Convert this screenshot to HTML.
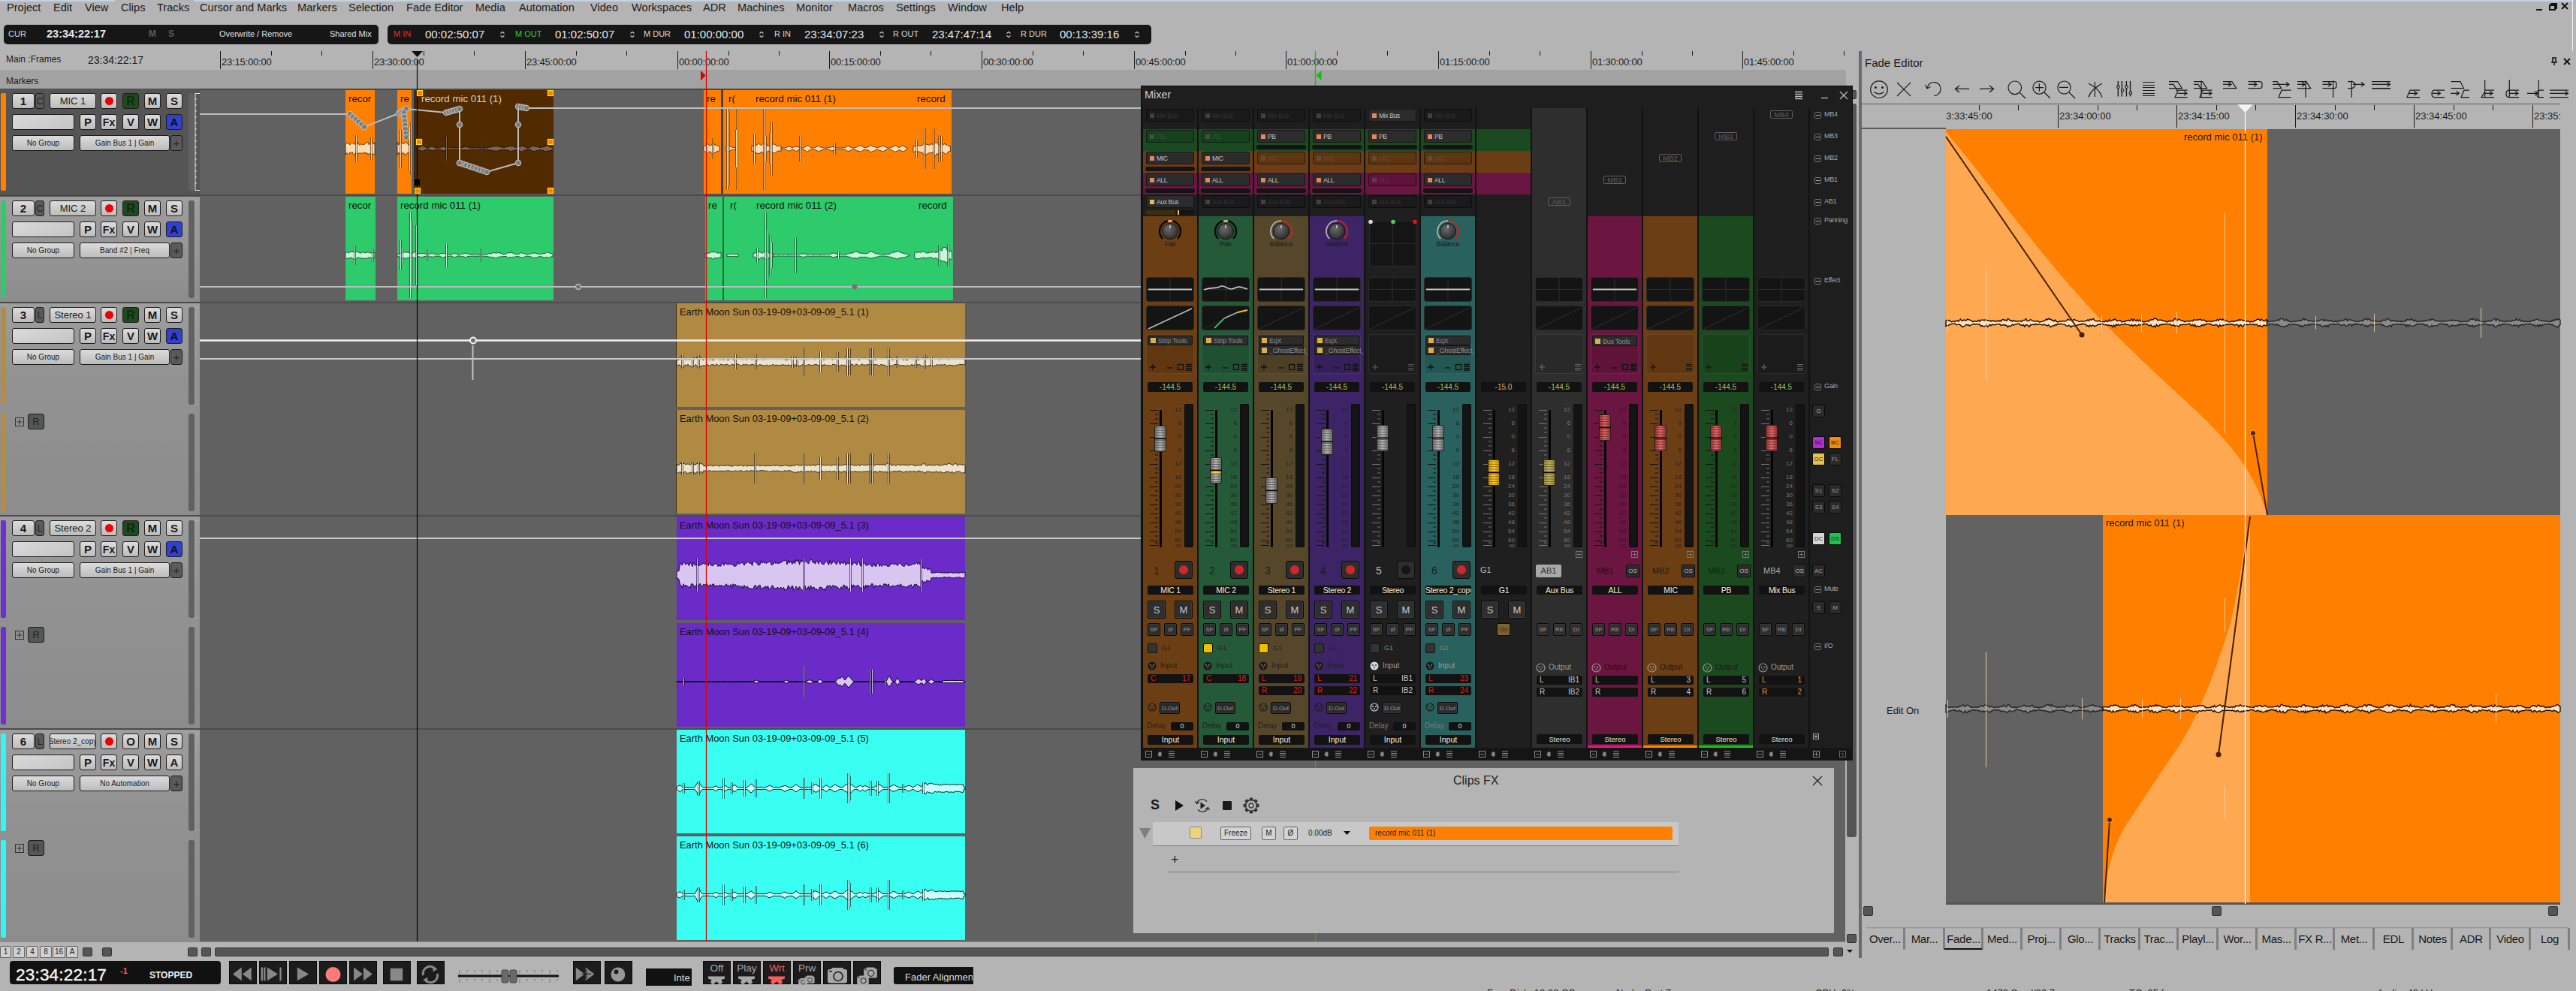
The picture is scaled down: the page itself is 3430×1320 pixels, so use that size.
<!DOCTYPE html><html><head><meta charset="utf-8"><style>
*{margin:0;padding:0;box-sizing:border-box}
html,body{width:3430px;height:1320px;overflow:hidden;background:#b4b4b4;font-family:"Liberation Sans",sans-serif}
#root{position:relative;width:3430px;height:1320px;overflow:hidden;background:#b4b4b4}
.a{position:absolute}
.t{position:absolute;white-space:nowrap;line-height:1}
svg{position:absolute;overflow:visible}
</style></head><body><div id="root"><div class="a " style="left:0px;top:0px;width:3425px;height:2px;background:#c4d2e6"></div>
<div class="a " style="left:3425px;top:0px;width:1px;height:68px;background:#f2f2f2"></div>
<div class="a " style="left:153px;top:0px;width:105px;height:2px;background:#b4b4b4"></div>
<div class="t " style="left:9px;top:3px;font-size:14.6px;color:#1a1a1a">Project</div>
<div class="t " style="left:71px;top:3px;font-size:14.6px;color:#1a1a1a">Edit</div>
<div class="t " style="left:113px;top:3px;font-size:14.6px;color:#1a1a1a">View</div>
<div class="t " style="left:161px;top:3px;font-size:14.6px;color:#1a1a1a">Clips</div>
<div class="t " style="left:209px;top:3px;font-size:14.6px;color:#1a1a1a">Tracks</div>
<div class="t " style="left:266px;top:3px;font-size:14.6px;color:#1a1a1a">Cursor and Marks</div>
<div class="t " style="left:396px;top:3px;font-size:14.6px;color:#1a1a1a">Markers</div>
<div class="t " style="left:464px;top:3px;font-size:14.6px;color:#1a1a1a">Selection</div>
<div class="t " style="left:541px;top:3px;font-size:14.6px;color:#1a1a1a">Fade Editor</div>
<div class="t " style="left:633px;top:3px;font-size:14.6px;color:#1a1a1a">Media</div>
<div class="t " style="left:691px;top:3px;font-size:14.6px;color:#1a1a1a">Automation</div>
<div class="t " style="left:786px;top:3px;font-size:14.6px;color:#1a1a1a">Video</div>
<div class="t " style="left:841px;top:3px;font-size:14.6px;color:#1a1a1a">Workspaces</div>
<div class="t " style="left:936px;top:3px;font-size:14.6px;color:#1a1a1a">ADR</div>
<div class="t " style="left:982px;top:3px;font-size:14.6px;color:#1a1a1a">Machines</div>
<div class="t " style="left:1060px;top:3px;font-size:14.6px;color:#1a1a1a">Monitor</div>
<div class="t " style="left:1129px;top:3px;font-size:14.6px;color:#1a1a1a">Macros</div>
<div class="t " style="left:1193px;top:3px;font-size:14.6px;color:#1a1a1a">Settings</div>
<div class="t " style="left:1262px;top:3px;font-size:14.6px;color:#1a1a1a">Window</div>
<div class="t " style="left:1333px;top:3px;font-size:14.6px;color:#1a1a1a">Help</div>
<svg style="left:3371px;top:0px" width="60" height="20"><g stroke="#111" stroke-width="2" fill="none"><line x1="6" y1="13" x2="14" y2="13"/><rect x="24" y="7" width="7" height="6"/><path d="M26 7 V5 H33 V11 H31"/><path d="M40 4 L48 12 M48 4 L40 12"/></g></svg>
<div class="a " style="left:5px;top:33px;width:499px;height:26px;background:#161616;border-radius:5px"></div>
<div class="t " style="left:11px;top:40px;font-size:11px;color:#d8d8d8">CUR</div>
<div class="t " style="left:62px;top:38px;font-size:14.5px;font-weight:bold;color:#e8e8e8">23:34:22:17</div>
<div class="t " style="left:198px;top:39px;font-size:12px;font-weight:bold;color:#5a5a5a">M</div>
<div class="t " style="left:224px;top:39px;font-size:12px;font-weight:bold;color:#5a5a5a">S</div>
<div class="t " style="left:292px;top:40px;font-size:11px;color:#e0e0e0">Overwrite / Remove</div>
<div class="t " style="left:439px;top:40px;font-size:11px;color:#e0e0e0">Shared Mix</div>
<div class="a " style="left:516px;top:33px;width:1017px;height:26px;background:#161616;border-radius:5px"></div>
<div class="t " style="left:524px;top:40px;font-size:11px;color:#e03030">M IN</div>
<div class="t " style="left:566px;top:38px;font-size:15px;color:#e8e8e8">00:02:50:07</div>
<svg style="left:665px;top:41px" width="8" height="10"><path d="M1.5 3.5 L4 1.5 L6.5 3.5 M1.5 6.5 L4 8.5 L6.5 6.5" stroke="#cfcfcf" stroke-width="1.1" fill="none"/></svg>
<div class="t " style="left:686px;top:40px;font-size:11px;color:#30d030">M OUT</div>
<div class="t " style="left:739px;top:38px;font-size:15px;color:#e8e8e8">01:02:50:07</div>
<svg style="left:838px;top:41px" width="8" height="10"><path d="M1.5 3.5 L4 1.5 L6.5 3.5 M1.5 6.5 L4 8.5 L6.5 6.5" stroke="#cfcfcf" stroke-width="1.1" fill="none"/></svg>
<div class="t " style="left:857px;top:40px;font-size:11px;color:#d8d8d8">M DUR</div>
<div class="t " style="left:911px;top:38px;font-size:15px;color:#e8e8e8">01:00:00:00</div>
<svg style="left:1010px;top:41px" width="8" height="10"><path d="M1.5 3.5 L4 1.5 L6.5 3.5 M1.5 6.5 L4 8.5 L6.5 6.5" stroke="#cfcfcf" stroke-width="1.1" fill="none"/></svg>
<div class="t " style="left:1031px;top:40px;font-size:11px;color:#d8d8d8">R IN</div>
<div class="t " style="left:1071px;top:38px;font-size:15px;color:#e8e8e8">23:34:07:23</div>
<svg style="left:1170px;top:41px" width="8" height="10"><path d="M1.5 3.5 L4 1.5 L6.5 3.5 M1.5 6.5 L4 8.5 L6.5 6.5" stroke="#cfcfcf" stroke-width="1.1" fill="none"/></svg>
<div class="t " style="left:1189px;top:40px;font-size:11px;color:#d8d8d8">R OUT</div>
<div class="t " style="left:1241px;top:38px;font-size:15px;color:#e8e8e8">23:47:47:14</div>
<svg style="left:1339px;top:41px" width="8" height="10"><path d="M1.5 3.5 L4 1.5 L6.5 3.5 M1.5 6.5 L4 8.5 L6.5 6.5" stroke="#cfcfcf" stroke-width="1.1" fill="none"/></svg>
<div class="t " style="left:1359px;top:40px;font-size:11px;color:#d8d8d8">R DUR</div>
<div class="t " style="left:1411px;top:38px;font-size:15px;color:#e8e8e8">00:13:39:16</div>
<svg style="left:1510px;top:41px" width="8" height="10"><path d="M1.5 3.5 L4 1.5 L6.5 3.5 M1.5 6.5 L4 8.5 L6.5 6.5" stroke="#cfcfcf" stroke-width="1.1" fill="none"/></svg>
<div class="t " style="left:8px;top:73px;font-size:12px;color:#1a1a1a">Main :Frames</div>
<div class="t " style="left:117px;top:73px;font-size:14px;color:#1a1a1a">23:34:22:17</div>
<div class="t " style="left:295px;top:76px;font-size:13px;color:#1a1a1a;letter-spacing:-0.2px">23:15:00:00</div>
<div class="t " style="left:498px;top:76px;font-size:13px;color:#1a1a1a;letter-spacing:-0.2px">23:30:00:00</div>
<div class="t " style="left:701px;top:76px;font-size:13px;color:#1a1a1a;letter-spacing:-0.2px">23:45:00:00</div>
<div class="t " style="left:904px;top:76px;font-size:13px;color:#1a1a1a;letter-spacing:-0.2px">00:00:00:00</div>
<div class="t " style="left:1106px;top:76px;font-size:13px;color:#1a1a1a;letter-spacing:-0.2px">00:15:00:00</div>
<div class="t " style="left:1309px;top:76px;font-size:13px;color:#1a1a1a;letter-spacing:-0.2px">00:30:00:00</div>
<div class="t " style="left:1512px;top:76px;font-size:13px;color:#1a1a1a;letter-spacing:-0.2px">00:45:00:00</div>
<div class="t " style="left:1714px;top:76px;font-size:13px;color:#1a1a1a;letter-spacing:-0.2px">01:00:00:00</div>
<div class="t " style="left:1917px;top:76px;font-size:13px;color:#1a1a1a;letter-spacing:-0.2px">01:15:00:00</div>
<div class="t " style="left:2120px;top:76px;font-size:13px;color:#1a1a1a;letter-spacing:-0.2px">01:30:00:00</div>
<div class="t " style="left:2322px;top:76px;font-size:13px;color:#1a1a1a;letter-spacing:-0.2px">01:45:00:00</div>
<svg style="left:0;top:0" width="2470" height="120"><line x1="293.5" y1="68" x2="293.5" y2="92" stroke="#1a1a1a" stroke-width="1"/><line x1="361.5" y1="68" x2="361.5" y2="74" stroke="#1a1a1a" stroke-width="1"/><line x1="428.5" y1="68" x2="428.5" y2="74" stroke="#1a1a1a" stroke-width="1"/><line x1="496.5" y1="68" x2="496.5" y2="92" stroke="#1a1a1a" stroke-width="1"/><line x1="564.5" y1="68" x2="564.5" y2="74" stroke="#1a1a1a" stroke-width="1"/><line x1="631.5" y1="68" x2="631.5" y2="74" stroke="#1a1a1a" stroke-width="1"/><line x1="699.5" y1="68" x2="699.5" y2="92" stroke="#1a1a1a" stroke-width="1"/><line x1="767.5" y1="68" x2="767.5" y2="74" stroke="#1a1a1a" stroke-width="1"/><line x1="834.5" y1="68" x2="834.5" y2="74" stroke="#1a1a1a" stroke-width="1"/><line x1="902.5" y1="68" x2="902.5" y2="92" stroke="#1a1a1a" stroke-width="1"/><line x1="970.5" y1="68" x2="970.5" y2="74" stroke="#1a1a1a" stroke-width="1"/><line x1="1037.5" y1="68" x2="1037.5" y2="74" stroke="#1a1a1a" stroke-width="1"/><line x1="1104.5" y1="68" x2="1104.5" y2="92" stroke="#1a1a1a" stroke-width="1"/><line x1="1172.5" y1="68" x2="1172.5" y2="74" stroke="#1a1a1a" stroke-width="1"/><line x1="1239.5" y1="68" x2="1239.5" y2="74" stroke="#1a1a1a" stroke-width="1"/><line x1="1307.5" y1="68" x2="1307.5" y2="92" stroke="#1a1a1a" stroke-width="1"/><line x1="1375.5" y1="68" x2="1375.5" y2="74" stroke="#1a1a1a" stroke-width="1"/><line x1="1442.5" y1="68" x2="1442.5" y2="74" stroke="#1a1a1a" stroke-width="1"/><line x1="1510.5" y1="68" x2="1510.5" y2="92" stroke="#1a1a1a" stroke-width="1"/><line x1="1578.5" y1="68" x2="1578.5" y2="74" stroke="#1a1a1a" stroke-width="1"/><line x1="1645.5" y1="68" x2="1645.5" y2="74" stroke="#1a1a1a" stroke-width="1"/><line x1="1712.5" y1="68" x2="1712.5" y2="92" stroke="#1a1a1a" stroke-width="1"/><line x1="1780.5" y1="68" x2="1780.5" y2="74" stroke="#1a1a1a" stroke-width="1"/><line x1="1847.5" y1="68" x2="1847.5" y2="74" stroke="#1a1a1a" stroke-width="1"/><line x1="1915.5" y1="68" x2="1915.5" y2="92" stroke="#1a1a1a" stroke-width="1"/><line x1="1983.5" y1="68" x2="1983.5" y2="74" stroke="#1a1a1a" stroke-width="1"/><line x1="2050.5" y1="68" x2="2050.5" y2="74" stroke="#1a1a1a" stroke-width="1"/><line x1="2118.5" y1="68" x2="2118.5" y2="92" stroke="#1a1a1a" stroke-width="1"/><line x1="2186.5" y1="68" x2="2186.5" y2="74" stroke="#1a1a1a" stroke-width="1"/><line x1="2253.5" y1="68" x2="2253.5" y2="74" stroke="#1a1a1a" stroke-width="1"/><line x1="2320.5" y1="68" x2="2320.5" y2="92" stroke="#1a1a1a" stroke-width="1"/><line x1="2388.5" y1="68" x2="2388.5" y2="74" stroke="#1a1a1a" stroke-width="1"/><line x1="2455.5" y1="68" x2="2455.5" y2="74" stroke="#1a1a1a" stroke-width="1"/></svg>
<div class="a " style="left:0px;top:93px;width:2458px;height:25px;background:#a2a2a2"></div>
<div class="t " style="left:8px;top:102px;font-size:12px;color:#1a1a1a">Markers</div>
<svg style="left:547px;top:67px" width="18" height="12"><path d="M1 1 H16 L8.5 9 Z" fill="#111"/></svg>
<svg style="left:930px;top:90px" width="12" height="20"><path d="M3 4 L9.5 10.5 L3 17.5 Z" fill="#d80000"/></svg>
<svg style="left:1750px;top:90px" width="12" height="20"><path d="M9.5 4 L2.5 10.5 L9.5 17 Z" fill="#00c800"/></svg>
<div class="a " style="left:0px;top:118px;width:266px;height:1136px;background:#4e4e4e"></div>
<div class="a " style="left:0px;top:119px;width:266px;height:140px;background:#555555"></div>
<div class="a " style="left:1px;top:124px;width:7px;height:130px;background:#ff8000;border-radius:2px"></div>
<div class="a " style="left:251px;top:124px;width:8px;height:130px;background:#616161;border-radius:3px"></div>
<div class="a" style="left:16px;top:124px;width:30px;height:21px;background:linear-gradient(#dcdcdc,#bcbcbc);border:1.5px solid #1e1e1e;border-radius:3px;;display:flex;align-items:center;justify-content:center;font-size:15px;font-weight:bold;color:#1a1a1a;white-space:nowrap;overflow:hidden">1</div>
<div class="a" style="left:47px;top:124px;width:12px;height:21px;background:#5a5a5a;border:1.5px solid #1e1e1e;border-radius:3px;font-size:12px;color:#222;display:flex;align-items:center;justify-content:center">C</div>
<div class="a" style="left:66px;top:124px;width:62px;height:21px;background:linear-gradient(#dcdcdc,#bcbcbc);border:1.5px solid #1e1e1e;border-radius:3px;;display:flex;align-items:center;justify-content:center;font-size:13px;font-weight:normal;color:#1a1a1a;white-space:nowrap;overflow:hidden">MIC 1</div>
<div class="a" style="left:134px;top:124px;width:22px;height:21px;background:linear-gradient(#dcdcdc,#bcbcbc);border:1.5px solid #1e1e1e;border-radius:3px;;display:flex;align-items:center;justify-content:center;font-size:13px;font-weight:normal;color:#1a1a1a;white-space:nowrap;overflow:hidden"><div style="width:11px;height:11px;border-radius:50%;background:#f00000"></div></div>
<div class="a" style="left:163px;top:124px;width:22px;height:21px;background:#1e4a1e;border:1.5px solid #1e1e1e;border-radius:3px;font-size:16px;font-weight:bold;color:#0f2a0f;display:flex;align-items:center;justify-content:center">R</div>
<div class="a" style="left:192px;top:124px;width:22px;height:21px;background:linear-gradient(#dcdcdc,#bcbcbc);border:1.5px solid #1e1e1e;border-radius:3px;;display:flex;align-items:center;justify-content:center;font-size:15px;font-weight:bold;color:#1a1a1a;white-space:nowrap;overflow:hidden">M</div>
<div class="a" style="left:221px;top:124px;width:22px;height:21px;background:linear-gradient(#dcdcdc,#bcbcbc);border:1.5px solid #1e1e1e;border-radius:3px;;display:flex;align-items:center;justify-content:center;font-size:15px;font-weight:bold;color:#1a1a1a;white-space:nowrap;overflow:hidden">S</div>
<div class="a" style="left:16px;top:152px;width:83px;height:21px;background:linear-gradient(#dcdcdc,#bcbcbc);border:1.5px solid #1e1e1e;border-radius:3px;background:linear-gradient(160deg,#dadada,#c4c4c4);display:flex;align-items:center;justify-content:center;font-size:13px;font-weight:normal;color:#1a1a1a;white-space:nowrap;overflow:hidden"></div>
<div class="a" style="left:106px;top:152px;width:22px;height:21px;background:linear-gradient(#dcdcdc,#bcbcbc);border:1.5px solid #1e1e1e;border-radius:3px;;display:flex;align-items:center;justify-content:center;font-size:15px;font-weight:bold;color:#1a1a1a;white-space:nowrap;overflow:hidden">P</div>
<div class="a" style="left:134px;top:152px;width:22px;height:21px;background:linear-gradient(#dcdcdc,#bcbcbc);border:1.5px solid #1e1e1e;border-radius:3px;;display:flex;align-items:center;justify-content:center;font-size:14px;font-weight:bold;color:#1a1a1a;white-space:nowrap;overflow:hidden">Fx</div>
<div class="a" style="left:163px;top:152px;width:22px;height:21px;background:linear-gradient(#dcdcdc,#bcbcbc);border:1.5px solid #1e1e1e;border-radius:3px;;display:flex;align-items:center;justify-content:center;font-size:15px;font-weight:bold;color:#1a1a1a;white-space:nowrap;overflow:hidden">V</div>
<div class="a" style="left:192px;top:152px;width:22px;height:21px;background:linear-gradient(#dcdcdc,#bcbcbc);border:1.5px solid #1e1e1e;border-radius:3px;;display:flex;align-items:center;justify-content:center;font-size:15px;font-weight:bold;color:#1a1a1a;white-space:nowrap;overflow:hidden">W</div>
<div class="a" style="left:221px;top:152px;width:22px;height:21px;background:#3040d0;border:1.5px solid #1e1e1e;border-radius:3px;font-size:15px;font-weight:bold;color:#111;display:flex;align-items:center;justify-content:center">A</div>
<div class="a" style="left:16px;top:180px;width:83px;height:21px;background:linear-gradient(#dcdcdc,#bcbcbc);border:1.5px solid #1e1e1e;border-radius:3px;;display:flex;align-items:center;justify-content:center;font-size:10px;font-weight:normal;color:#1a1a1a;white-space:nowrap;overflow:hidden">No Group</div>
<div class="a" style="left:106px;top:180px;width:120px;height:21px;background:linear-gradient(#dcdcdc,#bcbcbc);border:1.5px solid #1e1e1e;border-radius:3px;;display:flex;align-items:center;justify-content:center;font-size:10px;font-weight:normal;color:#1a1a1a;white-space:nowrap;overflow:hidden">Gain Bus 1 | Gain</div>
<div class="a" style="left:227px;top:180px;width:16px;height:21px;background:#5a5a5a;border:1.5px solid #1e1e1e;border-radius:3px;font-size:15px;color:#222;display:flex;align-items:center;justify-content:center">+</div>
<div class="a " style="left:0px;top:259px;width:266px;height:2px;background:#4a4a4a"></div>
<div class="a " style="left:0px;top:262px;width:266px;height:140px;background:linear-gradient(#9e9e9e 0px,#929292 100px,#8c8c8c 100%)"></div>
<div class="a " style="left:1px;top:267px;width:7px;height:130px;background:#2ecb6a;border-radius:2px"></div>
<div class="a " style="left:251px;top:267px;width:8px;height:130px;background:#616161;border-radius:3px"></div>
<div class="a" style="left:16px;top:267px;width:30px;height:21px;background:linear-gradient(#dcdcdc,#bcbcbc);border:1.5px solid #1e1e1e;border-radius:3px;;display:flex;align-items:center;justify-content:center;font-size:15px;font-weight:bold;color:#1a1a1a;white-space:nowrap;overflow:hidden">2</div>
<div class="a" style="left:47px;top:267px;width:12px;height:21px;background:#5a5a5a;border:1.5px solid #1e1e1e;border-radius:3px;font-size:12px;color:#222;display:flex;align-items:center;justify-content:center">C</div>
<div class="a" style="left:66px;top:267px;width:62px;height:21px;background:linear-gradient(#dcdcdc,#bcbcbc);border:1.5px solid #1e1e1e;border-radius:3px;;display:flex;align-items:center;justify-content:center;font-size:13px;font-weight:normal;color:#1a1a1a;white-space:nowrap;overflow:hidden">MIC 2</div>
<div class="a" style="left:134px;top:267px;width:22px;height:21px;background:linear-gradient(#dcdcdc,#bcbcbc);border:1.5px solid #1e1e1e;border-radius:3px;;display:flex;align-items:center;justify-content:center;font-size:13px;font-weight:normal;color:#1a1a1a;white-space:nowrap;overflow:hidden"><div style="width:11px;height:11px;border-radius:50%;background:#f00000"></div></div>
<div class="a" style="left:163px;top:267px;width:22px;height:21px;background:#1e4a1e;border:1.5px solid #1e1e1e;border-radius:3px;font-size:16px;font-weight:bold;color:#0f2a0f;display:flex;align-items:center;justify-content:center">R</div>
<div class="a" style="left:192px;top:267px;width:22px;height:21px;background:linear-gradient(#dcdcdc,#bcbcbc);border:1.5px solid #1e1e1e;border-radius:3px;;display:flex;align-items:center;justify-content:center;font-size:15px;font-weight:bold;color:#1a1a1a;white-space:nowrap;overflow:hidden">M</div>
<div class="a" style="left:221px;top:267px;width:22px;height:21px;background:linear-gradient(#dcdcdc,#bcbcbc);border:1.5px solid #1e1e1e;border-radius:3px;;display:flex;align-items:center;justify-content:center;font-size:15px;font-weight:bold;color:#1a1a1a;white-space:nowrap;overflow:hidden">S</div>
<div class="a" style="left:16px;top:295px;width:83px;height:21px;background:linear-gradient(#dcdcdc,#bcbcbc);border:1.5px solid #1e1e1e;border-radius:3px;background:linear-gradient(160deg,#dadada,#c4c4c4);display:flex;align-items:center;justify-content:center;font-size:13px;font-weight:normal;color:#1a1a1a;white-space:nowrap;overflow:hidden"></div>
<div class="a" style="left:106px;top:295px;width:22px;height:21px;background:linear-gradient(#dcdcdc,#bcbcbc);border:1.5px solid #1e1e1e;border-radius:3px;;display:flex;align-items:center;justify-content:center;font-size:15px;font-weight:bold;color:#1a1a1a;white-space:nowrap;overflow:hidden">P</div>
<div class="a" style="left:134px;top:295px;width:22px;height:21px;background:linear-gradient(#dcdcdc,#bcbcbc);border:1.5px solid #1e1e1e;border-radius:3px;;display:flex;align-items:center;justify-content:center;font-size:14px;font-weight:bold;color:#1a1a1a;white-space:nowrap;overflow:hidden">Fx</div>
<div class="a" style="left:163px;top:295px;width:22px;height:21px;background:linear-gradient(#dcdcdc,#bcbcbc);border:1.5px solid #1e1e1e;border-radius:3px;;display:flex;align-items:center;justify-content:center;font-size:15px;font-weight:bold;color:#1a1a1a;white-space:nowrap;overflow:hidden">V</div>
<div class="a" style="left:192px;top:295px;width:22px;height:21px;background:linear-gradient(#dcdcdc,#bcbcbc);border:1.5px solid #1e1e1e;border-radius:3px;;display:flex;align-items:center;justify-content:center;font-size:15px;font-weight:bold;color:#1a1a1a;white-space:nowrap;overflow:hidden">W</div>
<div class="a" style="left:221px;top:295px;width:22px;height:21px;background:#3040d0;border:1.5px solid #1e1e1e;border-radius:3px;font-size:15px;font-weight:bold;color:#111;display:flex;align-items:center;justify-content:center">A</div>
<div class="a" style="left:16px;top:323px;width:83px;height:21px;background:linear-gradient(#dcdcdc,#bcbcbc);border:1.5px solid #1e1e1e;border-radius:3px;;display:flex;align-items:center;justify-content:center;font-size:10px;font-weight:normal;color:#1a1a1a;white-space:nowrap;overflow:hidden">No Group</div>
<div class="a" style="left:106px;top:323px;width:120px;height:21px;background:linear-gradient(#dcdcdc,#bcbcbc);border:1.5px solid #1e1e1e;border-radius:3px;;display:flex;align-items:center;justify-content:center;font-size:10px;font-weight:normal;color:#1a1a1a;white-space:nowrap;overflow:hidden">Band #2 | Freq</div>
<div class="a" style="left:227px;top:323px;width:16px;height:21px;background:#5a5a5a;border:1.5px solid #1e1e1e;border-radius:3px;font-size:15px;color:#222;display:flex;align-items:center;justify-content:center">+</div>
<div class="a " style="left:0px;top:402px;width:266px;height:2px;background:#4a4a4a"></div>
<div class="a " style="left:0px;top:404px;width:266px;height:282px;background:linear-gradient(#9e9e9e 0px,#929292 100px,#8c8c8c 100%)"></div>
<div class="a " style="left:1px;top:409px;width:7px;height:130px;background:#b58c45;border-radius:2px"></div>
<div class="a " style="left:251px;top:409px;width:8px;height:130px;background:#616161;border-radius:3px"></div>
<div class="a " style="left:1px;top:551px;width:7px;height:130px;background:#b58c45;border-radius:2px"></div>
<div class="a " style="left:251px;top:551px;width:8px;height:130px;background:#616161;border-radius:3px"></div>
<div class="a" style="left:16px;top:409px;width:30px;height:21px;background:linear-gradient(#dcdcdc,#bcbcbc);border:1.5px solid #1e1e1e;border-radius:3px;;display:flex;align-items:center;justify-content:center;font-size:15px;font-weight:bold;color:#1a1a1a;white-space:nowrap;overflow:hidden">3</div>
<div class="a" style="left:47px;top:409px;width:12px;height:21px;background:#5a5a5a;border:1.5px solid #1e1e1e;border-radius:3px;font-size:12px;color:#222;display:flex;align-items:center;justify-content:center">L</div>
<div class="a" style="left:66px;top:409px;width:62px;height:21px;background:linear-gradient(#dcdcdc,#bcbcbc);border:1.5px solid #1e1e1e;border-radius:3px;;display:flex;align-items:center;justify-content:center;font-size:13px;font-weight:normal;color:#1a1a1a;white-space:nowrap;overflow:hidden">Stereo 1</div>
<div class="a" style="left:134px;top:409px;width:22px;height:21px;background:linear-gradient(#dcdcdc,#bcbcbc);border:1.5px solid #1e1e1e;border-radius:3px;;display:flex;align-items:center;justify-content:center;font-size:13px;font-weight:normal;color:#1a1a1a;white-space:nowrap;overflow:hidden"><div style="width:11px;height:11px;border-radius:50%;background:#f00000"></div></div>
<div class="a" style="left:163px;top:409px;width:22px;height:21px;background:#1e4a1e;border:1.5px solid #1e1e1e;border-radius:3px;font-size:16px;font-weight:bold;color:#0f2a0f;display:flex;align-items:center;justify-content:center">R</div>
<div class="a" style="left:192px;top:409px;width:22px;height:21px;background:linear-gradient(#dcdcdc,#bcbcbc);border:1.5px solid #1e1e1e;border-radius:3px;;display:flex;align-items:center;justify-content:center;font-size:15px;font-weight:bold;color:#1a1a1a;white-space:nowrap;overflow:hidden">M</div>
<div class="a" style="left:221px;top:409px;width:22px;height:21px;background:linear-gradient(#dcdcdc,#bcbcbc);border:1.5px solid #1e1e1e;border-radius:3px;;display:flex;align-items:center;justify-content:center;font-size:15px;font-weight:bold;color:#1a1a1a;white-space:nowrap;overflow:hidden">S</div>
<div class="a" style="left:16px;top:437px;width:83px;height:21px;background:linear-gradient(#dcdcdc,#bcbcbc);border:1.5px solid #1e1e1e;border-radius:3px;background:linear-gradient(160deg,#dadada,#c4c4c4);display:flex;align-items:center;justify-content:center;font-size:13px;font-weight:normal;color:#1a1a1a;white-space:nowrap;overflow:hidden"></div>
<div class="a" style="left:106px;top:437px;width:22px;height:21px;background:linear-gradient(#dcdcdc,#bcbcbc);border:1.5px solid #1e1e1e;border-radius:3px;;display:flex;align-items:center;justify-content:center;font-size:15px;font-weight:bold;color:#1a1a1a;white-space:nowrap;overflow:hidden">P</div>
<div class="a" style="left:134px;top:437px;width:22px;height:21px;background:linear-gradient(#dcdcdc,#bcbcbc);border:1.5px solid #1e1e1e;border-radius:3px;;display:flex;align-items:center;justify-content:center;font-size:14px;font-weight:bold;color:#1a1a1a;white-space:nowrap;overflow:hidden">Fx</div>
<div class="a" style="left:163px;top:437px;width:22px;height:21px;background:linear-gradient(#dcdcdc,#bcbcbc);border:1.5px solid #1e1e1e;border-radius:3px;;display:flex;align-items:center;justify-content:center;font-size:15px;font-weight:bold;color:#1a1a1a;white-space:nowrap;overflow:hidden">V</div>
<div class="a" style="left:192px;top:437px;width:22px;height:21px;background:linear-gradient(#dcdcdc,#bcbcbc);border:1.5px solid #1e1e1e;border-radius:3px;;display:flex;align-items:center;justify-content:center;font-size:15px;font-weight:bold;color:#1a1a1a;white-space:nowrap;overflow:hidden">W</div>
<div class="a" style="left:221px;top:437px;width:22px;height:21px;background:#3040d0;border:1.5px solid #1e1e1e;border-radius:3px;font-size:15px;font-weight:bold;color:#111;display:flex;align-items:center;justify-content:center">A</div>
<div class="a" style="left:16px;top:465px;width:83px;height:21px;background:linear-gradient(#dcdcdc,#bcbcbc);border:1.5px solid #1e1e1e;border-radius:3px;;display:flex;align-items:center;justify-content:center;font-size:10px;font-weight:normal;color:#1a1a1a;white-space:nowrap;overflow:hidden">No Group</div>
<div class="a" style="left:106px;top:465px;width:120px;height:21px;background:linear-gradient(#dcdcdc,#bcbcbc);border:1.5px solid #1e1e1e;border-radius:3px;;display:flex;align-items:center;justify-content:center;font-size:10px;font-weight:normal;color:#1a1a1a;white-space:nowrap;overflow:hidden">Gain Bus 1 | Gain</div>
<div class="a" style="left:227px;top:465px;width:16px;height:21px;background:#5a5a5a;border:1.5px solid #1e1e1e;border-radius:3px;font-size:15px;color:#222;display:flex;align-items:center;justify-content:center">+</div>
<svg style="left:20px;top:556px" width="12" height="12"><rect x="0.5" y="0.5" width="11" height="11" fill="none" stroke="#333"/><path d="M6 2.5 V9.5 M2.5 6 H9.5" stroke="#333"/></svg>
<div class="a" style="left:37px;top:551px;width:22px;height:21px;background:#555;border:1.5px solid #1e1e1e;border-radius:3px;font-size:13px;color:#222;display:flex;align-items:center;justify-content:center">R</div>
<div class="a " style="left:0px;top:686px;width:266px;height:2px;background:#4a4a4a"></div>
<div class="a " style="left:0px;top:688px;width:266px;height:282px;background:linear-gradient(#9e9e9e 0px,#929292 100px,#8c8c8c 100%)"></div>
<div class="a " style="left:1px;top:693px;width:7px;height:130px;background:#7030d0;border-radius:2px"></div>
<div class="a " style="left:251px;top:693px;width:8px;height:130px;background:#616161;border-radius:3px"></div>
<div class="a " style="left:1px;top:835px;width:7px;height:130px;background:#7030d0;border-radius:2px"></div>
<div class="a " style="left:251px;top:835px;width:8px;height:130px;background:#616161;border-radius:3px"></div>
<div class="a" style="left:16px;top:693px;width:30px;height:21px;background:linear-gradient(#dcdcdc,#bcbcbc);border:1.5px solid #1e1e1e;border-radius:3px;;display:flex;align-items:center;justify-content:center;font-size:15px;font-weight:bold;color:#1a1a1a;white-space:nowrap;overflow:hidden">4</div>
<div class="a" style="left:47px;top:693px;width:12px;height:21px;background:#5a5a5a;border:1.5px solid #1e1e1e;border-radius:3px;font-size:12px;color:#222;display:flex;align-items:center;justify-content:center">L</div>
<div class="a" style="left:66px;top:693px;width:62px;height:21px;background:linear-gradient(#dcdcdc,#bcbcbc);border:1.5px solid #1e1e1e;border-radius:3px;;display:flex;align-items:center;justify-content:center;font-size:13px;font-weight:normal;color:#1a1a1a;white-space:nowrap;overflow:hidden">Stereo 2</div>
<div class="a" style="left:134px;top:693px;width:22px;height:21px;background:linear-gradient(#dcdcdc,#bcbcbc);border:1.5px solid #1e1e1e;border-radius:3px;;display:flex;align-items:center;justify-content:center;font-size:13px;font-weight:normal;color:#1a1a1a;white-space:nowrap;overflow:hidden"><div style="width:11px;height:11px;border-radius:50%;background:#f00000"></div></div>
<div class="a" style="left:163px;top:693px;width:22px;height:21px;background:#1e4a1e;border:1.5px solid #1e1e1e;border-radius:3px;font-size:16px;font-weight:bold;color:#0f2a0f;display:flex;align-items:center;justify-content:center">R</div>
<div class="a" style="left:192px;top:693px;width:22px;height:21px;background:linear-gradient(#dcdcdc,#bcbcbc);border:1.5px solid #1e1e1e;border-radius:3px;;display:flex;align-items:center;justify-content:center;font-size:15px;font-weight:bold;color:#1a1a1a;white-space:nowrap;overflow:hidden">M</div>
<div class="a" style="left:221px;top:693px;width:22px;height:21px;background:linear-gradient(#dcdcdc,#bcbcbc);border:1.5px solid #1e1e1e;border-radius:3px;;display:flex;align-items:center;justify-content:center;font-size:15px;font-weight:bold;color:#1a1a1a;white-space:nowrap;overflow:hidden">S</div>
<div class="a" style="left:16px;top:721px;width:83px;height:21px;background:linear-gradient(#dcdcdc,#bcbcbc);border:1.5px solid #1e1e1e;border-radius:3px;background:linear-gradient(160deg,#dadada,#c4c4c4);display:flex;align-items:center;justify-content:center;font-size:13px;font-weight:normal;color:#1a1a1a;white-space:nowrap;overflow:hidden"></div>
<div class="a" style="left:106px;top:721px;width:22px;height:21px;background:linear-gradient(#dcdcdc,#bcbcbc);border:1.5px solid #1e1e1e;border-radius:3px;;display:flex;align-items:center;justify-content:center;font-size:15px;font-weight:bold;color:#1a1a1a;white-space:nowrap;overflow:hidden">P</div>
<div class="a" style="left:134px;top:721px;width:22px;height:21px;background:linear-gradient(#dcdcdc,#bcbcbc);border:1.5px solid #1e1e1e;border-radius:3px;;display:flex;align-items:center;justify-content:center;font-size:14px;font-weight:bold;color:#1a1a1a;white-space:nowrap;overflow:hidden">Fx</div>
<div class="a" style="left:163px;top:721px;width:22px;height:21px;background:linear-gradient(#dcdcdc,#bcbcbc);border:1.5px solid #1e1e1e;border-radius:3px;;display:flex;align-items:center;justify-content:center;font-size:15px;font-weight:bold;color:#1a1a1a;white-space:nowrap;overflow:hidden">V</div>
<div class="a" style="left:192px;top:721px;width:22px;height:21px;background:linear-gradient(#dcdcdc,#bcbcbc);border:1.5px solid #1e1e1e;border-radius:3px;;display:flex;align-items:center;justify-content:center;font-size:15px;font-weight:bold;color:#1a1a1a;white-space:nowrap;overflow:hidden">W</div>
<div class="a" style="left:221px;top:721px;width:22px;height:21px;background:#3040d0;border:1.5px solid #1e1e1e;border-radius:3px;font-size:15px;font-weight:bold;color:#111;display:flex;align-items:center;justify-content:center">A</div>
<div class="a" style="left:16px;top:749px;width:83px;height:21px;background:linear-gradient(#dcdcdc,#bcbcbc);border:1.5px solid #1e1e1e;border-radius:3px;;display:flex;align-items:center;justify-content:center;font-size:10px;font-weight:normal;color:#1a1a1a;white-space:nowrap;overflow:hidden">No Group</div>
<div class="a" style="left:106px;top:749px;width:120px;height:21px;background:linear-gradient(#dcdcdc,#bcbcbc);border:1.5px solid #1e1e1e;border-radius:3px;;display:flex;align-items:center;justify-content:center;font-size:10px;font-weight:normal;color:#1a1a1a;white-space:nowrap;overflow:hidden">Gain Bus 1 | Gain</div>
<div class="a" style="left:227px;top:749px;width:16px;height:21px;background:#5a5a5a;border:1.5px solid #1e1e1e;border-radius:3px;font-size:15px;color:#222;display:flex;align-items:center;justify-content:center">+</div>
<svg style="left:20px;top:840px" width="12" height="12"><rect x="0.5" y="0.5" width="11" height="11" fill="none" stroke="#333"/><path d="M6 2.5 V9.5 M2.5 6 H9.5" stroke="#333"/></svg>
<div class="a" style="left:37px;top:835px;width:22px;height:21px;background:#555;border:1.5px solid #1e1e1e;border-radius:3px;font-size:13px;color:#222;display:flex;align-items:center;justify-content:center">R</div>
<div class="a " style="left:0px;top:970px;width:266px;height:2px;background:#4a4a4a"></div>
<div class="a " style="left:0px;top:972px;width:266px;height:282px;background:linear-gradient(#9e9e9e 0px,#929292 100px,#8c8c8c 100%)"></div>
<div class="a " style="left:1px;top:977px;width:7px;height:130px;background:#33f5f5;border-radius:2px"></div>
<div class="a " style="left:251px;top:977px;width:8px;height:130px;background:#616161;border-radius:3px"></div>
<div class="a " style="left:1px;top:1119px;width:7px;height:130px;background:#33f5f5;border-radius:2px"></div>
<div class="a " style="left:251px;top:1119px;width:8px;height:130px;background:#616161;border-radius:3px"></div>
<div class="a" style="left:16px;top:977px;width:30px;height:21px;background:linear-gradient(#dcdcdc,#bcbcbc);border:1.5px solid #1e1e1e;border-radius:3px;;display:flex;align-items:center;justify-content:center;font-size:15px;font-weight:bold;color:#1a1a1a;white-space:nowrap;overflow:hidden">6</div>
<div class="a" style="left:47px;top:977px;width:12px;height:21px;background:#5a5a5a;border:1.5px solid #1e1e1e;border-radius:3px;font-size:12px;color:#222;display:flex;align-items:center;justify-content:center">L</div>
<div class="a" style="left:66px;top:977px;width:62px;height:21px;background:linear-gradient(#dcdcdc,#bcbcbc);border:1.5px solid #1e1e1e;border-radius:3px;;display:flex;align-items:center;justify-content:center;font-size:10px;font-weight:normal;color:#1a1a1a;white-space:nowrap;overflow:hidden">Stereo 2_copy</div>
<div class="a" style="left:134px;top:977px;width:22px;height:21px;background:linear-gradient(#dcdcdc,#bcbcbc);border:1.5px solid #1e1e1e;border-radius:3px;;display:flex;align-items:center;justify-content:center;font-size:13px;font-weight:normal;color:#1a1a1a;white-space:nowrap;overflow:hidden"><div style="width:11px;height:11px;border-radius:50%;background:#f00000"></div></div>
<div class="a" style="left:163px;top:977px;width:22px;height:21px;background:linear-gradient(#dcdcdc,#bcbcbc);border:1.5px solid #1e1e1e;border-radius:3px;;display:flex;align-items:center;justify-content:center;font-size:15px;font-weight:bold;color:#1a1a1a;white-space:nowrap;overflow:hidden">O</div>
<div class="a" style="left:192px;top:977px;width:22px;height:21px;background:linear-gradient(#dcdcdc,#bcbcbc);border:1.5px solid #1e1e1e;border-radius:3px;;display:flex;align-items:center;justify-content:center;font-size:15px;font-weight:bold;color:#1a1a1a;white-space:nowrap;overflow:hidden">M</div>
<div class="a" style="left:221px;top:977px;width:22px;height:21px;background:linear-gradient(#dcdcdc,#bcbcbc);border:1.5px solid #1e1e1e;border-radius:3px;;display:flex;align-items:center;justify-content:center;font-size:15px;font-weight:bold;color:#1a1a1a;white-space:nowrap;overflow:hidden">S</div>
<div class="a" style="left:16px;top:1005px;width:83px;height:21px;background:linear-gradient(#dcdcdc,#bcbcbc);border:1.5px solid #1e1e1e;border-radius:3px;background:linear-gradient(160deg,#dadada,#c4c4c4);display:flex;align-items:center;justify-content:center;font-size:13px;font-weight:normal;color:#1a1a1a;white-space:nowrap;overflow:hidden"></div>
<div class="a" style="left:106px;top:1005px;width:22px;height:21px;background:linear-gradient(#dcdcdc,#bcbcbc);border:1.5px solid #1e1e1e;border-radius:3px;;display:flex;align-items:center;justify-content:center;font-size:15px;font-weight:bold;color:#1a1a1a;white-space:nowrap;overflow:hidden">P</div>
<div class="a" style="left:134px;top:1005px;width:22px;height:21px;background:linear-gradient(#dcdcdc,#bcbcbc);border:1.5px solid #1e1e1e;border-radius:3px;;display:flex;align-items:center;justify-content:center;font-size:14px;font-weight:bold;color:#1a1a1a;white-space:nowrap;overflow:hidden">Fx</div>
<div class="a" style="left:163px;top:1005px;width:22px;height:21px;background:linear-gradient(#dcdcdc,#bcbcbc);border:1.5px solid #1e1e1e;border-radius:3px;;display:flex;align-items:center;justify-content:center;font-size:15px;font-weight:bold;color:#1a1a1a;white-space:nowrap;overflow:hidden">V</div>
<div class="a" style="left:192px;top:1005px;width:22px;height:21px;background:linear-gradient(#dcdcdc,#bcbcbc);border:1.5px solid #1e1e1e;border-radius:3px;;display:flex;align-items:center;justify-content:center;font-size:15px;font-weight:bold;color:#1a1a1a;white-space:nowrap;overflow:hidden">W</div>
<div class="a" style="left:221px;top:1005px;width:22px;height:21px;background:linear-gradient(#dcdcdc,#bcbcbc);border:1.5px solid #1e1e1e;border-radius:3px;;display:flex;align-items:center;justify-content:center;font-size:15px;font-weight:bold;color:#1a1a1a;white-space:nowrap;overflow:hidden">A</div>
<div class="a" style="left:16px;top:1033px;width:83px;height:21px;background:linear-gradient(#dcdcdc,#bcbcbc);border:1.5px solid #1e1e1e;border-radius:3px;;display:flex;align-items:center;justify-content:center;font-size:10px;font-weight:normal;color:#1a1a1a;white-space:nowrap;overflow:hidden">No Group</div>
<div class="a" style="left:106px;top:1033px;width:120px;height:21px;background:linear-gradient(#dcdcdc,#bcbcbc);border:1.5px solid #1e1e1e;border-radius:3px;;display:flex;align-items:center;justify-content:center;font-size:10px;font-weight:normal;color:#1a1a1a;white-space:nowrap;overflow:hidden">No Automation</div>
<div class="a" style="left:227px;top:1033px;width:16px;height:21px;background:#5a5a5a;border:1.5px solid #1e1e1e;border-radius:3px;font-size:15px;color:#222;display:flex;align-items:center;justify-content:center">+</div>
<svg style="left:20px;top:1124px" width="12" height="12"><rect x="0.5" y="0.5" width="11" height="11" fill="none" stroke="#333"/><path d="M6 2.5 V9.5 M2.5 6 H9.5" stroke="#333"/></svg>
<div class="a" style="left:37px;top:1119px;width:22px;height:21px;background:#555;border:1.5px solid #1e1e1e;border-radius:3px;font-size:13px;color:#222;display:flex;align-items:center;justify-content:center">R</div>
<div class="a " style="left:0px;top:1254px;width:266px;height:2px;background:#4a4a4a"></div>
<svg style="left:259px;top:124px" width="8" height="130"><path d="M1 0 V130 M1 0.5 H7 M1 129.5 H7" stroke="#e8e8e8" fill="none"/><line x1="1" y1="8" x2="3" y2="8" stroke="#e8e8e8"/><line x1="1" y1="16" x2="3" y2="16" stroke="#e8e8e8"/><line x1="1" y1="24" x2="3" y2="24" stroke="#e8e8e8"/><line x1="1" y1="32" x2="3" y2="32" stroke="#e8e8e8"/><line x1="1" y1="40" x2="3" y2="40" stroke="#e8e8e8"/><line x1="1" y1="48" x2="3" y2="48" stroke="#e8e8e8"/><line x1="1" y1="56" x2="3" y2="56" stroke="#e8e8e8"/><line x1="1" y1="64" x2="3" y2="64" stroke="#e8e8e8"/><line x1="1" y1="72" x2="3" y2="72" stroke="#e8e8e8"/><line x1="1" y1="80" x2="3" y2="80" stroke="#e8e8e8"/><line x1="1" y1="88" x2="3" y2="88" stroke="#e8e8e8"/><line x1="1" y1="96" x2="3" y2="96" stroke="#e8e8e8"/><line x1="1" y1="104" x2="3" y2="104" stroke="#e8e8e8"/><line x1="1" y1="112" x2="3" y2="112" stroke="#e8e8e8"/><line x1="1" y1="120" x2="3" y2="120" stroke="#e8e8e8"/></svg>
<svg style="left:259px;top:267px" width="8" height="130"><path d="M1 0 V130 M1 0.5 H7 M1 129.5 H7" stroke="rgba(255,255,255,0.12)" fill="none"/><line x1="1" y1="8" x2="3" y2="8" stroke="rgba(255,255,255,0.12)"/><line x1="1" y1="16" x2="3" y2="16" stroke="rgba(255,255,255,0.12)"/><line x1="1" y1="24" x2="3" y2="24" stroke="rgba(255,255,255,0.12)"/><line x1="1" y1="32" x2="3" y2="32" stroke="rgba(255,255,255,0.12)"/><line x1="1" y1="40" x2="3" y2="40" stroke="rgba(255,255,255,0.12)"/><line x1="1" y1="48" x2="3" y2="48" stroke="rgba(255,255,255,0.12)"/><line x1="1" y1="56" x2="3" y2="56" stroke="rgba(255,255,255,0.12)"/><line x1="1" y1="64" x2="3" y2="64" stroke="rgba(255,255,255,0.12)"/><line x1="1" y1="72" x2="3" y2="72" stroke="rgba(255,255,255,0.12)"/><line x1="1" y1="80" x2="3" y2="80" stroke="rgba(255,255,255,0.12)"/><line x1="1" y1="88" x2="3" y2="88" stroke="rgba(255,255,255,0.12)"/><line x1="1" y1="96" x2="3" y2="96" stroke="rgba(255,255,255,0.12)"/><line x1="1" y1="104" x2="3" y2="104" stroke="rgba(255,255,255,0.12)"/><line x1="1" y1="112" x2="3" y2="112" stroke="rgba(255,255,255,0.12)"/><line x1="1" y1="120" x2="3" y2="120" stroke="rgba(255,255,255,0.12)"/></svg>
<svg style="left:259px;top:409px" width="8" height="130"><path d="M1 0 V130 M1 0.5 H7 M1 129.5 H7" stroke="rgba(255,255,255,0.12)" fill="none"/><line x1="1" y1="8" x2="3" y2="8" stroke="rgba(255,255,255,0.12)"/><line x1="1" y1="16" x2="3" y2="16" stroke="rgba(255,255,255,0.12)"/><line x1="1" y1="24" x2="3" y2="24" stroke="rgba(255,255,255,0.12)"/><line x1="1" y1="32" x2="3" y2="32" stroke="rgba(255,255,255,0.12)"/><line x1="1" y1="40" x2="3" y2="40" stroke="rgba(255,255,255,0.12)"/><line x1="1" y1="48" x2="3" y2="48" stroke="rgba(255,255,255,0.12)"/><line x1="1" y1="56" x2="3" y2="56" stroke="rgba(255,255,255,0.12)"/><line x1="1" y1="64" x2="3" y2="64" stroke="rgba(255,255,255,0.12)"/><line x1="1" y1="72" x2="3" y2="72" stroke="rgba(255,255,255,0.12)"/><line x1="1" y1="80" x2="3" y2="80" stroke="rgba(255,255,255,0.12)"/><line x1="1" y1="88" x2="3" y2="88" stroke="rgba(255,255,255,0.12)"/><line x1="1" y1="96" x2="3" y2="96" stroke="rgba(255,255,255,0.12)"/><line x1="1" y1="104" x2="3" y2="104" stroke="rgba(255,255,255,0.12)"/><line x1="1" y1="112" x2="3" y2="112" stroke="rgba(255,255,255,0.12)"/><line x1="1" y1="120" x2="3" y2="120" stroke="rgba(255,255,255,0.12)"/></svg>
<svg style="left:259px;top:693px" width="8" height="130"><path d="M1 0 V130 M1 0.5 H7 M1 129.5 H7" stroke="rgba(255,255,255,0.12)" fill="none"/><line x1="1" y1="8" x2="3" y2="8" stroke="rgba(255,255,255,0.12)"/><line x1="1" y1="16" x2="3" y2="16" stroke="rgba(255,255,255,0.12)"/><line x1="1" y1="24" x2="3" y2="24" stroke="rgba(255,255,255,0.12)"/><line x1="1" y1="32" x2="3" y2="32" stroke="rgba(255,255,255,0.12)"/><line x1="1" y1="40" x2="3" y2="40" stroke="rgba(255,255,255,0.12)"/><line x1="1" y1="48" x2="3" y2="48" stroke="rgba(255,255,255,0.12)"/><line x1="1" y1="56" x2="3" y2="56" stroke="rgba(255,255,255,0.12)"/><line x1="1" y1="64" x2="3" y2="64" stroke="rgba(255,255,255,0.12)"/><line x1="1" y1="72" x2="3" y2="72" stroke="rgba(255,255,255,0.12)"/><line x1="1" y1="80" x2="3" y2="80" stroke="rgba(255,255,255,0.12)"/><line x1="1" y1="88" x2="3" y2="88" stroke="rgba(255,255,255,0.12)"/><line x1="1" y1="96" x2="3" y2="96" stroke="rgba(255,255,255,0.12)"/><line x1="1" y1="104" x2="3" y2="104" stroke="rgba(255,255,255,0.12)"/><line x1="1" y1="112" x2="3" y2="112" stroke="rgba(255,255,255,0.12)"/><line x1="1" y1="120" x2="3" y2="120" stroke="rgba(255,255,255,0.12)"/></svg>
<svg style="left:259px;top:977px" width="8" height="130"><path d="M1 0 V130 M1 0.5 H7 M1 129.5 H7" stroke="rgba(255,255,255,0.12)" fill="none"/><line x1="1" y1="8" x2="3" y2="8" stroke="rgba(255,255,255,0.12)"/><line x1="1" y1="16" x2="3" y2="16" stroke="rgba(255,255,255,0.12)"/><line x1="1" y1="24" x2="3" y2="24" stroke="rgba(255,255,255,0.12)"/><line x1="1" y1="32" x2="3" y2="32" stroke="rgba(255,255,255,0.12)"/><line x1="1" y1="40" x2="3" y2="40" stroke="rgba(255,255,255,0.12)"/><line x1="1" y1="48" x2="3" y2="48" stroke="rgba(255,255,255,0.12)"/><line x1="1" y1="56" x2="3" y2="56" stroke="rgba(255,255,255,0.12)"/><line x1="1" y1="64" x2="3" y2="64" stroke="rgba(255,255,255,0.12)"/><line x1="1" y1="72" x2="3" y2="72" stroke="rgba(255,255,255,0.12)"/><line x1="1" y1="80" x2="3" y2="80" stroke="rgba(255,255,255,0.12)"/><line x1="1" y1="88" x2="3" y2="88" stroke="rgba(255,255,255,0.12)"/><line x1="1" y1="96" x2="3" y2="96" stroke="rgba(255,255,255,0.12)"/><line x1="1" y1="104" x2="3" y2="104" stroke="rgba(255,255,255,0.12)"/><line x1="1" y1="112" x2="3" y2="112" stroke="rgba(255,255,255,0.12)"/><line x1="1" y1="120" x2="3" y2="120" stroke="rgba(255,255,255,0.12)"/></svg>
<div class="a " style="left:266px;top:118px;width:2191px;height:1136px;background:#616161"></div>
<div class="a " style="left:266px;top:259px;width:2191px;height:2px;background:#4c4c4c"></div>
<div class="a " style="left:266px;top:402px;width:2191px;height:2px;background:#4c4c4c"></div>
<div class="a " style="left:266px;top:686px;width:2191px;height:2px;background:#4c4c4c"></div>
<div class="a " style="left:266px;top:970px;width:2191px;height:2px;background:#4c4c4c"></div>
<div class="a " style="left:266px;top:1254px;width:2191px;height:2px;background:#4c4c4c"></div>
<div class="a " style="left:266px;top:118px;width:2191px;height:2px;background:#484848"></div>
<div class="a " style="left:460px;top:120px;width:39px;height:138px;background:#ff8000"></div>
<div class="t" style="left:464px;top:123px;width:33px;overflow:hidden;font-size:13.3px;line-height:18px;color:#111">recor</div>
<div class="a " style="left:529px;top:120px;width:19px;height:138px;background:#ff8000"></div>
<div class="t" style="left:533px;top:123px;width:13px;overflow:hidden;font-size:13.3px;line-height:18px;color:#111">re</div>
<div class="a " style="left:553px;top:120px;width:184px;height:138px;background:#512a00"></div>
<div class="a " style="left:551px;top:120px;width:2px;height:138px;background:#2a2a2a"></div>
<div class="t " style="left:561px;top:125px;font-size:13.3px;color:#d8d0c0">record mic 011 (1)</div>
<div class="a " style="left:937px;top:120px;width:23px;height:138px;background:#ff8000"></div>
<div class="t" style="left:941px;top:123px;width:17px;overflow:hidden;font-size:13.3px;line-height:18px;color:#111">re</div>
<div class="a " style="left:960px;top:120px;width:3px;height:138px;background:#444"></div>
<div class="a " style="left:963px;top:120px;width:304px;height:138px;background:#ff8000"></div>
<div class="t " style="left:1006px;top:125px;font-size:13.3px;color:#111">record mic 011 (1)</div>
<div class="t " style="left:1221px;top:125px;font-size:13.3px;color:#111">record</div>
<div class="t" style="left:970px;top:125px;width:10px;overflow:hidden;font-size:13.3px;color:#111">r(</div>
<div class="a " style="left:460px;top:262px;width:40px;height:138px;background:#2dcb6b"></div>
<div class="t" style="left:464px;top:265px;width:34px;overflow:hidden;font-size:13.3px;line-height:18px;color:#111">recor</div>
<div class="a " style="left:529px;top:262px;width:208px;height:138px;background:#2dcb6b"></div>
<div class="t" style="left:533px;top:265px;width:202px;overflow:hidden;font-size:13.3px;line-height:18px;color:#111">record mic 011 (1)</div>
<div class="a " style="left:939px;top:262px;width:23px;height:138px;background:#2dcb6b"></div>
<div class="t" style="left:943px;top:265px;width:17px;overflow:hidden;font-size:13.3px;line-height:18px;color:#111">re</div>
<div class="a " style="left:962px;top:262px;width:2px;height:138px;background:#1d6d3b"></div>
<div class="a " style="left:964px;top:262px;width:305px;height:138px;background:#2dcb6b"></div>
<div class="t " style="left:1007px;top:267px;font-size:13.3px;color:#111">record mic 011 (2)</div>
<div class="t " style="left:1223px;top:267px;font-size:13.3px;color:#111">record</div>
<div class="t" style="left:972px;top:267px;width:10px;overflow:hidden;font-size:13.3px;color:#111">r(</div>
<div class="a " style="left:901px;top:404px;width:384px;height:138px;background:#b08a42"></div>
<div class="t" style="left:905px;top:407px;width:378px;overflow:hidden;font-size:12.9px;line-height:18px;color:#111">Earth Moon Sun 03-19-09+03-09-09_5.1 (1)</div>
<div class="a " style="left:900px;top:404px;width:1px;height:138px;background:#3a2a10"></div>
<div class="a " style="left:901px;top:546px;width:384px;height:138px;background:#b08a42"></div>
<div class="t" style="left:905px;top:549px;width:378px;overflow:hidden;font-size:12.9px;line-height:18px;color:#111">Earth Moon Sun 03-19-09+03-09-09_5.1 (2)</div>
<div class="a " style="left:900px;top:546px;width:1px;height:138px;background:#3a2a10"></div>
<div class="a " style="left:901px;top:688px;width:384px;height:138px;background:#6a2bc8"></div>
<div class="t" style="left:905px;top:691px;width:378px;overflow:hidden;font-size:12.9px;line-height:18px;color:#111">Earth Moon Sun 03-19-09+03-09-09_5.1 (3)</div>
<div class="a " style="left:900px;top:688px;width:1px;height:138px;#2a1050"></div>
<div class="a " style="left:901px;top:830px;width:384px;height:138px;background:#6a2bc8"></div>
<div class="t" style="left:905px;top:833px;width:378px;overflow:hidden;font-size:12.9px;line-height:18px;color:#111">Earth Moon Sun 03-19-09+03-09-09_5.1 (4)</div>
<div class="a " style="left:900px;top:830px;width:1px;height:138px;#2a1050"></div>
<div class="a " style="left:901px;top:972px;width:384px;height:138px;background:#38fff2"></div>
<div class="t" style="left:905px;top:975px;width:378px;overflow:hidden;font-size:12.9px;line-height:18px;color:#111">Earth Moon Sun 03-19-09+03-09-09_5.1 (5)</div>
<div class="a " style="left:900px;top:972px;width:1px;height:138px;#106060"></div>
<div class="a " style="left:901px;top:1114px;width:384px;height:138px;background:#38fff2"></div>
<div class="t" style="left:905px;top:1117px;width:378px;overflow:hidden;font-size:12.9px;line-height:18px;color:#111">Earth Moon Sun 03-19-09+03-09-09_5.1 (6)</div>
<div class="a " style="left:900px;top:1114px;width:1px;height:138px;#106060"></div>
<svg style="left:0;top:0" width="2460" height="1260"><path d="M460.0 192.9 L461.5 190.1 L463.0 191.3 L464.5 190.6 L466.0 193.1 L467.5 189.7 L469.0 190.1 L470.5 191.5 L472.0 192.5 L473.5 189.4 L475.0 193.4 L476.5 189.3 L478.0 192.5 L479.5 193.4 L481.0 191.5 L482.5 192.5 L484.0 192.5 L485.5 192.2 L487.0 189.7 L488.5 190.6 L490.0 189.0 L491.5 193.0 L493.0 190.3 L494.5 189.3 L496.0 189.8 L497.5 192.1 L499.0 189.5 L499.0 206.3 L497.5 205.1 L496.0 205.5 L494.5 204.4 L493.0 205.7 L491.5 204.0 L490.0 206.4 L488.5 203.3 L487.0 205.0 L485.5 202.6 L484.0 204.6 L482.5 203.5 L481.0 204.7 L479.5 203.5 L478.0 204.4 L476.5 204.2 L475.0 204.9 L473.5 202.6 L472.0 206.8 L470.5 205.7 L469.0 202.5 L467.5 204.4 L466.0 202.6 L464.5 206.0 L463.0 204.5 L461.5 203.6 L460.0 206.3Z" fill="#ffdcb4" stroke="#3a2208" stroke-width="0.8"/><path d="M474.5 180 V216M494.5 183 V213" stroke="#3a2208" stroke-width="3" opacity="0.6"/><path d="M474.5 180 V216M494.5 183 V213" stroke="#ffdcb4" stroke-width="1"/><path d="M529.0 189.2 L530.5 193.2 L532.0 189.7 L533.5 190.5 L535.0 190.8 L536.5 190.9 L538.0 191.6 L539.5 190.2 L541.0 189.2 L542.5 191.5 L544.0 193.3 L545.5 191.4 L547.0 191.8 L547.0 206.5 L545.5 203.9 L544.0 202.6 L542.5 203.7 L541.0 204.9 L539.5 207.0 L538.0 204.3 L536.5 203.2 L535.0 205.2 L533.5 203.9 L532.0 205.8 L530.5 202.9 L529.0 206.8Z" fill="#ffdcb4" stroke="#3a2208" stroke-width="0.8"/><path d="M533.5 173 V223M545.5 168 V228M547.5 163 V233" stroke="#3a2208" stroke-width="3" opacity="0.6"/><path d="M533.5 173 V223M545.5 168 V228M547.5 163 V233" stroke="#ffdcb4" stroke-width="1"/><path d="M555.0 197.0 L556.5 196.8 L558.0 196.0 L559.5 196.1 L561.0 195.3 L562.5 193.9 L564.0 194.8 L565.5 195.7 L567.0 196.4 L568.5 196.9 L570.0 196.8 L571.5 196.2 L573.0 196.1 L574.5 195.0 L576.0 195.3 L577.5 195.9 L579.0 196.6 L580.5 196.9 L582.0 196.7 L583.5 197.1 L585.0 196.6 L586.5 196.3 L588.0 195.9 L589.5 195.6 L591.0 195.5 L592.5 195.9 L594.0 196.3 L595.5 196.8 L597.0 196.7 L598.5 196.7 L600.0 196.8 L601.5 196.7 L603.0 197.0 L604.5 196.7 L606.0 197.1 L607.5 196.9 L609.0 197.0 L610.5 196.7 L612.0 196.8 L613.5 196.8 L615.0 196.3 L616.5 196.2 L618.0 196.0 L619.5 195.3 L621.0 195.9 L622.5 195.8 L624.0 196.7 L625.5 196.9 L627.0 196.7 L628.5 196.9 L630.0 196.8 L631.5 196.8 L633.0 196.6 L634.5 196.9 L636.0 197.0 L637.5 196.6 L639.0 196.9 L640.5 196.9 L642.0 197.1 L643.5 196.8 L645.0 196.8 L646.5 196.8 L648.0 196.8 L649.5 196.9 L651.0 196.1 L652.5 196.2 L654.0 195.6 L655.5 195.6 L657.0 195.3 L658.5 195.1 L660.0 194.0 L661.5 194.7 L663.0 195.4 L664.5 195.0 L666.0 196.0 L667.5 195.8 L669.0 196.4 L670.5 196.3 L672.0 196.1 L673.5 196.2 L675.0 195.2 L676.5 195.7 L678.0 194.9 L679.5 194.1 L681.0 195.2 L682.5 194.6 L684.0 195.0 L685.5 196.2 L687.0 195.9 L688.5 196.6 L690.0 196.5 L691.5 195.4 L693.0 196.0 L694.5 194.0 L696.0 195.0 L697.5 194.9 L699.0 195.8 L700.5 196.6 L702.0 197.0 L703.5 197.0 L705.0 196.5 L706.5 195.8 L708.0 195.2 L709.5 194.6 L711.0 194.1 L712.5 195.5 L714.0 195.6 L715.5 195.3 L717.0 196.1 L718.5 196.3 L720.0 196.6 L721.5 196.1 L723.0 195.9 L724.5 195.3 L726.0 195.5 L727.5 193.9 L729.0 194.2 L730.5 194.9 L732.0 196.0 L733.5 196.1 L735.0 196.2 L736.5 196.3 L736.5 199.1 L735.0 199.8 L733.5 200.2 L732.0 200.3 L730.5 201.4 L729.0 200.5 L727.5 201.9 L726.0 201.5 L724.5 201.1 L723.0 200.0 L721.5 200.2 L720.0 199.9 L718.5 199.4 L717.0 200.5 L715.5 200.5 L714.0 200.6 L712.5 201.8 L711.0 201.3 L709.5 201.3 L708.0 200.5 L706.5 199.4 L705.0 199.3 L703.5 198.9 L702.0 199.0 L700.5 199.3 L699.0 200.2 L697.5 200.2 L696.0 201.8 L694.5 202.1 L693.0 201.3 L691.5 199.8 L690.0 199.5 L688.5 199.4 L687.0 199.6 L685.5 200.0 L684.0 200.4 L682.5 201.1 L681.0 200.9 L679.5 202.0 L678.0 200.6 L676.5 200.2 L675.0 200.3 L673.5 200.1 L672.0 199.3 L670.5 199.4 L669.0 199.6 L667.5 199.6 L666.0 200.2 L664.5 200.3 L663.0 200.5 L661.5 201.6 L660.0 200.7 L658.5 201.0 L657.0 201.1 L655.5 200.4 L654.0 200.1 L652.5 200.0 L651.0 200.1 L649.5 199.1 L648.0 199.3 L646.5 199.0 L645.0 199.1 L643.5 198.9 L642.0 199.2 L640.5 199.2 L639.0 198.8 L637.5 199.1 L636.0 199.0 L634.5 199.2 L633.0 199.1 L631.5 199.2 L630.0 199.2 L628.5 199.1 L627.0 199.1 L625.5 199.5 L624.0 200.0 L622.5 199.7 L621.0 200.3 L619.5 200.0 L618.0 199.7 L616.5 200.2 L615.0 199.7 L613.5 199.0 L612.0 198.9 L610.5 198.9 L609.0 199.3 L607.5 198.9 L606.0 199.3 L604.5 199.4 L603.0 198.9 L601.5 199.2 L600.0 199.0 L598.5 199.2 L597.0 199.4 L595.5 198.9 L594.0 199.8 L592.5 200.3 L591.0 200.9 L589.5 200.7 L588.0 200.0 L586.5 199.4 L585.0 199.1 L583.5 199.0 L582.0 198.9 L580.5 199.4 L579.0 199.7 L577.5 200.3 L576.0 200.9 L574.5 200.5 L573.0 199.6 L571.5 199.7 L570.0 198.9 L568.5 199.3 L567.0 199.8 L565.5 199.7 L564.0 200.7 L562.5 201.3 L561.0 200.7 L559.5 200.9 L558.0 199.5 L556.5 199.4 L555.0 199.1Z" fill="#7c6452" stroke="#1a0c00" stroke-width="0.8"/><path d="M568.5 190 V206M594.5 182 V214M640.5 189 V207" stroke="#1a0c00" stroke-width="3" opacity="0.6"/><path d="M568.5 190 V206M594.5 182 V214M640.5 189 V207" stroke="#7c6452" stroke-width="1"/><path d="M937.0 195.1 L938.5 194.1 L940.0 194.1 L941.5 191.5 L943.0 192.1 L944.5 193.4 L946.0 194.0 L947.5 193.2 L949.0 190.8 L950.5 191.2 L952.0 193.2 L953.5 193.2 L955.0 193.8 L956.5 194.6 L958.0 194.7 L958.0 200.8 L956.5 201.5 L955.0 200.9 L953.5 203.1 L952.0 203.5 L950.5 203.3 L949.0 205.1 L947.5 204.5 L946.0 201.9 L944.5 202.1 L943.0 202.7 L941.5 204.2 L940.0 202.6 L938.5 201.5 L937.0 200.7Z" fill="#ffdcb4" stroke="#3a2208" stroke-width="0.8"/><path d="M949.5 184 V212" stroke="#3a2208" stroke-width="3" opacity="0.6"/><path d="M949.5 184 V212" stroke="#ffdcb4" stroke-width="1"/><path d="M966.0 196.2 L967.5 195.1 L969.0 194.1 L970.5 194.7 L972.0 194.6 L973.5 195.7 L975.0 196.3 L976.5 196.3 L978.0 196.6 L979.5 196.4 L979.5 199.9 L978.0 199.5 L976.5 199.7 L975.0 199.5 L973.5 199.7 L972.0 201.1 L970.5 201.9 L969.0 202.2 L967.5 201.1 L966.0 199.8Z" fill="#ffdcb4" stroke="#3a2208" stroke-width="0.8"/><path d="M968.5 143 V253M970.5 148 V248M980.5 173 V223M981.5 143 V253" stroke="#3a2208" stroke-width="3" opacity="0.6"/><path d="M968.5 143 V253M970.5 148 V248M980.5 173 V223M981.5 143 V253" stroke="#ffdcb4" stroke-width="1"/><path d="M1001.0 194.3 L1002.5 194.7 L1004.0 195.4 L1005.5 193.9 L1007.0 193.3 L1008.5 192.8 L1010.0 190.8 L1011.5 192.1 L1013.0 193.7 L1014.5 192.9 L1016.0 191.5 L1017.5 190.0 L1019.0 192.5 L1020.5 191.9 L1022.0 194.6 L1023.5 194.5 L1025.0 193.6 L1026.5 194.2 L1028.0 193.3 L1029.5 191.5 L1031.0 192.3 L1032.5 192.6 L1034.0 194.7 L1035.5 194.3 L1037.0 194.6 L1038.5 194.2 L1040.0 195.2 L1040.0 201.5 L1038.5 201.3 L1037.0 200.7 L1035.5 201.2 L1034.0 201.9 L1032.5 203.7 L1031.0 203.8 L1029.5 203.6 L1028.0 203.9 L1026.5 202.6 L1025.0 201.9 L1023.5 201.0 L1022.0 201.6 L1020.5 203.2 L1019.0 205.4 L1017.5 204.5 L1016.0 204.2 L1014.5 202.1 L1013.0 203.1 L1011.5 204.2 L1010.0 204.4 L1008.5 204.5 L1007.0 203.5 L1005.5 202.6 L1004.0 201.5 L1002.5 201.0 L1001.0 201.8Z" fill="#ffdcb4" stroke="#3a2208" stroke-width="0.8"/><path d="M1004.5 178 V218M1017.5 143 V253M1019.5 181 V215M1025.5 177 V219M1027.5 162 V234" stroke="#3a2208" stroke-width="3" opacity="0.6"/><path d="M1004.5 178 V218M1017.5 143 V253M1019.5 181 V215M1025.5 177 V219M1027.5 162 V234" stroke="#ffdcb4" stroke-width="1"/><path d="M1040.0 197.1 L1041.5 196.9 L1043.0 197.0 L1044.5 197.2 L1046.0 196.8 L1047.5 196.2 L1049.0 195.1 L1050.5 195.3 L1052.0 195.4 L1053.5 196.2 L1055.0 196.8 L1056.5 196.0 L1058.0 195.9 L1059.5 195.0 L1061.0 195.4 L1062.5 195.6 L1064.0 196.5 L1065.5 197.2 L1067.0 196.9 L1068.5 197.1 L1070.0 197.0 L1071.5 195.8 L1073.0 195.4 L1074.5 194.0 L1076.0 194.0 L1077.5 194.8 L1079.0 196.4 L1080.5 197.2 L1082.0 197.2 L1083.5 196.9 L1085.0 196.4 L1086.5 195.8 L1088.0 195.3 L1089.5 194.3 L1091.0 195.0 L1092.5 196.0 L1094.0 196.1 L1095.5 196.6 L1097.0 197.1 L1098.5 197.2 L1100.0 197.1 L1101.5 197.2 L1103.0 196.9 L1104.5 196.4 L1106.0 196.3 L1107.5 195.4 L1109.0 195.3 L1110.5 196.2 L1112.0 196.6 L1113.5 196.7 L1115.0 197.1 L1116.5 197.1 L1118.0 197.0 L1119.5 197.2 L1121.0 197.1 L1122.5 196.8 L1124.0 197.0 L1125.5 196.3 L1127.0 195.4 L1128.5 194.7 L1130.0 194.7 L1131.5 195.6 L1133.0 196.2 L1134.5 196.6 L1136.0 197.1 L1137.5 197.1 L1139.0 196.5 L1140.5 196.1 L1142.0 194.8 L1143.5 194.7 L1145.0 194.0 L1146.5 193.8 L1148.0 195.0 L1149.5 196.0 L1151.0 196.3 L1152.5 196.6 L1154.0 196.6 L1155.5 195.5 L1157.0 194.9 L1158.5 194.3 L1160.0 193.0 L1161.5 194.7 L1163.0 195.4 L1164.5 195.5 L1166.0 196.3 L1167.5 196.6 L1169.0 196.9 L1170.5 195.9 L1172.0 195.7 L1173.5 194.7 L1175.0 194.6 L1176.5 194.9 L1178.0 194.8 L1179.5 195.8 L1181.0 196.8 L1182.5 197.1 L1184.0 197.1 L1185.5 197.0 L1187.0 196.2 L1188.5 195.5 L1190.0 195.4 L1191.5 193.3 L1193.0 193.9 L1194.5 195.5 L1196.0 196.1 L1197.5 196.4 L1199.0 195.8 L1200.5 194.4 L1202.0 194.4 L1203.5 194.1 L1205.0 196.0 L1206.5 196.4 L1208.0 197.1 L1208.0 199.0 L1206.5 199.4 L1205.0 200.6 L1203.5 201.7 L1202.0 201.7 L1200.5 200.8 L1199.0 200.7 L1197.5 199.3 L1196.0 200.4 L1194.5 201.3 L1193.0 201.7 L1191.5 202.5 L1190.0 201.4 L1188.5 200.7 L1187.0 199.5 L1185.5 199.2 L1184.0 198.9 L1182.5 198.9 L1181.0 198.9 L1179.5 200.2 L1178.0 200.6 L1176.5 201.7 L1175.0 201.9 L1173.5 200.8 L1172.0 200.7 L1170.5 200.0 L1169.0 199.1 L1167.5 199.4 L1166.0 199.6 L1164.5 200.7 L1163.0 201.4 L1161.5 201.5 L1160.0 202.6 L1158.5 202.4 L1157.0 200.4 L1155.5 200.1 L1154.0 200.2 L1152.5 199.0 L1151.0 199.6 L1149.5 200.0 L1148.0 201.0 L1146.5 202.4 L1145.0 201.6 L1143.5 201.4 L1142.0 200.6 L1140.5 200.8 L1139.0 199.7 L1137.5 199.0 L1136.0 198.8 L1134.5 199.4 L1133.0 199.8 L1131.5 201.0 L1130.0 201.3 L1128.5 201.2 L1127.0 200.5 L1125.5 199.3 L1124.0 199.0 L1122.5 199.1 L1121.0 199.0 L1119.5 199.0 L1118.0 198.9 L1116.5 199.0 L1115.0 198.9 L1113.5 199.0 L1112.0 199.8 L1110.5 199.9 L1109.0 200.7 L1107.5 200.9 L1106.0 200.0 L1104.5 199.9 L1103.0 199.1 L1101.5 199.1 L1100.0 198.8 L1098.5 199.0 L1097.0 199.1 L1095.5 199.1 L1094.0 200.2 L1092.5 200.6 L1091.0 201.3 L1089.5 201.9 L1088.0 200.6 L1086.5 200.1 L1085.0 199.3 L1083.5 199.0 L1082.0 199.1 L1080.5 199.0 L1079.0 199.8 L1077.5 200.2 L1076.0 201.3 L1074.5 202.6 L1073.0 201.1 L1071.5 200.1 L1070.0 198.9 L1068.5 199.0 L1067.0 199.0 L1065.5 198.9 L1064.0 199.2 L1062.5 200.1 L1061.0 201.1 L1059.5 201.6 L1058.0 200.1 L1056.5 199.6 L1055.0 198.8 L1053.5 199.7 L1052.0 200.9 L1050.5 200.8 L1049.0 201.4 L1047.5 199.8 L1046.0 199.4 L1044.5 199.0 L1043.0 198.9 L1041.5 198.8 L1040.0 198.8Z" fill="#ffdcb4" stroke="#3a2208" stroke-width="0.8"/><path d="M1065.5 181 V215M1111.5 190 V206" stroke="#3a2208" stroke-width="3" opacity="0.6"/><path d="M1065.5 181 V215M1111.5 190 V206" stroke="#ffdcb4" stroke-width="1"/><path d="M1216.0 194.7 L1217.5 195.0 L1219.0 195.1 L1220.5 193.0 L1222.0 193.8 L1223.5 194.2 L1225.0 194.4 L1226.5 194.1 L1228.0 193.8 L1229.5 191.8 L1231.0 191.2 L1232.5 191.5 L1234.0 192.9 L1235.5 192.4 L1237.0 193.2 L1238.5 193.3 L1240.0 191.1 L1241.5 192.9 L1243.0 188.7 L1244.5 191.2 L1246.0 189.7 L1247.5 189.4 L1249.0 192.3 L1250.5 193.8 L1252.0 194.6 L1253.5 192.8 L1255.0 191.5 L1256.5 192.9 L1258.0 190.9 L1259.5 193.3 L1261.0 192.6 L1262.5 194.1 L1264.0 195.2 L1265.5 194.6 L1265.5 201.7 L1264.0 201.5 L1262.5 202.0 L1261.0 204.1 L1259.5 205.7 L1258.0 205.0 L1256.5 202.9 L1255.0 203.4 L1253.5 203.9 L1252.0 202.9 L1250.5 204.1 L1249.0 205.6 L1247.5 204.2 L1246.0 207.0 L1244.5 208.4 L1243.0 205.3 L1241.5 202.8 L1240.0 203.9 L1238.5 203.2 L1237.0 203.9 L1235.5 204.6 L1234.0 205.3 L1232.5 207.7 L1231.0 203.6 L1229.5 206.1 L1228.0 203.0 L1226.5 202.3 L1225.0 203.2 L1223.5 201.9 L1222.0 201.8 L1220.5 201.2 L1219.0 201.3 L1217.5 202.3 L1216.0 202.9Z" fill="#ffdcb4" stroke="#3a2208" stroke-width="0.8"/><path d="M1220.5 186 V210M1231.5 171 V225M1243.5 171 V225M1250.5 180 V216M1253.5 181 V215" stroke="#3a2208" stroke-width="3" opacity="0.6"/><path d="M1220.5 186 V210M1231.5 171 V225M1243.5 171 V225M1250.5 180 V216M1253.5 181 V215" stroke="#ffdcb4" stroke-width="1"/><path d="M460.0 336.2 L461.5 335.9 L463.0 336.0 L464.5 337.2 L466.0 335.6 L467.5 335.5 L469.0 335.8 L470.5 335.2 L472.0 336.1 L473.5 335.8 L475.0 335.2 L476.5 335.7 L478.0 336.2 L479.5 337.3 L481.0 336.9 L482.5 335.5 L484.0 336.8 L485.5 336.3 L487.0 336.9 L488.5 336.1 L490.0 335.7 L491.5 336.6 L493.0 337.0 L494.5 336.8 L496.0 337.3 L497.5 336.7 L499.0 335.8 L499.0 343.6 L497.5 343.3 L496.0 343.9 L494.5 343.8 L493.0 342.8 L491.5 343.0 L490.0 343.2 L488.5 344.4 L487.0 344.4 L485.5 343.9 L484.0 344.4 L482.5 344.3 L481.0 343.1 L479.5 344.3 L478.0 342.9 L476.5 343.1 L475.0 343.5 L473.5 345.7 L472.0 344.5 L470.5 344.9 L469.0 343.7 L467.5 343.0 L466.0 343.9 L464.5 343.5 L463.0 344.4 L461.5 344.4 L460.0 344.0Z" fill="#c8f7da" stroke="#0a3018" stroke-width="0.8"/><path d="M472.5 327 V353M496.5 331 V349" stroke="#0a3018" stroke-width="3" opacity="0.6"/><path d="M472.5 327 V353M496.5 331 V349" stroke="#c8f7da" stroke-width="1"/><path d="M529.0 338.4 L530.5 338.2 L532.0 338.4 L533.5 337.5 L535.0 337.2 L536.5 337.0 L538.0 335.8 L539.5 335.7 L541.0 336.6 L542.5 335.8 L544.0 336.3 L545.5 336.7 L547.0 338.0 L548.5 337.2 L550.0 337.4 L551.5 335.7 L553.0 335.4 L554.5 337.5 L556.0 338.0 L557.5 338.2 L559.0 337.9 L560.5 337.3 L562.0 337.9 L563.5 337.6 L565.0 338.0 L566.5 338.2 L568.0 339.1 L569.5 339.0 L571.0 338.6 L572.5 338.4 L574.0 337.4 L575.5 337.1 L577.0 338.1 L578.5 338.3 L580.0 338.9 L581.5 339.1 L583.0 339.1 L584.5 338.7 L586.0 338.2 L587.5 337.6 L589.0 337.4 L590.5 337.5 L592.0 337.6 L593.5 338.4 L595.0 338.9 L596.5 338.7 L598.0 338.9 L599.5 339.1 L601.0 339.1 L602.5 338.4 L604.0 337.7 L605.5 337.8 L607.0 337.7 L608.5 338.8 L610.0 338.9 L611.5 338.9 L613.0 338.7 L614.5 338.6 L616.0 338.0 L617.5 337.8 L619.0 337.7 L620.5 337.0 L622.0 338.0 L623.5 338.3 L625.0 338.9 L626.5 339.1 L628.0 339.0 L629.5 338.7 L631.0 339.1 L632.5 338.8 L634.0 338.7 L635.5 338.9 L637.0 339.1 L638.5 339.1 L640.0 338.8 L641.5 338.8 L643.0 339.1 L644.5 338.9 L646.0 338.8 L647.5 339.1 L649.0 339.0 L650.5 338.0 L652.0 337.7 L653.5 337.6 L655.0 337.9 L656.5 336.6 L658.0 336.4 L659.5 337.0 L661.0 337.4 L662.5 336.3 L664.0 336.7 L665.5 337.1 L667.0 337.4 L668.5 337.8 L670.0 338.8 L671.5 338.4 L673.0 338.6 L674.5 337.9 L676.0 336.8 L677.5 336.4 L679.0 337.0 L680.5 336.2 L682.0 336.9 L683.5 337.3 L685.0 338.2 L686.5 338.5 L688.0 338.7 L689.5 338.9 L691.0 338.2 L692.5 337.8 L694.0 336.2 L695.5 337.2 L697.0 337.6 L698.5 337.6 L700.0 338.7 L701.5 338.9 L703.0 338.9 L704.5 338.7 L706.0 338.1 L707.5 337.5 L709.0 337.2 L710.5 337.4 L712.0 336.7 L713.5 337.6 L715.0 337.9 L716.5 338.3 L718.0 338.7 L719.5 338.3 L721.0 338.1 L722.5 338.0 L724.0 337.2 L725.5 337.6 L727.0 337.3 L728.5 335.8 L730.0 336.3 L731.5 337.1 L733.0 337.5 L734.5 338.1 L736.0 338.1 L736.0 341.8 L734.5 341.7 L733.0 342.1 L731.5 343.0 L730.0 343.4 L728.5 342.6 L727.0 342.6 L725.5 343.2 L724.0 343.0 L722.5 342.2 L721.0 342.2 L719.5 341.3 L718.0 341.8 L716.5 342.0 L715.0 342.9 L713.5 343.5 L712.0 342.7 L710.5 343.3 L709.0 343.2 L707.5 342.0 L706.0 341.8 L704.5 341.4 L703.0 341.4 L701.5 341.1 L700.0 341.4 L698.5 342.2 L697.0 342.8 L695.5 343.0 L694.0 343.0 L692.5 342.6 L691.0 341.7 L689.5 341.4 L688.0 341.4 L686.5 342.0 L685.0 342.3 L683.5 342.1 L682.0 343.0 L680.5 342.7 L679.0 342.6 L677.5 343.2 L676.0 342.9 L674.5 341.7 L673.0 341.5 L671.5 341.5 L670.0 341.8 L668.5 341.4 L667.0 342.0 L665.5 342.2 L664.0 342.2 L662.5 342.7 L661.0 343.8 L659.5 343.8 L658.0 343.0 L656.5 342.7 L655.0 343.1 L653.5 342.5 L652.0 341.9 L650.5 342.0 L649.0 341.4 L647.5 341.3 L646.0 341.2 L644.5 341.3 L643.0 341.2 L641.5 340.9 L640.0 340.9 L638.5 341.2 L637.0 341.0 L635.5 341.1 L634.0 341.3 L632.5 341.1 L631.0 341.4 L629.5 340.9 L628.0 341.4 L626.5 341.2 L625.0 341.6 L623.5 341.4 L622.0 341.6 L620.5 343.2 L619.0 342.4 L617.5 341.9 L616.0 341.6 L614.5 341.5 L613.0 341.0 L611.5 341.0 L610.0 340.9 L608.5 341.3 L607.0 342.0 L605.5 342.4 L604.0 342.8 L602.5 341.5 L601.0 341.2 L599.5 340.9 L598.0 341.3 L596.5 341.0 L595.0 340.9 L593.5 341.8 L592.0 342.1 L590.5 343.0 L589.0 342.9 L587.5 342.3 L586.0 341.3 L584.5 341.1 L583.0 341.1 L581.5 341.4 L580.0 341.1 L578.5 341.4 L577.0 342.5 L575.5 341.9 L574.0 341.8 L572.5 342.3 L571.0 341.2 L569.5 340.9 L568.0 341.2 L566.5 341.5 L565.0 341.5 L563.5 342.1 L562.0 342.5 L560.5 342.9 L559.0 342.1 L557.5 341.5 L556.0 342.7 L554.5 343.2 L553.0 344.0 L551.5 343.6 L550.0 342.8 L548.5 342.4 L547.0 342.8 L545.5 342.6 L544.0 343.6 L542.5 343.2 L541.0 344.2 L539.5 344.6 L538.0 343.6 L536.5 343.9 L535.0 343.4 L533.5 342.9 L532.0 342.4 L530.5 341.6 L529.0 341.6Z" fill="#c8f7da" stroke="#0a3018" stroke-width="0.8"/><path d="M533.5 320 V360M535.5 330 V350M546.5 283 V397M548.5 295 V385M554.5 300 V380M568.5 332 V348M594.5 324 V356M640.5 331 V349" stroke="#0a3018" stroke-width="3" opacity="0.6"/><path d="M533.5 320 V360M535.5 330 V350M546.5 283 V397M548.5 295 V385M554.5 300 V380M568.5 332 V348M594.5 324 V356M640.5 331 V349" stroke="#c8f7da" stroke-width="1"/><path d="M939.0 337.6 L940.5 337.0 L942.0 337.4 L943.5 337.2 L945.0 337.1 L946.5 335.8 L948.0 335.7 L949.5 335.5 L951.0 336.4 L952.5 335.0 L954.0 336.8 L955.5 336.9 L957.0 337.3 L958.5 336.7 L960.0 336.1 L960.0 343.7 L958.5 343.3 L957.0 342.7 L955.5 344.1 L954.0 343.4 L952.5 343.9 L951.0 343.4 L949.5 345.8 L948.0 344.2 L946.5 343.2 L945.0 343.9 L943.5 343.6 L942.0 342.6 L940.5 343.5 L939.0 342.6Z" fill="#c8f7da" stroke="#0a3018" stroke-width="0.8"/><path d="M968.0 338.7 L969.5 338.6 L971.0 338.5 L972.5 338.7 L974.0 338.3 L975.5 338.2 L977.0 338.5 L978.5 338.3 L980.0 338.7 L981.5 338.3 L983.0 338.2 L983.0 341.4 L981.5 341.7 L980.0 341.7 L978.5 341.3 L977.0 341.3 L975.5 341.7 L974.0 341.5 L972.5 341.5 L971.0 341.6 L969.5 341.7 L968.0 341.4Z" fill="#c8f7da" stroke="#0a3018" stroke-width="0.8"/><path d="M1003.0 337.5 L1004.5 337.2 L1006.0 336.9 L1007.5 335.7 L1009.0 335.4 L1010.5 335.4 L1012.0 336.1 L1013.5 336.2 L1015.0 337.4 L1016.5 336.3 L1018.0 335.2 L1019.5 334.9 L1021.0 333.8 L1022.5 335.3 L1024.0 337.3 L1025.5 337.6 L1027.0 337.1 L1028.5 338.1 L1030.0 337.9 L1030.0 342.1 L1028.5 342.2 L1027.0 342.7 L1025.5 342.3 L1024.0 344.3 L1022.5 343.5 L1021.0 345.2 L1019.5 346.3 L1018.0 345.1 L1016.5 342.9 L1015.0 342.7 L1013.5 343.3 L1012.0 343.7 L1010.5 345.6 L1009.0 344.6 L1007.5 343.0 L1006.0 343.4 L1004.5 342.1 L1003.0 342.6Z" fill="#c8f7da" stroke="#0a3018" stroke-width="0.8"/><path d="M1019.5 283 V397M1021.5 307 V373M1025.5 313 V367M1027.5 323 V357M1008.5 330 V350" stroke="#0a3018" stroke-width="3" opacity="0.6"/><path d="M1019.5 283 V397M1021.5 307 V373M1025.5 313 V367M1027.5 323 V357M1008.5 330 V350" stroke="#c8f7da" stroke-width="1"/><path d="M1030.0 338.9 L1031.5 338.8 L1033.0 338.8 L1034.5 338.7 L1036.0 339.0 L1037.5 338.9 L1039.0 339.0 L1040.5 338.8 L1042.0 339.1 L1043.5 339.0 L1045.0 338.8 L1046.5 338.7 L1048.0 338.9 L1049.5 339.0 L1051.0 338.9 L1052.5 338.9 L1054.0 339.0 L1055.5 338.8 L1057.0 338.8 L1058.5 339.0 L1060.0 339.0 L1061.5 338.8 L1063.0 338.8 L1064.5 338.8 L1066.0 338.5 L1067.5 338.2 L1069.0 338.0 L1070.5 337.7 L1072.0 338.3 L1073.5 338.7 L1075.0 339.0 L1076.5 338.7 L1078.0 338.9 L1079.5 338.8 L1081.0 338.9 L1082.5 339.1 L1084.0 339.0 L1085.5 338.8 L1087.0 339.0 L1088.5 339.0 L1090.0 338.9 L1091.5 338.9 L1093.0 339.0 L1094.5 338.7 L1096.0 338.9 L1097.5 339.0 L1099.0 338.7 L1100.5 338.7 L1102.0 339.0 L1103.5 338.7 L1105.0 338.7 L1106.5 338.0 L1108.0 337.6 L1109.5 337.0 L1111.0 337.2 L1112.5 337.9 L1114.0 338.4 L1115.5 338.8 L1117.0 339.1 L1118.5 338.7 L1120.0 338.7 L1121.5 338.9 L1123.0 338.8 L1124.5 339.0 L1126.0 338.8 L1127.5 338.8 L1129.0 338.1 L1130.5 337.7 L1132.0 337.1 L1133.5 337.2 L1135.0 337.1 L1136.5 336.4 L1138.0 335.4 L1139.5 335.2 L1141.0 335.2 L1142.5 335.9 L1144.0 336.9 L1145.5 336.9 L1147.0 337.8 L1148.5 337.3 L1150.0 337.7 L1151.5 337.9 L1153.0 337.6 L1154.5 337.5 L1156.0 337.3 L1157.5 335.6 L1159.0 335.5 L1160.5 334.9 L1162.0 335.9 L1163.5 336.2 L1165.0 337.5 L1166.5 337.8 L1168.0 338.1 L1169.5 338.1 L1171.0 338.5 L1172.5 338.7 L1174.0 338.9 L1175.5 338.8 L1177.0 339.1 L1178.5 338.9 L1180.0 338.8 L1181.5 338.7 L1183.0 338.4 L1184.5 338.3 L1186.0 337.7 L1187.5 336.6 L1189.0 335.9 L1190.5 336.7 L1192.0 335.4 L1193.5 335.3 L1195.0 335.3 L1196.5 334.5 L1198.0 336.1 L1199.5 336.1 L1201.0 336.9 L1202.5 337.5 L1204.0 337.4 L1205.5 338.2 L1207.0 338.2 L1208.5 338.6 L1210.0 338.9 L1210.0 341.0 L1208.5 341.0 L1207.0 341.7 L1205.5 342.5 L1204.0 342.9 L1202.5 343.3 L1201.0 342.8 L1199.5 343.8 L1198.0 343.6 L1196.5 344.0 L1195.0 344.8 L1193.5 345.2 L1192.0 343.5 L1190.5 344.4 L1189.0 343.5 L1187.5 342.5 L1186.0 342.4 L1184.5 342.5 L1183.0 341.5 L1181.5 341.4 L1180.0 341.3 L1178.5 341.0 L1177.0 341.2 L1175.5 341.0 L1174.0 341.0 L1172.5 341.0 L1171.0 341.1 L1169.5 341.6 L1168.0 342.4 L1166.5 342.3 L1165.0 342.9 L1163.5 343.1 L1162.0 343.7 L1160.5 344.3 L1159.0 343.3 L1157.5 344.5 L1156.0 343.2 L1154.5 342.8 L1153.0 342.6 L1151.5 342.3 L1150.0 342.4 L1148.5 342.5 L1147.0 342.3 L1145.5 342.5 L1144.0 343.0 L1142.5 343.0 L1141.0 344.8 L1139.5 343.9 L1138.0 343.6 L1136.5 344.3 L1135.0 343.2 L1133.5 343.3 L1132.0 342.8 L1130.5 341.9 L1129.0 341.9 L1127.5 341.3 L1126.0 341.1 L1124.5 341.1 L1123.0 341.3 L1121.5 340.9 L1120.0 341.2 L1118.5 341.0 L1117.0 341.0 L1115.5 341.2 L1114.0 341.6 L1112.5 342.0 L1111.0 342.6 L1109.5 342.8 L1108.0 342.4 L1106.5 341.6 L1105.0 341.4 L1103.5 340.9 L1102.0 341.2 L1100.5 341.3 L1099.0 340.9 L1097.5 341.2 L1096.0 341.2 L1094.5 341.2 L1093.0 341.1 L1091.5 340.9 L1090.0 341.0 L1088.5 341.3 L1087.0 341.0 L1085.5 341.2 L1084.0 341.0 L1082.5 341.2 L1081.0 341.2 L1079.5 341.3 L1078.0 341.3 L1076.5 341.0 L1075.0 340.9 L1073.5 341.6 L1072.0 341.9 L1070.5 342.3 L1069.0 342.2 L1067.5 341.9 L1066.0 341.7 L1064.5 340.9 L1063.0 341.0 L1061.5 341.0 L1060.0 341.3 L1058.5 340.9 L1057.0 341.2 L1055.5 341.1 L1054.0 341.0 L1052.5 341.0 L1051.0 341.1 L1049.5 340.9 L1048.0 341.0 L1046.5 341.1 L1045.0 341.2 L1043.5 341.1 L1042.0 340.9 L1040.5 341.2 L1039.0 341.1 L1037.5 340.9 L1036.0 340.9 L1034.5 341.0 L1033.0 341.0 L1031.5 341.3 L1030.0 341.1Z" fill="#c8f7da" stroke="#0a3018" stroke-width="0.8"/><path d="M1059.5 316 V364M1116.5 335 V345" stroke="#0a3018" stroke-width="3" opacity="0.6"/><path d="M1059.5 316 V364M1116.5 335 V345" stroke="#c8f7da" stroke-width="1"/><path d="M1218.0 336.0 L1219.5 335.6 L1221.0 336.6 L1222.5 336.0 L1224.0 335.6 L1225.5 336.6 L1227.0 335.6 L1228.5 335.6 L1230.0 335.1 L1231.5 335.6 L1233.0 337.2 L1234.5 337.1 L1236.0 336.5 L1237.5 336.9 L1239.0 335.3 L1240.5 336.9 L1242.0 335.2 L1243.5 335.4 L1245.0 336.1 L1246.5 336.4 L1248.0 335.9 L1249.5 335.2 L1251.0 333.0 L1252.5 332.7 L1254.0 334.2 L1255.5 329.7 L1257.0 329.6 L1258.5 329.8 L1260.0 329.7 L1261.5 334.3 L1263.0 334.7 L1264.5 335.1 L1266.0 333.7 L1267.5 337.0 L1267.5 344.1 L1266.0 345.5 L1264.5 344.7 L1263.0 348.8 L1261.5 348.7 L1260.0 350.4 L1258.5 348.2 L1257.0 348.1 L1255.5 348.2 L1254.0 347.1 L1252.5 346.9 L1251.0 346.8 L1249.5 345.5 L1248.0 344.9 L1246.5 343.3 L1245.0 343.6 L1243.5 344.9 L1242.0 344.0 L1240.5 342.9 L1239.0 342.9 L1237.5 342.9 L1236.0 343.1 L1234.5 343.3 L1233.0 344.3 L1231.5 343.6 L1230.0 342.8 L1228.5 343.6 L1227.0 344.1 L1225.5 343.6 L1224.0 344.8 L1222.5 344.4 L1221.0 344.9 L1219.5 344.7 L1218.0 344.4Z" fill="#c8f7da" stroke="#0a3018" stroke-width="0.8"/><path d="M1250.5 326 V354M1262.5 325 V355" stroke="#0a3018" stroke-width="3" opacity="0.6"/><path d="M1250.5 326 V354M1262.5 325 V355" stroke="#c8f7da" stroke-width="1"/><path d="M901.0 479.1 L902.5 479.4 L904.0 479.3 L905.5 475.5 L907.0 475.7 L908.5 475.6 L910.0 477.5 L911.5 478.6 L913.0 479.4 L914.5 478.6 L916.0 478.7 L917.5 479.0 L919.0 479.1 L920.5 477.4 L922.0 476.8 L923.5 477.0 L925.0 476.6 L926.5 478.9 L928.0 475.3 L929.5 477.3 L931.0 475.4 L932.5 475.2 L934.0 478.0 L935.5 479.3 L937.0 479.4 L938.5 477.9 L940.0 477.5 L941.5 479.2 L943.0 478.3 L944.5 479.5 L946.0 478.4 L947.5 479.1 L949.0 479.7 L950.5 479.0 L952.0 478.7 L953.5 477.4 L955.0 478.7 L956.5 478.0 L958.0 479.2 L959.5 478.9 L961.0 477.7 L962.5 479.3 L964.0 479.1 L965.5 478.5 L967.0 478.2 L968.5 479.5 L970.0 479.4 L971.5 478.8 L973.0 478.4 L974.5 477.2 L976.0 479.7 L977.5 478.7 L979.0 477.8 L980.5 477.2 L982.0 477.5 L983.5 477.4 L985.0 477.2 L986.5 477.1 L988.0 479.2 L989.5 478.6 L991.0 478.1 L992.5 478.5 L994.0 479.4 L995.5 478.5 L997.0 478.6 L998.5 477.8 L1000.0 478.7 L1001.5 479.1 L1003.0 478.5 L1004.5 477.8 L1006.0 478.1 L1007.5 478.8 L1009.0 479.5 L1010.5 477.7 L1012.0 477.9 L1013.5 479.1 L1015.0 477.8 L1016.5 479.7 L1018.0 477.3 L1019.5 477.3 L1021.0 479.1 L1022.5 478.3 L1024.0 478.7 L1025.5 477.5 L1027.0 478.1 L1028.5 477.7 L1030.0 477.5 L1031.5 478.7 L1033.0 477.5 L1034.5 478.9 L1036.0 477.5 L1037.5 477.3 L1039.0 477.6 L1040.5 478.8 L1042.0 478.4 L1043.5 477.5 L1045.0 479.5 L1046.5 479.0 L1048.0 479.4 L1049.5 479.0 L1051.0 477.6 L1052.5 479.0 L1054.0 478.6 L1055.5 477.2 L1057.0 477.8 L1058.5 477.6 L1060.0 477.5 L1061.5 477.7 L1063.0 478.7 L1064.5 477.7 L1066.0 477.3 L1067.5 479.3 L1069.0 477.9 L1070.5 478.5 L1072.0 477.3 L1073.5 479.5 L1075.0 477.5 L1076.5 478.9 L1078.0 477.3 L1079.5 478.0 L1081.0 477.5 L1082.5 477.8 L1084.0 478.9 L1085.5 478.8 L1087.0 478.3 L1088.5 477.3 L1090.0 478.6 L1091.5 477.4 L1093.0 476.2 L1094.5 478.5 L1096.0 479.0 L1097.5 479.4 L1099.0 478.3 L1100.5 477.6 L1102.0 478.9 L1103.5 477.8 L1105.0 478.2 L1106.5 477.1 L1108.0 479.4 L1109.5 478.6 L1111.0 477.7 L1112.5 477.4 L1114.0 478.1 L1115.5 477.3 L1117.0 477.4 L1118.5 477.9 L1120.0 478.4 L1121.5 477.5 L1123.0 478.6 L1124.5 477.5 L1126.0 475.7 L1127.5 474.5 L1129.0 474.8 L1130.5 478.1 L1132.0 476.8 L1133.5 477.8 L1135.0 478.7 L1136.5 478.7 L1138.0 478.8 L1139.5 478.1 L1141.0 477.9 L1142.5 479.2 L1144.0 479.4 L1145.5 478.6 L1147.0 477.2 L1148.5 477.1 L1150.0 478.1 L1151.5 477.1 L1153.0 477.2 L1154.5 478.5 L1156.0 479.1 L1157.5 478.8 L1159.0 477.6 L1160.5 478.1 L1162.0 479.3 L1163.5 477.4 L1165.0 479.6 L1166.5 478.8 L1168.0 478.2 L1169.5 478.0 L1171.0 477.7 L1172.5 478.2 L1174.0 477.5 L1175.5 477.5 L1177.0 478.1 L1178.5 477.4 L1180.0 477.0 L1181.5 477.2 L1183.0 476.3 L1184.5 477.1 L1186.0 476.6 L1187.5 478.9 L1189.0 479.5 L1190.5 477.7 L1192.0 478.0 L1193.5 477.4 L1195.0 479.4 L1196.5 477.8 L1198.0 478.9 L1199.5 477.8 L1201.0 478.2 L1202.5 479.7 L1204.0 478.8 L1205.5 478.6 L1207.0 479.7 L1208.5 479.5 L1210.0 478.4 L1211.5 477.8 L1213.0 477.3 L1214.5 479.3 L1216.0 477.9 L1217.5 478.0 L1219.0 478.1 L1220.5 479.0 L1222.0 479.2 L1223.5 479.5 L1225.0 477.9 L1226.5 478.1 L1228.0 478.1 L1229.5 476.3 L1231.0 477.3 L1232.5 476.0 L1234.0 476.2 L1235.5 476.7 L1237.0 478.4 L1238.5 478.9 L1240.0 479.5 L1241.5 478.4 L1243.0 477.9 L1244.5 477.4 L1246.0 478.1 L1247.5 478.5 L1249.0 477.6 L1250.5 479.3 L1252.0 479.1 L1253.5 478.1 L1255.0 477.9 L1256.5 479.0 L1258.0 477.1 L1259.5 479.1 L1261.0 477.5 L1262.5 478.7 L1264.0 479.4 L1265.5 477.5 L1267.0 478.5 L1268.5 478.4 L1270.0 477.4 L1271.5 479.2 L1273.0 477.2 L1274.5 478.4 L1276.0 478.4 L1277.5 478.1 L1279.0 477.1 L1280.5 478.3 L1282.0 478.1 L1283.5 478.8 L1285.0 478.9 L1285.0 486.2 L1283.5 485.9 L1282.0 485.1 L1280.5 485.4 L1279.0 485.6 L1277.5 485.2 L1276.0 486.4 L1274.5 485.9 L1273.0 486.5 L1271.5 486.9 L1270.0 487.4 L1268.5 486.3 L1267.0 486.5 L1265.5 486.6 L1264.0 485.9 L1262.5 486.9 L1261.0 487.3 L1259.5 486.4 L1258.0 485.3 L1256.5 486.1 L1255.0 486.4 L1253.5 485.4 L1252.0 486.8 L1250.5 485.5 L1249.0 486.5 L1247.5 485.5 L1246.0 486.5 L1244.5 487.4 L1243.0 487.3 L1241.5 487.2 L1240.0 485.8 L1238.5 486.6 L1237.0 486.8 L1235.5 487.6 L1234.0 487.8 L1232.5 486.7 L1231.0 489.2 L1229.5 487.5 L1228.0 487.4 L1226.5 487.3 L1225.0 485.5 L1223.5 486.2 L1222.0 485.0 L1220.5 486.7 L1219.0 486.6 L1217.5 485.8 L1216.0 487.4 L1214.5 485.3 L1213.0 486.0 L1211.5 487.5 L1210.0 487.5 L1208.5 486.2 L1207.0 487.4 L1205.5 487.3 L1204.0 487.1 L1202.5 487.0 L1201.0 486.6 L1199.5 486.8 L1198.0 487.4 L1196.5 485.5 L1195.0 485.0 L1193.5 485.4 L1192.0 485.6 L1190.5 485.5 L1189.0 487.0 L1187.5 487.7 L1186.0 486.2 L1184.5 488.1 L1183.0 488.3 L1181.5 488.3 L1180.0 488.1 L1178.5 486.3 L1177.0 486.2 L1175.5 486.1 L1174.0 485.7 L1172.5 485.6 L1171.0 486.8 L1169.5 486.9 L1168.0 485.7 L1166.5 485.9 L1165.0 485.5 L1163.5 485.7 L1162.0 486.7 L1160.5 485.0 L1159.0 485.9 L1157.5 485.9 L1156.0 485.8 L1154.5 485.3 L1153.0 486.6 L1151.5 485.8 L1150.0 486.6 L1148.5 485.0 L1147.0 485.2 L1145.5 486.5 L1144.0 487.4 L1142.5 486.4 L1141.0 485.1 L1139.5 485.3 L1138.0 486.7 L1136.5 487.4 L1135.0 485.0 L1133.5 485.4 L1132.0 488.0 L1130.5 487.6 L1129.0 487.3 L1127.5 488.4 L1126.0 487.7 L1124.5 485.9 L1123.0 487.1 L1121.5 486.3 L1120.0 485.9 L1118.5 487.5 L1117.0 487.3 L1115.5 486.4 L1114.0 486.0 L1112.5 486.4 L1111.0 485.1 L1109.5 485.3 L1108.0 485.7 L1106.5 487.3 L1105.0 487.3 L1103.5 486.1 L1102.0 487.2 L1100.5 486.4 L1099.0 486.8 L1097.5 485.0 L1096.0 487.2 L1094.5 486.3 L1093.0 486.0 L1091.5 487.3 L1090.0 486.3 L1088.5 486.2 L1087.0 485.2 L1085.5 485.7 L1084.0 485.7 L1082.5 486.5 L1081.0 487.0 L1079.5 485.9 L1078.0 487.1 L1076.5 485.0 L1075.0 486.6 L1073.5 486.5 L1072.0 487.3 L1070.5 487.2 L1069.0 485.1 L1067.5 486.5 L1066.0 486.9 L1064.5 487.5 L1063.0 486.6 L1061.5 487.0 L1060.0 485.9 L1058.5 486.5 L1057.0 485.5 L1055.5 487.0 L1054.0 485.8 L1052.5 487.2 L1051.0 486.2 L1049.5 485.7 L1048.0 487.1 L1046.5 486.0 L1045.0 486.8 L1043.5 485.6 L1042.0 486.3 L1040.5 486.0 L1039.0 486.5 L1037.5 486.8 L1036.0 486.7 L1034.5 486.5 L1033.0 485.7 L1031.5 487.4 L1030.0 485.4 L1028.5 485.7 L1027.0 487.4 L1025.5 486.2 L1024.0 487.3 L1022.5 487.4 L1021.0 485.7 L1019.5 487.5 L1018.0 486.8 L1016.5 486.5 L1015.0 486.6 L1013.5 486.3 L1012.0 485.4 L1010.5 486.2 L1009.0 487.4 L1007.5 486.0 L1006.0 485.0 L1004.5 486.7 L1003.0 485.2 L1001.5 485.4 L1000.0 485.8 L998.5 486.1 L997.0 486.8 L995.5 485.2 L994.0 486.4 L992.5 485.3 L991.0 486.2 L989.5 485.1 L988.0 487.4 L986.5 486.4 L985.0 486.9 L983.5 485.0 L982.0 485.4 L980.5 484.9 L979.0 485.8 L977.5 486.4 L976.0 485.3 L974.5 485.1 L973.0 486.7 L971.5 487.0 L970.0 486.3 L968.5 485.1 L967.0 485.7 L965.5 486.0 L964.0 486.0 L962.5 486.0 L961.0 485.8 L959.5 484.9 L958.0 486.9 L956.5 487.4 L955.0 485.3 L953.5 485.4 L952.0 487.1 L950.5 486.0 L949.0 485.8 L947.5 485.5 L946.0 486.7 L944.5 487.2 L943.0 486.2 L941.5 485.3 L940.0 486.2 L938.5 487.4 L937.0 486.7 L935.5 486.9 L934.0 488.3 L932.5 487.2 L931.0 489.9 L929.5 490.5 L928.0 487.7 L926.5 485.5 L925.0 487.0 L923.5 488.1 L922.0 489.2 L920.5 488.2 L919.0 487.1 L917.5 487.5 L916.0 485.2 L914.5 487.2 L913.0 485.8 L911.5 486.5 L910.0 489.6 L908.5 489.2 L907.0 488.1 L905.5 486.4 L904.0 485.8 L902.5 486.7 L901.0 487.4Z" fill="#ede2cc" stroke="#140c04" stroke-width="0.8"/><path d="M908.5 473 V491M922.5 476 V488M930.5 473 V491M979.5 472 V492M1006.5 472 V492M1055.5 474 V490M1061.5 475 V489M1070.5 463 V501M1092.5 468 V496M1115.5 469 V495M1128.5 464 V500M1131.5 464 V500M1158.5 464 V500M1161.5 464 V500M1183.5 464 V500M1194.5 474 V490M1219.5 474 V490M1231.5 472 V492M1240.5 475 V489" stroke="#140c04" stroke-width="3" opacity="0.6"/><path d="M908.5 473 V491M922.5 476 V488M930.5 473 V491M979.5 472 V492M1006.5 472 V492M1055.5 474 V490M1061.5 475 V489M1070.5 463 V501M1092.5 468 V496M1115.5 469 V495M1128.5 464 V500M1131.5 464 V500M1158.5 464 V500M1161.5 464 V500M1183.5 464 V500M1194.5 474 V490M1219.5 474 V490M1231.5 472 V492M1240.5 475 V489" stroke="#ede2cc" stroke-width="1"/><path d="M901.0 618.3 L902.5 619.2 L904.0 619.6 L905.5 617.1 L907.0 617.6 L908.5 618.6 L910.0 617.2 L911.5 617.6 L913.0 618.9 L914.5 618.2 L916.0 617.9 L917.5 618.5 L919.0 619.3 L920.5 617.7 L922.0 618.4 L923.5 618.9 L925.0 618.8 L926.5 619.0 L928.0 617.1 L929.5 618.0 L931.0 618.9 L932.5 617.1 L934.0 617.9 L935.5 618.0 L937.0 620.7 L938.5 620.9 L940.0 621.1 L941.5 620.2 L943.0 620.3 L944.5 620.0 L946.0 620.1 L947.5 620.0 L949.0 621.0 L950.5 620.0 L952.0 620.6 L953.5 619.3 L955.0 619.8 L956.5 620.7 L958.0 621.0 L959.5 619.9 L961.0 619.7 L962.5 620.5 L964.0 620.0 L965.5 620.4 L967.0 620.1 L968.5 619.7 L970.0 620.3 L971.5 620.3 L973.0 620.9 L974.5 620.9 L976.0 621.1 L977.5 619.6 L979.0 619.8 L980.5 619.8 L982.0 620.7 L983.5 620.4 L985.0 619.6 L986.5 619.9 L988.0 619.6 L989.5 621.0 L991.0 620.8 L992.5 619.3 L994.0 621.1 L995.5 620.7 L997.0 620.0 L998.5 620.5 L1000.0 620.1 L1001.5 620.9 L1003.0 619.8 L1004.5 620.3 L1006.0 619.7 L1007.5 619.5 L1009.0 619.8 L1010.5 619.5 L1012.0 620.9 L1013.5 620.1 L1015.0 620.0 L1016.5 619.7 L1018.0 621.1 L1019.5 620.3 L1021.0 620.4 L1022.5 620.2 L1024.0 620.1 L1025.5 621.0 L1027.0 619.5 L1028.5 620.2 L1030.0 619.5 L1031.5 619.9 L1033.0 620.6 L1034.5 619.8 L1036.0 619.8 L1037.5 620.2 L1039.0 621.0 L1040.5 620.4 L1042.0 620.7 L1043.5 619.8 L1045.0 619.5 L1046.5 620.0 L1048.0 619.9 L1049.5 621.0 L1051.0 620.0 L1052.5 621.0 L1054.0 620.3 L1055.5 620.4 L1057.0 619.8 L1058.5 620.5 L1060.0 619.2 L1061.5 618.3 L1063.0 620.3 L1064.5 620.0 L1066.0 620.1 L1067.5 620.3 L1069.0 618.4 L1070.5 619.7 L1072.0 619.5 L1073.5 619.7 L1075.0 620.0 L1076.5 619.4 L1078.0 619.5 L1079.5 620.5 L1081.0 618.7 L1082.5 619.9 L1084.0 619.2 L1085.5 620.4 L1087.0 619.8 L1088.5 618.4 L1090.0 618.5 L1091.5 618.6 L1093.0 618.4 L1094.5 619.8 L1096.0 619.2 L1097.5 619.7 L1099.0 619.6 L1100.5 619.9 L1102.0 619.2 L1103.5 619.5 L1105.0 619.6 L1106.5 620.1 L1108.0 620.1 L1109.5 619.1 L1111.0 619.1 L1112.5 619.5 L1114.0 618.8 L1115.5 618.9 L1117.0 619.3 L1118.5 620.5 L1120.0 619.5 L1121.5 619.8 L1123.0 619.4 L1124.5 618.7 L1126.0 618.5 L1127.5 619.4 L1129.0 619.5 L1130.5 619.6 L1132.0 618.7 L1133.5 619.1 L1135.0 618.5 L1136.5 620.2 L1138.0 619.7 L1139.5 619.8 L1141.0 620.1 L1142.5 618.6 L1144.0 620.5 L1145.5 620.5 L1147.0 618.6 L1148.5 618.5 L1150.0 619.9 L1151.5 619.5 L1153.0 620.0 L1154.5 618.9 L1156.0 619.2 L1157.5 618.5 L1159.0 620.1 L1160.5 619.0 L1162.0 620.2 L1163.5 619.3 L1165.0 620.0 L1166.5 619.0 L1168.0 618.6 L1169.5 618.4 L1171.0 619.4 L1172.5 618.7 L1174.0 619.5 L1175.5 618.4 L1177.0 618.5 L1178.5 620.3 L1180.0 618.1 L1181.5 617.1 L1183.0 617.7 L1184.5 618.3 L1186.0 617.9 L1187.5 620.4 L1189.0 619.2 L1190.5 618.7 L1192.0 620.2 L1193.5 620.4 L1195.0 618.8 L1196.5 618.4 L1198.0 620.1 L1199.5 619.2 L1201.0 619.0 L1202.5 619.2 L1204.0 618.8 L1205.5 620.2 L1207.0 618.4 L1208.5 619.9 L1210.0 620.1 L1211.5 619.1 L1213.0 618.4 L1214.5 619.9 L1216.0 618.4 L1217.5 620.5 L1219.0 620.4 L1220.5 619.8 L1222.0 620.0 L1223.5 619.5 L1225.0 619.8 L1226.5 620.1 L1228.0 618.0 L1229.5 618.0 L1231.0 616.6 L1232.5 619.7 L1234.0 619.7 L1235.5 620.5 L1237.0 618.9 L1238.5 619.3 L1240.0 620.3 L1241.5 618.9 L1243.0 620.4 L1244.5 619.4 L1246.0 619.7 L1247.5 618.5 L1249.0 619.4 L1250.5 620.4 L1252.0 619.8 L1253.5 619.9 L1255.0 618.5 L1256.5 619.6 L1258.0 617.8 L1259.5 619.3 L1261.0 618.7 L1262.5 617.4 L1264.0 617.4 L1265.5 618.2 L1267.0 618.2 L1268.5 619.9 L1270.0 618.9 L1271.5 617.4 L1273.0 617.4 L1274.5 619.8 L1276.0 619.9 L1277.5 618.4 L1279.0 618.3 L1280.5 619.2 L1282.0 619.4 L1283.5 618.5 L1285.0 619.5 L1285.0 629.6 L1283.5 629.4 L1282.0 630.0 L1280.5 630.2 L1279.0 628.7 L1277.5 628.2 L1276.0 628.0 L1274.5 628.5 L1273.0 628.1 L1271.5 630.2 L1270.0 630.2 L1268.5 628.8 L1267.0 628.8 L1265.5 629.8 L1264.0 628.2 L1262.5 628.8 L1261.0 627.9 L1259.5 628.4 L1258.0 629.5 L1256.5 630.0 L1255.0 629.6 L1253.5 628.9 L1252.0 628.1 L1250.5 629.2 L1249.0 629.1 L1247.5 627.9 L1246.0 628.6 L1244.5 629.0 L1243.0 628.4 L1241.5 629.2 L1240.0 628.7 L1238.5 628.7 L1237.0 627.9 L1235.5 628.9 L1234.0 627.5 L1232.5 629.9 L1231.0 630.0 L1229.5 628.7 L1228.0 628.3 L1226.5 628.5 L1225.0 627.6 L1223.5 627.4 L1222.0 627.1 L1220.5 629.0 L1219.0 628.3 L1217.5 627.5 L1216.0 627.9 L1214.5 628.4 L1213.0 628.2 L1211.5 627.3 L1210.0 629.0 L1208.5 628.2 L1207.0 628.0 L1205.5 627.9 L1204.0 629.1 L1202.5 629.0 L1201.0 628.3 L1199.5 627.5 L1198.0 627.4 L1196.5 627.2 L1195.0 628.1 L1193.5 628.0 L1192.0 627.8 L1190.5 627.7 L1189.0 627.5 L1187.5 629.0 L1186.0 627.8 L1184.5 629.7 L1183.0 631.1 L1181.5 628.4 L1180.0 629.2 L1178.5 627.9 L1177.0 629.2 L1175.5 628.3 L1174.0 628.5 L1172.5 628.0 L1171.0 627.2 L1169.5 628.7 L1168.0 629.3 L1166.5 628.0 L1165.0 627.5 L1163.5 629.1 L1162.0 627.6 L1160.5 627.3 L1159.0 628.8 L1157.5 627.2 L1156.0 628.3 L1154.5 627.9 L1153.0 627.8 L1151.5 628.6 L1150.0 627.4 L1148.5 628.8 L1147.0 628.6 L1145.5 628.2 L1144.0 628.6 L1142.5 628.4 L1141.0 628.4 L1139.5 627.9 L1138.0 627.7 L1136.5 628.6 L1135.0 628.2 L1133.5 628.0 L1132.0 629.3 L1130.5 627.8 L1129.0 628.4 L1127.5 630.8 L1126.0 627.9 L1124.5 627.9 L1123.0 627.3 L1121.5 628.9 L1120.0 629.0 L1118.5 628.3 L1117.0 627.8 L1115.5 627.6 L1114.0 629.0 L1112.5 628.4 L1111.0 627.8 L1109.5 627.4 L1108.0 628.7 L1106.5 628.3 L1105.0 627.8 L1103.5 627.5 L1102.0 628.4 L1100.5 628.1 L1099.0 627.6 L1097.5 628.9 L1096.0 628.2 L1094.5 627.6 L1093.0 627.3 L1091.5 629.1 L1090.0 629.1 L1088.5 628.8 L1087.0 628.9 L1085.5 627.7 L1084.0 627.6 L1082.5 629.0 L1081.0 627.2 L1079.5 627.3 L1078.0 629.2 L1076.5 627.5 L1075.0 627.7 L1073.5 628.5 L1072.0 628.2 L1070.5 628.7 L1069.0 629.2 L1067.5 627.4 L1066.0 627.6 L1064.5 628.8 L1063.0 627.9 L1061.5 628.9 L1060.0 629.2 L1058.5 629.2 L1057.0 628.8 L1055.5 628.8 L1054.0 627.5 L1052.5 627.1 L1051.0 626.8 L1049.5 626.8 L1048.0 627.2 L1046.5 627.6 L1045.0 626.6 L1043.5 627.6 L1042.0 628.0 L1040.5 628.1 L1039.0 627.6 L1037.5 627.6 L1036.0 627.3 L1034.5 626.7 L1033.0 627.8 L1031.5 627.5 L1030.0 626.6 L1028.5 627.5 L1027.0 627.5 L1025.5 628.3 L1024.0 628.2 L1022.5 628.2 L1021.0 626.8 L1019.5 627.5 L1018.0 626.8 L1016.5 626.9 L1015.0 626.7 L1013.5 626.8 L1012.0 626.6 L1010.5 627.4 L1009.0 627.9 L1007.5 626.8 L1006.0 627.2 L1004.5 627.8 L1003.0 626.6 L1001.5 627.5 L1000.0 626.7 L998.5 626.8 L997.0 628.2 L995.5 627.2 L994.0 626.6 L992.5 627.6 L991.0 628.2 L989.5 628.3 L988.0 627.0 L986.5 626.8 L985.0 627.2 L983.5 627.2 L982.0 628.2 L980.5 627.3 L979.0 626.9 L977.5 627.4 L976.0 627.9 L974.5 627.9 L973.0 627.6 L971.5 627.1 L970.0 626.9 L968.5 627.1 L967.0 626.5 L965.5 628.3 L964.0 627.3 L962.5 628.1 L961.0 626.7 L959.5 627.6 L958.0 627.2 L956.5 627.6 L955.0 628.2 L953.5 626.7 L952.0 628.3 L950.5 626.8 L949.0 627.5 L947.5 628.2 L946.0 626.8 L944.5 626.7 L943.0 627.2 L941.5 628.2 L940.0 626.7 L938.5 627.5 L937.0 626.5 L935.5 630.5 L934.0 628.3 L932.5 628.3 L931.0 630.0 L929.5 629.9 L928.0 628.2 L926.5 630.5 L925.0 630.3 L923.5 628.6 L922.0 628.2 L920.5 630.0 L919.0 628.8 L917.5 630.1 L916.0 630.2 L914.5 630.6 L913.0 628.3 L911.5 628.4 L910.0 629.7 L908.5 630.2 L907.0 630.1 L905.5 628.2 L904.0 629.4 L902.5 630.4 L901.0 629.0Z" fill="#ede2cc" stroke="#140c04" stroke-width="0.8"/><path d="M908.5 615 V633M922.5 615 V633M930.5 615 V633M1005.5 604 V644M1070.5 604 V644M1092.5 609 V639M1115.5 609 V639M1128.5 604 V644M1131.5 604 V644M1158.5 604 V644M1161.5 604 V644M1183.5 604 V644" stroke="#140c04" stroke-width="3" opacity="0.6"/><path d="M908.5 615 V633M922.5 615 V633M930.5 615 V633M1005.5 604 V644M1070.5 604 V644M1092.5 609 V639M1115.5 609 V639M1128.5 604 V644M1131.5 604 V644M1158.5 604 V644M1161.5 604 V644M1183.5 604 V644" stroke="#ede2cc" stroke-width="1"/><path d="M901.0 760.9 L902.5 760.9 L904.0 760.4 L905.5 750.4 L907.0 751.2 L908.5 753.0 L910.0 748.4 L911.5 749.3 L913.0 752.3 L914.5 750.5 L916.0 750.5 L917.5 753.9 L919.0 748.8 L920.5 751.0 L922.0 754.8 L923.5 749.1 L925.0 752.6 L926.5 753.0 L928.0 752.3 L929.5 751.4 L931.0 754.0 L932.5 752.4 L934.0 752.0 L935.5 751.0 L937.0 749.8 L938.5 751.6 L940.0 751.4 L941.5 750.3 L943.0 754.0 L944.5 749.3 L946.0 752.5 L947.5 753.3 L949.0 753.9 L950.5 752.2 L952.0 751.0 L953.5 750.3 L955.0 752.8 L956.5 754.8 L958.0 752.9 L959.5 754.4 L961.0 751.3 L962.5 749.5 L964.0 753.3 L965.5 749.2 L967.0 751.1 L968.5 751.7 L970.0 752.2 L971.5 751.0 L973.0 751.6 L974.5 751.8 L976.0 752.0 L977.5 754.5 L979.0 754.1 L980.5 753.7 L982.0 748.1 L983.5 751.4 L985.0 751.1 L986.5 749.6 L988.0 749.8 L989.5 750.0 L991.0 753.1 L992.5 750.1 L994.0 749.9 L995.5 748.6 L997.0 748.7 L998.5 751.0 L1000.0 749.1 L1001.5 753.5 L1003.0 748.7 L1004.5 747.2 L1006.0 749.2 L1007.5 749.6 L1009.0 752.2 L1010.5 752.9 L1012.0 752.0 L1013.5 746.6 L1015.0 750.2 L1016.5 748.5 L1018.0 750.3 L1019.5 749.4 L1021.0 750.6 L1022.5 748.8 L1024.0 748.8 L1025.5 746.9 L1027.0 752.5 L1028.5 752.3 L1030.0 751.1 L1031.5 747.5 L1033.0 750.8 L1034.5 749.2 L1036.0 750.9 L1037.5 750.3 L1039.0 749.2 L1040.5 749.2 L1042.0 747.6 L1043.5 746.8 L1045.0 746.8 L1046.5 745.3 L1048.0 752.0 L1049.5 746.4 L1051.0 750.1 L1052.5 747.0 L1054.0 750.4 L1055.5 751.2 L1057.0 746.6 L1058.5 750.8 L1060.0 745.4 L1061.5 748.2 L1063.0 745.2 L1064.5 752.2 L1066.0 746.1 L1067.5 748.5 L1069.0 746.7 L1070.5 750.0 L1072.0 747.3 L1073.5 748.2 L1075.0 749.5 L1076.5 751.1 L1078.0 747.9 L1079.5 745.1 L1081.0 745.7 L1082.5 749.9 L1084.0 748.2 L1085.5 751.4 L1087.0 747.4 L1088.5 747.3 L1090.0 751.3 L1091.5 746.6 L1093.0 748.6 L1094.5 751.2 L1096.0 751.6 L1097.5 751.3 L1099.0 748.6 L1100.5 747.1 L1102.0 750.1 L1103.5 752.5 L1105.0 746.1 L1106.5 751.7 L1108.0 750.4 L1109.5 746.3 L1111.0 748.8 L1112.5 750.7 L1114.0 752.0 L1115.5 748.0 L1117.0 747.8 L1118.5 752.1 L1120.0 749.3 L1121.5 749.8 L1123.0 750.7 L1124.5 747.0 L1126.0 752.8 L1127.5 751.5 L1129.0 749.2 L1130.5 751.3 L1132.0 749.6 L1133.5 750.2 L1135.0 752.7 L1136.5 749.3 L1138.0 749.7 L1139.5 750.2 L1141.0 752.6 L1142.5 747.8 L1144.0 748.5 L1145.5 753.6 L1147.0 754.0 L1148.5 752.1 L1150.0 749.6 L1151.5 750.3 L1153.0 753.3 L1154.5 752.6 L1156.0 752.9 L1157.5 750.6 L1159.0 751.9 L1160.5 754.3 L1162.0 754.4 L1163.5 749.9 L1165.0 753.9 L1166.5 754.6 L1168.0 750.7 L1169.5 749.2 L1171.0 754.4 L1172.5 752.0 L1174.0 754.6 L1175.5 751.9 L1177.0 752.6 L1178.5 753.3 L1180.0 752.1 L1181.5 754.4 L1183.0 754.1 L1184.5 754.2 L1186.0 750.1 L1187.5 751.5 L1189.0 750.5 L1190.5 751.9 L1192.0 751.2 L1193.5 751.1 L1195.0 753.7 L1196.5 750.8 L1198.0 749.8 L1199.5 750.9 L1201.0 753.1 L1202.5 753.9 L1204.0 754.7 L1205.5 752.2 L1207.0 749.9 L1208.5 752.8 L1210.0 753.9 L1211.5 752.5 L1213.0 753.2 L1214.5 751.6 L1216.0 751.3 L1217.5 751.4 L1219.0 750.8 L1220.5 748.9 L1222.0 751.8 L1223.5 748.7 L1225.0 752.2 L1226.5 749.7 L1228.0 757.0 L1229.5 756.0 L1231.0 758.0 L1232.5 756.6 L1234.0 757.0 L1235.5 759.3 L1237.0 757.9 L1238.5 756.9 L1240.0 762.8 L1241.5 763.1 L1243.0 763.1 L1244.5 762.9 L1246.0 762.6 L1247.5 762.3 L1249.0 762.1 L1250.5 762.7 L1252.0 762.2 L1253.5 763.2 L1255.0 762.8 L1256.5 763.1 L1258.0 763.1 L1259.5 762.9 L1261.0 762.9 L1262.5 763.2 L1264.0 762.9 L1265.5 762.5 L1267.0 762.3 L1268.5 763.3 L1270.0 762.8 L1271.5 763.2 L1273.0 762.8 L1274.5 762.8 L1276.0 763.3 L1277.5 763.3 L1279.0 762.2 L1280.5 762.6 L1282.0 763.3 L1283.5 762.3 L1285.0 762.3 L1285.0 769.2 L1283.5 769.8 L1282.0 769.9 L1280.5 769.9 L1279.0 769.4 L1277.5 768.6 L1276.0 769.1 L1274.5 769.8 L1273.0 768.7 L1271.5 769.8 L1270.0 769.8 L1268.5 769.6 L1267.0 769.8 L1265.5 769.3 L1264.0 768.6 L1262.5 769.3 L1261.0 769.4 L1259.5 768.9 L1258.0 768.8 L1256.5 768.6 L1255.0 769.8 L1253.5 769.5 L1252.0 769.4 L1250.5 769.6 L1249.0 770.0 L1247.5 769.1 L1246.0 769.6 L1244.5 769.8 L1243.0 768.8 L1241.5 769.9 L1240.0 769.6 L1238.5 775.2 L1237.0 773.6 L1235.5 773.8 L1234.0 772.8 L1232.5 775.7 L1231.0 774.8 L1229.5 775.8 L1228.0 772.9 L1226.5 783.1 L1225.0 782.2 L1223.5 780.6 L1222.0 781.5 L1220.5 778.1 L1219.0 779.2 L1217.5 778.2 L1216.0 783.0 L1214.5 781.2 L1213.0 778.5 L1211.5 780.0 L1210.0 780.1 L1208.5 781.1 L1207.0 781.7 L1205.5 782.5 L1204.0 780.7 L1202.5 780.8 L1201.0 782.1 L1199.5 777.8 L1198.0 779.3 L1196.5 779.5 L1195.0 778.9 L1193.5 780.2 L1192.0 780.7 L1190.5 781.3 L1189.0 779.6 L1187.5 780.9 L1186.0 781.9 L1184.5 781.3 L1183.0 777.7 L1181.5 780.3 L1180.0 778.0 L1178.5 778.2 L1177.0 777.6 L1175.5 781.5 L1174.0 781.0 L1172.5 779.3 L1171.0 779.5 L1169.5 780.6 L1168.0 781.1 L1166.5 780.0 L1165.0 779.7 L1163.5 783.4 L1162.0 777.8 L1160.5 777.5 L1159.0 780.9 L1157.5 781.2 L1156.0 779.1 L1154.5 782.8 L1153.0 779.0 L1151.5 783.9 L1150.0 780.0 L1148.5 783.6 L1147.0 783.2 L1145.5 783.1 L1144.0 781.3 L1142.5 779.2 L1141.0 780.3 L1139.5 780.7 L1138.0 781.2 L1136.5 778.8 L1135.0 782.7 L1133.5 778.3 L1132.0 782.3 L1130.5 784.4 L1129.0 784.4 L1127.5 780.4 L1126.0 783.4 L1124.5 779.4 L1123.0 779.2 L1121.5 784.7 L1120.0 781.6 L1118.5 784.8 L1117.0 784.8 L1115.5 782.1 L1114.0 781.7 L1112.5 780.3 L1111.0 782.0 L1109.5 779.3 L1108.0 780.4 L1106.5 783.6 L1105.0 779.5 L1103.5 781.4 L1102.0 779.6 L1100.5 781.8 L1099.0 786.3 L1097.5 783.9 L1096.0 786.0 L1094.5 782.5 L1093.0 782.7 L1091.5 781.9 L1090.0 785.4 L1088.5 786.6 L1087.0 783.9 L1085.5 785.8 L1084.0 782.1 L1082.5 782.5 L1081.0 783.3 L1079.5 779.8 L1078.0 785.9 L1076.5 780.8 L1075.0 784.0 L1073.5 786.0 L1072.0 780.0 L1070.5 780.0 L1069.0 786.7 L1067.5 785.6 L1066.0 783.9 L1064.5 781.1 L1063.0 786.0 L1061.5 782.9 L1060.0 781.0 L1058.5 785.1 L1057.0 786.5 L1055.5 780.3 L1054.0 780.9 L1052.5 784.0 L1051.0 781.9 L1049.5 779.6 L1048.0 785.6 L1046.5 784.7 L1045.0 786.4 L1043.5 782.3 L1042.0 784.6 L1040.5 782.8 L1039.0 782.5 L1037.5 784.5 L1036.0 782.4 L1034.5 782.8 L1033.0 784.1 L1031.5 783.6 L1030.0 782.3 L1028.5 779.5 L1027.0 782.0 L1025.5 783.5 L1024.0 785.0 L1022.5 780.3 L1021.0 783.2 L1019.5 780.6 L1018.0 783.3 L1016.5 782.3 L1015.0 783.7 L1013.5 784.6 L1012.0 779.2 L1010.5 779.8 L1009.0 780.8 L1007.5 784.6 L1006.0 779.3 L1004.5 780.2 L1003.0 784.6 L1001.5 784.2 L1000.0 784.0 L998.5 783.7 L997.0 784.3 L995.5 781.1 L994.0 781.8 L992.5 782.4 L991.0 779.4 L989.5 783.7 L988.0 780.5 L986.5 783.4 L985.0 780.5 L983.5 780.4 L982.0 780.7 L980.5 780.4 L979.0 778.1 L977.5 780.8 L976.0 777.7 L974.5 783.4 L973.0 778.4 L971.5 780.7 L970.0 779.9 L968.5 780.1 L967.0 777.7 L965.5 780.4 L964.0 780.4 L962.5 781.3 L961.0 779.5 L959.5 779.9 L958.0 779.1 L956.5 781.4 L955.0 779.7 L953.5 780.0 L952.0 782.0 L950.5 778.1 L949.0 777.8 L947.5 780.7 L946.0 778.5 L944.5 779.6 L943.0 781.9 L941.5 777.6 L940.0 777.7 L938.5 779.3 L937.0 778.0 L935.5 780.2 L934.0 782.0 L932.5 777.3 L931.0 778.4 L929.5 782.2 L928.0 777.5 L926.5 780.4 L925.0 782.6 L923.5 779.0 L922.0 778.0 L920.5 777.5 L919.0 783.1 L917.5 782.0 L916.0 781.4 L914.5 780.1 L913.0 779.1 L911.5 781.1 L910.0 777.7 L908.5 783.4 L907.0 779.6 L905.5 778.6 L904.0 771.6 L902.5 770.3 L901.0 770.8Z" fill="#d8c6f0" stroke="#1a0838" stroke-width="1"/><path d="M928.5 744 V788M1070.5 744 V788M1132.5 744 V788M1148.5 744 V788M1226.5 744 V788" stroke="#1a0838" stroke-width="3" opacity="0.6"/><path d="M928.5 744 V788M1070.5 744 V788M1132.5 744 V788M1148.5 744 V788M1226.5 744 V788" stroke="#d8c6f0" stroke-width="1"/><path d="M901.0 907.5 L902.5 907.5 L904.0 907.5 L905.5 907.5 L907.0 907.5 L908.5 907.5 L910.0 907.5 L911.5 907.5 L913.0 907.5 L914.5 907.5 L916.0 907.5 L917.5 907.5 L919.0 907.5 L920.5 907.5 L922.0 907.5 L923.5 907.5 L925.0 907.5 L926.5 907.5 L928.0 907.5 L929.5 907.5 L931.0 907.5 L932.5 907.5 L934.0 907.5 L935.5 907.5 L937.0 907.5 L938.5 907.5 L940.0 907.5 L941.5 907.5 L943.0 907.5 L944.5 907.5 L946.0 907.5 L947.5 907.5 L949.0 907.5 L950.5 907.5 L952.0 907.5 L953.5 907.5 L955.0 907.5 L956.5 907.5 L958.0 907.5 L959.5 907.5 L961.0 907.5 L962.5 907.5 L964.0 907.5 L965.5 907.5 L967.0 907.5 L968.5 907.5 L970.0 907.5 L971.5 907.5 L973.0 907.5 L974.5 907.5 L976.0 907.5 L977.5 907.5 L979.0 907.5 L980.5 907.5 L982.0 907.5 L983.5 907.5 L985.0 907.5 L986.5 907.5 L988.0 907.5 L989.5 907.5 L991.0 907.5 L992.5 907.5 L994.0 907.5 L995.5 907.5 L997.0 907.5 L998.5 907.5 L1000.0 907.5 L1001.5 907.5 L1003.0 907.5 L1004.5 907.2 L1006.0 906.3 L1007.5 906.0 L1009.0 906.9 L1010.5 907.5 L1012.0 907.5 L1013.5 907.5 L1015.0 907.5 L1016.5 907.5 L1018.0 907.5 L1019.5 907.5 L1021.0 907.5 L1022.5 907.5 L1024.0 907.5 L1025.5 907.5 L1027.0 907.5 L1028.5 907.5 L1030.0 907.5 L1031.5 907.5 L1033.0 907.5 L1034.5 907.5 L1036.0 907.5 L1037.5 907.5 L1039.0 907.5 L1040.5 907.5 L1042.0 907.5 L1043.5 907.5 L1045.0 906.9 L1046.5 906.0 L1048.0 906.3 L1049.5 907.2 L1051.0 907.5 L1052.5 907.5 L1054.0 907.5 L1055.5 907.5 L1057.0 907.5 L1058.5 907.5 L1060.0 907.5 L1061.5 907.5 L1063.0 907.5 L1064.5 907.5 L1066.0 907.5 L1067.5 907.5 L1069.0 907.5 L1070.5 907.5 L1072.0 907.5 L1073.5 907.4 L1075.0 906.8 L1076.5 906.2 L1078.0 905.6 L1079.5 906.2 L1081.0 906.7 L1082.5 907.4 L1084.0 907.5 L1085.5 907.5 L1087.0 907.5 L1088.5 907.5 L1090.0 906.6 L1091.5 905.1 L1093.0 905.7 L1094.5 907.0 L1096.0 907.5 L1097.5 907.5 L1099.0 907.5 L1100.5 907.5 L1102.0 907.5 L1103.5 907.5 L1105.0 907.5 L1106.5 907.5 L1108.0 907.5 L1109.5 907.5 L1111.0 907.5 L1112.5 907.5 L1114.0 906.4 L1115.5 904.5 L1117.0 902.8 L1118.5 904.0 L1120.0 901.9 L1121.5 901.4 L1123.0 903.4 L1124.5 905.5 L1126.0 905.1 L1127.5 902.8 L1129.0 901.2 L1130.5 900.7 L1132.0 902.3 L1133.5 904.5 L1135.0 906.2 L1136.5 907.5 L1138.0 907.5 L1139.5 907.5 L1141.0 907.5 L1142.5 907.5 L1144.0 907.5 L1145.5 907.5 L1147.0 907.5 L1148.5 907.5 L1150.0 907.5 L1151.5 907.5 L1153.0 907.5 L1154.5 907.5 L1156.0 907.5 L1157.5 907.5 L1159.0 907.5 L1160.5 907.5 L1162.0 907.5 L1163.5 907.5 L1165.0 907.5 L1166.5 907.5 L1168.0 907.5 L1169.5 907.5 L1171.0 907.5 L1172.5 907.5 L1174.0 907.5 L1175.5 907.5 L1177.0 907.5 L1178.5 907.5 L1180.0 907.5 L1181.5 904.8 L1183.0 901.5 L1184.5 900.7 L1186.0 903.9 L1187.5 906.5 L1189.0 907.5 L1190.5 907.5 L1192.0 907.5 L1193.5 905.2 L1195.0 902.8 L1196.5 905.2 L1198.0 907.5 L1199.5 907.5 L1201.0 907.5 L1202.5 907.5 L1204.0 907.5 L1205.5 907.5 L1207.0 907.5 L1208.5 907.5 L1210.0 907.5 L1211.5 907.5 L1213.0 907.5 L1214.5 907.5 L1216.0 907.5 L1217.5 907.5 L1219.0 906.8 L1220.5 905.7 L1222.0 904.4 L1223.5 903.9 L1225.0 905.2 L1226.5 906.4 L1228.0 906.0 L1229.5 903.8 L1231.0 904.3 L1232.5 906.7 L1234.0 907.5 L1235.5 907.5 L1237.0 906.8 L1238.5 905.8 L1240.0 904.7 L1241.5 905.8 L1243.0 906.8 L1244.5 907.5 L1246.0 907.5 L1247.5 907.5 L1249.0 907.5 L1250.5 907.5 L1252.0 907.5 L1253.5 907.5 L1255.0 907.5 L1256.5 906.5 L1258.0 906.5 L1259.5 906.4 L1261.0 906.5 L1262.5 906.4 L1264.0 906.4 L1265.5 906.4 L1267.0 906.4 L1268.5 906.4 L1270.0 906.4 L1271.5 906.5 L1273.0 906.6 L1274.5 906.5 L1276.0 906.5 L1277.5 906.5 L1279.0 906.5 L1280.5 906.5 L1282.0 906.4 L1283.5 907.5 L1285.0 907.5 L1285.0 908.5 L1283.5 908.5 L1282.0 909.5 L1280.5 909.5 L1279.0 909.5 L1277.5 909.5 L1276.0 909.6 L1274.5 909.5 L1273.0 909.5 L1271.5 909.5 L1270.0 909.5 L1268.5 909.5 L1267.0 909.6 L1265.5 909.6 L1264.0 909.5 L1262.5 909.6 L1261.0 909.6 L1259.5 909.6 L1258.0 909.5 L1256.5 909.5 L1255.0 908.5 L1253.5 908.5 L1252.0 908.5 L1250.5 908.5 L1249.0 908.5 L1247.5 908.5 L1246.0 908.5 L1244.5 908.5 L1243.0 909.2 L1241.5 910.2 L1240.0 911.4 L1238.5 910.4 L1237.0 909.1 L1235.5 908.5 L1234.0 908.5 L1232.5 909.2 L1231.0 911.6 L1229.5 912.2 L1228.0 910.0 L1226.5 909.6 L1225.0 910.8 L1223.5 911.7 L1222.0 911.7 L1220.5 910.3 L1219.0 909.3 L1217.5 908.5 L1216.0 908.5 L1214.5 908.5 L1213.0 908.5 L1211.5 908.5 L1210.0 908.5 L1208.5 908.5 L1207.0 908.5 L1205.5 908.5 L1204.0 908.5 L1202.5 908.5 L1201.0 908.5 L1199.5 908.5 L1198.0 908.5 L1196.5 910.8 L1195.0 913.2 L1193.5 910.8 L1192.0 908.5 L1190.5 908.5 L1189.0 908.5 L1187.5 909.4 L1186.0 912.2 L1184.5 914.8 L1183.0 913.9 L1181.5 911.4 L1180.0 908.5 L1178.5 908.5 L1177.0 908.5 L1175.5 908.5 L1174.0 908.5 L1172.5 908.5 L1171.0 908.5 L1169.5 908.5 L1168.0 908.5 L1166.5 908.5 L1165.0 908.5 L1163.5 908.5 L1162.0 908.5 L1160.5 908.5 L1159.0 908.5 L1157.5 908.5 L1156.0 908.5 L1154.5 908.5 L1153.0 908.5 L1151.5 908.5 L1150.0 908.5 L1148.5 908.5 L1147.0 908.5 L1145.5 908.5 L1144.0 908.5 L1142.5 908.5 L1141.0 908.5 L1139.5 908.5 L1138.0 908.5 L1136.5 908.5 L1135.0 909.8 L1133.5 911.6 L1132.0 913.5 L1130.5 915.8 L1129.0 915.0 L1127.5 913.2 L1126.0 911.1 L1124.5 910.5 L1123.0 912.6 L1121.5 914.3 L1120.0 913.8 L1118.5 911.9 L1117.0 913.3 L1115.5 911.6 L1114.0 909.7 L1112.5 908.5 L1111.0 908.5 L1109.5 908.5 L1108.0 908.5 L1106.5 908.5 L1105.0 908.5 L1103.5 908.5 L1102.0 908.5 L1100.5 908.5 L1099.0 908.5 L1097.5 908.5 L1096.0 908.5 L1094.5 908.9 L1093.0 910.3 L1091.5 910.8 L1090.0 909.4 L1088.5 908.5 L1087.0 908.5 L1085.5 908.5 L1084.0 908.5 L1082.5 908.6 L1081.0 909.2 L1079.5 909.9 L1078.0 910.4 L1076.5 909.8 L1075.0 909.2 L1073.5 908.6 L1072.0 908.5 L1070.5 908.5 L1069.0 908.5 L1067.5 908.5 L1066.0 908.5 L1064.5 908.5 L1063.0 908.5 L1061.5 908.5 L1060.0 908.5 L1058.5 908.5 L1057.0 908.5 L1055.5 908.5 L1054.0 908.5 L1052.5 908.5 L1051.0 908.5 L1049.5 908.8 L1048.0 909.8 L1046.5 910.1 L1045.0 909.1 L1043.5 908.5 L1042.0 908.5 L1040.5 908.5 L1039.0 908.5 L1037.5 908.5 L1036.0 908.5 L1034.5 908.5 L1033.0 908.5 L1031.5 908.5 L1030.0 908.5 L1028.5 908.5 L1027.0 908.5 L1025.5 908.5 L1024.0 908.5 L1022.5 908.5 L1021.0 908.5 L1019.5 908.5 L1018.0 908.5 L1016.5 908.5 L1015.0 908.5 L1013.5 908.5 L1012.0 908.5 L1010.5 908.5 L1009.0 909.1 L1007.5 910.0 L1006.0 909.7 L1004.5 908.8 L1003.0 908.5 L1001.5 908.5 L1000.0 908.5 L998.5 908.5 L997.0 908.5 L995.5 908.5 L994.0 908.5 L992.5 908.5 L991.0 908.5 L989.5 908.5 L988.0 908.5 L986.5 908.5 L985.0 908.5 L983.5 908.5 L982.0 908.5 L980.5 908.5 L979.0 908.5 L977.5 908.5 L976.0 908.5 L974.5 908.5 L973.0 908.5 L971.5 908.5 L970.0 908.5 L968.5 908.5 L967.0 908.5 L965.5 908.5 L964.0 908.5 L962.5 908.5 L961.0 908.5 L959.5 908.5 L958.0 908.5 L956.5 908.5 L955.0 908.5 L953.5 908.5 L952.0 908.5 L950.5 908.5 L949.0 908.5 L947.5 908.5 L946.0 908.5 L944.5 908.5 L943.0 908.5 L941.5 908.5 L940.0 908.5 L938.5 908.5 L937.0 908.5 L935.5 908.5 L934.0 908.5 L932.5 908.5 L931.0 908.5 L929.5 908.5 L928.0 908.5 L926.5 908.5 L925.0 908.5 L923.5 908.5 L922.0 908.5 L920.5 908.5 L919.0 908.5 L917.5 908.5 L916.0 908.5 L914.5 908.5 L913.0 908.5 L911.5 908.5 L910.0 908.5 L908.5 908.5 L907.0 908.5 L905.5 908.5 L904.0 908.5 L902.5 908.5 L901.0 908.5Z" fill="#d8c6f0" stroke="#0a0418" stroke-width="1"/><path d="M910.5 903 V913M1070.5 887 V929M1158.5 892 V924M1161.5 892 V924M1178.5 904 V912" stroke="#0a0418" stroke-width="3" opacity="0.6"/><path d="M910.5 903 V913M1070.5 887 V929M1158.5 892 V924M1161.5 892 V924M1178.5 904 V912" stroke="#d8c6f0" stroke-width="1"/><path d="M901.0 1048.6 L902.5 1047.2 L904.0 1046.5 L905.5 1045.8 L907.0 1046.7 L908.5 1048.1 L910.0 1048.7 L911.5 1048.7 L913.0 1048.8 L914.5 1048.8 L916.0 1048.7 L917.5 1048.5 L919.0 1048.8 L920.5 1048.6 L922.0 1048.4 L923.5 1048.8 L925.0 1048.7 L926.5 1046.1 L928.0 1043.5 L929.5 1042.3 L931.0 1042.5 L932.5 1044.5 L934.0 1047.1 L935.5 1048.5 L937.0 1048.4 L938.5 1048.7 L940.0 1048.5 L941.5 1048.8 L943.0 1048.7 L944.5 1048.5 L946.0 1048.8 L947.5 1048.6 L949.0 1048.7 L950.5 1048.2 L952.0 1047.2 L953.5 1046.7 L955.0 1048.0 L956.5 1048.7 L958.0 1048.8 L959.5 1048.7 L961.0 1048.6 L962.5 1047.6 L964.0 1047.0 L965.5 1046.4 L967.0 1047.1 L968.5 1048.5 L970.0 1048.5 L971.5 1048.7 L973.0 1048.8 L974.5 1047.9 L976.0 1046.8 L977.5 1045.8 L979.0 1045.6 L980.5 1047.5 L982.0 1048.6 L983.5 1048.7 L985.0 1048.4 L986.5 1048.7 L988.0 1048.7 L989.5 1048.6 L991.0 1048.5 L992.5 1048.7 L994.0 1048.5 L995.5 1048.4 L997.0 1046.9 L998.5 1045.6 L1000.0 1044.1 L1001.5 1045.0 L1003.0 1046.6 L1004.5 1048.1 L1006.0 1048.5 L1007.5 1048.7 L1009.0 1048.5 L1010.5 1048.8 L1012.0 1048.4 L1013.5 1048.4 L1015.0 1048.6 L1016.5 1048.6 L1018.0 1048.7 L1019.5 1048.4 L1021.0 1048.1 L1022.5 1047.6 L1024.0 1046.3 L1025.5 1046.5 L1027.0 1047.2 L1028.5 1048.0 L1030.0 1048.7 L1031.5 1048.5 L1033.0 1048.4 L1034.5 1048.8 L1036.0 1048.6 L1037.5 1048.5 L1039.0 1048.7 L1040.5 1047.7 L1042.0 1047.4 L1043.5 1046.9 L1045.0 1046.3 L1046.5 1046.6 L1048.0 1047.5 L1049.5 1047.9 L1051.0 1048.7 L1052.5 1048.5 L1054.0 1048.7 L1055.5 1048.1 L1057.0 1047.1 L1058.5 1045.6 L1060.0 1044.8 L1061.5 1045.9 L1063.0 1047.2 L1064.5 1048.3 L1066.0 1048.7 L1067.5 1048.7 L1069.0 1048.5 L1070.5 1048.4 L1072.0 1048.6 L1073.5 1048.4 L1075.0 1048.7 L1076.5 1048.5 L1078.0 1048.5 L1079.5 1048.6 L1081.0 1047.9 L1082.5 1046.9 L1084.0 1045.3 L1085.5 1045.0 L1087.0 1044.3 L1088.5 1046.6 L1090.0 1046.8 L1091.5 1048.3 L1093.0 1048.7 L1094.5 1048.5 L1096.0 1048.7 L1097.5 1047.7 L1099.0 1046.5 L1100.5 1046.0 L1102.0 1047.0 L1103.5 1048.3 L1105.0 1048.5 L1106.5 1048.5 L1108.0 1047.4 L1109.5 1046.5 L1111.0 1045.3 L1112.5 1045.2 L1114.0 1046.1 L1115.5 1047.2 L1117.0 1047.9 L1118.5 1048.4 L1120.0 1048.5 L1121.5 1048.4 L1123.0 1047.9 L1124.5 1046.6 L1126.0 1045.1 L1127.5 1045.1 L1129.0 1044.0 L1130.5 1043.9 L1132.0 1044.7 L1133.5 1045.0 L1135.0 1045.8 L1136.5 1047.1 L1138.0 1048.7 L1139.5 1048.6 L1141.0 1048.5 L1142.5 1047.6 L1144.0 1046.9 L1145.5 1046.2 L1147.0 1046.9 L1148.5 1048.1 L1150.0 1047.4 L1151.5 1046.2 L1153.0 1047.1 L1154.5 1047.6 L1156.0 1048.5 L1157.5 1048.7 L1159.0 1048.5 L1160.5 1048.6 L1162.0 1048.6 L1163.5 1048.7 L1165.0 1047.9 L1166.5 1047.1 L1168.0 1045.1 L1169.5 1045.0 L1171.0 1045.5 L1172.5 1045.9 L1174.0 1047.1 L1175.5 1048.2 L1177.0 1048.7 L1178.5 1048.4 L1180.0 1048.6 L1181.5 1048.7 L1183.0 1048.7 L1184.5 1048.4 L1186.0 1047.1 L1187.5 1046.7 L1189.0 1045.8 L1190.5 1045.2 L1192.0 1046.1 L1193.5 1047.3 L1195.0 1047.7 L1196.5 1048.7 L1198.0 1048.7 L1199.5 1048.7 L1201.0 1048.5 L1202.5 1048.6 L1204.0 1048.4 L1205.5 1048.1 L1207.0 1047.6 L1208.5 1046.6 L1210.0 1046.3 L1211.5 1046.6 L1213.0 1047.4 L1214.5 1048.2 L1216.0 1048.7 L1217.5 1047.5 L1219.0 1046.9 L1220.5 1045.5 L1222.0 1044.6 L1223.5 1046.2 L1225.0 1046.9 L1226.5 1048.0 L1228.0 1046.7 L1229.5 1045.6 L1231.0 1043.7 L1232.5 1042.8 L1234.0 1045.1 L1235.5 1045.6 L1237.0 1043.1 L1238.5 1044.1 L1240.0 1043.2 L1241.5 1043.8 L1243.0 1044.3 L1244.5 1044.6 L1246.0 1045.0 L1247.5 1044.7 L1249.0 1045.0 L1250.5 1045.8 L1252.0 1045.4 L1253.5 1045.8 L1255.0 1045.2 L1256.5 1044.7 L1258.0 1045.1 L1259.5 1044.7 L1261.0 1044.6 L1262.5 1044.8 L1264.0 1045.0 L1265.5 1045.6 L1267.0 1044.8 L1268.5 1045.2 L1270.0 1044.9 L1271.5 1045.0 L1273.0 1045.5 L1274.5 1045.7 L1276.0 1044.5 L1277.5 1045.0 L1279.0 1044.5 L1280.5 1045.6 L1282.0 1044.7 L1283.5 1048.7 L1285.0 1048.5 L1285.0 1051.3 L1283.5 1051.4 L1282.0 1055.5 L1280.5 1055.3 L1279.0 1054.9 L1277.5 1054.3 L1276.0 1054.3 L1274.5 1054.2 L1273.0 1054.2 L1271.5 1054.6 L1270.0 1055.3 L1268.5 1055.2 L1267.0 1055.2 L1265.5 1054.7 L1264.0 1055.5 L1262.5 1054.9 L1261.0 1054.2 L1259.5 1054.6 L1258.0 1054.9 L1256.5 1055.4 L1255.0 1054.9 L1253.5 1055.4 L1252.0 1054.7 L1250.5 1054.8 L1249.0 1054.7 L1247.5 1055.3 L1246.0 1054.4 L1244.5 1054.3 L1243.0 1056.2 L1241.5 1056.6 L1240.0 1056.6 L1238.5 1055.6 L1237.0 1056.2 L1235.5 1054.4 L1234.0 1055.1 L1232.5 1057.9 L1231.0 1056.5 L1229.5 1055.4 L1228.0 1053.1 L1226.5 1052.0 L1225.0 1052.7 L1223.5 1053.7 L1222.0 1054.8 L1220.5 1053.6 L1219.0 1053.6 L1217.5 1052.5 L1216.0 1051.2 L1214.5 1051.6 L1213.0 1052.5 L1211.5 1053.2 L1210.0 1054.1 L1208.5 1053.5 L1207.0 1052.4 L1205.5 1051.6 L1204.0 1051.4 L1202.5 1051.4 L1201.0 1051.5 L1199.5 1051.3 L1198.0 1051.5 L1196.5 1051.4 L1195.0 1052.1 L1193.5 1053.1 L1192.0 1053.3 L1190.5 1054.0 L1189.0 1054.3 L1187.5 1053.6 L1186.0 1052.4 L1184.5 1051.6 L1183.0 1051.3 L1181.5 1051.4 L1180.0 1051.4 L1178.5 1051.3 L1177.0 1051.3 L1175.5 1051.7 L1174.0 1052.9 L1172.5 1053.6 L1171.0 1055.4 L1169.5 1055.3 L1168.0 1054.6 L1166.5 1053.3 L1165.0 1052.2 L1163.5 1051.3 L1162.0 1051.4 L1160.5 1051.3 L1159.0 1051.6 L1157.5 1051.4 L1156.0 1051.5 L1154.5 1052.5 L1153.0 1053.1 L1151.5 1053.9 L1150.0 1053.0 L1148.5 1051.7 L1147.0 1052.9 L1145.5 1054.2 L1144.0 1053.0 L1142.5 1052.3 L1141.0 1051.4 L1139.5 1051.3 L1138.0 1051.6 L1136.5 1052.2 L1135.0 1054.0 L1133.5 1055.5 L1132.0 1056.3 L1130.5 1056.6 L1129.0 1055.9 L1127.5 1055.0 L1126.0 1054.0 L1124.5 1053.6 L1123.0 1052.1 L1121.5 1051.5 L1120.0 1051.5 L1118.5 1051.4 L1117.0 1051.9 L1115.5 1052.9 L1114.0 1053.6 L1112.5 1054.6 L1111.0 1054.3 L1109.5 1053.6 L1108.0 1052.5 L1106.5 1051.8 L1105.0 1051.4 L1103.5 1051.7 L1102.0 1052.9 L1100.5 1054.7 L1099.0 1053.6 L1097.5 1052.6 L1096.0 1051.6 L1094.5 1051.5 L1093.0 1051.3 L1091.5 1051.9 L1090.0 1053.1 L1088.5 1054.3 L1087.0 1055.1 L1085.5 1055.0 L1084.0 1053.9 L1082.5 1053.1 L1081.0 1052.1 L1079.5 1051.3 L1078.0 1051.4 L1076.5 1051.4 L1075.0 1051.5 L1073.5 1051.3 L1072.0 1051.5 L1070.5 1051.4 L1069.0 1051.3 L1067.5 1051.2 L1066.0 1051.4 L1064.5 1051.6 L1063.0 1052.7 L1061.5 1053.7 L1060.0 1054.7 L1058.5 1053.9 L1057.0 1052.9 L1055.5 1051.7 L1054.0 1051.4 L1052.5 1051.5 L1051.0 1051.4 L1049.5 1052.3 L1048.0 1052.7 L1046.5 1053.6 L1045.0 1054.5 L1043.5 1053.3 L1042.0 1052.5 L1040.5 1051.8 L1039.0 1051.3 L1037.5 1051.3 L1036.0 1051.3 L1034.5 1051.4 L1033.0 1051.3 L1031.5 1051.5 L1030.0 1051.5 L1028.5 1051.9 L1027.0 1053.1 L1025.5 1053.7 L1024.0 1053.4 L1022.5 1052.7 L1021.0 1052.0 L1019.5 1051.5 L1018.0 1051.3 L1016.5 1051.2 L1015.0 1051.5 L1013.5 1051.6 L1012.0 1051.5 L1010.5 1051.5 L1009.0 1051.4 L1007.5 1051.3 L1006.0 1051.4 L1004.5 1052.0 L1003.0 1053.1 L1001.5 1055.1 L1000.0 1056.0 L998.5 1055.1 L997.0 1052.9 L995.5 1052.0 L994.0 1051.5 L992.5 1051.3 L991.0 1051.3 L989.5 1051.5 L988.0 1051.6 L986.5 1051.5 L985.0 1051.3 L983.5 1051.6 L982.0 1051.5 L980.5 1052.7 L979.0 1054.2 L977.5 1054.8 L976.0 1052.7 L974.5 1052.1 L973.0 1051.4 L971.5 1051.2 L970.0 1051.3 L968.5 1051.6 L967.0 1053.0 L965.5 1053.4 L964.0 1053.8 L962.5 1052.7 L961.0 1051.6 L959.5 1051.3 L958.0 1051.4 L956.5 1051.5 L955.0 1052.1 L953.5 1053.8 L952.0 1053.2 L950.5 1052.0 L949.0 1051.4 L947.5 1051.4 L946.0 1051.5 L944.5 1051.4 L943.0 1051.4 L941.5 1051.3 L940.0 1051.5 L938.5 1051.3 L937.0 1051.5 L935.5 1051.6 L934.0 1052.6 L932.5 1055.3 L931.0 1057.5 L929.5 1059.3 L928.0 1055.3 L926.5 1053.4 L925.0 1051.3 L923.5 1051.4 L922.0 1051.6 L920.5 1051.2 L919.0 1051.6 L917.5 1051.2 L916.0 1051.4 L914.5 1051.5 L913.0 1051.5 L911.5 1051.6 L910.0 1051.4 L908.5 1051.9 L907.0 1053.2 L905.5 1054.9 L904.0 1053.9 L902.5 1052.4 L901.0 1051.5Z" fill="#c8ffff" stroke="#041818" stroke-width="1"/><path d="M910.5 1043 V1057M930.5 1040 V1060M963.5 1036 V1064M974.5 1042 V1058M991.5 1039 V1061M1006.5 1038 V1062M1070.5 1036 V1064M1081.5 1042 V1058M1092.5 1036 V1064M1129.5 1030 V1070M1131.5 1034 V1066M1159.5 1040 V1060M1168.5 1040 V1060M1183.5 1030 V1070M1202.5 1044 V1056M1229.5 1042 V1058" stroke="#041818" stroke-width="3" opacity="0.6"/><path d="M910.5 1043 V1057M930.5 1040 V1060M963.5 1036 V1064M974.5 1042 V1058M991.5 1039 V1061M1006.5 1038 V1062M1070.5 1036 V1064M1081.5 1042 V1058M1092.5 1036 V1064M1129.5 1030 V1070M1131.5 1034 V1066M1159.5 1040 V1060M1168.5 1040 V1060M1183.5 1030 V1070M1202.5 1044 V1056M1229.5 1042 V1058" stroke="#c8ffff" stroke-width="1"/><path d="M901.0 1190.7 L902.5 1189.1 L904.0 1188.3 L905.5 1188.0 L907.0 1188.6 L908.5 1190.1 L910.0 1190.7 L911.5 1190.5 L913.0 1190.8 L914.5 1190.7 L916.0 1190.5 L917.5 1190.5 L919.0 1190.4 L920.5 1190.7 L922.0 1190.6 L923.5 1190.6 L925.0 1190.7 L926.5 1188.4 L928.0 1185.3 L929.5 1182.3 L931.0 1184.2 L932.5 1187.2 L934.0 1189.1 L935.5 1190.7 L937.0 1190.7 L938.5 1190.6 L940.0 1190.7 L941.5 1190.7 L943.0 1190.7 L944.5 1190.8 L946.0 1190.4 L947.5 1190.5 L949.0 1190.8 L950.5 1190.0 L952.0 1188.7 L953.5 1188.5 L955.0 1189.5 L956.5 1190.7 L958.0 1190.7 L959.5 1190.7 L961.0 1190.6 L962.5 1189.8 L964.0 1188.6 L965.5 1188.5 L967.0 1189.4 L968.5 1190.4 L970.0 1190.8 L971.5 1190.8 L973.0 1190.6 L974.5 1190.4 L976.0 1189.0 L977.5 1188.2 L979.0 1188.4 L980.5 1189.5 L982.0 1190.8 L983.5 1190.7 L985.0 1190.8 L986.5 1190.6 L988.0 1190.6 L989.5 1190.5 L991.0 1190.8 L992.5 1190.4 L994.0 1190.7 L995.5 1190.0 L997.0 1188.8 L998.5 1187.9 L1000.0 1186.7 L1001.5 1188.1 L1003.0 1189.2 L1004.5 1190.1 L1006.0 1190.5 L1007.5 1190.6 L1009.0 1190.7 L1010.5 1190.6 L1012.0 1190.5 L1013.5 1190.5 L1015.0 1190.7 L1016.5 1190.8 L1018.0 1190.7 L1019.5 1190.4 L1021.0 1190.3 L1022.5 1189.6 L1024.0 1188.7 L1025.5 1188.2 L1027.0 1189.4 L1028.5 1189.6 L1030.0 1190.6 L1031.5 1190.7 L1033.0 1190.7 L1034.5 1190.5 L1036.0 1190.6 L1037.5 1190.6 L1039.0 1190.6 L1040.5 1189.7 L1042.0 1189.6 L1043.5 1188.3 L1045.0 1188.2 L1046.5 1188.8 L1048.0 1189.6 L1049.5 1189.8 L1051.0 1190.5 L1052.5 1190.4 L1054.0 1190.6 L1055.5 1190.1 L1057.0 1189.4 L1058.5 1188.6 L1060.0 1186.4 L1061.5 1188.4 L1063.0 1189.2 L1064.5 1190.5 L1066.0 1190.7 L1067.5 1190.7 L1069.0 1190.5 L1070.5 1190.4 L1072.0 1190.6 L1073.5 1190.6 L1075.0 1190.6 L1076.5 1190.6 L1078.0 1190.7 L1079.5 1190.8 L1081.0 1190.1 L1082.5 1188.7 L1084.0 1187.2 L1085.5 1186.6 L1087.0 1187.4 L1088.5 1187.9 L1090.0 1188.8 L1091.5 1190.1 L1093.0 1190.5 L1094.5 1190.8 L1096.0 1190.4 L1097.5 1189.3 L1099.0 1188.3 L1100.5 1188.2 L1102.0 1188.6 L1103.5 1190.3 L1105.0 1190.5 L1106.5 1190.1 L1108.0 1189.7 L1109.5 1188.1 L1111.0 1187.3 L1112.5 1187.1 L1114.0 1188.2 L1115.5 1189.4 L1117.0 1190.0 L1118.5 1190.5 L1120.0 1190.6 L1121.5 1190.4 L1123.0 1189.6 L1124.5 1188.6 L1126.0 1187.0 L1127.5 1185.7 L1129.0 1184.9 L1130.5 1184.5 L1132.0 1186.7 L1133.5 1187.3 L1135.0 1188.0 L1136.5 1189.5 L1138.0 1190.6 L1139.5 1190.8 L1141.0 1190.7 L1142.5 1189.8 L1144.0 1188.9 L1145.5 1188.5 L1147.0 1188.9 L1148.5 1190.5 L1150.0 1189.6 L1151.5 1188.6 L1153.0 1189.1 L1154.5 1189.9 L1156.0 1190.6 L1157.5 1190.5 L1159.0 1190.5 L1160.5 1190.5 L1162.0 1190.8 L1163.5 1190.6 L1165.0 1189.7 L1166.5 1188.6 L1168.0 1187.8 L1169.5 1186.9 L1171.0 1186.9 L1172.5 1188.3 L1174.0 1189.5 L1175.5 1190.4 L1177.0 1190.4 L1178.5 1190.5 L1180.0 1190.7 L1181.5 1190.6 L1183.0 1190.5 L1184.5 1190.3 L1186.0 1189.6 L1187.5 1188.7 L1189.0 1187.2 L1190.5 1187.9 L1192.0 1187.9 L1193.5 1189.2 L1195.0 1190.3 L1196.5 1190.7 L1198.0 1190.4 L1199.5 1190.7 L1201.0 1190.5 L1202.5 1190.5 L1204.0 1190.5 L1205.5 1190.2 L1207.0 1189.4 L1208.5 1188.7 L1210.0 1187.8 L1211.5 1189.2 L1213.0 1189.7 L1214.5 1190.4 L1216.0 1190.6 L1217.5 1189.7 L1219.0 1188.6 L1220.5 1187.9 L1222.0 1186.8 L1223.5 1187.5 L1225.0 1188.8 L1226.5 1189.9 L1228.0 1188.6 L1229.5 1187.7 L1231.0 1185.0 L1232.5 1184.3 L1234.0 1186.1 L1235.5 1188.0 L1237.0 1186.0 L1238.5 1185.5 L1240.0 1186.0 L1241.5 1185.5 L1243.0 1185.5 L1244.5 1187.3 L1246.0 1187.7 L1247.5 1187.8 L1249.0 1187.1 L1250.5 1186.6 L1252.0 1187.2 L1253.5 1186.8 L1255.0 1187.5 L1256.5 1187.3 L1258.0 1186.7 L1259.5 1187.8 L1261.0 1187.6 L1262.5 1187.2 L1264.0 1187.7 L1265.5 1186.9 L1267.0 1187.1 L1268.5 1186.9 L1270.0 1187.0 L1271.5 1187.0 L1273.0 1187.2 L1274.5 1186.9 L1276.0 1187.2 L1277.5 1187.1 L1279.0 1187.8 L1280.5 1186.9 L1282.0 1186.9 L1283.5 1190.7 L1285.0 1190.5 L1285.0 1193.3 L1283.5 1193.5 L1282.0 1197.5 L1280.5 1197.3 L1279.0 1197.0 L1277.5 1196.2 L1276.0 1196.4 L1274.5 1196.2 L1273.0 1196.3 L1271.5 1196.5 L1270.0 1196.8 L1268.5 1197.4 L1267.0 1196.5 L1265.5 1196.1 L1264.0 1197.2 L1262.5 1197.5 L1261.0 1197.1 L1259.5 1197.3 L1258.0 1196.8 L1256.5 1197.4 L1255.0 1196.3 L1253.5 1197.0 L1252.0 1196.2 L1250.5 1196.8 L1249.0 1196.7 L1247.5 1197.5 L1246.0 1197.4 L1244.5 1197.3 L1243.0 1198.3 L1241.5 1198.0 L1240.0 1197.3 L1238.5 1198.2 L1237.0 1198.7 L1235.5 1195.5 L1234.0 1197.4 L1232.5 1198.3 L1231.0 1198.4 L1229.5 1196.8 L1228.0 1195.8 L1226.5 1194.2 L1225.0 1194.9 L1223.5 1196.1 L1222.0 1197.2 L1220.5 1196.3 L1219.0 1195.1 L1217.5 1194.3 L1216.0 1193.5 L1214.5 1193.7 L1213.0 1194.4 L1211.5 1195.5 L1210.0 1195.9 L1208.5 1195.5 L1207.0 1194.4 L1205.5 1193.7 L1204.0 1193.6 L1202.5 1193.4 L1201.0 1193.2 L1199.5 1193.5 L1198.0 1193.2 L1196.5 1193.3 L1195.0 1194.0 L1193.5 1194.6 L1192.0 1195.7 L1190.5 1197.0 L1189.0 1195.8 L1187.5 1195.0 L1186.0 1194.4 L1184.5 1193.8 L1183.0 1193.4 L1181.5 1193.2 L1180.0 1193.2 L1178.5 1193.3 L1177.0 1193.3 L1175.5 1193.9 L1174.0 1195.0 L1172.5 1196.2 L1171.0 1197.6 L1169.5 1197.5 L1168.0 1196.0 L1166.5 1195.2 L1165.0 1193.9 L1163.5 1193.4 L1162.0 1193.4 L1160.5 1193.3 L1159.0 1193.5 L1157.5 1193.5 L1156.0 1193.6 L1154.5 1194.2 L1153.0 1195.6 L1151.5 1195.3 L1150.0 1194.6 L1148.5 1193.5 L1147.0 1194.4 L1145.5 1195.4 L1144.0 1195.8 L1142.5 1194.7 L1141.0 1193.3 L1139.5 1193.3 L1138.0 1193.5 L1136.5 1194.5 L1135.0 1196.2 L1133.5 1197.3 L1132.0 1198.0 L1130.5 1198.9 L1129.0 1199.6 L1127.5 1197.4 L1126.0 1196.4 L1124.5 1195.2 L1123.0 1194.2 L1121.5 1193.4 L1120.0 1193.5 L1118.5 1193.4 L1117.0 1193.7 L1115.5 1195.0 L1114.0 1195.5 L1112.5 1196.8 L1111.0 1196.5 L1109.5 1195.8 L1108.0 1194.9 L1106.5 1193.8 L1105.0 1193.4 L1103.5 1193.6 L1102.0 1195.0 L1100.5 1196.4 L1099.0 1196.1 L1097.5 1194.8 L1096.0 1193.3 L1094.5 1193.4 L1093.0 1193.3 L1091.5 1193.6 L1090.0 1194.5 L1088.5 1195.9 L1087.0 1197.4 L1085.5 1197.9 L1084.0 1196.3 L1082.5 1195.0 L1081.0 1193.9 L1079.5 1193.5 L1078.0 1193.4 L1076.5 1193.4 L1075.0 1193.3 L1073.5 1193.6 L1072.0 1193.3 L1070.5 1193.5 L1069.0 1193.4 L1067.5 1193.5 L1066.0 1193.6 L1064.5 1193.6 L1063.0 1194.4 L1061.5 1196.2 L1060.0 1196.9 L1058.5 1195.6 L1057.0 1195.0 L1055.5 1193.9 L1054.0 1193.4 L1052.5 1193.5 L1051.0 1193.5 L1049.5 1193.8 L1048.0 1194.3 L1046.5 1195.0 L1045.0 1196.6 L1043.5 1195.4 L1042.0 1194.7 L1040.5 1193.8 L1039.0 1193.5 L1037.5 1193.4 L1036.0 1193.6 L1034.5 1193.6 L1033.0 1193.5 L1031.5 1193.5 L1030.0 1193.3 L1028.5 1194.0 L1027.0 1194.8 L1025.5 1195.4 L1024.0 1195.9 L1022.5 1194.9 L1021.0 1193.9 L1019.5 1193.6 L1018.0 1193.4 L1016.5 1193.3 L1015.0 1193.4 L1013.5 1193.3 L1012.0 1193.2 L1010.5 1193.3 L1009.0 1193.3 L1007.5 1193.4 L1006.0 1193.3 L1004.5 1193.6 L1003.0 1195.4 L1001.5 1196.3 L1000.0 1197.5 L998.5 1196.2 L997.0 1195.0 L995.5 1193.7 L994.0 1193.5 L992.5 1193.5 L991.0 1193.4 L989.5 1193.3 L988.0 1193.4 L986.5 1193.6 L985.0 1193.3 L983.5 1193.5 L982.0 1193.4 L980.5 1194.8 L979.0 1195.8 L977.5 1197.1 L976.0 1194.8 L974.5 1193.8 L973.0 1193.4 L971.5 1193.5 L970.0 1193.3 L968.5 1193.8 L967.0 1194.6 L965.5 1195.9 L964.0 1195.5 L962.5 1194.5 L961.0 1193.5 L959.5 1193.6 L958.0 1193.5 L956.5 1193.5 L955.0 1194.5 L953.5 1196.0 L952.0 1194.8 L950.5 1194.0 L949.0 1193.3 L947.5 1193.6 L946.0 1193.4 L944.5 1193.5 L943.0 1193.3 L941.5 1193.3 L940.0 1193.4 L938.5 1193.4 L937.0 1193.4 L935.5 1193.4 L934.0 1194.7 L932.5 1197.6 L931.0 1200.2 L929.5 1201.0 L928.0 1198.6 L926.5 1195.4 L925.0 1193.4 L923.5 1193.4 L922.0 1193.5 L920.5 1193.5 L919.0 1193.5 L917.5 1193.5 L916.0 1193.5 L914.5 1193.5 L913.0 1193.3 L911.5 1193.4 L910.0 1193.4 L908.5 1193.7 L907.0 1194.8 L905.5 1196.1 L904.0 1195.7 L902.5 1195.0 L901.0 1193.5Z" fill="#c8ffff" stroke="#041818" stroke-width="1"/><path d="M910.5 1185 V1199M930.5 1182 V1202M963.5 1178 V1206M974.5 1184 V1200M991.5 1181 V1203M1006.5 1180 V1204M1070.5 1178 V1206M1081.5 1184 V1200M1092.5 1178 V1206M1129.5 1172 V1212M1131.5 1176 V1208M1159.5 1182 V1202M1168.5 1182 V1202M1183.5 1172 V1212M1202.5 1186 V1198M1229.5 1184 V1200" stroke="#041818" stroke-width="3" opacity="0.6"/><path d="M910.5 1185 V1199M930.5 1182 V1202M963.5 1178 V1206M974.5 1184 V1200M991.5 1181 V1203M1006.5 1180 V1204M1070.5 1178 V1206M1081.5 1184 V1200M1092.5 1178 V1206M1129.5 1172 V1212M1131.5 1176 V1208M1159.5 1182 V1202M1168.5 1182 V1202M1183.5 1172 V1212M1202.5 1186 V1198M1229.5 1184 V1200" stroke="#c8ffff" stroke-width="1"/></svg>
<svg style="left:0;top:0" width="2460" height="1260"><path d="M266 152 H466 L485 169 L531 151 L541 145 L594 150 L612 145 V217 L648 229 L690 217 V142 L701 144 H1519" fill="none" stroke="#bdbdbd" stroke-width="2"/><path d="M541 145 V183" fill="none" stroke="#bdbdbd" stroke-width="2"/><circle cx="466.0" cy="152.0" r="3.6" fill="#7a7a7a" stroke="#b8b8b8" stroke-width="1.3"/><circle cx="469.8" cy="155.4" r="3.6" fill="#7a7a7a" stroke="#b8b8b8" stroke-width="1.3"/><circle cx="473.6" cy="158.8" r="3.6" fill="#7a7a7a" stroke="#b8b8b8" stroke-width="1.3"/><circle cx="477.4" cy="162.2" r="3.6" fill="#7a7a7a" stroke="#b8b8b8" stroke-width="1.3"/><circle cx="481.2" cy="165.6" r="3.6" fill="#7a7a7a" stroke="#b8b8b8" stroke-width="1.3"/><circle cx="485.0" cy="169.0" r="3.6" fill="#7a7a7a" stroke="#b8b8b8" stroke-width="1.3"/><circle cx="531.0" cy="151.0" r="3.6" fill="#7a7a7a" stroke="#b8b8b8" stroke-width="1.3"/><circle cx="533.5" cy="149.5" r="3.6" fill="#7a7a7a" stroke="#b8b8b8" stroke-width="1.3"/><circle cx="536.0" cy="148.0" r="3.6" fill="#7a7a7a" stroke="#b8b8b8" stroke-width="1.3"/><circle cx="538.5" cy="146.5" r="3.6" fill="#7a7a7a" stroke="#b8b8b8" stroke-width="1.3"/><circle cx="541.0" cy="145.0" r="3.6" fill="#7a7a7a" stroke="#b8b8b8" stroke-width="1.3"/><circle cx="538.0" cy="150.0" r="3.6" fill="#7a7a7a" stroke="#b8b8b8" stroke-width="1.3"/><circle cx="538.5" cy="155.5" r="3.6" fill="#7a7a7a" stroke="#b8b8b8" stroke-width="1.3"/><circle cx="539.0" cy="161.0" r="3.6" fill="#7a7a7a" stroke="#b8b8b8" stroke-width="1.3"/><circle cx="539.5" cy="166.5" r="3.6" fill="#7a7a7a" stroke="#b8b8b8" stroke-width="1.3"/><circle cx="540.0" cy="172.0" r="3.6" fill="#7a7a7a" stroke="#b8b8b8" stroke-width="1.3"/><circle cx="540.5" cy="177.5" r="3.6" fill="#7a7a7a" stroke="#b8b8b8" stroke-width="1.3"/><circle cx="541.0" cy="183.0" r="3.6" fill="#7a7a7a" stroke="#b8b8b8" stroke-width="1.3"/><circle cx="594.0" cy="150.0" r="3.6" fill="#7a7a7a" stroke="#b8b8b8" stroke-width="1.3"/><circle cx="597.6" cy="149.0" r="3.6" fill="#7a7a7a" stroke="#b8b8b8" stroke-width="1.3"/><circle cx="601.2" cy="148.0" r="3.6" fill="#7a7a7a" stroke="#b8b8b8" stroke-width="1.3"/><circle cx="604.8" cy="147.0" r="3.6" fill="#7a7a7a" stroke="#b8b8b8" stroke-width="1.3"/><circle cx="608.4" cy="146.0" r="3.6" fill="#7a7a7a" stroke="#b8b8b8" stroke-width="1.3"/><circle cx="612.0" cy="145.0" r="3.6" fill="#7a7a7a" stroke="#b8b8b8" stroke-width="1.3"/><circle cx="612.0" cy="217.0" r="3.6" fill="#7a7a7a" stroke="#b8b8b8" stroke-width="1.3"/><circle cx="616.5" cy="218.5" r="3.6" fill="#7a7a7a" stroke="#b8b8b8" stroke-width="1.3"/><circle cx="621.0" cy="220.0" r="3.6" fill="#7a7a7a" stroke="#b8b8b8" stroke-width="1.3"/><circle cx="625.5" cy="221.5" r="3.6" fill="#7a7a7a" stroke="#b8b8b8" stroke-width="1.3"/><circle cx="630.0" cy="223.0" r="3.6" fill="#7a7a7a" stroke="#b8b8b8" stroke-width="1.3"/><circle cx="634.5" cy="224.5" r="3.6" fill="#7a7a7a" stroke="#b8b8b8" stroke-width="1.3"/><circle cx="639.0" cy="226.0" r="3.6" fill="#7a7a7a" stroke="#b8b8b8" stroke-width="1.3"/><circle cx="643.5" cy="227.5" r="3.6" fill="#7a7a7a" stroke="#b8b8b8" stroke-width="1.3"/><circle cx="648.0" cy="229.0" r="3.6" fill="#7a7a7a" stroke="#b8b8b8" stroke-width="1.3"/><circle cx="690.0" cy="142.0" r="3.6" fill="#7a7a7a" stroke="#b8b8b8" stroke-width="1.3"/><circle cx="693.7" cy="142.7" r="3.6" fill="#7a7a7a" stroke="#b8b8b8" stroke-width="1.3"/><circle cx="697.3" cy="143.3" r="3.6" fill="#7a7a7a" stroke="#b8b8b8" stroke-width="1.3"/><circle cx="701.0" cy="144.0" r="3.6" fill="#7a7a7a" stroke="#b8b8b8" stroke-width="1.3"/><circle cx="612" cy="166" r="3.6" fill="#7a7a7a" stroke="#b8b8b8" stroke-width="1.3"/><circle cx="690" cy="166" r="3.6" fill="#7a7a7a" stroke="#b8b8b8" stroke-width="1.3"/><circle cx="612" cy="217" r="3.6" fill="#7a7a7a" stroke="#b8b8b8" stroke-width="1.3"/><circle cx="690" cy="217" r="3.6" fill="#7a7a7a" stroke="#b8b8b8" stroke-width="1.3"/><path d="M266 382 H1519" stroke="#bdbdbd" stroke-width="2"/><circle cx="770" cy="382" r="3.5" fill="#707070" stroke="#bbb" stroke-width="1.5"/><circle cx="1138" cy="382" r="3.5" fill="#707070" stroke="#888" stroke-width="1"/><path d="M266 453.5 H1519" stroke="#f0f0f0" stroke-width="2.5"/><path d="M266 478 H1519" stroke="#c8c8c8" stroke-width="2"/><circle cx="630" cy="453.5" r="4" fill="#707070" stroke="#f4f4f4" stroke-width="2"/><path d="M629.5 460 V506" stroke="#c0c0c0" stroke-width="2"/><path d="M266 717 H1519" stroke="#c8c8c8" stroke-width="2"/><line x1="555.5" y1="80" x2="555.5" y2="1254" stroke="#050505" stroke-width="1.2"/><line x1="940.5" y1="68" x2="940.5" y2="1254" stroke="#e00000" stroke-width="1.3"/><line x1="1751.5" y1="68" x2="1751.5" y2="1254" stroke="#10c010" stroke-width="1.3"/><rect x="555.5" y="120.5" width="7" height="7" fill="#ff8000" stroke="#ffe000" stroke-width="1.2"/><rect x="729.5" y="120.5" width="7" height="7" fill="#ff8000" stroke="#ffe000" stroke-width="1.2"/><rect x="554.5" y="185.5" width="7" height="7" fill="#ff8000" stroke="#ffe000" stroke-width="1.2"/><rect x="729.5" y="185.5" width="7" height="7" fill="#ff8000" stroke="#ffe000" stroke-width="1.2"/><rect x="552.5" y="250.5" width="7" height="7" fill="#ff8000" stroke="#ffe000" stroke-width="1.2"/><rect x="729.5" y="250.5" width="7" height="7" fill="#ff8000" stroke="#ffe000" stroke-width="1.2"/><rect x="552" y="239" width="7" height="8" fill="#000"/></svg>
<div class="a " style="left:2457px;top:118px;width:19px;height:1136px;background:#b4b4b4"></div>
<div class="a " style="left:2459px;top:138px;width:13px;height:977px;background:#555;border-radius:3px"></div>
<div class="a " style="left:2459px;top:120px;width:13px;height:12px;background:#555;border:1px solid #333;border-radius:2px"></div>
<div class="a " style="left:2459px;top:1244px;width:13px;height:12px;background:#555;border:1px solid #333;border-radius:2px"></div>
<svg width="0" height="0" style="position:absolute"><defs><radialGradient id="kg" cx="40%" cy="35%" r="70%"><stop offset="0" stop-color="#6a6a6a"/><stop offset="1" stop-color="#2a2a2a"/></radialGradient><linearGradient id="fg" x1="0" y1="0" x2="0" y2="1"><stop offset="0" stop-color="#9a9a9a"/><stop offset="1" stop-color="#5a5a5a"/></linearGradient></defs></svg>
<div class="a " style="left:1519px;top:114px;width:948px;height:899px;background:#1e1e1e;border:1px solid #0c0c0c"></div>
<div class="t " style="left:1524px;top:119px;font-size:14.5px;color:#cfcfcf">Mixer</div>
<svg style="left:2388px;top:120px" width="80" height="16"><g stroke="#bdbdbd" stroke-width="1.3" fill="none"><path d="M2 2.5 H12 M2 5.5 H12 M2 8.5 H12 M2 11.5 H12"/><path d="M37 10.5 H46"/><path d="M62 2 L72 12 M72 2 L62 12"/></g></svg>
<div class="a " style="left:1522px;top:144px;width:72px;height:28px;background:#1e1e1e"></div>
<div class="a" style="left:1526px;top:145px;width:64px;height:17px;background:rgba(0,0,0,0.12);border:1px solid rgba(0,0,0,0.5);border-radius:3px;font-size:8.6px;color:rgba(150,150,150,0.22);letter-spacing:-0.4px"><div style="position:absolute;left:4px;top:5px;width:6px;height:6px;background:rgba(90,90,90,0.6)"></div><div style="position:absolute;left:13px;top:3px">Mix Bus</div></div>
<div class="a " style="left:1522px;top:172px;width:72px;height:29px;background:#1b4a20"></div>
<div class="a" style="left:1526px;top:173px;width:64px;height:17px;background:rgba(0,0,0,0.12);border:1px solid rgba(0,0,0,0.5);border-radius:3px;font-size:8.6px;color:rgba(150,150,150,0.22);letter-spacing:-0.4px"><div style="position:absolute;left:4px;top:5px;width:6px;height:6px;background:rgba(90,90,90,0.6)"></div><div style="position:absolute;left:13px;top:3px">PB</div></div>
<div class="a " style="left:1522px;top:201px;width:72px;height:29px;background:#6b3d14"></div>
<div class="a" style="left:1526px;top:202px;width:64px;height:17px;background:#2c2c2c;border:1px solid rgba(0,0,0,0.5);border-radius:3px;font-size:8.6px;color:#c0c0c0;letter-spacing:-0.4px"><div style="position:absolute;left:4px;top:5px;width:6px;height:6px;background:#e8845a"></div><div style="position:absolute;left:13px;top:3px">MIC</div></div>
<div class="a " style="left:1525px;top:222px;width:66px;height:6px;background:#141414;border-radius:3px"></div>
<div class="a " style="left:1522px;top:230px;width:72px;height:29px;background:#6a1642"></div>
<div class="a" style="left:1526px;top:231px;width:64px;height:17px;background:#2c2c2c;border:1px solid rgba(0,0,0,0.5);border-radius:3px;font-size:8.6px;color:#c0c0c0;letter-spacing:-0.4px"><div style="position:absolute;left:4px;top:5px;width:6px;height:6px;background:#e8845a"></div><div style="position:absolute;left:13px;top:3px">ALL</div></div>
<div class="a " style="left:1525px;top:251px;width:66px;height:6px;background:#141414;border-radius:3px"></div>
<div class="a " style="left:1522px;top:259px;width:72px;height:29px;background:#1e1e1e"></div>
<div class="a" style="left:1526px;top:260px;width:64px;height:17px;background:#2c2c2c;border:1px solid rgba(0,0,0,0.5);border-radius:3px;font-size:8.6px;color:#c0c0c0;letter-spacing:-0.4px"><div style="position:absolute;left:4px;top:5px;width:6px;height:6px;background:#e0c050"></div><div style="position:absolute;left:13px;top:3px">Aux Bus</div></div>
<div class="a " style="left:1525px;top:280px;width:66px;height:6px;background:#141414;border-radius:3px;box-shadow:inset 40px 0 0 #3a3010"></div>
<div class="a " style="left:1568px;top:280px;width:2px;height:6px;background:#f0d040"></div>
<div class="a " style="left:1522px;top:288px;width:72px;height:708px;background:#6c3e14"></div>
<svg style="left:1538px;top:290px" width="40" height="46"><path d="M10.1 27.9 A14 14 0 1 1 29.9 27.9" fill="none" stroke="#0a0a0a" stroke-width="2.5"/><path d="M17 4.6 A14 14 0 0 1 23 4.6" fill="none" stroke="#f0a070" stroke-width="3"/><circle cx="20" cy="18" r="10.5" fill="url(#kg)" stroke="#111" stroke-width="1"/><line x1="20" y1="10" x2="20" y2="14" stroke="#e8e8e8" stroke-width="1.3"/></svg>
<div class="t " style="left:1518px;top:321px;font-size:9px;color:#1a1a1a;letter-spacing:-0.3px"><div style="width:80px;text-align:center">Pan</div></div>
<svg style="left:1526px;top:369px" width="64" height="34"><rect x="0.5" y="0.5" width="63" height="32" rx="3" fill="#141414" stroke="#2a2a2a"/><path d="M32 1 V32 M1 16.5 H63" stroke="#2c2c2c"/><path d="M3 16.5 H61" stroke="#c8c8c8" stroke-width="2"/></svg>
<svg style="left:1526px;top:407px" width="64" height="34"><rect x="0.5" y="0.5" width="63" height="32" rx="3" fill="#141414" stroke="#2a2a2a"/><path d="M3 31 L61 4" stroke="#b8b8b8" stroke-width="1.8"/></svg>
<div class="a " style="left:1526px;top:445px;width:64px;height:53px;background:rgba(0,0,0,0.10);border:1px solid rgba(255,255,255,0.08);border-radius:3px"></div>
<div class="a" style="left:1528px;top:447px;width:60px;height:13px;background:#2c2c2c;border:1px solid #151515;border-radius:2px;font-size:9px;color:#8a8a8a;letter-spacing:-0.3px;"><div style="position:absolute;left:3px;top:2px;width:7px;height:7px;background:#d8b050"></div><div style="position:absolute;left:13px;top:1px">Strip Tools</div></div>
<svg style="left:1528px;top:483px" width="60" height="12"><g stroke="#111" stroke-width="1.3" fill="none"><path d="M3 6 H11 M7 2 V10"/><path d="M26 7 H33"/><rect x="40.5" y="2.5" width="7" height="7"/><path d="M51 2.5 H59 M51 5 H59 M51 7.5 H59 M51 10 H59"/></g></svg>
<div class="a " style="left:1596px;top:144px;width:72px;height:28px;background:#1e1e1e"></div>
<div class="a" style="left:1600px;top:145px;width:64px;height:17px;background:rgba(0,0,0,0.12);border:1px solid rgba(0,0,0,0.5);border-radius:3px;font-size:8.6px;color:rgba(150,150,150,0.22);letter-spacing:-0.4px"><div style="position:absolute;left:4px;top:5px;width:6px;height:6px;background:rgba(90,90,90,0.6)"></div><div style="position:absolute;left:13px;top:3px">Mix Bus</div></div>
<div class="a " style="left:1596px;top:172px;width:72px;height:29px;background:#1b4a20"></div>
<div class="a" style="left:1600px;top:173px;width:64px;height:17px;background:rgba(0,0,0,0.12);border:1px solid rgba(0,0,0,0.5);border-radius:3px;font-size:8.6px;color:rgba(150,150,150,0.22);letter-spacing:-0.4px"><div style="position:absolute;left:4px;top:5px;width:6px;height:6px;background:rgba(90,90,90,0.6)"></div><div style="position:absolute;left:13px;top:3px">PB</div></div>
<div class="a " style="left:1596px;top:201px;width:72px;height:29px;background:#6b3d14"></div>
<div class="a" style="left:1600px;top:202px;width:64px;height:17px;background:#2c2c2c;border:1px solid rgba(0,0,0,0.5);border-radius:3px;font-size:8.6px;color:#c0c0c0;letter-spacing:-0.4px"><div style="position:absolute;left:4px;top:5px;width:6px;height:6px;background:#e8845a"></div><div style="position:absolute;left:13px;top:3px">MIC</div></div>
<div class="a " style="left:1599px;top:222px;width:66px;height:6px;background:#141414;border-radius:3px"></div>
<div class="a " style="left:1596px;top:230px;width:72px;height:29px;background:#6a1642"></div>
<div class="a" style="left:1600px;top:231px;width:64px;height:17px;background:#2c2c2c;border:1px solid rgba(0,0,0,0.5);border-radius:3px;font-size:8.6px;color:#c0c0c0;letter-spacing:-0.4px"><div style="position:absolute;left:4px;top:5px;width:6px;height:6px;background:#e8845a"></div><div style="position:absolute;left:13px;top:3px">ALL</div></div>
<div class="a " style="left:1599px;top:251px;width:66px;height:6px;background:#141414;border-radius:3px"></div>
<div class="a " style="left:1596px;top:259px;width:72px;height:29px;background:#1e1e1e"></div>
<div class="a" style="left:1600px;top:260px;width:64px;height:17px;background:rgba(0,0,0,0.12);border:1px solid rgba(0,0,0,0.5);border-radius:3px;font-size:8.6px;color:rgba(150,150,150,0.22);letter-spacing:-0.4px"><div style="position:absolute;left:4px;top:5px;width:6px;height:6px;background:rgba(90,90,90,0.6)"></div><div style="position:absolute;left:13px;top:3px">Aux Bus</div></div>
<div class="a " style="left:1596px;top:288px;width:72px;height:708px;background:#245a38"></div>
<svg style="left:1612px;top:290px" width="40" height="46"><path d="M10.1 27.9 A14 14 0 1 1 29.9 27.9" fill="none" stroke="#0a0a0a" stroke-width="2.5"/><path d="M17 4.6 A14 14 0 0 1 23 4.6" fill="none" stroke="#f0a070" stroke-width="3"/><circle cx="20" cy="18" r="10.5" fill="url(#kg)" stroke="#111" stroke-width="1"/><line x1="20" y1="10" x2="20" y2="14" stroke="#e8e8e8" stroke-width="1.3"/></svg>
<div class="t " style="left:1592px;top:321px;font-size:9px;color:#1a1a1a;letter-spacing:-0.3px"><div style="width:80px;text-align:center">Pan</div></div>
<svg style="left:1600px;top:369px" width="64" height="34"><rect x="0.5" y="0.5" width="63" height="32" rx="3" fill="#141414" stroke="#2a2a2a"/><path d="M32 1 V32 M1 16.5 H63" stroke="#2c2c2c"/><path d="M3 17 C12 13 18 16 24 13 C30 9 34 17 40 16 C46 15 48 11 54 14 L61 16" stroke="#c8c8c8" stroke-width="1.6" fill="none"/></svg>
<svg style="left:1600px;top:407px" width="64" height="34"><rect x="0.5" y="0.5" width="63" height="32" rx="3" fill="#141414" stroke="#2a2a2a"/><path d="M3 31 L30 18" stroke="#2a2a2a"/><path d="M17 30 L30 17" stroke="#30c070" stroke-width="1.8"/><path d="M30 17 L48 9" stroke="#b0b0b0" stroke-width="1.8"/><path d="M48 9 L61 6" stroke="#e8d020" stroke-width="1.8"/></svg>
<div class="a " style="left:1600px;top:445px;width:64px;height:53px;background:rgba(0,0,0,0.10);border:1px solid rgba(255,255,255,0.08);border-radius:3px"></div>
<div class="a" style="left:1602px;top:447px;width:60px;height:13px;background:#2c2c2c;border:1px solid #151515;border-radius:2px;font-size:9px;color:#8a8a8a;letter-spacing:-0.3px;"><div style="position:absolute;left:3px;top:2px;width:7px;height:7px;background:#d8b050"></div><div style="position:absolute;left:13px;top:1px">Strip Tools</div></div>
<svg style="left:1602px;top:483px" width="60" height="12"><g stroke="#111" stroke-width="1.3" fill="none"><path d="M3 6 H11 M7 2 V10"/><path d="M26 7 H33"/><rect x="40.5" y="2.5" width="7" height="7"/><path d="M51 2.5 H59 M51 5 H59 M51 7.5 H59 M51 10 H59"/></g></svg>
<div class="a " style="left:1670px;top:144px;width:72px;height:28px;background:#1e1e1e"></div>
<div class="a" style="left:1674px;top:145px;width:64px;height:17px;background:rgba(0,0,0,0.12);border:1px solid rgba(0,0,0,0.5);border-radius:3px;font-size:8.6px;color:rgba(150,150,150,0.22);letter-spacing:-0.4px"><div style="position:absolute;left:4px;top:5px;width:6px;height:6px;background:rgba(90,90,90,0.6)"></div><div style="position:absolute;left:13px;top:3px">Mix Bus</div></div>
<div class="a " style="left:1670px;top:172px;width:72px;height:29px;background:#1b4a20"></div>
<div class="a" style="left:1674px;top:173px;width:64px;height:17px;background:#2c2c2c;border:1px solid rgba(0,0,0,0.5);border-radius:3px;font-size:8.6px;color:#c0c0c0;letter-spacing:-0.4px"><div style="position:absolute;left:4px;top:5px;width:6px;height:6px;background:#e8845a"></div><div style="position:absolute;left:13px;top:3px">PB</div></div>
<div class="a " style="left:1673px;top:193px;width:66px;height:6px;background:#141414;border-radius:3px"></div>
<div class="a " style="left:1670px;top:201px;width:72px;height:29px;background:#6b3d14"></div>
<div class="a" style="left:1674px;top:202px;width:64px;height:17px;background:rgba(0,0,0,0.12);border:1px solid rgba(0,0,0,0.5);border-radius:3px;font-size:8.6px;color:rgba(150,150,150,0.22);letter-spacing:-0.4px"><div style="position:absolute;left:4px;top:5px;width:6px;height:6px;background:rgba(90,90,90,0.6)"></div><div style="position:absolute;left:13px;top:3px">MIC</div></div>
<div class="a " style="left:1670px;top:230px;width:72px;height:29px;background:#6a1642"></div>
<div class="a" style="left:1674px;top:231px;width:64px;height:17px;background:#2c2c2c;border:1px solid rgba(0,0,0,0.5);border-radius:3px;font-size:8.6px;color:#c0c0c0;letter-spacing:-0.4px"><div style="position:absolute;left:4px;top:5px;width:6px;height:6px;background:#e8845a"></div><div style="position:absolute;left:13px;top:3px">ALL</div></div>
<div class="a " style="left:1673px;top:251px;width:66px;height:6px;background:#141414;border-radius:3px"></div>
<div class="a " style="left:1670px;top:259px;width:72px;height:29px;background:#1e1e1e"></div>
<div class="a" style="left:1674px;top:260px;width:64px;height:17px;background:rgba(0,0,0,0.12);border:1px solid rgba(0,0,0,0.5);border-radius:3px;font-size:8.6px;color:rgba(150,150,150,0.22);letter-spacing:-0.4px"><div style="position:absolute;left:4px;top:5px;width:6px;height:6px;background:rgba(90,90,90,0.6)"></div><div style="position:absolute;left:13px;top:3px">Aux Bus</div></div>
<div class="a " style="left:1670px;top:288px;width:72px;height:708px;background:#56472a"></div>
<svg style="left:1686px;top:290px" width="40" height="46"><path d="M10.1 27.9 A14 14 0 0 1 20 4" fill="none" stroke="#b0b0b0" stroke-width="2"/><path d="M20 4 A14 14 0 0 1 29.9 27.9" fill="none" stroke="#d02020" stroke-width="2"/><circle cx="20" cy="18" r="10.5" fill="url(#kg)" stroke="#111" stroke-width="1"/><line x1="20" y1="10" x2="20" y2="14" stroke="#e8e8e8" stroke-width="1.3"/></svg>
<div class="t " style="left:1666px;top:321px;font-size:9px;color:#1a1a1a;letter-spacing:-0.3px"><div style="width:80px;text-align:center">Balance</div></div>
<svg style="left:1674px;top:369px" width="64" height="34"><rect x="0.5" y="0.5" width="63" height="32" rx="3" fill="#141414" stroke="#2a2a2a"/><path d="M32 1 V32 M1 16.5 H63" stroke="#2c2c2c"/><path d="M3 16.5 H61" stroke="#c8c8c8" stroke-width="2"/></svg>
<svg style="left:1674px;top:407px" width="64" height="34"><rect x="0.5" y="0.5" width="63" height="32" rx="3" fill="#141414" stroke="#2a2a2a"/><path d="M3 31 L61 3" stroke="#303030" stroke-width="1"/></svg>
<div class="a " style="left:1674px;top:445px;width:64px;height:53px;background:rgba(0,0,0,0.10);border:1px solid rgba(255,255,255,0.08);border-radius:3px"></div>
<div class="a" style="left:1676px;top:447px;width:60px;height:13px;background:#2c2c2c;border:1px solid #151515;border-radius:2px;font-size:9px;color:#8a8a8a;letter-spacing:-0.3px;"><div style="position:absolute;left:3px;top:2px;width:7px;height:7px;background:#d8b050"></div><div style="position:absolute;left:13px;top:1px">EqX</div></div>
<div class="a" style="left:1676px;top:460px;width:60px;height:13px;background:#2c2c2c;border:1px solid #151515;border-radius:2px;font-size:9px;color:#8a8a8a;letter-spacing:-0.3px;text-decoration:line-through;"><div style="position:absolute;left:3px;top:2px;width:7px;height:7px;background:#d8b050"></div><div style="position:absolute;left:13px;top:1px">_GhostEffect_</div></div>
<svg style="left:1676px;top:483px" width="60" height="12"><g stroke="#111" stroke-width="1.3" fill="none"><path d="M3 6 H11 M7 2 V10"/><path d="M26 7 H33"/><rect x="40.5" y="2.5" width="7" height="7"/><path d="M51 2.5 H59 M51 5 H59 M51 7.5 H59 M51 10 H59"/></g></svg>
<div class="a " style="left:1744px;top:144px;width:72px;height:28px;background:#1e1e1e"></div>
<div class="a" style="left:1748px;top:145px;width:64px;height:17px;background:rgba(0,0,0,0.12);border:1px solid rgba(0,0,0,0.5);border-radius:3px;font-size:8.6px;color:rgba(150,150,150,0.22);letter-spacing:-0.4px"><div style="position:absolute;left:4px;top:5px;width:6px;height:6px;background:rgba(90,90,90,0.6)"></div><div style="position:absolute;left:13px;top:3px">Mix Bus</div></div>
<div class="a " style="left:1744px;top:172px;width:72px;height:29px;background:#1b4a20"></div>
<div class="a" style="left:1748px;top:173px;width:64px;height:17px;background:#2c2c2c;border:1px solid rgba(0,0,0,0.5);border-radius:3px;font-size:8.6px;color:#c0c0c0;letter-spacing:-0.4px"><div style="position:absolute;left:4px;top:5px;width:6px;height:6px;background:#e8845a"></div><div style="position:absolute;left:13px;top:3px">PB</div></div>
<div class="a " style="left:1747px;top:193px;width:66px;height:6px;background:#141414;border-radius:3px"></div>
<div class="a " style="left:1744px;top:201px;width:72px;height:29px;background:#6b3d14"></div>
<div class="a" style="left:1748px;top:202px;width:64px;height:17px;background:rgba(0,0,0,0.12);border:1px solid rgba(0,0,0,0.5);border-radius:3px;font-size:8.6px;color:rgba(150,150,150,0.22);letter-spacing:-0.4px"><div style="position:absolute;left:4px;top:5px;width:6px;height:6px;background:rgba(90,90,90,0.6)"></div><div style="position:absolute;left:13px;top:3px">MIC</div></div>
<div class="a " style="left:1744px;top:230px;width:72px;height:29px;background:#6a1642"></div>
<div class="a" style="left:1748px;top:231px;width:64px;height:17px;background:#2c2c2c;border:1px solid rgba(0,0,0,0.5);border-radius:3px;font-size:8.6px;color:#c0c0c0;letter-spacing:-0.4px"><div style="position:absolute;left:4px;top:5px;width:6px;height:6px;background:#e8845a"></div><div style="position:absolute;left:13px;top:3px">ALL</div></div>
<div class="a " style="left:1747px;top:251px;width:66px;height:6px;background:#141414;border-radius:3px"></div>
<div class="a " style="left:1744px;top:259px;width:72px;height:29px;background:#1e1e1e"></div>
<div class="a" style="left:1748px;top:260px;width:64px;height:17px;background:rgba(0,0,0,0.12);border:1px solid rgba(0,0,0,0.5);border-radius:3px;font-size:8.6px;color:rgba(150,150,150,0.22);letter-spacing:-0.4px"><div style="position:absolute;left:4px;top:5px;width:6px;height:6px;background:rgba(90,90,90,0.6)"></div><div style="position:absolute;left:13px;top:3px">Aux Bus</div></div>
<div class="a " style="left:1744px;top:288px;width:72px;height:708px;background:#3d2466"></div>
<svg style="left:1760px;top:290px" width="40" height="46"><path d="M10.1 27.9 A14 14 0 0 1 20 4" fill="none" stroke="#b0b0b0" stroke-width="2"/><path d="M20 4 A14 14 0 0 1 29.9 27.9" fill="none" stroke="#d02020" stroke-width="2"/><circle cx="20" cy="18" r="10.5" fill="url(#kg)" stroke="#111" stroke-width="1"/><line x1="20" y1="10" x2="20" y2="14" stroke="#e8e8e8" stroke-width="1.3"/></svg>
<div class="t " style="left:1740px;top:321px;font-size:9px;color:#1a1a1a;letter-spacing:-0.3px"><div style="width:80px;text-align:center">Balance</div></div>
<svg style="left:1748px;top:369px" width="64" height="34"><rect x="0.5" y="0.5" width="63" height="32" rx="3" fill="#141414" stroke="#2a2a2a"/><path d="M32 1 V32 M1 16.5 H63" stroke="#2c2c2c"/><path d="M3 16.5 H61" stroke="#c8c8c8" stroke-width="2"/></svg>
<svg style="left:1748px;top:407px" width="64" height="34"><rect x="0.5" y="0.5" width="63" height="32" rx="3" fill="#141414" stroke="#2a2a2a"/><path d="M3 31 L61 3" stroke="#303030" stroke-width="1"/></svg>
<div class="a " style="left:1748px;top:445px;width:64px;height:53px;background:rgba(0,0,0,0.10);border:1px solid rgba(255,255,255,0.08);border-radius:3px"></div>
<div class="a" style="left:1750px;top:447px;width:60px;height:13px;background:#2c2c2c;border:1px solid #151515;border-radius:2px;font-size:9px;color:#8a8a8a;letter-spacing:-0.3px;"><div style="position:absolute;left:3px;top:2px;width:7px;height:7px;background:#d8b050"></div><div style="position:absolute;left:13px;top:1px">EqX</div></div>
<div class="a" style="left:1750px;top:460px;width:60px;height:13px;background:#2c2c2c;border:1px solid #151515;border-radius:2px;font-size:9px;color:#8a8a8a;letter-spacing:-0.3px;text-decoration:line-through;"><div style="position:absolute;left:3px;top:2px;width:7px;height:7px;background:#d8b050"></div><div style="position:absolute;left:13px;top:1px">_GhostEffect_</div></div>
<svg style="left:1750px;top:483px" width="60" height="12"><g stroke="#111" stroke-width="1.3" fill="none"><path d="M3 6 H11 M7 2 V10"/><path d="M26 7 H33"/><rect x="40.5" y="2.5" width="7" height="7"/><path d="M51 2.5 H59 M51 5 H59 M51 7.5 H59 M51 10 H59"/></g></svg>
<div class="a " style="left:1818px;top:144px;width:72px;height:28px;background:#1e1e1e"></div>
<div class="a" style="left:1822px;top:145px;width:64px;height:17px;background:#2c2c2c;border:1px solid rgba(0,0,0,0.5);border-radius:3px;font-size:8.6px;color:#c0c0c0;letter-spacing:-0.4px"><div style="position:absolute;left:4px;top:5px;width:6px;height:6px;background:#e8845a"></div><div style="position:absolute;left:13px;top:3px">Mix Bus</div></div>
<div class="a " style="left:1818px;top:172px;width:72px;height:29px;background:#1b4a20"></div>
<div class="a" style="left:1822px;top:173px;width:64px;height:17px;background:#2c2c2c;border:1px solid rgba(0,0,0,0.5);border-radius:3px;font-size:8.6px;color:#c0c0c0;letter-spacing:-0.4px"><div style="position:absolute;left:4px;top:5px;width:6px;height:6px;background:#e8845a"></div><div style="position:absolute;left:13px;top:3px">PB</div></div>
<div class="a " style="left:1821px;top:193px;width:66px;height:6px;background:#141414;border-radius:3px"></div>
<div class="a " style="left:1818px;top:201px;width:72px;height:29px;background:#6b3d14"></div>
<div class="a" style="left:1822px;top:202px;width:64px;height:17px;background:rgba(0,0,0,0.12);border:1px solid rgba(0,0,0,0.5);border-radius:3px;font-size:8.6px;color:rgba(150,150,150,0.22);letter-spacing:-0.4px"><div style="position:absolute;left:4px;top:5px;width:6px;height:6px;background:rgba(90,90,90,0.6)"></div><div style="position:absolute;left:13px;top:3px">MIC</div></div>
<div class="a " style="left:1818px;top:230px;width:72px;height:29px;background:#6a1642"></div>
<div class="a" style="left:1822px;top:231px;width:64px;height:17px;background:rgba(0,0,0,0.12);border:1px solid rgba(0,0,0,0.5);border-radius:3px;font-size:8.6px;color:rgba(150,150,150,0.22);letter-spacing:-0.4px"><div style="position:absolute;left:4px;top:5px;width:6px;height:6px;background:rgba(90,90,90,0.6)"></div><div style="position:absolute;left:13px;top:3px">ALL</div></div>
<div class="a " style="left:1818px;top:259px;width:72px;height:29px;background:#1e1e1e"></div>
<div class="a" style="left:1822px;top:260px;width:64px;height:17px;background:rgba(0,0,0,0.12);border:1px solid rgba(0,0,0,0.5);border-radius:3px;font-size:8.6px;color:rgba(150,150,150,0.22);letter-spacing:-0.4px"><div style="position:absolute;left:4px;top:5px;width:6px;height:6px;background:rgba(90,90,90,0.6)"></div><div style="position:absolute;left:13px;top:3px">Aux Bus</div></div>
<div class="a " style="left:1818px;top:288px;width:72px;height:708px;background:#1f1f1f"></div>
<svg style="left:1823px;top:294px" width="64" height="62"><rect x="0.5" y="0.5" width="62" height="60" rx="2" fill="#151515" stroke="#2a2a2a"/><path d="M31.5 1 V60 M1 30.5 H62" stroke="#2a2a2a"/><circle cx="2" cy="1.5" r="2.8" fill="#d8d8d8"/><circle cx="32" cy="1.5" r="2.8" fill="#50d050"/><circle cx="61" cy="1.5" r="2.8" fill="#f01010"/></svg>
<svg style="left:1822px;top:369px" width="64" height="34"><rect x="0.5" y="0.5" width="63" height="32" rx="3" fill="#141414" stroke="#2a2a2a"/><path d="M32 1 V32 M1 16.5 H63" stroke="#2c2c2c"/></svg>
<svg style="left:1822px;top:407px" width="64" height="34"><rect x="0.5" y="0.5" width="63" height="32" rx="3" fill="#141414" stroke="#2a2a2a"/><path d="M3 31 L61 3" stroke="#303030" stroke-width="1"/></svg>
<div class="a " style="left:1822px;top:445px;width:64px;height:53px;background:rgba(0,0,0,0.10);border:1px solid rgba(255,255,255,0.08);border-radius:3px"></div>
<svg style="left:1824px;top:483px" width="60" height="12"><g stroke="#555" stroke-width="1.2" fill="none"><path d="M3 6 H11 M7 2 V10"/><path d="M51 2.5 H59 M51 5 H59 M51 7.5 H59 M51 10 H59"/></g></svg>
<div class="a " style="left:1892px;top:144px;width:72px;height:28px;background:#1e1e1e"></div>
<div class="a" style="left:1896px;top:145px;width:64px;height:17px;background:rgba(0,0,0,0.12);border:1px solid rgba(0,0,0,0.5);border-radius:3px;font-size:8.6px;color:rgba(150,150,150,0.22);letter-spacing:-0.4px"><div style="position:absolute;left:4px;top:5px;width:6px;height:6px;background:rgba(90,90,90,0.6)"></div><div style="position:absolute;left:13px;top:3px">Mix Bus</div></div>
<div class="a " style="left:1892px;top:172px;width:72px;height:29px;background:#1b4a20"></div>
<div class="a" style="left:1896px;top:173px;width:64px;height:17px;background:#2c2c2c;border:1px solid rgba(0,0,0,0.5);border-radius:3px;font-size:8.6px;color:#c0c0c0;letter-spacing:-0.4px"><div style="position:absolute;left:4px;top:5px;width:6px;height:6px;background:#e8845a"></div><div style="position:absolute;left:13px;top:3px">PB</div></div>
<div class="a " style="left:1895px;top:193px;width:66px;height:6px;background:#141414;border-radius:3px"></div>
<div class="a " style="left:1892px;top:201px;width:72px;height:29px;background:#6b3d14"></div>
<div class="a" style="left:1896px;top:202px;width:64px;height:17px;background:rgba(0,0,0,0.12);border:1px solid rgba(0,0,0,0.5);border-radius:3px;font-size:8.6px;color:rgba(150,150,150,0.22);letter-spacing:-0.4px"><div style="position:absolute;left:4px;top:5px;width:6px;height:6px;background:rgba(90,90,90,0.6)"></div><div style="position:absolute;left:13px;top:3px">MIC</div></div>
<div class="a " style="left:1892px;top:230px;width:72px;height:29px;background:#6a1642"></div>
<div class="a" style="left:1896px;top:231px;width:64px;height:17px;background:#2c2c2c;border:1px solid rgba(0,0,0,0.5);border-radius:3px;font-size:8.6px;color:#c0c0c0;letter-spacing:-0.4px"><div style="position:absolute;left:4px;top:5px;width:6px;height:6px;background:#e8845a"></div><div style="position:absolute;left:13px;top:3px">ALL</div></div>
<div class="a " style="left:1895px;top:251px;width:66px;height:6px;background:#141414;border-radius:3px"></div>
<div class="a " style="left:1892px;top:259px;width:72px;height:29px;background:#1e1e1e"></div>
<div class="a" style="left:1896px;top:260px;width:64px;height:17px;background:rgba(0,0,0,0.12);border:1px solid rgba(0,0,0,0.5);border-radius:3px;font-size:8.6px;color:rgba(150,150,150,0.22);letter-spacing:-0.4px"><div style="position:absolute;left:4px;top:5px;width:6px;height:6px;background:rgba(90,90,90,0.6)"></div><div style="position:absolute;left:13px;top:3px">Aux Bus</div></div>
<div class="a " style="left:1892px;top:288px;width:72px;height:708px;background:#28615d"></div>
<svg style="left:1908px;top:290px" width="40" height="46"><path d="M10.1 27.9 A14 14 0 0 1 20 4" fill="none" stroke="#b0b0b0" stroke-width="2"/><path d="M20 4 A14 14 0 0 1 29.9 27.9" fill="none" stroke="#d02020" stroke-width="2"/><circle cx="20" cy="18" r="10.5" fill="url(#kg)" stroke="#111" stroke-width="1"/><line x1="20" y1="10" x2="20" y2="14" stroke="#e8e8e8" stroke-width="1.3"/></svg>
<div class="t " style="left:1888px;top:321px;font-size:9px;color:#1a1a1a;letter-spacing:-0.3px"><div style="width:80px;text-align:center">Balance</div></div>
<svg style="left:1896px;top:369px" width="64" height="34"><rect x="0.5" y="0.5" width="63" height="32" rx="3" fill="#141414" stroke="#2a2a2a"/><path d="M32 1 V32 M1 16.5 H63" stroke="#2c2c2c"/><path d="M3 16.5 H61" stroke="#c8c8c8" stroke-width="2"/></svg>
<svg style="left:1896px;top:407px" width="64" height="34"><rect x="0.5" y="0.5" width="63" height="32" rx="3" fill="#141414" stroke="#2a2a2a"/><path d="M3 31 L61 3" stroke="#303030" stroke-width="1"/></svg>
<div class="a " style="left:1896px;top:445px;width:64px;height:53px;background:rgba(0,0,0,0.10);border:1px solid rgba(255,255,255,0.08);border-radius:3px"></div>
<div class="a" style="left:1898px;top:447px;width:60px;height:13px;background:#2c2c2c;border:1px solid #151515;border-radius:2px;font-size:9px;color:#8a8a8a;letter-spacing:-0.3px;"><div style="position:absolute;left:3px;top:2px;width:7px;height:7px;background:#d8b050"></div><div style="position:absolute;left:13px;top:1px">EqX</div></div>
<div class="a" style="left:1898px;top:460px;width:60px;height:13px;background:#2c2c2c;border:1px solid #151515;border-radius:2px;font-size:9px;color:#8a8a8a;letter-spacing:-0.3px;text-decoration:line-through;"><div style="position:absolute;left:3px;top:2px;width:7px;height:7px;background:#d8b050"></div><div style="position:absolute;left:13px;top:1px">_GhostEffect_</div></div>
<svg style="left:1898px;top:483px" width="60" height="12"><g stroke="#111" stroke-width="1.3" fill="none"><path d="M3 6 H11 M7 2 V10"/><path d="M26 7 H33"/><rect x="40.5" y="2.5" width="7" height="7"/><path d="M51 2.5 H59 M51 5 H59 M51 7.5 H59 M51 10 H59"/></g></svg>
<div class="a " style="left:1966px;top:172px;width:72px;height:29px;background:#1b4a20"></div>
<div class="a " style="left:1966px;top:201px;width:72px;height:29px;background:#6b3d14"></div>
<div class="a " style="left:1966px;top:230px;width:72px;height:29px;background:#6a1642"></div>
<div class="a " style="left:1966px;top:288px;width:72px;height:708px;background:#1f1f1f"></div>
<div class="a " style="left:2040px;top:144px;width:72px;height:852px;background:#2e2e2e"></div>
<div class="a" style="left:2061px;top:263px;width:30px;height:11px;border:1px solid #5e5e5e;border-radius:2px;font-size:9.5px;color:#5e5e5e;text-align:center;line-height:10px">AB1</div>
<svg style="left:2044px;top:369px" width="64" height="34"><rect x="0.5" y="0.5" width="63" height="32" rx="3" fill="#141414" stroke="#2a2a2a"/><path d="M32 1 V32 M1 16.5 H63" stroke="#2c2c2c"/></svg>
<svg style="left:2044px;top:407px" width="64" height="34"><rect x="0.5" y="0.5" width="63" height="32" rx="3" fill="#141414" stroke="#2a2a2a"/><path d="M3 31 L61 3" stroke="#303030"/></svg>
<div class="a " style="left:2044px;top:445px;width:64px;height:53px;background:rgba(0,0,0,0.10);border:1px solid rgba(255,255,255,0.08);border-radius:3px"></div>
<svg style="left:2046px;top:483px" width="60" height="12"><g stroke="#666" stroke-width="1.2" fill="none"><path d="M3 6 H11 M7 2 V10"/><path d="M51 2.5 H59 M51 5 H59 M51 7.5 H59 M51 10 H59"/></g></svg>
<div class="a " style="left:2114px;top:288px;width:72px;height:708px;background:#6a1640"></div>
<div class="a" style="left:2135px;top:234px;width:30px;height:11px;border:1px solid #5e5e5e;border-radius:2px;font-size:9.5px;color:#5e5e5e;text-align:center;line-height:10px">MB1</div>
<svg style="left:2118px;top:369px" width="64" height="34"><rect x="0.5" y="0.5" width="63" height="32" rx="3" fill="#141414" stroke="#2a2a2a"/><path d="M32 1 V32 M1 16.5 H63" stroke="#2c2c2c"/><path d="M3 16.5 H61" stroke="#c8c8c8" stroke-width="2"/></svg>
<svg style="left:2118px;top:407px" width="64" height="34"><rect x="0.5" y="0.5" width="63" height="32" rx="3" fill="#141414" stroke="#2a2a2a"/><path d="M3 31 L61 3" stroke="#303030"/></svg>
<div class="a " style="left:2118px;top:445px;width:64px;height:53px;background:rgba(0,0,0,0.10);border:1px solid rgba(255,255,255,0.08);border-radius:3px"></div>
<div class="a" style="left:2120px;top:447px;width:60px;height:14px;background:#2c2c2c;border:1px solid #151515;border-radius:2px;font-size:9px;color:#8a8a8a;letter-spacing:-0.3px"><div style="position:absolute;left:3px;top:3px;width:7px;height:7px;background:#d8b050"></div><div style="position:absolute;left:13px;top:2px">Bus Tools</div></div>
<svg style="left:2120px;top:483px" width="60" height="12"><g stroke="#111" stroke-width="1.3" fill="none"><path d="M3 6 H11 M7 2 V10"/><path d="M26 7 H33"/><rect x="40.5" y="2.5" width="7" height="7"/><path d="M51 2.5 H59 M51 5 H59 M51 7.5 H59 M51 10 H59"/></g></svg>
<div class="a " style="left:2188px;top:288px;width:72px;height:708px;background:#6c3e14"></div>
<div class="a" style="left:2209px;top:205px;width:30px;height:11px;border:1px solid #5e5e5e;border-radius:2px;font-size:9.5px;color:#5e5e5e;text-align:center;line-height:10px">MB2</div>
<svg style="left:2192px;top:369px" width="64" height="34"><rect x="0.5" y="0.5" width="63" height="32" rx="3" fill="#141414" stroke="#2a2a2a"/><path d="M32 1 V32 M1 16.5 H63" stroke="#2c2c2c"/></svg>
<svg style="left:2192px;top:407px" width="64" height="34"><rect x="0.5" y="0.5" width="63" height="32" rx="3" fill="#141414" stroke="#2a2a2a"/><path d="M3 31 L61 3" stroke="#303030"/></svg>
<div class="a " style="left:2192px;top:445px;width:64px;height:53px;background:rgba(0,0,0,0.10);border:1px solid rgba(255,255,255,0.08);border-radius:3px"></div>
<svg style="left:2194px;top:483px" width="60" height="12"><g stroke="#111" stroke-width="1.2" fill="none"><path d="M3 6 H11 M7 2 V10"/><path d="M51 2.5 H59 M51 5 H59 M51 7.5 H59 M51 10 H59"/></g></svg>
<div class="a " style="left:2262px;top:288px;width:72px;height:708px;background:#1b4a1e"></div>
<div class="a" style="left:2283px;top:176px;width:30px;height:11px;border:1px solid #5e5e5e;border-radius:2px;font-size:9.5px;color:#5e5e5e;text-align:center;line-height:10px">MB3</div>
<svg style="left:2266px;top:369px" width="64" height="34"><rect x="0.5" y="0.5" width="63" height="32" rx="3" fill="#141414" stroke="#2a2a2a"/><path d="M32 1 V32 M1 16.5 H63" stroke="#2c2c2c"/></svg>
<svg style="left:2266px;top:407px" width="64" height="34"><rect x="0.5" y="0.5" width="63" height="32" rx="3" fill="#141414" stroke="#2a2a2a"/><path d="M3 31 L61 3" stroke="#303030"/></svg>
<div class="a " style="left:2266px;top:445px;width:64px;height:53px;background:rgba(0,0,0,0.10);border:1px solid rgba(255,255,255,0.08);border-radius:3px"></div>
<svg style="left:2268px;top:483px" width="60" height="12"><g stroke="#111" stroke-width="1.2" fill="none"><path d="M3 6 H11 M7 2 V10"/><path d="M51 2.5 H59 M51 5 H59 M51 7.5 H59 M51 10 H59"/></g></svg>
<div class="a " style="left:2336px;top:288px;width:72px;height:708px;background:#1f1f1f"></div>
<div class="a" style="left:2357px;top:147px;width:30px;height:11px;border:1px solid #5e5e5e;border-radius:2px;font-size:9.5px;color:#5e5e5e;text-align:center;line-height:10px">MB4</div>
<svg style="left:2340px;top:369px" width="64" height="34"><rect x="0.5" y="0.5" width="63" height="32" rx="3" fill="#141414" stroke="#2a2a2a"/><path d="M32 1 V32 M1 16.5 H63" stroke="#2c2c2c"/></svg>
<svg style="left:2340px;top:407px" width="64" height="34"><rect x="0.5" y="0.5" width="63" height="32" rx="3" fill="#141414" stroke="#2a2a2a"/><path d="M3 31 L61 3" stroke="#303030"/></svg>
<div class="a " style="left:2340px;top:445px;width:64px;height:53px;background:rgba(0,0,0,0.10);border:1px solid rgba(255,255,255,0.08);border-radius:3px"></div>
<svg style="left:2342px;top:483px" width="60" height="12"><g stroke="#666" stroke-width="1.2" fill="none"><path d="M3 6 H11 M7 2 V10"/><path d="M51 2.5 H59 M51 5 H59 M51 7.5 H59 M51 10 H59"/></g></svg>
<div class="a " style="left:1520px;top:144px;width:2px;height:852px;background:#121212"></div>
<div class="a " style="left:1594px;top:144px;width:2px;height:852px;background:#121212"></div>
<div class="a " style="left:1668px;top:144px;width:2px;height:852px;background:#121212"></div>
<div class="a " style="left:1742px;top:144px;width:2px;height:852px;background:#121212"></div>
<div class="a " style="left:1816px;top:144px;width:2px;height:852px;background:#121212"></div>
<div class="a " style="left:1890px;top:144px;width:2px;height:852px;background:#121212"></div>
<div class="a " style="left:1964px;top:144px;width:2px;height:852px;background:#121212"></div>
<div class="a " style="left:2038px;top:144px;width:2px;height:852px;background:#121212"></div>
<div class="a " style="left:2112px;top:144px;width:2px;height:852px;background:#121212"></div>
<div class="a " style="left:2186px;top:144px;width:2px;height:852px;background:#121212"></div>
<div class="a " style="left:2260px;top:144px;width:2px;height:852px;background:#121212"></div>
<div class="a " style="left:2334px;top:144px;width:2px;height:852px;background:#121212"></div>
<div class="a " style="left:2408px;top:144px;width:2px;height:852px;background:#121212"></div>
<div class="a " style="left:2408px;top:144px;width:2px;height:852px;background:#121212"></div>
<div class="a " style="left:1519px;top:996px;width:948px;height:17px;background:#151515"></div>
<div class="a" style="left:1528px;top:509px;width:60px;height:13px;background:#121212;border-radius:2px;font-size:10px;color:#a8c060;text-align:center;line-height:13px">-144.5</div>
<svg style="left:1531px;top:0px" width="14" height="740"><line x1="7" y1="552.0" x2="11" y2="552.0" stroke="#111" stroke-width="1"/><line x1="7" y1="558.0" x2="11" y2="558.0" stroke="#111" stroke-width="1"/><line x1="7" y1="570.0" x2="11" y2="570.0" stroke="#111" stroke-width="1"/><line x1="7" y1="576.0" x2="11" y2="576.0" stroke="#111" stroke-width="1"/><line x1="7" y1="588.0" x2="11" y2="588.0" stroke="#111" stroke-width="1"/><line x1="7" y1="594.0" x2="11" y2="594.0" stroke="#111" stroke-width="1"/><line x1="7" y1="606.0" x2="11" y2="606.0" stroke="#111" stroke-width="1"/><line x1="7" y1="612.0" x2="11" y2="612.0" stroke="#111" stroke-width="1"/><line x1="7" y1="624.0" x2="11" y2="624.0" stroke="#111" stroke-width="1"/><line x1="7" y1="630.0" x2="11" y2="630.0" stroke="#111" stroke-width="1"/><line x1="7" y1="642.0" x2="11" y2="642.0" stroke="#111" stroke-width="1"/><line x1="7" y1="654.0" x2="11" y2="654.0" stroke="#111" stroke-width="1"/><line x1="7" y1="666.0" x2="11" y2="666.0" stroke="#111" stroke-width="1"/><line x1="7" y1="678.0" x2="11" y2="678.0" stroke="#111" stroke-width="1"/><line x1="7" y1="690.0" x2="11" y2="690.0" stroke="#111" stroke-width="1"/><line x1="7" y1="702.0" x2="11" y2="702.0" stroke="#111" stroke-width="1"/><line x1="7" y1="714.0" x2="11" y2="714.0" stroke="#111" stroke-width="1"/><line x1="7" y1="723.0" x2="11" y2="723.0" stroke="#111" stroke-width="1"/><line x1="0" y1="546.5" x2="11" y2="546.5" stroke="#111" stroke-width="1"/><line x1="0" y1="564.5" x2="11" y2="564.5" stroke="#111" stroke-width="1"/><line x1="0" y1="582.5" x2="11" y2="582.5" stroke="#111" stroke-width="1"/><line x1="0" y1="600.5" x2="11" y2="600.5" stroke="#111" stroke-width="1"/><line x1="0" y1="618.5" x2="11" y2="618.5" stroke="#111" stroke-width="1"/><line x1="0" y1="636.5" x2="11" y2="636.5" stroke="#111" stroke-width="1"/><line x1="0" y1="648.5" x2="11" y2="648.5" stroke="#111" stroke-width="1"/><line x1="0" y1="660.5" x2="11" y2="660.5" stroke="#111" stroke-width="1"/><line x1="0" y1="672.5" x2="11" y2="672.5" stroke="#111" stroke-width="1"/><line x1="0" y1="684.5" x2="11" y2="684.5" stroke="#111" stroke-width="1"/><line x1="0" y1="696.5" x2="11" y2="696.5" stroke="#111" stroke-width="1"/><line x1="0" y1="708.5" x2="11" y2="708.5" stroke="#111" stroke-width="1"/><line x1="0" y1="720.5" x2="11" y2="720.5" stroke="#111" stroke-width="1"/><line x1="0" y1="726.5" x2="11" y2="726.5" stroke="#111" stroke-width="1"/></svg>
<div class="a " style="left:1544px;top:546px;width:3px;height:183px;background:#050505;border-radius:1px"></div>
<div class="a" style="left:1559px;top:0;width:14px;height:740px"><div class="t" style="left:0;top:542px;width:14px;text-align:right;font-size:8px;color:#222">12</div><div class="t" style="left:0;top:560px;width:14px;text-align:right;font-size:8px;color:#222">6</div><div class="t" style="left:0;top:578px;width:14px;text-align:right;font-size:8px;color:#222">0</div><div class="t" style="left:0;top:596px;width:14px;text-align:right;font-size:8px;color:#222">6</div><div class="t" style="left:0;top:614px;width:14px;text-align:right;font-size:8px;color:#222">12</div><div class="t" style="left:0;top:632px;width:14px;text-align:right;font-size:8px;color:#222">18</div><div class="t" style="left:0;top:644px;width:14px;text-align:right;font-size:8px;color:#222">24</div><div class="t" style="left:0;top:656px;width:14px;text-align:right;font-size:8px;color:#222">30</div><div class="t" style="left:0;top:668px;width:14px;text-align:right;font-size:8px;color:#222">36</div><div class="t" style="left:0;top:680px;width:14px;text-align:right;font-size:8px;color:#222">42</div><div class="t" style="left:0;top:692px;width:14px;text-align:right;font-size:8px;color:#222">48</div><div class="t" style="left:0;top:704px;width:14px;text-align:right;font-size:8px;color:#222">54</div><div class="t" style="left:0;top:716px;width:14px;text-align:right;font-size:8px;color:#222">60</div><div class="t" style="left:6px;top:723px;font-size:7px;color:#222">oo</div></div>
<div class="a " style="left:1577px;top:538px;width:12px;height:191px;background:#141414;border-radius:3px;box-shadow:inset 0 0 0 1px #0c0c0c"></div>
<svg style="left:1537px;top:567px" width="16" height="35"><defs><linearGradient id="fcgrey" x1="0" y1="0" x2="1" y2="0"><stop offset="0" stop-color="#6a6a6a"/><stop offset="0.5" stop-color="#b8b8b8"/><stop offset="1" stop-color="#6a6a6a"/></linearGradient></defs><rect x="0.5" y="0.5" width="15" height="34" rx="1.5" fill="url(#fcgrey)" stroke="#222"/><line x1="1" y1="3.0" x2="15" y2="3.0" stroke="#4a4a4a" stroke-width="0.8"/><line x1="1" y1="6.3" x2="15" y2="6.3" stroke="#4a4a4a" stroke-width="0.8"/><line x1="1" y1="9.6" x2="15" y2="9.6" stroke="#4a4a4a" stroke-width="0.8"/><line x1="1" y1="12.9" x2="15" y2="12.9" stroke="#4a4a4a" stroke-width="0.8"/><line x1="1" y1="16.2" x2="15" y2="16.2" stroke="#4a4a4a" stroke-width="0.8"/><line x1="1" y1="19.5" x2="15" y2="19.5" stroke="#4a4a4a" stroke-width="0.8"/><line x1="1" y1="22.8" x2="15" y2="22.8" stroke="#4a4a4a" stroke-width="0.8"/><line x1="1" y1="26.1" x2="15" y2="26.1" stroke="#4a4a4a" stroke-width="0.8"/><line x1="1" y1="29.4" x2="15" y2="29.4" stroke="#4a4a4a" stroke-width="0.8"/><line x1="1" y1="32.7" x2="15" y2="32.7" stroke="#4a4a4a" stroke-width="0.8"/><line x1="0" y1="17.5" x2="16" y2="17.5" stroke="#000" stroke-width="1.5"/></svg>
<div class="t " style="left:1536px;top:753px;font-size:14px;color:#1e1e1e">1</div>
<div class="a" style="left:1564px;top:747px;width:24px;height:24px;background:#2e2e2e;border:1px solid #0c0c0c;border-radius:3px"><div style="position:absolute;left:5px;top:5px;width:12px;height:12px;border-radius:50%;background:#d02828"></div></div>
<div class="a" style="left:1528px;top:780px;width:61px;height:12px;background:#121212;border-radius:2px;font-size:10.5px;color:#f4ecd8;text-align:center;line-height:12px;overflow:hidden;white-space:nowrap;letter-spacing:-0.3px">MIC 1</div>
<div class="a" style="left:1528px;top:800px;width:24px;height:24px;background:#2e2e2e;border:1px solid #0a0a0a;border-radius:2px;box-shadow:inset 0 0 0 1px rgba(255,255,255,0.06);display:flex;align-items:center;justify-content:center;font-size:13px;color:#c8c8c8;white-space:nowrap;overflow:hidden;">S</div>
<div class="a" style="left:1564px;top:800px;width:24px;height:24px;background:#2e2e2e;border:1px solid #0a0a0a;border-radius:2px;box-shadow:inset 0 0 0 1px rgba(255,255,255,0.06);display:flex;align-items:center;justify-content:center;font-size:13px;color:#c8c8c8;white-space:nowrap;overflow:hidden;">M</div>
<div class="a" style="left:1528px;top:830px;width:17px;height:17px;background:#2e2e2e;border:1px solid #0a0a0a;border-radius:2px;box-shadow:inset 0 0 0 1px rgba(255,255,255,0.06);display:flex;align-items:center;justify-content:center;font-size:8px;color:#999;white-space:nowrap;overflow:hidden;">SF</div>
<div class="a" style="left:1550px;top:830px;width:17px;height:17px;background:#2e2e2e;border:1px solid #0a0a0a;border-radius:2px;box-shadow:inset 0 0 0 1px rgba(255,255,255,0.06);display:flex;align-items:center;justify-content:center;font-size:8px;color:#999;white-space:nowrap;overflow:hidden;">Ø</div>
<div class="a" style="left:1572px;top:830px;width:17px;height:17px;background:#2e2e2e;border:1px solid #0a0a0a;border-radius:2px;box-shadow:inset 0 0 0 1px rgba(255,255,255,0.06);display:flex;align-items:center;justify-content:center;font-size:8px;color:#999;white-space:nowrap;overflow:hidden;">PF</div>
<div class="a" style="left:1528px;top:857px;width:13px;height:13px;background:#333;border:1px solid #111;border-radius:2px"></div>
<div class="t " style="left:1547px;top:859px;font-size:9px;color:#222">G1</div>
<svg style="left:1528px;top:881px" width="12" height="12"><circle cx="6" cy="6" r="5.5" fill="#1a1a1a"/><circle cx="4" cy="5" r="1.2" fill="#666"/><circle cx="8" cy="5" r="1.2" fill="#666"/><circle cx="6" cy="8" r="1.2" fill="#666"/></svg>
<div class="t " style="left:1545px;top:882px;font-size:10px;color:#222">Input</div>
<div class="a" style="left:1528px;top:898px;width:61px;height:12px;background:#121212;border-radius:2px;font-size:10px;color:#e01818;line-height:12px"><span style="position:absolute;left:4px">C</span><span style="position:absolute;right:4px">17</span></div>
<svg style="left:1528px;top:936px" width="12" height="12"><circle cx="6" cy="6" r="5" fill="none" stroke="#1a1a1a" stroke-width="1.2"/><circle cx="4" cy="5" r="1" fill="#1a1a1a"/><circle cx="8" cy="5" r="1" fill="#1a1a1a"/><circle cx="6" cy="8" r="1" fill="#1a1a1a"/></svg>
<div class="a" style="left:1544px;top:935px;width:27px;height:16px;background:#2a2a2a;border:1px solid #0a0a0a;border-radius:2px;box-shadow:inset 0 0 0 1px rgba(255,255,255,0.06);display:flex;align-items:center;justify-content:center;font-size:8px;color:#999;white-space:nowrap;overflow:hidden;">D.Out</div>
<div class="t " style="left:1527px;top:962px;font-size:10px;color:#222">Delay</div>
<div class="a" style="left:1559px;top:962px;width:30px;height:11px;background:#121212;border-radius:2px;font-size:9px;color:#ddd;text-align:center;line-height:11px">0</div>
<div class="a" style="left:1528px;top:979px;width:61px;height:13px;background:#121212;border-radius:2px;font-size:10.5px;color:#f4ecd8;text-align:center;line-height:13px">Input</div>
<svg style="left:1525px;top:999px" width="50" height="12"><g stroke="#8a8a8a" stroke-width="1" fill="none"><rect x="0.5" y="1.5" width="8" height="8"/><path d="M2.5 5.5 H6.5"/><path d="M16 5.5 H18 M18 3 V8 H21 V3 Z" fill="#8a8a8a"/><path d="M31 2 H39 M31 4.5 H39 M31 7 H39 M31 9.5 H39"/></g></svg>
<div class="a" style="left:1602px;top:509px;width:60px;height:13px;background:#121212;border-radius:2px;font-size:10px;color:#a8c060;text-align:center;line-height:13px">-144.5</div>
<svg style="left:1605px;top:0px" width="14" height="740"><line x1="7" y1="552.0" x2="11" y2="552.0" stroke="#111" stroke-width="1"/><line x1="7" y1="558.0" x2="11" y2="558.0" stroke="#111" stroke-width="1"/><line x1="7" y1="570.0" x2="11" y2="570.0" stroke="#111" stroke-width="1"/><line x1="7" y1="576.0" x2="11" y2="576.0" stroke="#111" stroke-width="1"/><line x1="7" y1="588.0" x2="11" y2="588.0" stroke="#111" stroke-width="1"/><line x1="7" y1="594.0" x2="11" y2="594.0" stroke="#111" stroke-width="1"/><line x1="7" y1="606.0" x2="11" y2="606.0" stroke="#111" stroke-width="1"/><line x1="7" y1="612.0" x2="11" y2="612.0" stroke="#111" stroke-width="1"/><line x1="7" y1="624.0" x2="11" y2="624.0" stroke="#111" stroke-width="1"/><line x1="7" y1="630.0" x2="11" y2="630.0" stroke="#111" stroke-width="1"/><line x1="7" y1="642.0" x2="11" y2="642.0" stroke="#111" stroke-width="1"/><line x1="7" y1="654.0" x2="11" y2="654.0" stroke="#111" stroke-width="1"/><line x1="7" y1="666.0" x2="11" y2="666.0" stroke="#111" stroke-width="1"/><line x1="7" y1="678.0" x2="11" y2="678.0" stroke="#111" stroke-width="1"/><line x1="7" y1="690.0" x2="11" y2="690.0" stroke="#111" stroke-width="1"/><line x1="7" y1="702.0" x2="11" y2="702.0" stroke="#111" stroke-width="1"/><line x1="7" y1="714.0" x2="11" y2="714.0" stroke="#111" stroke-width="1"/><line x1="7" y1="723.0" x2="11" y2="723.0" stroke="#111" stroke-width="1"/><line x1="0" y1="546.5" x2="11" y2="546.5" stroke="#111" stroke-width="1"/><line x1="0" y1="564.5" x2="11" y2="564.5" stroke="#111" stroke-width="1"/><line x1="0" y1="582.5" x2="11" y2="582.5" stroke="#111" stroke-width="1"/><line x1="0" y1="600.5" x2="11" y2="600.5" stroke="#111" stroke-width="1"/><line x1="0" y1="618.5" x2="11" y2="618.5" stroke="#111" stroke-width="1"/><line x1="0" y1="636.5" x2="11" y2="636.5" stroke="#111" stroke-width="1"/><line x1="0" y1="648.5" x2="11" y2="648.5" stroke="#111" stroke-width="1"/><line x1="0" y1="660.5" x2="11" y2="660.5" stroke="#111" stroke-width="1"/><line x1="0" y1="672.5" x2="11" y2="672.5" stroke="#111" stroke-width="1"/><line x1="0" y1="684.5" x2="11" y2="684.5" stroke="#111" stroke-width="1"/><line x1="0" y1="696.5" x2="11" y2="696.5" stroke="#111" stroke-width="1"/><line x1="0" y1="708.5" x2="11" y2="708.5" stroke="#111" stroke-width="1"/><line x1="0" y1="720.5" x2="11" y2="720.5" stroke="#111" stroke-width="1"/><line x1="0" y1="726.5" x2="11" y2="726.5" stroke="#111" stroke-width="1"/></svg>
<div class="a " style="left:1618px;top:546px;width:3px;height:183px;background:#050505;border-radius:1px"></div>
<div class="a" style="left:1633px;top:0;width:14px;height:740px"><div class="t" style="left:0;top:542px;width:14px;text-align:right;font-size:8px;color:#222">12</div><div class="t" style="left:0;top:560px;width:14px;text-align:right;font-size:8px;color:#222">6</div><div class="t" style="left:0;top:578px;width:14px;text-align:right;font-size:8px;color:#222">0</div><div class="t" style="left:0;top:596px;width:14px;text-align:right;font-size:8px;color:#222">6</div><div class="t" style="left:0;top:614px;width:14px;text-align:right;font-size:8px;color:#222">12</div><div class="t" style="left:0;top:632px;width:14px;text-align:right;font-size:8px;color:#222">18</div><div class="t" style="left:0;top:644px;width:14px;text-align:right;font-size:8px;color:#222">24</div><div class="t" style="left:0;top:656px;width:14px;text-align:right;font-size:8px;color:#222">30</div><div class="t" style="left:0;top:668px;width:14px;text-align:right;font-size:8px;color:#222">36</div><div class="t" style="left:0;top:680px;width:14px;text-align:right;font-size:8px;color:#222">42</div><div class="t" style="left:0;top:692px;width:14px;text-align:right;font-size:8px;color:#222">48</div><div class="t" style="left:0;top:704px;width:14px;text-align:right;font-size:8px;color:#222">54</div><div class="t" style="left:0;top:716px;width:14px;text-align:right;font-size:8px;color:#222">60</div><div class="t" style="left:6px;top:723px;font-size:7px;color:#222">oo</div></div>
<div class="a " style="left:1651px;top:538px;width:12px;height:191px;background:#141414;border-radius:3px;box-shadow:inset 0 0 0 1px #0c0c0c"></div>
<svg style="left:1611px;top:609px" width="16" height="35"><defs><linearGradient id="fcgrey" x1="0" y1="0" x2="1" y2="0"><stop offset="0" stop-color="#6a6a6a"/><stop offset="0.5" stop-color="#b8b8b8"/><stop offset="1" stop-color="#6a6a6a"/></linearGradient></defs><rect x="0.5" y="0.5" width="15" height="34" rx="1.5" fill="url(#fcgrey)" stroke="#222"/><line x1="1" y1="3.0" x2="15" y2="3.0" stroke="#4a4a4a" stroke-width="0.8"/><line x1="1" y1="6.3" x2="15" y2="6.3" stroke="#4a4a4a" stroke-width="0.8"/><line x1="1" y1="9.6" x2="15" y2="9.6" stroke="#4a4a4a" stroke-width="0.8"/><line x1="1" y1="12.9" x2="15" y2="12.9" stroke="#4a4a4a" stroke-width="0.8"/><line x1="1" y1="16.2" x2="15" y2="16.2" stroke="#4a4a4a" stroke-width="0.8"/><line x1="1" y1="19.5" x2="15" y2="19.5" stroke="#4a4a4a" stroke-width="0.8"/><line x1="1" y1="22.8" x2="15" y2="22.8" stroke="#4a4a4a" stroke-width="0.8"/><line x1="1" y1="26.1" x2="15" y2="26.1" stroke="#4a4a4a" stroke-width="0.8"/><line x1="1" y1="29.4" x2="15" y2="29.4" stroke="#4a4a4a" stroke-width="0.8"/><line x1="1" y1="32.7" x2="15" y2="32.7" stroke="#4a4a4a" stroke-width="0.8"/><line x1="0" y1="17.5" x2="16" y2="17.5" stroke="#000" stroke-width="1.5"/></svg>
<div class="a " style="left:1613px;top:628px;width:12px;height:2px;background:#f0d000"></div>
<div class="t " style="left:1610px;top:753px;font-size:14px;color:#1e1e1e">2</div>
<div class="a" style="left:1638px;top:747px;width:24px;height:24px;background:#2e2e2e;border:1px solid #0c0c0c;border-radius:3px"><div style="position:absolute;left:5px;top:5px;width:12px;height:12px;border-radius:50%;background:#d02828"></div></div>
<div class="a" style="left:1602px;top:780px;width:61px;height:12px;background:#121212;border-radius:2px;font-size:10.5px;color:#f4ecd8;text-align:center;line-height:12px;overflow:hidden;white-space:nowrap;letter-spacing:-0.3px">MIC 2</div>
<div class="a" style="left:1602px;top:800px;width:24px;height:24px;background:#2e2e2e;border:1px solid #0a0a0a;border-radius:2px;box-shadow:inset 0 0 0 1px rgba(255,255,255,0.06);display:flex;align-items:center;justify-content:center;font-size:13px;color:#c8c8c8;white-space:nowrap;overflow:hidden;">S</div>
<div class="a" style="left:1638px;top:800px;width:24px;height:24px;background:#2e2e2e;border:1px solid #0a0a0a;border-radius:2px;box-shadow:inset 0 0 0 1px rgba(255,255,255,0.06);display:flex;align-items:center;justify-content:center;font-size:13px;color:#c8c8c8;white-space:nowrap;overflow:hidden;">M</div>
<div class="a" style="left:1602px;top:830px;width:17px;height:17px;background:#2e2e2e;border:1px solid #0a0a0a;border-radius:2px;box-shadow:inset 0 0 0 1px rgba(255,255,255,0.06);display:flex;align-items:center;justify-content:center;font-size:8px;color:#999;white-space:nowrap;overflow:hidden;">SF</div>
<div class="a" style="left:1624px;top:830px;width:17px;height:17px;background:#2e2e2e;border:1px solid #0a0a0a;border-radius:2px;box-shadow:inset 0 0 0 1px rgba(255,255,255,0.06);display:flex;align-items:center;justify-content:center;font-size:8px;color:#999;white-space:nowrap;overflow:hidden;">Ø</div>
<div class="a" style="left:1646px;top:830px;width:17px;height:17px;background:#2e2e2e;border:1px solid #0a0a0a;border-radius:2px;box-shadow:inset 0 0 0 1px rgba(255,255,255,0.06);display:flex;align-items:center;justify-content:center;font-size:8px;color:#999;white-space:nowrap;overflow:hidden;">PF</div>
<div class="a" style="left:1602px;top:857px;width:13px;height:13px;background:#f0c000;border:1px solid #111;border-radius:2px"></div>
<div class="t " style="left:1621px;top:859px;font-size:9px;color:#222">G1</div>
<svg style="left:1602px;top:881px" width="12" height="12"><circle cx="6" cy="6" r="5.5" fill="#1a1a1a"/><circle cx="4" cy="5" r="1.2" fill="#666"/><circle cx="8" cy="5" r="1.2" fill="#666"/><circle cx="6" cy="8" r="1.2" fill="#666"/></svg>
<div class="t " style="left:1619px;top:882px;font-size:10px;color:#222">Input</div>
<div class="a" style="left:1602px;top:898px;width:61px;height:12px;background:#121212;border-radius:2px;font-size:10px;color:#e01818;line-height:12px"><span style="position:absolute;left:4px">C</span><span style="position:absolute;right:4px">18</span></div>
<svg style="left:1602px;top:936px" width="12" height="12"><circle cx="6" cy="6" r="5" fill="none" stroke="#1a1a1a" stroke-width="1.2"/><circle cx="4" cy="5" r="1" fill="#1a1a1a"/><circle cx="8" cy="5" r="1" fill="#1a1a1a"/><circle cx="6" cy="8" r="1" fill="#1a1a1a"/></svg>
<div class="a" style="left:1618px;top:935px;width:27px;height:16px;background:#2a2a2a;border:1px solid #0a0a0a;border-radius:2px;box-shadow:inset 0 0 0 1px rgba(255,255,255,0.06);display:flex;align-items:center;justify-content:center;font-size:8px;color:#999;white-space:nowrap;overflow:hidden;">D.Out</div>
<div class="t " style="left:1601px;top:962px;font-size:10px;color:#222">Delay</div>
<div class="a" style="left:1633px;top:962px;width:30px;height:11px;background:#121212;border-radius:2px;font-size:9px;color:#ddd;text-align:center;line-height:11px">0</div>
<div class="a" style="left:1602px;top:979px;width:61px;height:13px;background:#121212;border-radius:2px;font-size:10.5px;color:#f4ecd8;text-align:center;line-height:13px">Input</div>
<svg style="left:1599px;top:999px" width="50" height="12"><g stroke="#8a8a8a" stroke-width="1" fill="none"><rect x="0.5" y="1.5" width="8" height="8"/><path d="M2.5 5.5 H6.5"/><path d="M16 5.5 H18 M18 3 V8 H21 V3 Z" fill="#8a8a8a"/><path d="M31 2 H39 M31 4.5 H39 M31 7 H39 M31 9.5 H39"/></g></svg>
<div class="a" style="left:1676px;top:509px;width:60px;height:13px;background:#121212;border-radius:2px;font-size:10px;color:#a8c060;text-align:center;line-height:13px">-144.5</div>
<svg style="left:1679px;top:0px" width="14" height="740"><line x1="7" y1="552.0" x2="11" y2="552.0" stroke="#111" stroke-width="1"/><line x1="7" y1="558.0" x2="11" y2="558.0" stroke="#111" stroke-width="1"/><line x1="7" y1="570.0" x2="11" y2="570.0" stroke="#111" stroke-width="1"/><line x1="7" y1="576.0" x2="11" y2="576.0" stroke="#111" stroke-width="1"/><line x1="7" y1="588.0" x2="11" y2="588.0" stroke="#111" stroke-width="1"/><line x1="7" y1="594.0" x2="11" y2="594.0" stroke="#111" stroke-width="1"/><line x1="7" y1="606.0" x2="11" y2="606.0" stroke="#111" stroke-width="1"/><line x1="7" y1="612.0" x2="11" y2="612.0" stroke="#111" stroke-width="1"/><line x1="7" y1="624.0" x2="11" y2="624.0" stroke="#111" stroke-width="1"/><line x1="7" y1="630.0" x2="11" y2="630.0" stroke="#111" stroke-width="1"/><line x1="7" y1="642.0" x2="11" y2="642.0" stroke="#111" stroke-width="1"/><line x1="7" y1="654.0" x2="11" y2="654.0" stroke="#111" stroke-width="1"/><line x1="7" y1="666.0" x2="11" y2="666.0" stroke="#111" stroke-width="1"/><line x1="7" y1="678.0" x2="11" y2="678.0" stroke="#111" stroke-width="1"/><line x1="7" y1="690.0" x2="11" y2="690.0" stroke="#111" stroke-width="1"/><line x1="7" y1="702.0" x2="11" y2="702.0" stroke="#111" stroke-width="1"/><line x1="7" y1="714.0" x2="11" y2="714.0" stroke="#111" stroke-width="1"/><line x1="7" y1="723.0" x2="11" y2="723.0" stroke="#111" stroke-width="1"/><line x1="0" y1="546.5" x2="11" y2="546.5" stroke="#111" stroke-width="1"/><line x1="0" y1="564.5" x2="11" y2="564.5" stroke="#111" stroke-width="1"/><line x1="0" y1="582.5" x2="11" y2="582.5" stroke="#111" stroke-width="1"/><line x1="0" y1="600.5" x2="11" y2="600.5" stroke="#111" stroke-width="1"/><line x1="0" y1="618.5" x2="11" y2="618.5" stroke="#111" stroke-width="1"/><line x1="0" y1="636.5" x2="11" y2="636.5" stroke="#111" stroke-width="1"/><line x1="0" y1="648.5" x2="11" y2="648.5" stroke="#111" stroke-width="1"/><line x1="0" y1="660.5" x2="11" y2="660.5" stroke="#111" stroke-width="1"/><line x1="0" y1="672.5" x2="11" y2="672.5" stroke="#111" stroke-width="1"/><line x1="0" y1="684.5" x2="11" y2="684.5" stroke="#111" stroke-width="1"/><line x1="0" y1="696.5" x2="11" y2="696.5" stroke="#111" stroke-width="1"/><line x1="0" y1="708.5" x2="11" y2="708.5" stroke="#111" stroke-width="1"/><line x1="0" y1="720.5" x2="11" y2="720.5" stroke="#111" stroke-width="1"/><line x1="0" y1="726.5" x2="11" y2="726.5" stroke="#111" stroke-width="1"/></svg>
<div class="a " style="left:1692px;top:546px;width:3px;height:183px;background:#050505;border-radius:1px"></div>
<div class="a" style="left:1707px;top:0;width:14px;height:740px"><div class="t" style="left:0;top:542px;width:14px;text-align:right;font-size:8px;color:#222">12</div><div class="t" style="left:0;top:560px;width:14px;text-align:right;font-size:8px;color:#222">6</div><div class="t" style="left:0;top:578px;width:14px;text-align:right;font-size:8px;color:#222">0</div><div class="t" style="left:0;top:596px;width:14px;text-align:right;font-size:8px;color:#222">6</div><div class="t" style="left:0;top:614px;width:14px;text-align:right;font-size:8px;color:#222">12</div><div class="t" style="left:0;top:632px;width:14px;text-align:right;font-size:8px;color:#222">18</div><div class="t" style="left:0;top:644px;width:14px;text-align:right;font-size:8px;color:#222">24</div><div class="t" style="left:0;top:656px;width:14px;text-align:right;font-size:8px;color:#222">30</div><div class="t" style="left:0;top:668px;width:14px;text-align:right;font-size:8px;color:#222">36</div><div class="t" style="left:0;top:680px;width:14px;text-align:right;font-size:8px;color:#222">42</div><div class="t" style="left:0;top:692px;width:14px;text-align:right;font-size:8px;color:#222">48</div><div class="t" style="left:0;top:704px;width:14px;text-align:right;font-size:8px;color:#222">54</div><div class="t" style="left:0;top:716px;width:14px;text-align:right;font-size:8px;color:#222">60</div><div class="t" style="left:6px;top:723px;font-size:7px;color:#222">oo</div></div>
<div class="a " style="left:1725px;top:538px;width:12px;height:191px;background:#141414;border-radius:3px;box-shadow:inset 0 0 0 1px #0c0c0c"></div>
<svg style="left:1685px;top:636px" width="16" height="35"><defs><linearGradient id="fcgrey" x1="0" y1="0" x2="1" y2="0"><stop offset="0" stop-color="#6a6a6a"/><stop offset="0.5" stop-color="#b8b8b8"/><stop offset="1" stop-color="#6a6a6a"/></linearGradient></defs><rect x="0.5" y="0.5" width="15" height="34" rx="1.5" fill="url(#fcgrey)" stroke="#222"/><line x1="1" y1="3.0" x2="15" y2="3.0" stroke="#4a4a4a" stroke-width="0.8"/><line x1="1" y1="6.3" x2="15" y2="6.3" stroke="#4a4a4a" stroke-width="0.8"/><line x1="1" y1="9.6" x2="15" y2="9.6" stroke="#4a4a4a" stroke-width="0.8"/><line x1="1" y1="12.9" x2="15" y2="12.9" stroke="#4a4a4a" stroke-width="0.8"/><line x1="1" y1="16.2" x2="15" y2="16.2" stroke="#4a4a4a" stroke-width="0.8"/><line x1="1" y1="19.5" x2="15" y2="19.5" stroke="#4a4a4a" stroke-width="0.8"/><line x1="1" y1="22.8" x2="15" y2="22.8" stroke="#4a4a4a" stroke-width="0.8"/><line x1="1" y1="26.1" x2="15" y2="26.1" stroke="#4a4a4a" stroke-width="0.8"/><line x1="1" y1="29.4" x2="15" y2="29.4" stroke="#4a4a4a" stroke-width="0.8"/><line x1="1" y1="32.7" x2="15" y2="32.7" stroke="#4a4a4a" stroke-width="0.8"/><line x1="0" y1="17.5" x2="16" y2="17.5" stroke="#000" stroke-width="1.5"/></svg>
<div class="t " style="left:1684px;top:753px;font-size:14px;color:#1e1e1e">3</div>
<div class="a" style="left:1712px;top:747px;width:24px;height:24px;background:#2e2e2e;border:1px solid #0c0c0c;border-radius:3px"><div style="position:absolute;left:5px;top:5px;width:12px;height:12px;border-radius:50%;background:#d02828"></div></div>
<div class="a" style="left:1676px;top:780px;width:61px;height:12px;background:#121212;border-radius:2px;font-size:10.5px;color:#f4ecd8;text-align:center;line-height:12px;overflow:hidden;white-space:nowrap;letter-spacing:-0.3px">Stereo 1</div>
<div class="a" style="left:1676px;top:800px;width:24px;height:24px;background:#2e2e2e;border:1px solid #0a0a0a;border-radius:2px;box-shadow:inset 0 0 0 1px rgba(255,255,255,0.06);display:flex;align-items:center;justify-content:center;font-size:13px;color:#c8c8c8;white-space:nowrap;overflow:hidden;">S</div>
<div class="a" style="left:1712px;top:800px;width:24px;height:24px;background:#2e2e2e;border:1px solid #0a0a0a;border-radius:2px;box-shadow:inset 0 0 0 1px rgba(255,255,255,0.06);display:flex;align-items:center;justify-content:center;font-size:13px;color:#c8c8c8;white-space:nowrap;overflow:hidden;">M</div>
<div class="a" style="left:1676px;top:830px;width:17px;height:17px;background:#2e2e2e;border:1px solid #0a0a0a;border-radius:2px;box-shadow:inset 0 0 0 1px rgba(255,255,255,0.06);display:flex;align-items:center;justify-content:center;font-size:8px;color:#999;white-space:nowrap;overflow:hidden;">SF</div>
<div class="a" style="left:1698px;top:830px;width:17px;height:17px;background:#2e2e2e;border:1px solid #0a0a0a;border-radius:2px;box-shadow:inset 0 0 0 1px rgba(255,255,255,0.06);display:flex;align-items:center;justify-content:center;font-size:8px;color:#999;white-space:nowrap;overflow:hidden;">Ø</div>
<div class="a" style="left:1720px;top:830px;width:17px;height:17px;background:#2e2e2e;border:1px solid #0a0a0a;border-radius:2px;box-shadow:inset 0 0 0 1px rgba(255,255,255,0.06);display:flex;align-items:center;justify-content:center;font-size:8px;color:#999;white-space:nowrap;overflow:hidden;">PF</div>
<div class="a" style="left:1676px;top:857px;width:13px;height:13px;background:#f0c000;border:1px solid #111;border-radius:2px"></div>
<div class="t " style="left:1695px;top:859px;font-size:9px;color:#222">G1</div>
<svg style="left:1676px;top:881px" width="12" height="12"><circle cx="6" cy="6" r="5.5" fill="#1a1a1a"/><circle cx="4" cy="5" r="1.2" fill="#666"/><circle cx="8" cy="5" r="1.2" fill="#666"/><circle cx="6" cy="8" r="1.2" fill="#666"/></svg>
<div class="t " style="left:1693px;top:882px;font-size:10px;color:#222">Input</div>
<div class="a" style="left:1676px;top:898px;width:61px;height:12px;background:#121212;border-radius:2px;font-size:10px;color:#e01818;line-height:12px"><span style="position:absolute;left:4px">L</span><span style="position:absolute;right:4px">19</span></div>
<div class="a" style="left:1676px;top:914px;width:61px;height:12px;background:#121212;border-radius:2px;font-size:10px;color:#e01818;line-height:12px"><span style="position:absolute;left:4px">R</span><span style="position:absolute;right:4px">20</span></div>
<svg style="left:1676px;top:936px" width="12" height="12"><circle cx="6" cy="6" r="5" fill="none" stroke="#1a1a1a" stroke-width="1.2"/><circle cx="4" cy="5" r="1" fill="#1a1a1a"/><circle cx="8" cy="5" r="1" fill="#1a1a1a"/><circle cx="6" cy="8" r="1" fill="#1a1a1a"/></svg>
<div class="a" style="left:1692px;top:935px;width:27px;height:16px;background:#2a2a2a;border:1px solid #0a0a0a;border-radius:2px;box-shadow:inset 0 0 0 1px rgba(255,255,255,0.06);display:flex;align-items:center;justify-content:center;font-size:8px;color:#999;white-space:nowrap;overflow:hidden;">D.Out</div>
<div class="t " style="left:1675px;top:962px;font-size:10px;color:#222">Delay</div>
<div class="a" style="left:1707px;top:962px;width:30px;height:11px;background:#121212;border-radius:2px;font-size:9px;color:#ddd;text-align:center;line-height:11px">0</div>
<div class="a" style="left:1676px;top:979px;width:61px;height:13px;background:#121212;border-radius:2px;font-size:10.5px;color:#f4ecd8;text-align:center;line-height:13px">Input</div>
<svg style="left:1673px;top:999px" width="50" height="12"><g stroke="#8a8a8a" stroke-width="1" fill="none"><rect x="0.5" y="1.5" width="8" height="8"/><path d="M2.5 5.5 H6.5"/><path d="M16 5.5 H18 M18 3 V8 H21 V3 Z" fill="#8a8a8a"/><path d="M31 2 H39 M31 4.5 H39 M31 7 H39 M31 9.5 H39"/></g></svg>
<div class="a" style="left:1750px;top:509px;width:60px;height:13px;background:#121212;border-radius:2px;font-size:10px;color:#a8c060;text-align:center;line-height:13px">-144.5</div>
<svg style="left:1753px;top:0px" width="14" height="740"><line x1="7" y1="552.0" x2="11" y2="552.0" stroke="#111" stroke-width="1"/><line x1="7" y1="558.0" x2="11" y2="558.0" stroke="#111" stroke-width="1"/><line x1="7" y1="570.0" x2="11" y2="570.0" stroke="#111" stroke-width="1"/><line x1="7" y1="576.0" x2="11" y2="576.0" stroke="#111" stroke-width="1"/><line x1="7" y1="588.0" x2="11" y2="588.0" stroke="#111" stroke-width="1"/><line x1="7" y1="594.0" x2="11" y2="594.0" stroke="#111" stroke-width="1"/><line x1="7" y1="606.0" x2="11" y2="606.0" stroke="#111" stroke-width="1"/><line x1="7" y1="612.0" x2="11" y2="612.0" stroke="#111" stroke-width="1"/><line x1="7" y1="624.0" x2="11" y2="624.0" stroke="#111" stroke-width="1"/><line x1="7" y1="630.0" x2="11" y2="630.0" stroke="#111" stroke-width="1"/><line x1="7" y1="642.0" x2="11" y2="642.0" stroke="#111" stroke-width="1"/><line x1="7" y1="654.0" x2="11" y2="654.0" stroke="#111" stroke-width="1"/><line x1="7" y1="666.0" x2="11" y2="666.0" stroke="#111" stroke-width="1"/><line x1="7" y1="678.0" x2="11" y2="678.0" stroke="#111" stroke-width="1"/><line x1="7" y1="690.0" x2="11" y2="690.0" stroke="#111" stroke-width="1"/><line x1="7" y1="702.0" x2="11" y2="702.0" stroke="#111" stroke-width="1"/><line x1="7" y1="714.0" x2="11" y2="714.0" stroke="#111" stroke-width="1"/><line x1="7" y1="723.0" x2="11" y2="723.0" stroke="#111" stroke-width="1"/><line x1="0" y1="546.5" x2="11" y2="546.5" stroke="#111" stroke-width="1"/><line x1="0" y1="564.5" x2="11" y2="564.5" stroke="#111" stroke-width="1"/><line x1="0" y1="582.5" x2="11" y2="582.5" stroke="#111" stroke-width="1"/><line x1="0" y1="600.5" x2="11" y2="600.5" stroke="#111" stroke-width="1"/><line x1="0" y1="618.5" x2="11" y2="618.5" stroke="#111" stroke-width="1"/><line x1="0" y1="636.5" x2="11" y2="636.5" stroke="#111" stroke-width="1"/><line x1="0" y1="648.5" x2="11" y2="648.5" stroke="#111" stroke-width="1"/><line x1="0" y1="660.5" x2="11" y2="660.5" stroke="#111" stroke-width="1"/><line x1="0" y1="672.5" x2="11" y2="672.5" stroke="#111" stroke-width="1"/><line x1="0" y1="684.5" x2="11" y2="684.5" stroke="#111" stroke-width="1"/><line x1="0" y1="696.5" x2="11" y2="696.5" stroke="#111" stroke-width="1"/><line x1="0" y1="708.5" x2="11" y2="708.5" stroke="#111" stroke-width="1"/><line x1="0" y1="720.5" x2="11" y2="720.5" stroke="#111" stroke-width="1"/><line x1="0" y1="726.5" x2="11" y2="726.5" stroke="#111" stroke-width="1"/></svg>
<div class="a " style="left:1766px;top:546px;width:3px;height:183px;background:#050505;border-radius:1px"></div>
<div class="a" style="left:1781px;top:0;width:14px;height:740px"><div class="t" style="left:0;top:542px;width:14px;text-align:right;font-size:8px;color:#222">12</div><div class="t" style="left:0;top:560px;width:14px;text-align:right;font-size:8px;color:#222">6</div><div class="t" style="left:0;top:578px;width:14px;text-align:right;font-size:8px;color:#222">0</div><div class="t" style="left:0;top:596px;width:14px;text-align:right;font-size:8px;color:#222">6</div><div class="t" style="left:0;top:614px;width:14px;text-align:right;font-size:8px;color:#222">12</div><div class="t" style="left:0;top:632px;width:14px;text-align:right;font-size:8px;color:#222">18</div><div class="t" style="left:0;top:644px;width:14px;text-align:right;font-size:8px;color:#222">24</div><div class="t" style="left:0;top:656px;width:14px;text-align:right;font-size:8px;color:#222">30</div><div class="t" style="left:0;top:668px;width:14px;text-align:right;font-size:8px;color:#222">36</div><div class="t" style="left:0;top:680px;width:14px;text-align:right;font-size:8px;color:#222">42</div><div class="t" style="left:0;top:692px;width:14px;text-align:right;font-size:8px;color:#222">48</div><div class="t" style="left:0;top:704px;width:14px;text-align:right;font-size:8px;color:#222">54</div><div class="t" style="left:0;top:716px;width:14px;text-align:right;font-size:8px;color:#222">60</div><div class="t" style="left:6px;top:723px;font-size:7px;color:#222">oo</div></div>
<div class="a " style="left:1799px;top:538px;width:12px;height:191px;background:#141414;border-radius:3px;box-shadow:inset 0 0 0 1px #0c0c0c"></div>
<svg style="left:1759px;top:571px" width="16" height="35"><defs><linearGradient id="fcgrey" x1="0" y1="0" x2="1" y2="0"><stop offset="0" stop-color="#6a6a6a"/><stop offset="0.5" stop-color="#b8b8b8"/><stop offset="1" stop-color="#6a6a6a"/></linearGradient></defs><rect x="0.5" y="0.5" width="15" height="34" rx="1.5" fill="url(#fcgrey)" stroke="#222"/><line x1="1" y1="3.0" x2="15" y2="3.0" stroke="#4a4a4a" stroke-width="0.8"/><line x1="1" y1="6.3" x2="15" y2="6.3" stroke="#4a4a4a" stroke-width="0.8"/><line x1="1" y1="9.6" x2="15" y2="9.6" stroke="#4a4a4a" stroke-width="0.8"/><line x1="1" y1="12.9" x2="15" y2="12.9" stroke="#4a4a4a" stroke-width="0.8"/><line x1="1" y1="16.2" x2="15" y2="16.2" stroke="#4a4a4a" stroke-width="0.8"/><line x1="1" y1="19.5" x2="15" y2="19.5" stroke="#4a4a4a" stroke-width="0.8"/><line x1="1" y1="22.8" x2="15" y2="22.8" stroke="#4a4a4a" stroke-width="0.8"/><line x1="1" y1="26.1" x2="15" y2="26.1" stroke="#4a4a4a" stroke-width="0.8"/><line x1="1" y1="29.4" x2="15" y2="29.4" stroke="#4a4a4a" stroke-width="0.8"/><line x1="1" y1="32.7" x2="15" y2="32.7" stroke="#4a4a4a" stroke-width="0.8"/><line x1="0" y1="17.5" x2="16" y2="17.5" stroke="#000" stroke-width="1.5"/></svg>
<div class="t " style="left:1758px;top:753px;font-size:14px;color:#1e1e1e">4</div>
<div class="a" style="left:1786px;top:747px;width:24px;height:24px;background:#2e2e2e;border:1px solid #0c0c0c;border-radius:3px"><div style="position:absolute;left:5px;top:5px;width:12px;height:12px;border-radius:50%;background:#d02828"></div></div>
<div class="a" style="left:1750px;top:780px;width:61px;height:12px;background:#121212;border-radius:2px;font-size:10.5px;color:#f4ecd8;text-align:center;line-height:12px;overflow:hidden;white-space:nowrap;letter-spacing:-0.3px">Stereo 2</div>
<div class="a" style="left:1750px;top:800px;width:24px;height:24px;background:#2e2e2e;border:1px solid #0a0a0a;border-radius:2px;box-shadow:inset 0 0 0 1px rgba(255,255,255,0.06);display:flex;align-items:center;justify-content:center;font-size:13px;color:#c8c8c8;white-space:nowrap;overflow:hidden;">S</div>
<div class="a" style="left:1786px;top:800px;width:24px;height:24px;background:#2e2e2e;border:1px solid #0a0a0a;border-radius:2px;box-shadow:inset 0 0 0 1px rgba(255,255,255,0.06);display:flex;align-items:center;justify-content:center;font-size:13px;color:#c8c8c8;white-space:nowrap;overflow:hidden;">M</div>
<div class="a" style="left:1750px;top:830px;width:17px;height:17px;background:#2e2e2e;border:1px solid #0a0a0a;border-radius:2px;box-shadow:inset 0 0 0 1px rgba(255,255,255,0.06);display:flex;align-items:center;justify-content:center;font-size:8px;color:#999;white-space:nowrap;overflow:hidden;">SF</div>
<div class="a" style="left:1772px;top:830px;width:17px;height:17px;background:#2e2e2e;border:1px solid #0a0a0a;border-radius:2px;box-shadow:inset 0 0 0 1px rgba(255,255,255,0.06);display:flex;align-items:center;justify-content:center;font-size:8px;color:#999;white-space:nowrap;overflow:hidden;">Ø</div>
<div class="a" style="left:1794px;top:830px;width:17px;height:17px;background:#2e2e2e;border:1px solid #0a0a0a;border-radius:2px;box-shadow:inset 0 0 0 1px rgba(255,255,255,0.06);display:flex;align-items:center;justify-content:center;font-size:8px;color:#999;white-space:nowrap;overflow:hidden;">PF</div>
<div class="a" style="left:1750px;top:857px;width:13px;height:13px;background:#333;border:1px solid #111;border-radius:2px"></div>
<div class="t " style="left:1769px;top:859px;font-size:9px;color:#222">G1</div>
<svg style="left:1750px;top:881px" width="12" height="12"><circle cx="6" cy="6" r="5.5" fill="#1a1a1a"/><circle cx="4" cy="5" r="1.2" fill="#666"/><circle cx="8" cy="5" r="1.2" fill="#666"/><circle cx="6" cy="8" r="1.2" fill="#666"/></svg>
<div class="t " style="left:1767px;top:882px;font-size:10px;color:#222">Input</div>
<div class="a" style="left:1750px;top:898px;width:61px;height:12px;background:#121212;border-radius:2px;font-size:10px;color:#e01818;line-height:12px"><span style="position:absolute;left:4px">L</span><span style="position:absolute;right:4px">21</span></div>
<div class="a" style="left:1750px;top:914px;width:61px;height:12px;background:#121212;border-radius:2px;font-size:10px;color:#e01818;line-height:12px"><span style="position:absolute;left:4px">R</span><span style="position:absolute;right:4px">22</span></div>
<svg style="left:1750px;top:936px" width="12" height="12"><circle cx="6" cy="6" r="5" fill="none" stroke="#1a1a1a" stroke-width="1.2"/><circle cx="4" cy="5" r="1" fill="#1a1a1a"/><circle cx="8" cy="5" r="1" fill="#1a1a1a"/><circle cx="6" cy="8" r="1" fill="#1a1a1a"/></svg>
<div class="a" style="left:1766px;top:935px;width:27px;height:16px;background:#2a2a2a;border:1px solid #0a0a0a;border-radius:2px;box-shadow:inset 0 0 0 1px rgba(255,255,255,0.06);display:flex;align-items:center;justify-content:center;font-size:8px;color:#999;white-space:nowrap;overflow:hidden;">D.Out</div>
<div class="t " style="left:1749px;top:962px;font-size:10px;color:#222">Delay</div>
<div class="a" style="left:1781px;top:962px;width:30px;height:11px;background:#121212;border-radius:2px;font-size:9px;color:#ddd;text-align:center;line-height:11px">0</div>
<div class="a" style="left:1750px;top:979px;width:61px;height:13px;background:#121212;border-radius:2px;font-size:10.5px;color:#f4ecd8;text-align:center;line-height:13px">Input</div>
<svg style="left:1747px;top:999px" width="50" height="12"><g stroke="#8a8a8a" stroke-width="1" fill="none"><rect x="0.5" y="1.5" width="8" height="8"/><path d="M2.5 5.5 H6.5"/><path d="M16 5.5 H18 M18 3 V8 H21 V3 Z" fill="#8a8a8a"/><path d="M31 2 H39 M31 4.5 H39 M31 7 H39 M31 9.5 H39"/></g></svg>
<div class="a" style="left:1824px;top:509px;width:60px;height:13px;background:#121212;border-radius:2px;font-size:10px;color:#a8c060;text-align:center;line-height:13px">-144.5</div>
<svg style="left:1827px;top:0px" width="14" height="740"><line x1="7" y1="552.0" x2="11" y2="552.0" stroke="#777" stroke-width="1"/><line x1="7" y1="558.0" x2="11" y2="558.0" stroke="#777" stroke-width="1"/><line x1="7" y1="570.0" x2="11" y2="570.0" stroke="#777" stroke-width="1"/><line x1="7" y1="576.0" x2="11" y2="576.0" stroke="#777" stroke-width="1"/><line x1="7" y1="588.0" x2="11" y2="588.0" stroke="#777" stroke-width="1"/><line x1="7" y1="594.0" x2="11" y2="594.0" stroke="#777" stroke-width="1"/><line x1="7" y1="606.0" x2="11" y2="606.0" stroke="#777" stroke-width="1"/><line x1="7" y1="612.0" x2="11" y2="612.0" stroke="#777" stroke-width="1"/><line x1="7" y1="624.0" x2="11" y2="624.0" stroke="#777" stroke-width="1"/><line x1="7" y1="630.0" x2="11" y2="630.0" stroke="#777" stroke-width="1"/><line x1="7" y1="642.0" x2="11" y2="642.0" stroke="#777" stroke-width="1"/><line x1="7" y1="654.0" x2="11" y2="654.0" stroke="#777" stroke-width="1"/><line x1="7" y1="666.0" x2="11" y2="666.0" stroke="#777" stroke-width="1"/><line x1="7" y1="678.0" x2="11" y2="678.0" stroke="#777" stroke-width="1"/><line x1="7" y1="690.0" x2="11" y2="690.0" stroke="#777" stroke-width="1"/><line x1="7" y1="702.0" x2="11" y2="702.0" stroke="#777" stroke-width="1"/><line x1="7" y1="714.0" x2="11" y2="714.0" stroke="#777" stroke-width="1"/><line x1="7" y1="723.0" x2="11" y2="723.0" stroke="#777" stroke-width="1"/><line x1="0" y1="546.5" x2="11" y2="546.5" stroke="#777" stroke-width="1"/><line x1="0" y1="564.5" x2="11" y2="564.5" stroke="#777" stroke-width="1"/><line x1="0" y1="582.5" x2="11" y2="582.5" stroke="#777" stroke-width="1"/><line x1="0" y1="600.5" x2="11" y2="600.5" stroke="#777" stroke-width="1"/><line x1="0" y1="618.5" x2="11" y2="618.5" stroke="#777" stroke-width="1"/><line x1="0" y1="636.5" x2="11" y2="636.5" stroke="#777" stroke-width="1"/><line x1="0" y1="648.5" x2="11" y2="648.5" stroke="#777" stroke-width="1"/><line x1="0" y1="660.5" x2="11" y2="660.5" stroke="#777" stroke-width="1"/><line x1="0" y1="672.5" x2="11" y2="672.5" stroke="#777" stroke-width="1"/><line x1="0" y1="684.5" x2="11" y2="684.5" stroke="#777" stroke-width="1"/><line x1="0" y1="696.5" x2="11" y2="696.5" stroke="#777" stroke-width="1"/><line x1="0" y1="708.5" x2="11" y2="708.5" stroke="#777" stroke-width="1"/><line x1="0" y1="720.5" x2="11" y2="720.5" stroke="#777" stroke-width="1"/><line x1="0" y1="726.5" x2="11" y2="726.5" stroke="#777" stroke-width="1"/></svg>
<div class="a " style="left:1840px;top:546px;width:3px;height:183px;background:#050505;border-radius:1px"></div>
<div class="a" style="left:1855px;top:0;width:14px;height:740px"><div class="t" style="left:0;top:542px;width:14px;text-align:right;font-size:8px;color:#222">12</div><div class="t" style="left:0;top:560px;width:14px;text-align:right;font-size:8px;color:#222">6</div><div class="t" style="left:0;top:578px;width:14px;text-align:right;font-size:8px;color:#222">0</div><div class="t" style="left:0;top:596px;width:14px;text-align:right;font-size:8px;color:#222">6</div><div class="t" style="left:0;top:614px;width:14px;text-align:right;font-size:8px;color:#222">12</div><div class="t" style="left:0;top:632px;width:14px;text-align:right;font-size:8px;color:#222">18</div><div class="t" style="left:0;top:644px;width:14px;text-align:right;font-size:8px;color:#222">24</div><div class="t" style="left:0;top:656px;width:14px;text-align:right;font-size:8px;color:#222">30</div><div class="t" style="left:0;top:668px;width:14px;text-align:right;font-size:8px;color:#222">36</div><div class="t" style="left:0;top:680px;width:14px;text-align:right;font-size:8px;color:#222">42</div><div class="t" style="left:0;top:692px;width:14px;text-align:right;font-size:8px;color:#222">48</div><div class="t" style="left:0;top:704px;width:14px;text-align:right;font-size:8px;color:#222">54</div><div class="t" style="left:0;top:716px;width:14px;text-align:right;font-size:8px;color:#222">60</div><div class="t" style="left:6px;top:723px;font-size:7px;color:#222">oo</div></div>
<div class="a " style="left:1873px;top:538px;width:12px;height:191px;background:#141414;border-radius:3px;box-shadow:inset 0 0 0 1px #0c0c0c"></div>
<svg style="left:1833px;top:566px" width="16" height="35"><defs><linearGradient id="fcgrey" x1="0" y1="0" x2="1" y2="0"><stop offset="0" stop-color="#6a6a6a"/><stop offset="0.5" stop-color="#b8b8b8"/><stop offset="1" stop-color="#6a6a6a"/></linearGradient></defs><rect x="0.5" y="0.5" width="15" height="34" rx="1.5" fill="url(#fcgrey)" stroke="#222"/><line x1="1" y1="3.0" x2="15" y2="3.0" stroke="#4a4a4a" stroke-width="0.8"/><line x1="1" y1="6.3" x2="15" y2="6.3" stroke="#4a4a4a" stroke-width="0.8"/><line x1="1" y1="9.6" x2="15" y2="9.6" stroke="#4a4a4a" stroke-width="0.8"/><line x1="1" y1="12.9" x2="15" y2="12.9" stroke="#4a4a4a" stroke-width="0.8"/><line x1="1" y1="16.2" x2="15" y2="16.2" stroke="#4a4a4a" stroke-width="0.8"/><line x1="1" y1="19.5" x2="15" y2="19.5" stroke="#4a4a4a" stroke-width="0.8"/><line x1="1" y1="22.8" x2="15" y2="22.8" stroke="#4a4a4a" stroke-width="0.8"/><line x1="1" y1="26.1" x2="15" y2="26.1" stroke="#4a4a4a" stroke-width="0.8"/><line x1="1" y1="29.4" x2="15" y2="29.4" stroke="#4a4a4a" stroke-width="0.8"/><line x1="1" y1="32.7" x2="15" y2="32.7" stroke="#4a4a4a" stroke-width="0.8"/><line x1="0" y1="17.5" x2="16" y2="17.5" stroke="#000" stroke-width="1.5"/></svg>
<div class="t " style="left:1832px;top:753px;font-size:14px;color:#bbb">5</div>
<div class="a" style="left:1860px;top:747px;width:24px;height:24px;background:#2e2e2e;border:1px solid #0c0c0c;border-radius:3px"><div style="position:absolute;left:5px;top:5px;width:12px;height:12px;border-radius:50%;background:#151515"></div></div>
<div class="a" style="left:1824px;top:780px;width:61px;height:12px;background:#121212;border-radius:2px;font-size:10.5px;color:#f4ecd8;text-align:center;line-height:12px;overflow:hidden;white-space:nowrap;letter-spacing:-0.3px">Stereo</div>
<div class="a" style="left:1824px;top:800px;width:24px;height:24px;background:#2e2e2e;border:1px solid #0a0a0a;border-radius:2px;box-shadow:inset 0 0 0 1px rgba(255,255,255,0.06);display:flex;align-items:center;justify-content:center;font-size:13px;color:#c8c8c8;white-space:nowrap;overflow:hidden;">S</div>
<div class="a" style="left:1860px;top:800px;width:24px;height:24px;background:#2e2e2e;border:1px solid #0a0a0a;border-radius:2px;box-shadow:inset 0 0 0 1px rgba(255,255,255,0.06);display:flex;align-items:center;justify-content:center;font-size:13px;color:#c8c8c8;white-space:nowrap;overflow:hidden;">M</div>
<div class="a" style="left:1824px;top:830px;width:17px;height:17px;background:#2e2e2e;border:1px solid #0a0a0a;border-radius:2px;box-shadow:inset 0 0 0 1px rgba(255,255,255,0.06);display:flex;align-items:center;justify-content:center;font-size:8px;color:#999;white-space:nowrap;overflow:hidden;">SF</div>
<div class="a" style="left:1846px;top:830px;width:17px;height:17px;background:#2e2e2e;border:1px solid #0a0a0a;border-radius:2px;box-shadow:inset 0 0 0 1px rgba(255,255,255,0.06);display:flex;align-items:center;justify-content:center;font-size:8px;color:#999;white-space:nowrap;overflow:hidden;">Ø</div>
<div class="a" style="left:1868px;top:830px;width:17px;height:17px;background:#2e2e2e;border:1px solid #0a0a0a;border-radius:2px;box-shadow:inset 0 0 0 1px rgba(255,255,255,0.06);display:flex;align-items:center;justify-content:center;font-size:8px;color:#999;white-space:nowrap;overflow:hidden;">PF</div>
<div class="a" style="left:1824px;top:857px;width:13px;height:13px;background:#333;border:1px solid #111;border-radius:2px"></div>
<div class="t " style="left:1843px;top:859px;font-size:9px;color:#888">G1</div>
<svg style="left:1824px;top:881px" width="12" height="12"><circle cx="6" cy="6" r="5.5" fill="#d8d8d8"/><circle cx="4" cy="5" r="1.2" fill="#666"/><circle cx="8" cy="5" r="1.2" fill="#666"/><circle cx="6" cy="8" r="1.2" fill="#666"/></svg>
<div class="t " style="left:1841px;top:882px;font-size:10px;color:#999">Input</div>
<div class="a" style="left:1824px;top:898px;width:61px;height:12px;background:#121212;border-radius:2px;font-size:10px;color:#c8c8c8;line-height:12px"><span style="position:absolute;left:4px">L</span><span style="position:absolute;right:4px">IB1</span></div>
<div class="a" style="left:1824px;top:914px;width:61px;height:12px;background:#121212;border-radius:2px;font-size:10px;color:#c8c8c8;line-height:12px"><span style="position:absolute;left:4px">R</span><span style="position:absolute;right:4px">IB2</span></div>
<svg style="left:1824px;top:936px" width="12" height="12"><circle cx="6" cy="6" r="5" fill="none" stroke="#cfcfcf" stroke-width="1.2"/><circle cx="4" cy="5" r="1" fill="#cfcfcf"/><circle cx="8" cy="5" r="1" fill="#cfcfcf"/><circle cx="6" cy="8" r="1" fill="#cfcfcf"/></svg>
<div class="a" style="left:1840px;top:935px;width:27px;height:16px;background:#2a2a2a;border:1px solid #0a0a0a;border-radius:2px;box-shadow:inset 0 0 0 1px rgba(255,255,255,0.06);display:flex;align-items:center;justify-content:center;font-size:8px;color:#999;white-space:nowrap;overflow:hidden;">D.Out</div>
<div class="t " style="left:1823px;top:962px;font-size:10px;color:#777">Delay</div>
<div class="a" style="left:1855px;top:962px;width:30px;height:11px;background:#121212;border-radius:2px;font-size:9px;color:#ddd;text-align:center;line-height:11px">0</div>
<div class="a" style="left:1824px;top:979px;width:61px;height:13px;background:#121212;border-radius:2px;font-size:10.5px;color:#f4ecd8;text-align:center;line-height:13px">Input</div>
<svg style="left:1821px;top:999px" width="50" height="12"><g stroke="#8a8a8a" stroke-width="1" fill="none"><rect x="0.5" y="1.5" width="8" height="8"/><path d="M2.5 5.5 H6.5"/><path d="M16 5.5 H18 M18 3 V8 H21 V3 Z" fill="#8a8a8a"/><path d="M31 2 H39 M31 4.5 H39 M31 7 H39 M31 9.5 H39"/></g></svg>
<div class="a" style="left:1898px;top:509px;width:60px;height:13px;background:#121212;border-radius:2px;font-size:10px;color:#a8c060;text-align:center;line-height:13px">-144.5</div>
<svg style="left:1901px;top:0px" width="14" height="740"><line x1="7" y1="552.0" x2="11" y2="552.0" stroke="#111" stroke-width="1"/><line x1="7" y1="558.0" x2="11" y2="558.0" stroke="#111" stroke-width="1"/><line x1="7" y1="570.0" x2="11" y2="570.0" stroke="#111" stroke-width="1"/><line x1="7" y1="576.0" x2="11" y2="576.0" stroke="#111" stroke-width="1"/><line x1="7" y1="588.0" x2="11" y2="588.0" stroke="#111" stroke-width="1"/><line x1="7" y1="594.0" x2="11" y2="594.0" stroke="#111" stroke-width="1"/><line x1="7" y1="606.0" x2="11" y2="606.0" stroke="#111" stroke-width="1"/><line x1="7" y1="612.0" x2="11" y2="612.0" stroke="#111" stroke-width="1"/><line x1="7" y1="624.0" x2="11" y2="624.0" stroke="#111" stroke-width="1"/><line x1="7" y1="630.0" x2="11" y2="630.0" stroke="#111" stroke-width="1"/><line x1="7" y1="642.0" x2="11" y2="642.0" stroke="#111" stroke-width="1"/><line x1="7" y1="654.0" x2="11" y2="654.0" stroke="#111" stroke-width="1"/><line x1="7" y1="666.0" x2="11" y2="666.0" stroke="#111" stroke-width="1"/><line x1="7" y1="678.0" x2="11" y2="678.0" stroke="#111" stroke-width="1"/><line x1="7" y1="690.0" x2="11" y2="690.0" stroke="#111" stroke-width="1"/><line x1="7" y1="702.0" x2="11" y2="702.0" stroke="#111" stroke-width="1"/><line x1="7" y1="714.0" x2="11" y2="714.0" stroke="#111" stroke-width="1"/><line x1="7" y1="723.0" x2="11" y2="723.0" stroke="#111" stroke-width="1"/><line x1="0" y1="546.5" x2="11" y2="546.5" stroke="#111" stroke-width="1"/><line x1="0" y1="564.5" x2="11" y2="564.5" stroke="#111" stroke-width="1"/><line x1="0" y1="582.5" x2="11" y2="582.5" stroke="#111" stroke-width="1"/><line x1="0" y1="600.5" x2="11" y2="600.5" stroke="#111" stroke-width="1"/><line x1="0" y1="618.5" x2="11" y2="618.5" stroke="#111" stroke-width="1"/><line x1="0" y1="636.5" x2="11" y2="636.5" stroke="#111" stroke-width="1"/><line x1="0" y1="648.5" x2="11" y2="648.5" stroke="#111" stroke-width="1"/><line x1="0" y1="660.5" x2="11" y2="660.5" stroke="#111" stroke-width="1"/><line x1="0" y1="672.5" x2="11" y2="672.5" stroke="#111" stroke-width="1"/><line x1="0" y1="684.5" x2="11" y2="684.5" stroke="#111" stroke-width="1"/><line x1="0" y1="696.5" x2="11" y2="696.5" stroke="#111" stroke-width="1"/><line x1="0" y1="708.5" x2="11" y2="708.5" stroke="#111" stroke-width="1"/><line x1="0" y1="720.5" x2="11" y2="720.5" stroke="#111" stroke-width="1"/><line x1="0" y1="726.5" x2="11" y2="726.5" stroke="#111" stroke-width="1"/></svg>
<div class="a " style="left:1914px;top:546px;width:3px;height:183px;background:#050505;border-radius:1px"></div>
<div class="a" style="left:1929px;top:0;width:14px;height:740px"><div class="t" style="left:0;top:542px;width:14px;text-align:right;font-size:8px;color:#222">12</div><div class="t" style="left:0;top:560px;width:14px;text-align:right;font-size:8px;color:#222">6</div><div class="t" style="left:0;top:578px;width:14px;text-align:right;font-size:8px;color:#222">0</div><div class="t" style="left:0;top:596px;width:14px;text-align:right;font-size:8px;color:#222">6</div><div class="t" style="left:0;top:614px;width:14px;text-align:right;font-size:8px;color:#222">12</div><div class="t" style="left:0;top:632px;width:14px;text-align:right;font-size:8px;color:#222">18</div><div class="t" style="left:0;top:644px;width:14px;text-align:right;font-size:8px;color:#222">24</div><div class="t" style="left:0;top:656px;width:14px;text-align:right;font-size:8px;color:#222">30</div><div class="t" style="left:0;top:668px;width:14px;text-align:right;font-size:8px;color:#222">36</div><div class="t" style="left:0;top:680px;width:14px;text-align:right;font-size:8px;color:#222">42</div><div class="t" style="left:0;top:692px;width:14px;text-align:right;font-size:8px;color:#222">48</div><div class="t" style="left:0;top:704px;width:14px;text-align:right;font-size:8px;color:#222">54</div><div class="t" style="left:0;top:716px;width:14px;text-align:right;font-size:8px;color:#222">60</div><div class="t" style="left:6px;top:723px;font-size:7px;color:#222">oo</div></div>
<div class="a " style="left:1947px;top:538px;width:12px;height:191px;background:#141414;border-radius:3px;box-shadow:inset 0 0 0 1px #0c0c0c"></div>
<svg style="left:1907px;top:566px" width="16" height="35"><defs><linearGradient id="fcgrey" x1="0" y1="0" x2="1" y2="0"><stop offset="0" stop-color="#6a6a6a"/><stop offset="0.5" stop-color="#b8b8b8"/><stop offset="1" stop-color="#6a6a6a"/></linearGradient></defs><rect x="0.5" y="0.5" width="15" height="34" rx="1.5" fill="url(#fcgrey)" stroke="#222"/><line x1="1" y1="3.0" x2="15" y2="3.0" stroke="#4a4a4a" stroke-width="0.8"/><line x1="1" y1="6.3" x2="15" y2="6.3" stroke="#4a4a4a" stroke-width="0.8"/><line x1="1" y1="9.6" x2="15" y2="9.6" stroke="#4a4a4a" stroke-width="0.8"/><line x1="1" y1="12.9" x2="15" y2="12.9" stroke="#4a4a4a" stroke-width="0.8"/><line x1="1" y1="16.2" x2="15" y2="16.2" stroke="#4a4a4a" stroke-width="0.8"/><line x1="1" y1="19.5" x2="15" y2="19.5" stroke="#4a4a4a" stroke-width="0.8"/><line x1="1" y1="22.8" x2="15" y2="22.8" stroke="#4a4a4a" stroke-width="0.8"/><line x1="1" y1="26.1" x2="15" y2="26.1" stroke="#4a4a4a" stroke-width="0.8"/><line x1="1" y1="29.4" x2="15" y2="29.4" stroke="#4a4a4a" stroke-width="0.8"/><line x1="1" y1="32.7" x2="15" y2="32.7" stroke="#4a4a4a" stroke-width="0.8"/><line x1="0" y1="17.5" x2="16" y2="17.5" stroke="#000" stroke-width="1.5"/></svg>
<div class="t " style="left:1906px;top:753px;font-size:14px;color:#1e1e1e">6</div>
<div class="a" style="left:1934px;top:747px;width:24px;height:24px;background:#2e2e2e;border:1px solid #0c0c0c;border-radius:3px"><div style="position:absolute;left:5px;top:5px;width:12px;height:12px;border-radius:50%;background:#d02828"></div></div>
<div class="a" style="left:1898px;top:780px;width:61px;height:12px;background:#121212;border-radius:2px;font-size:10.5px;color:#f4ecd8;text-align:center;line-height:12px;overflow:hidden;white-space:nowrap;letter-spacing:-0.3px">Stereo 2_copy</div>
<div class="a" style="left:1898px;top:800px;width:24px;height:24px;background:#2e2e2e;border:1px solid #0a0a0a;border-radius:2px;box-shadow:inset 0 0 0 1px rgba(255,255,255,0.06);display:flex;align-items:center;justify-content:center;font-size:13px;color:#c8c8c8;white-space:nowrap;overflow:hidden;">S</div>
<div class="a" style="left:1934px;top:800px;width:24px;height:24px;background:#2e2e2e;border:1px solid #0a0a0a;border-radius:2px;box-shadow:inset 0 0 0 1px rgba(255,255,255,0.06);display:flex;align-items:center;justify-content:center;font-size:13px;color:#c8c8c8;white-space:nowrap;overflow:hidden;">M</div>
<div class="a" style="left:1898px;top:830px;width:17px;height:17px;background:#2e2e2e;border:1px solid #0a0a0a;border-radius:2px;box-shadow:inset 0 0 0 1px rgba(255,255,255,0.06);display:flex;align-items:center;justify-content:center;font-size:8px;color:#999;white-space:nowrap;overflow:hidden;">SF</div>
<div class="a" style="left:1920px;top:830px;width:17px;height:17px;background:#2e2e2e;border:1px solid #0a0a0a;border-radius:2px;box-shadow:inset 0 0 0 1px rgba(255,255,255,0.06);display:flex;align-items:center;justify-content:center;font-size:8px;color:#999;white-space:nowrap;overflow:hidden;">Ø</div>
<div class="a" style="left:1942px;top:830px;width:17px;height:17px;background:#2e2e2e;border:1px solid #0a0a0a;border-radius:2px;box-shadow:inset 0 0 0 1px rgba(255,255,255,0.06);display:flex;align-items:center;justify-content:center;font-size:8px;color:#999;white-space:nowrap;overflow:hidden;">PF</div>
<div class="a" style="left:1898px;top:857px;width:13px;height:13px;background:#333;border:1px solid #111;border-radius:2px"></div>
<div class="t " style="left:1917px;top:859px;font-size:9px;color:#888">G1</div>
<svg style="left:1898px;top:881px" width="12" height="12"><circle cx="6" cy="6" r="5.5" fill="#1a1a1a"/><circle cx="4" cy="5" r="1.2" fill="#666"/><circle cx="8" cy="5" r="1.2" fill="#666"/><circle cx="6" cy="8" r="1.2" fill="#666"/></svg>
<div class="t " style="left:1915px;top:882px;font-size:10px;color:#999">Input</div>
<div class="a" style="left:1898px;top:898px;width:61px;height:12px;background:#121212;border-radius:2px;font-size:10px;color:#e01818;line-height:12px"><span style="position:absolute;left:4px">L</span><span style="position:absolute;right:4px">23</span></div>
<div class="a" style="left:1898px;top:914px;width:61px;height:12px;background:#121212;border-radius:2px;font-size:10px;color:#e01818;line-height:12px"><span style="position:absolute;left:4px">R</span><span style="position:absolute;right:4px">24</span></div>
<svg style="left:1898px;top:936px" width="12" height="12"><circle cx="6" cy="6" r="5" fill="none" stroke="#1a1a1a" stroke-width="1.2"/><circle cx="4" cy="5" r="1" fill="#1a1a1a"/><circle cx="8" cy="5" r="1" fill="#1a1a1a"/><circle cx="6" cy="8" r="1" fill="#1a1a1a"/></svg>
<div class="a" style="left:1914px;top:935px;width:27px;height:16px;background:#2a2a2a;border:1px solid #0a0a0a;border-radius:2px;box-shadow:inset 0 0 0 1px rgba(255,255,255,0.06);display:flex;align-items:center;justify-content:center;font-size:8px;color:#999;white-space:nowrap;overflow:hidden;">D.Out</div>
<div class="t " style="left:1897px;top:962px;font-size:10px;color:#777">Delay</div>
<div class="a" style="left:1929px;top:962px;width:30px;height:11px;background:#121212;border-radius:2px;font-size:9px;color:#ddd;text-align:center;line-height:11px">0</div>
<div class="a" style="left:1898px;top:979px;width:61px;height:13px;background:#121212;border-radius:2px;font-size:10.5px;color:#f4ecd8;text-align:center;line-height:13px">Input</div>
<svg style="left:1895px;top:999px" width="50" height="12"><g stroke="#8a8a8a" stroke-width="1" fill="none"><rect x="0.5" y="1.5" width="8" height="8"/><path d="M2.5 5.5 H6.5"/><path d="M16 5.5 H18 M18 3 V8 H21 V3 Z" fill="#8a8a8a"/><path d="M31 2 H39 M31 4.5 H39 M31 7 H39 M31 9.5 H39"/></g></svg>
<div class="a" style="left:1972px;top:509px;width:60px;height:13px;background:#121212;border-radius:2px;font-size:10px;color:#f0a860;text-align:center;line-height:13px">-15.0</div>
<svg style="left:1975px;top:0px" width="14" height="740"><line x1="7" y1="552.0" x2="11" y2="552.0" stroke="#777" stroke-width="1"/><line x1="7" y1="558.0" x2="11" y2="558.0" stroke="#777" stroke-width="1"/><line x1="7" y1="570.0" x2="11" y2="570.0" stroke="#777" stroke-width="1"/><line x1="7" y1="576.0" x2="11" y2="576.0" stroke="#777" stroke-width="1"/><line x1="7" y1="588.0" x2="11" y2="588.0" stroke="#777" stroke-width="1"/><line x1="7" y1="594.0" x2="11" y2="594.0" stroke="#777" stroke-width="1"/><line x1="7" y1="606.0" x2="11" y2="606.0" stroke="#777" stroke-width="1"/><line x1="7" y1="612.0" x2="11" y2="612.0" stroke="#777" stroke-width="1"/><line x1="7" y1="624.0" x2="11" y2="624.0" stroke="#777" stroke-width="1"/><line x1="7" y1="630.0" x2="11" y2="630.0" stroke="#777" stroke-width="1"/><line x1="7" y1="642.0" x2="11" y2="642.0" stroke="#777" stroke-width="1"/><line x1="7" y1="654.0" x2="11" y2="654.0" stroke="#777" stroke-width="1"/><line x1="7" y1="666.0" x2="11" y2="666.0" stroke="#777" stroke-width="1"/><line x1="7" y1="678.0" x2="11" y2="678.0" stroke="#777" stroke-width="1"/><line x1="7" y1="690.0" x2="11" y2="690.0" stroke="#777" stroke-width="1"/><line x1="7" y1="702.0" x2="11" y2="702.0" stroke="#777" stroke-width="1"/><line x1="7" y1="714.0" x2="11" y2="714.0" stroke="#777" stroke-width="1"/><line x1="7" y1="723.0" x2="11" y2="723.0" stroke="#777" stroke-width="1"/><line x1="0" y1="546.5" x2="11" y2="546.5" stroke="#777" stroke-width="1"/><line x1="0" y1="564.5" x2="11" y2="564.5" stroke="#777" stroke-width="1"/><line x1="0" y1="582.5" x2="11" y2="582.5" stroke="#777" stroke-width="1"/><line x1="0" y1="600.5" x2="11" y2="600.5" stroke="#777" stroke-width="1"/><line x1="0" y1="618.5" x2="11" y2="618.5" stroke="#777" stroke-width="1"/><line x1="0" y1="636.5" x2="11" y2="636.5" stroke="#777" stroke-width="1"/><line x1="0" y1="648.5" x2="11" y2="648.5" stroke="#777" stroke-width="1"/><line x1="0" y1="660.5" x2="11" y2="660.5" stroke="#777" stroke-width="1"/><line x1="0" y1="672.5" x2="11" y2="672.5" stroke="#777" stroke-width="1"/><line x1="0" y1="684.5" x2="11" y2="684.5" stroke="#777" stroke-width="1"/><line x1="0" y1="696.5" x2="11" y2="696.5" stroke="#777" stroke-width="1"/><line x1="0" y1="708.5" x2="11" y2="708.5" stroke="#777" stroke-width="1"/><line x1="0" y1="720.5" x2="11" y2="720.5" stroke="#777" stroke-width="1"/><line x1="0" y1="726.5" x2="11" y2="726.5" stroke="#777" stroke-width="1"/></svg>
<div class="a " style="left:1988px;top:546px;width:3px;height:183px;background:#050505;border-radius:1px"></div>
<div class="a" style="left:2003px;top:0;width:14px;height:740px"><div class="t" style="left:0;top:542px;width:14px;text-align:right;font-size:8px;color:#777">12</div><div class="t" style="left:0;top:560px;width:14px;text-align:right;font-size:8px;color:#777">6</div><div class="t" style="left:0;top:578px;width:14px;text-align:right;font-size:8px;color:#777">0</div><div class="t" style="left:0;top:596px;width:14px;text-align:right;font-size:8px;color:#777">6</div><div class="t" style="left:0;top:614px;width:14px;text-align:right;font-size:8px;color:#777">12</div><div class="t" style="left:0;top:632px;width:14px;text-align:right;font-size:8px;color:#777">18</div><div class="t" style="left:0;top:644px;width:14px;text-align:right;font-size:8px;color:#777">24</div><div class="t" style="left:0;top:656px;width:14px;text-align:right;font-size:8px;color:#777">30</div><div class="t" style="left:0;top:668px;width:14px;text-align:right;font-size:8px;color:#777">36</div><div class="t" style="left:0;top:680px;width:14px;text-align:right;font-size:8px;color:#777">42</div><div class="t" style="left:0;top:692px;width:14px;text-align:right;font-size:8px;color:#777">48</div><div class="t" style="left:0;top:704px;width:14px;text-align:right;font-size:8px;color:#777">54</div><div class="t" style="left:0;top:716px;width:14px;text-align:right;font-size:8px;color:#777">60</div><div class="t" style="left:6px;top:723px;font-size:7px;color:#777">oo</div></div>
<div class="a " style="left:2021px;top:538px;width:12px;height:191px;background:#141414;border-radius:3px;box-shadow:inset 0 0 0 1px #0c0c0c"></div>
<svg style="left:1981px;top:612px" width="16" height="35"><defs><linearGradient id="fcyellow" x1="0" y1="0" x2="1" y2="0"><stop offset="0" stop-color="#d09000"/><stop offset="0.5" stop-color="#ffd030"/><stop offset="1" stop-color="#d09000"/></linearGradient></defs><rect x="0.5" y="0.5" width="15" height="34" rx="1.5" fill="url(#fcyellow)" stroke="#222"/><line x1="1" y1="3.0" x2="15" y2="3.0" stroke="#805000" stroke-width="0.8"/><line x1="1" y1="6.3" x2="15" y2="6.3" stroke="#805000" stroke-width="0.8"/><line x1="1" y1="9.6" x2="15" y2="9.6" stroke="#805000" stroke-width="0.8"/><line x1="1" y1="12.9" x2="15" y2="12.9" stroke="#805000" stroke-width="0.8"/><line x1="1" y1="16.2" x2="15" y2="16.2" stroke="#805000" stroke-width="0.8"/><line x1="1" y1="19.5" x2="15" y2="19.5" stroke="#805000" stroke-width="0.8"/><line x1="1" y1="22.8" x2="15" y2="22.8" stroke="#805000" stroke-width="0.8"/><line x1="1" y1="26.1" x2="15" y2="26.1" stroke="#805000" stroke-width="0.8"/><line x1="1" y1="29.4" x2="15" y2="29.4" stroke="#805000" stroke-width="0.8"/><line x1="1" y1="32.7" x2="15" y2="32.7" stroke="#805000" stroke-width="0.8"/><line x1="0" y1="17.5" x2="16" y2="17.5" stroke="#000" stroke-width="1.5"/></svg>
<div class="t " style="left:1971px;top:754px;font-size:11px;color:#bbb">G1</div>
<div class="a" style="left:1972px;top:780px;width:61px;height:12px;background:#121212;border-radius:2px;font-size:10.5px;color:#f4ecd8;text-align:center;line-height:12px;overflow:hidden;white-space:nowrap;letter-spacing:-0.3px">G1</div>
<div class="a" style="left:1972px;top:800px;width:24px;height:24px;background:#2e2e2e;border:1px solid #0a0a0a;border-radius:2px;box-shadow:inset 0 0 0 1px rgba(255,255,255,0.06);display:flex;align-items:center;justify-content:center;font-size:13px;color:#c8c8c8;white-space:nowrap;overflow:hidden;">S</div>
<div class="a" style="left:2008px;top:800px;width:24px;height:24px;background:#2e2e2e;border:1px solid #0a0a0a;border-radius:2px;box-shadow:inset 0 0 0 1px rgba(255,255,255,0.06);display:flex;align-items:center;justify-content:center;font-size:13px;color:#c8c8c8;white-space:nowrap;overflow:hidden;">M</div>
<div class="a" style="left:1993px;top:830px;width:18px;height:17px;background:#7a6030;border:1px solid #0a0a0a;border-radius:2px;box-shadow:inset 0 0 0 1px rgba(255,255,255,0.06);display:flex;align-items:center;justify-content:center;font-size:8px;color:#3a2a10;white-space:nowrap;overflow:hidden;">On</div>
<svg style="left:1969px;top:999px" width="50" height="12"><g stroke="#8a8a8a" stroke-width="1" fill="none"><rect x="0.5" y="1.5" width="8" height="8"/><path d="M2.5 5.5 H6.5"/><path d="M16 5.5 H18 M18 3 V8 H21 V3 Z" fill="#8a8a8a"/><path d="M31 2 H39 M31 4.5 H39 M31 7 H39 M31 9.5 H39"/></g></svg>
<div class="a" style="left:2046px;top:509px;width:60px;height:13px;background:#121212;border-radius:2px;font-size:10px;color:#a8c060;text-align:center;line-height:13px">-144.5</div>
<svg style="left:2049px;top:0px" width="14" height="740"><line x1="7" y1="552.0" x2="11" y2="552.0" stroke="#777" stroke-width="1"/><line x1="7" y1="558.0" x2="11" y2="558.0" stroke="#777" stroke-width="1"/><line x1="7" y1="570.0" x2="11" y2="570.0" stroke="#777" stroke-width="1"/><line x1="7" y1="576.0" x2="11" y2="576.0" stroke="#777" stroke-width="1"/><line x1="7" y1="588.0" x2="11" y2="588.0" stroke="#777" stroke-width="1"/><line x1="7" y1="594.0" x2="11" y2="594.0" stroke="#777" stroke-width="1"/><line x1="7" y1="606.0" x2="11" y2="606.0" stroke="#777" stroke-width="1"/><line x1="7" y1="612.0" x2="11" y2="612.0" stroke="#777" stroke-width="1"/><line x1="7" y1="624.0" x2="11" y2="624.0" stroke="#777" stroke-width="1"/><line x1="7" y1="630.0" x2="11" y2="630.0" stroke="#777" stroke-width="1"/><line x1="7" y1="642.0" x2="11" y2="642.0" stroke="#777" stroke-width="1"/><line x1="7" y1="654.0" x2="11" y2="654.0" stroke="#777" stroke-width="1"/><line x1="7" y1="666.0" x2="11" y2="666.0" stroke="#777" stroke-width="1"/><line x1="7" y1="678.0" x2="11" y2="678.0" stroke="#777" stroke-width="1"/><line x1="7" y1="690.0" x2="11" y2="690.0" stroke="#777" stroke-width="1"/><line x1="7" y1="702.0" x2="11" y2="702.0" stroke="#777" stroke-width="1"/><line x1="7" y1="714.0" x2="11" y2="714.0" stroke="#777" stroke-width="1"/><line x1="7" y1="723.0" x2="11" y2="723.0" stroke="#777" stroke-width="1"/><line x1="0" y1="546.5" x2="11" y2="546.5" stroke="#777" stroke-width="1"/><line x1="0" y1="564.5" x2="11" y2="564.5" stroke="#777" stroke-width="1"/><line x1="0" y1="582.5" x2="11" y2="582.5" stroke="#777" stroke-width="1"/><line x1="0" y1="600.5" x2="11" y2="600.5" stroke="#777" stroke-width="1"/><line x1="0" y1="618.5" x2="11" y2="618.5" stroke="#777" stroke-width="1"/><line x1="0" y1="636.5" x2="11" y2="636.5" stroke="#777" stroke-width="1"/><line x1="0" y1="648.5" x2="11" y2="648.5" stroke="#777" stroke-width="1"/><line x1="0" y1="660.5" x2="11" y2="660.5" stroke="#777" stroke-width="1"/><line x1="0" y1="672.5" x2="11" y2="672.5" stroke="#777" stroke-width="1"/><line x1="0" y1="684.5" x2="11" y2="684.5" stroke="#777" stroke-width="1"/><line x1="0" y1="696.5" x2="11" y2="696.5" stroke="#777" stroke-width="1"/><line x1="0" y1="708.5" x2="11" y2="708.5" stroke="#777" stroke-width="1"/><line x1="0" y1="720.5" x2="11" y2="720.5" stroke="#777" stroke-width="1"/><line x1="0" y1="726.5" x2="11" y2="726.5" stroke="#777" stroke-width="1"/></svg>
<div class="a " style="left:2062px;top:546px;width:3px;height:183px;background:#050505;border-radius:1px"></div>
<div class="a" style="left:2077px;top:0;width:14px;height:740px"><div class="t" style="left:0;top:542px;width:14px;text-align:right;font-size:8px;color:#777">12</div><div class="t" style="left:0;top:560px;width:14px;text-align:right;font-size:8px;color:#777">6</div><div class="t" style="left:0;top:578px;width:14px;text-align:right;font-size:8px;color:#777">0</div><div class="t" style="left:0;top:596px;width:14px;text-align:right;font-size:8px;color:#777">6</div><div class="t" style="left:0;top:614px;width:14px;text-align:right;font-size:8px;color:#777">12</div><div class="t" style="left:0;top:632px;width:14px;text-align:right;font-size:8px;color:#777">18</div><div class="t" style="left:0;top:644px;width:14px;text-align:right;font-size:8px;color:#777">24</div><div class="t" style="left:0;top:656px;width:14px;text-align:right;font-size:8px;color:#777">30</div><div class="t" style="left:0;top:668px;width:14px;text-align:right;font-size:8px;color:#777">36</div><div class="t" style="left:0;top:680px;width:14px;text-align:right;font-size:8px;color:#777">42</div><div class="t" style="left:0;top:692px;width:14px;text-align:right;font-size:8px;color:#777">48</div><div class="t" style="left:0;top:704px;width:14px;text-align:right;font-size:8px;color:#777">54</div><div class="t" style="left:0;top:716px;width:14px;text-align:right;font-size:8px;color:#777">60</div><div class="t" style="left:6px;top:723px;font-size:7px;color:#777">oo</div></div>
<div class="a " style="left:2095px;top:538px;width:12px;height:191px;background:#141414;border-radius:3px;box-shadow:inset 0 0 0 1px #0c0c0c"></div>
<svg style="left:2055px;top:612px" width="16" height="35"><defs><linearGradient id="fcdimyellow" x1="0" y1="0" x2="1" y2="0"><stop offset="0" stop-color="#988838"/><stop offset="0.5" stop-color="#c8b860"/><stop offset="1" stop-color="#988838"/></linearGradient></defs><rect x="0.5" y="0.5" width="15" height="34" rx="1.5" fill="url(#fcdimyellow)" stroke="#222"/><line x1="1" y1="3.0" x2="15" y2="3.0" stroke="#605020" stroke-width="0.8"/><line x1="1" y1="6.3" x2="15" y2="6.3" stroke="#605020" stroke-width="0.8"/><line x1="1" y1="9.6" x2="15" y2="9.6" stroke="#605020" stroke-width="0.8"/><line x1="1" y1="12.9" x2="15" y2="12.9" stroke="#605020" stroke-width="0.8"/><line x1="1" y1="16.2" x2="15" y2="16.2" stroke="#605020" stroke-width="0.8"/><line x1="1" y1="19.5" x2="15" y2="19.5" stroke="#605020" stroke-width="0.8"/><line x1="1" y1="22.8" x2="15" y2="22.8" stroke="#605020" stroke-width="0.8"/><line x1="1" y1="26.1" x2="15" y2="26.1" stroke="#605020" stroke-width="0.8"/><line x1="1" y1="29.4" x2="15" y2="29.4" stroke="#605020" stroke-width="0.8"/><line x1="1" y1="32.7" x2="15" y2="32.7" stroke="#605020" stroke-width="0.8"/><line x1="0" y1="17.5" x2="16" y2="17.5" stroke="#000" stroke-width="1.5"/></svg>
<div class="a" style="left:2045px;top:752px;width:34px;height:17px;background:#a8a8a8;border-radius:2px;font-size:11px;color:#333;text-align:center;line-height:17px">AB1</div>
<svg style="left:2098px;top:734px" width="10" height="10"><rect x="0.5" y="0.5" width="8" height="8" fill="none" stroke="#777"/><path d="M4.5 2 V7 M2 4.5 H7" stroke="#777"/></svg>
<div class="a" style="left:2046px;top:780px;width:61px;height:12px;background:#121212;border-radius:2px;font-size:10.5px;color:#f4ecd8;text-align:center;line-height:12px;overflow:hidden;white-space:nowrap;letter-spacing:-0.3px">Aux Bus</div>
<div class="a" style="left:2046px;top:830px;width:17px;height:17px;background:#2e2e2e;border:1px solid #0a0a0a;border-radius:2px;box-shadow:inset 0 0 0 1px rgba(255,255,255,0.06);display:flex;align-items:center;justify-content:center;font-size:8px;color:#999;white-space:nowrap;overflow:hidden;">SF</div>
<div class="a" style="left:2068px;top:830px;width:17px;height:17px;background:#2e2e2e;border:1px solid #0a0a0a;border-radius:2px;box-shadow:inset 0 0 0 1px rgba(255,255,255,0.06);display:flex;align-items:center;justify-content:center;font-size:8px;color:#999;white-space:nowrap;overflow:hidden;">RE</div>
<div class="a" style="left:2090px;top:830px;width:17px;height:17px;background:#2e2e2e;border:1px solid #0a0a0a;border-radius:2px;box-shadow:inset 0 0 0 1px rgba(255,255,255,0.06);display:flex;align-items:center;justify-content:center;font-size:8px;color:#999;white-space:nowrap;overflow:hidden;">DI</div>
<svg style="left:2045px;top:883px" width="13" height="13"><circle cx="6.5" cy="6.5" r="5.5" fill="none" stroke="#999" stroke-width="1.2"/><circle cx="4.5" cy="5.5" r="1" fill="#999"/><circle cx="8.5" cy="5.5" r="1" fill="#999"/><circle cx="6.5" cy="8.5" r="1" fill="#999"/></svg>
<div class="t " style="left:2062px;top:884px;font-size:10px;color:#999">Output</div>
<div class="a" style="left:2046px;top:900px;width:61px;height:12px;background:#121212;border-radius:2px;font-size:10px;color:#c8c8c8;line-height:12px"><span style="position:absolute;left:4px">L</span><span style="position:absolute;right:4px">IB1</span></div>
<div class="a" style="left:2046px;top:916px;width:61px;height:12px;background:#121212;border-radius:2px;font-size:10px;color:#c8c8c8;line-height:12px"><span style="position:absolute;left:4px">R</span><span style="position:absolute;right:4px">IB2</span></div>
<div class="a" style="left:2046px;top:978px;width:61px;height:13px;background:#121212;border-radius:2px;font-size:9.5px;color:#f0e6c8;text-align:center;line-height:13px">Stereo</div>
<svg style="left:2043px;top:999px" width="50" height="12"><g stroke="#8a8a8a" stroke-width="1" fill="none"><rect x="0.5" y="1.5" width="8" height="8"/><path d="M2.5 5.5 H6.5"/><path d="M16 5.5 H18 M18 3 V8 H21 V3 Z" fill="#8a8a8a"/><path d="M31 2 H39 M31 4.5 H39 M31 7 H39 M31 9.5 H39"/></g></svg>
<div class="a" style="left:2120px;top:509px;width:60px;height:13px;background:#121212;border-radius:2px;font-size:10px;color:#a8c060;text-align:center;line-height:13px">-144.5</div>
<svg style="left:2123px;top:0px" width="14" height="740"><line x1="7" y1="552.0" x2="11" y2="552.0" stroke="#111" stroke-width="1"/><line x1="7" y1="558.0" x2="11" y2="558.0" stroke="#111" stroke-width="1"/><line x1="7" y1="570.0" x2="11" y2="570.0" stroke="#111" stroke-width="1"/><line x1="7" y1="576.0" x2="11" y2="576.0" stroke="#111" stroke-width="1"/><line x1="7" y1="588.0" x2="11" y2="588.0" stroke="#111" stroke-width="1"/><line x1="7" y1="594.0" x2="11" y2="594.0" stroke="#111" stroke-width="1"/><line x1="7" y1="606.0" x2="11" y2="606.0" stroke="#111" stroke-width="1"/><line x1="7" y1="612.0" x2="11" y2="612.0" stroke="#111" stroke-width="1"/><line x1="7" y1="624.0" x2="11" y2="624.0" stroke="#111" stroke-width="1"/><line x1="7" y1="630.0" x2="11" y2="630.0" stroke="#111" stroke-width="1"/><line x1="7" y1="642.0" x2="11" y2="642.0" stroke="#111" stroke-width="1"/><line x1="7" y1="654.0" x2="11" y2="654.0" stroke="#111" stroke-width="1"/><line x1="7" y1="666.0" x2="11" y2="666.0" stroke="#111" stroke-width="1"/><line x1="7" y1="678.0" x2="11" y2="678.0" stroke="#111" stroke-width="1"/><line x1="7" y1="690.0" x2="11" y2="690.0" stroke="#111" stroke-width="1"/><line x1="7" y1="702.0" x2="11" y2="702.0" stroke="#111" stroke-width="1"/><line x1="7" y1="714.0" x2="11" y2="714.0" stroke="#111" stroke-width="1"/><line x1="7" y1="723.0" x2="11" y2="723.0" stroke="#111" stroke-width="1"/><line x1="0" y1="546.5" x2="11" y2="546.5" stroke="#111" stroke-width="1"/><line x1="0" y1="564.5" x2="11" y2="564.5" stroke="#111" stroke-width="1"/><line x1="0" y1="582.5" x2="11" y2="582.5" stroke="#111" stroke-width="1"/><line x1="0" y1="600.5" x2="11" y2="600.5" stroke="#111" stroke-width="1"/><line x1="0" y1="618.5" x2="11" y2="618.5" stroke="#111" stroke-width="1"/><line x1="0" y1="636.5" x2="11" y2="636.5" stroke="#111" stroke-width="1"/><line x1="0" y1="648.5" x2="11" y2="648.5" stroke="#111" stroke-width="1"/><line x1="0" y1="660.5" x2="11" y2="660.5" stroke="#111" stroke-width="1"/><line x1="0" y1="672.5" x2="11" y2="672.5" stroke="#111" stroke-width="1"/><line x1="0" y1="684.5" x2="11" y2="684.5" stroke="#111" stroke-width="1"/><line x1="0" y1="696.5" x2="11" y2="696.5" stroke="#111" stroke-width="1"/><line x1="0" y1="708.5" x2="11" y2="708.5" stroke="#111" stroke-width="1"/><line x1="0" y1="720.5" x2="11" y2="720.5" stroke="#111" stroke-width="1"/><line x1="0" y1="726.5" x2="11" y2="726.5" stroke="#111" stroke-width="1"/></svg>
<div class="a " style="left:2136px;top:546px;width:3px;height:183px;background:#050505;border-radius:1px"></div>
<div class="a" style="left:2151px;top:0;width:14px;height:740px"><div class="t" style="left:0;top:542px;width:14px;text-align:right;font-size:8px;color:#3a1020">12</div><div class="t" style="left:0;top:560px;width:14px;text-align:right;font-size:8px;color:#3a1020">6</div><div class="t" style="left:0;top:578px;width:14px;text-align:right;font-size:8px;color:#3a1020">0</div><div class="t" style="left:0;top:596px;width:14px;text-align:right;font-size:8px;color:#3a1020">6</div><div class="t" style="left:0;top:614px;width:14px;text-align:right;font-size:8px;color:#3a1020">12</div><div class="t" style="left:0;top:632px;width:14px;text-align:right;font-size:8px;color:#3a1020">18</div><div class="t" style="left:0;top:644px;width:14px;text-align:right;font-size:8px;color:#3a1020">24</div><div class="t" style="left:0;top:656px;width:14px;text-align:right;font-size:8px;color:#3a1020">30</div><div class="t" style="left:0;top:668px;width:14px;text-align:right;font-size:8px;color:#3a1020">36</div><div class="t" style="left:0;top:680px;width:14px;text-align:right;font-size:8px;color:#3a1020">42</div><div class="t" style="left:0;top:692px;width:14px;text-align:right;font-size:8px;color:#3a1020">48</div><div class="t" style="left:0;top:704px;width:14px;text-align:right;font-size:8px;color:#3a1020">54</div><div class="t" style="left:0;top:716px;width:14px;text-align:right;font-size:8px;color:#3a1020">60</div><div class="t" style="left:6px;top:723px;font-size:7px;color:#3a1020">oo</div></div>
<div class="a " style="left:2169px;top:538px;width:12px;height:191px;background:#141414;border-radius:3px;box-shadow:inset 0 0 0 1px #0c0c0c"></div>
<svg style="left:2129px;top:552px" width="16" height="35"><defs><linearGradient id="fcred" x1="0" y1="0" x2="1" y2="0"><stop offset="0" stop-color="#a03030"/><stop offset="0.5" stop-color="#e07070"/><stop offset="1" stop-color="#a03030"/></linearGradient></defs><rect x="0.5" y="0.5" width="15" height="34" rx="1.5" fill="url(#fcred)" stroke="#222"/><line x1="1" y1="3.0" x2="15" y2="3.0" stroke="#602020" stroke-width="0.8"/><line x1="1" y1="6.3" x2="15" y2="6.3" stroke="#602020" stroke-width="0.8"/><line x1="1" y1="9.6" x2="15" y2="9.6" stroke="#602020" stroke-width="0.8"/><line x1="1" y1="12.9" x2="15" y2="12.9" stroke="#602020" stroke-width="0.8"/><line x1="1" y1="16.2" x2="15" y2="16.2" stroke="#602020" stroke-width="0.8"/><line x1="1" y1="19.5" x2="15" y2="19.5" stroke="#602020" stroke-width="0.8"/><line x1="1" y1="22.8" x2="15" y2="22.8" stroke="#602020" stroke-width="0.8"/><line x1="1" y1="26.1" x2="15" y2="26.1" stroke="#602020" stroke-width="0.8"/><line x1="1" y1="29.4" x2="15" y2="29.4" stroke="#602020" stroke-width="0.8"/><line x1="1" y1="32.7" x2="15" y2="32.7" stroke="#602020" stroke-width="0.8"/><line x1="0" y1="17.5" x2="16" y2="17.5" stroke="#000" stroke-width="1.5"/></svg>
<div class="t " style="left:2126px;top:755px;font-size:11px;color:#2a0a18">MB1</div>
<div class="a" style="left:2165px;top:752px;width:18px;height:17px;background:#2a2a2a;border:1px solid #0a0a0a;border-radius:2px;box-shadow:inset 0 0 0 1px rgba(255,255,255,0.06);display:flex;align-items:center;justify-content:center;font-size:8px;color:#bbb;white-space:nowrap;overflow:hidden;">OS</div>
<svg style="left:2172px;top:734px" width="10" height="10"><rect x="0.5" y="0.5" width="8" height="8" fill="none" stroke="#777"/><path d="M4.5 2 V7 M2 4.5 H7" stroke="#777"/></svg>
<div class="a" style="left:2120px;top:780px;width:61px;height:12px;background:#121212;border-radius:2px;font-size:10.5px;color:#f4ecd8;text-align:center;line-height:12px;overflow:hidden;white-space:nowrap;letter-spacing:-0.3px">ALL</div>
<div class="a" style="left:2120px;top:830px;width:17px;height:17px;background:#2e2e2e;border:1px solid #0a0a0a;border-radius:2px;box-shadow:inset 0 0 0 1px rgba(255,255,255,0.06);display:flex;align-items:center;justify-content:center;font-size:8px;color:#999;white-space:nowrap;overflow:hidden;">SF</div>
<div class="a" style="left:2142px;top:830px;width:17px;height:17px;background:#2e2e2e;border:1px solid #0a0a0a;border-radius:2px;box-shadow:inset 0 0 0 1px rgba(255,255,255,0.06);display:flex;align-items:center;justify-content:center;font-size:8px;color:#999;white-space:nowrap;overflow:hidden;">RE</div>
<div class="a" style="left:2164px;top:830px;width:17px;height:17px;background:#2e2e2e;border:1px solid #0a0a0a;border-radius:2px;box-shadow:inset 0 0 0 1px rgba(255,255,255,0.06);display:flex;align-items:center;justify-content:center;font-size:8px;color:#999;white-space:nowrap;overflow:hidden;">DI</div>
<svg style="left:2119px;top:883px" width="13" height="13"><circle cx="6.5" cy="6.5" r="5.5" fill="none" stroke="#999" stroke-width="1.2"/><circle cx="4.5" cy="5.5" r="1" fill="#999"/><circle cx="8.5" cy="5.5" r="1" fill="#999"/><circle cx="6.5" cy="8.5" r="1" fill="#999"/></svg>
<div class="t " style="left:2136px;top:884px;font-size:10px;color:#2a0a18">Output</div>
<div class="a" style="left:2120px;top:900px;width:61px;height:12px;background:#121212;border-radius:2px;font-size:10px;color:#c8c8c8;line-height:12px"><span style="position:absolute;left:4px">L</span><span style="position:absolute;right:4px"></span></div>
<div class="a" style="left:2120px;top:916px;width:61px;height:12px;background:#121212;border-radius:2px;font-size:10px;color:#c8c8c8;line-height:12px"><span style="position:absolute;left:4px">R</span><span style="position:absolute;right:4px"></span></div>
<div class="a" style="left:2120px;top:978px;width:61px;height:13px;background:#121212;border-radius:2px;font-size:9.5px;color:#f0e6c8;text-align:center;line-height:13px">Stereo</div>
<svg style="left:2117px;top:999px" width="50" height="12"><g stroke="#8a8a8a" stroke-width="1" fill="none"><rect x="0.5" y="1.5" width="8" height="8"/><path d="M2.5 5.5 H6.5"/><path d="M16 5.5 H18 M18 3 V8 H21 V3 Z" fill="#8a8a8a"/><path d="M31 2 H39 M31 4.5 H39 M31 7 H39 M31 9.5 H39"/></g></svg>
<div class="a" style="left:2194px;top:509px;width:60px;height:13px;background:#121212;border-radius:2px;font-size:10px;color:#a8c060;text-align:center;line-height:13px">-144.5</div>
<svg style="left:2197px;top:0px" width="14" height="740"><line x1="7" y1="552.0" x2="11" y2="552.0" stroke="#111" stroke-width="1"/><line x1="7" y1="558.0" x2="11" y2="558.0" stroke="#111" stroke-width="1"/><line x1="7" y1="570.0" x2="11" y2="570.0" stroke="#111" stroke-width="1"/><line x1="7" y1="576.0" x2="11" y2="576.0" stroke="#111" stroke-width="1"/><line x1="7" y1="588.0" x2="11" y2="588.0" stroke="#111" stroke-width="1"/><line x1="7" y1="594.0" x2="11" y2="594.0" stroke="#111" stroke-width="1"/><line x1="7" y1="606.0" x2="11" y2="606.0" stroke="#111" stroke-width="1"/><line x1="7" y1="612.0" x2="11" y2="612.0" stroke="#111" stroke-width="1"/><line x1="7" y1="624.0" x2="11" y2="624.0" stroke="#111" stroke-width="1"/><line x1="7" y1="630.0" x2="11" y2="630.0" stroke="#111" stroke-width="1"/><line x1="7" y1="642.0" x2="11" y2="642.0" stroke="#111" stroke-width="1"/><line x1="7" y1="654.0" x2="11" y2="654.0" stroke="#111" stroke-width="1"/><line x1="7" y1="666.0" x2="11" y2="666.0" stroke="#111" stroke-width="1"/><line x1="7" y1="678.0" x2="11" y2="678.0" stroke="#111" stroke-width="1"/><line x1="7" y1="690.0" x2="11" y2="690.0" stroke="#111" stroke-width="1"/><line x1="7" y1="702.0" x2="11" y2="702.0" stroke="#111" stroke-width="1"/><line x1="7" y1="714.0" x2="11" y2="714.0" stroke="#111" stroke-width="1"/><line x1="7" y1="723.0" x2="11" y2="723.0" stroke="#111" stroke-width="1"/><line x1="0" y1="546.5" x2="11" y2="546.5" stroke="#111" stroke-width="1"/><line x1="0" y1="564.5" x2="11" y2="564.5" stroke="#111" stroke-width="1"/><line x1="0" y1="582.5" x2="11" y2="582.5" stroke="#111" stroke-width="1"/><line x1="0" y1="600.5" x2="11" y2="600.5" stroke="#111" stroke-width="1"/><line x1="0" y1="618.5" x2="11" y2="618.5" stroke="#111" stroke-width="1"/><line x1="0" y1="636.5" x2="11" y2="636.5" stroke="#111" stroke-width="1"/><line x1="0" y1="648.5" x2="11" y2="648.5" stroke="#111" stroke-width="1"/><line x1="0" y1="660.5" x2="11" y2="660.5" stroke="#111" stroke-width="1"/><line x1="0" y1="672.5" x2="11" y2="672.5" stroke="#111" stroke-width="1"/><line x1="0" y1="684.5" x2="11" y2="684.5" stroke="#111" stroke-width="1"/><line x1="0" y1="696.5" x2="11" y2="696.5" stroke="#111" stroke-width="1"/><line x1="0" y1="708.5" x2="11" y2="708.5" stroke="#111" stroke-width="1"/><line x1="0" y1="720.5" x2="11" y2="720.5" stroke="#111" stroke-width="1"/><line x1="0" y1="726.5" x2="11" y2="726.5" stroke="#111" stroke-width="1"/></svg>
<div class="a " style="left:2210px;top:546px;width:3px;height:183px;background:#050505;border-radius:1px"></div>
<div class="a" style="left:2225px;top:0;width:14px;height:740px"><div class="t" style="left:0;top:542px;width:14px;text-align:right;font-size:8px;color:#222">12</div><div class="t" style="left:0;top:560px;width:14px;text-align:right;font-size:8px;color:#222">6</div><div class="t" style="left:0;top:578px;width:14px;text-align:right;font-size:8px;color:#222">0</div><div class="t" style="left:0;top:596px;width:14px;text-align:right;font-size:8px;color:#222">6</div><div class="t" style="left:0;top:614px;width:14px;text-align:right;font-size:8px;color:#222">12</div><div class="t" style="left:0;top:632px;width:14px;text-align:right;font-size:8px;color:#222">18</div><div class="t" style="left:0;top:644px;width:14px;text-align:right;font-size:8px;color:#222">24</div><div class="t" style="left:0;top:656px;width:14px;text-align:right;font-size:8px;color:#222">30</div><div class="t" style="left:0;top:668px;width:14px;text-align:right;font-size:8px;color:#222">36</div><div class="t" style="left:0;top:680px;width:14px;text-align:right;font-size:8px;color:#222">42</div><div class="t" style="left:0;top:692px;width:14px;text-align:right;font-size:8px;color:#222">48</div><div class="t" style="left:0;top:704px;width:14px;text-align:right;font-size:8px;color:#222">54</div><div class="t" style="left:0;top:716px;width:14px;text-align:right;font-size:8px;color:#222">60</div><div class="t" style="left:6px;top:723px;font-size:7px;color:#222">oo</div></div>
<div class="a " style="left:2243px;top:538px;width:12px;height:191px;background:#141414;border-radius:3px;box-shadow:inset 0 0 0 1px #0c0c0c"></div>
<svg style="left:2203px;top:566px" width="16" height="35"><defs><linearGradient id="fcred" x1="0" y1="0" x2="1" y2="0"><stop offset="0" stop-color="#a03030"/><stop offset="0.5" stop-color="#e07070"/><stop offset="1" stop-color="#a03030"/></linearGradient></defs><rect x="0.5" y="0.5" width="15" height="34" rx="1.5" fill="url(#fcred)" stroke="#222"/><line x1="1" y1="3.0" x2="15" y2="3.0" stroke="#602020" stroke-width="0.8"/><line x1="1" y1="6.3" x2="15" y2="6.3" stroke="#602020" stroke-width="0.8"/><line x1="1" y1="9.6" x2="15" y2="9.6" stroke="#602020" stroke-width="0.8"/><line x1="1" y1="12.9" x2="15" y2="12.9" stroke="#602020" stroke-width="0.8"/><line x1="1" y1="16.2" x2="15" y2="16.2" stroke="#602020" stroke-width="0.8"/><line x1="1" y1="19.5" x2="15" y2="19.5" stroke="#602020" stroke-width="0.8"/><line x1="1" y1="22.8" x2="15" y2="22.8" stroke="#602020" stroke-width="0.8"/><line x1="1" y1="26.1" x2="15" y2="26.1" stroke="#602020" stroke-width="0.8"/><line x1="1" y1="29.4" x2="15" y2="29.4" stroke="#602020" stroke-width="0.8"/><line x1="1" y1="32.7" x2="15" y2="32.7" stroke="#602020" stroke-width="0.8"/><line x1="0" y1="17.5" x2="16" y2="17.5" stroke="#000" stroke-width="1.5"/></svg>
<div class="t " style="left:2200px;top:755px;font-size:11px;color:#1a1a1a">MB2</div>
<div class="a" style="left:2239px;top:752px;width:18px;height:17px;background:#2a2a2a;border:1px solid #0a0a0a;border-radius:2px;box-shadow:inset 0 0 0 1px rgba(255,255,255,0.06);display:flex;align-items:center;justify-content:center;font-size:8px;color:#bbb;white-space:nowrap;overflow:hidden;">OS</div>
<svg style="left:2246px;top:734px" width="10" height="10"><rect x="0.5" y="0.5" width="8" height="8" fill="none" stroke="#777"/><path d="M4.5 2 V7 M2 4.5 H7" stroke="#777"/></svg>
<div class="a" style="left:2194px;top:780px;width:61px;height:12px;background:#121212;border-radius:2px;font-size:10.5px;color:#f4ecd8;text-align:center;line-height:12px;overflow:hidden;white-space:nowrap;letter-spacing:-0.3px">MIC</div>
<div class="a" style="left:2194px;top:830px;width:17px;height:17px;background:#2e2e2e;border:1px solid #0a0a0a;border-radius:2px;box-shadow:inset 0 0 0 1px rgba(255,255,255,0.06);display:flex;align-items:center;justify-content:center;font-size:8px;color:#999;white-space:nowrap;overflow:hidden;">SF</div>
<div class="a" style="left:2216px;top:830px;width:17px;height:17px;background:#2e2e2e;border:1px solid #0a0a0a;border-radius:2px;box-shadow:inset 0 0 0 1px rgba(255,255,255,0.06);display:flex;align-items:center;justify-content:center;font-size:8px;color:#999;white-space:nowrap;overflow:hidden;">RE</div>
<div class="a" style="left:2238px;top:830px;width:17px;height:17px;background:#2e2e2e;border:1px solid #0a0a0a;border-radius:2px;box-shadow:inset 0 0 0 1px rgba(255,255,255,0.06);display:flex;align-items:center;justify-content:center;font-size:8px;color:#999;white-space:nowrap;overflow:hidden;">DI</div>
<svg style="left:2193px;top:883px" width="13" height="13"><circle cx="6.5" cy="6.5" r="5.5" fill="none" stroke="#999" stroke-width="1.2"/><circle cx="4.5" cy="5.5" r="1" fill="#999"/><circle cx="8.5" cy="5.5" r="1" fill="#999"/><circle cx="6.5" cy="8.5" r="1" fill="#999"/></svg>
<div class="t " style="left:2210px;top:884px;font-size:10px;color:#1a1a1a">Output</div>
<div class="a" style="left:2194px;top:900px;width:61px;height:12px;background:#121212;border-radius:2px;font-size:10px;color:#c8c8c8;line-height:12px"><span style="position:absolute;left:4px">L</span><span style="position:absolute;right:4px">3</span></div>
<div class="a" style="left:2194px;top:916px;width:61px;height:12px;background:#121212;border-radius:2px;font-size:10px;color:#c8c8c8;line-height:12px"><span style="position:absolute;left:4px">R</span><span style="position:absolute;right:4px">4</span></div>
<div class="a" style="left:2194px;top:978px;width:61px;height:13px;background:#121212;border-radius:2px;font-size:9.5px;color:#f0e6c8;text-align:center;line-height:13px">Stereo</div>
<svg style="left:2191px;top:999px" width="50" height="12"><g stroke="#8a8a8a" stroke-width="1" fill="none"><rect x="0.5" y="1.5" width="8" height="8"/><path d="M2.5 5.5 H6.5"/><path d="M16 5.5 H18 M18 3 V8 H21 V3 Z" fill="#8a8a8a"/><path d="M31 2 H39 M31 4.5 H39 M31 7 H39 M31 9.5 H39"/></g></svg>
<div class="a" style="left:2268px;top:509px;width:60px;height:13px;background:#121212;border-radius:2px;font-size:10px;color:#a8c060;text-align:center;line-height:13px">-144.5</div>
<svg style="left:2271px;top:0px" width="14" height="740"><line x1="7" y1="552.0" x2="11" y2="552.0" stroke="#111" stroke-width="1"/><line x1="7" y1="558.0" x2="11" y2="558.0" stroke="#111" stroke-width="1"/><line x1="7" y1="570.0" x2="11" y2="570.0" stroke="#111" stroke-width="1"/><line x1="7" y1="576.0" x2="11" y2="576.0" stroke="#111" stroke-width="1"/><line x1="7" y1="588.0" x2="11" y2="588.0" stroke="#111" stroke-width="1"/><line x1="7" y1="594.0" x2="11" y2="594.0" stroke="#111" stroke-width="1"/><line x1="7" y1="606.0" x2="11" y2="606.0" stroke="#111" stroke-width="1"/><line x1="7" y1="612.0" x2="11" y2="612.0" stroke="#111" stroke-width="1"/><line x1="7" y1="624.0" x2="11" y2="624.0" stroke="#111" stroke-width="1"/><line x1="7" y1="630.0" x2="11" y2="630.0" stroke="#111" stroke-width="1"/><line x1="7" y1="642.0" x2="11" y2="642.0" stroke="#111" stroke-width="1"/><line x1="7" y1="654.0" x2="11" y2="654.0" stroke="#111" stroke-width="1"/><line x1="7" y1="666.0" x2="11" y2="666.0" stroke="#111" stroke-width="1"/><line x1="7" y1="678.0" x2="11" y2="678.0" stroke="#111" stroke-width="1"/><line x1="7" y1="690.0" x2="11" y2="690.0" stroke="#111" stroke-width="1"/><line x1="7" y1="702.0" x2="11" y2="702.0" stroke="#111" stroke-width="1"/><line x1="7" y1="714.0" x2="11" y2="714.0" stroke="#111" stroke-width="1"/><line x1="7" y1="723.0" x2="11" y2="723.0" stroke="#111" stroke-width="1"/><line x1="0" y1="546.5" x2="11" y2="546.5" stroke="#111" stroke-width="1"/><line x1="0" y1="564.5" x2="11" y2="564.5" stroke="#111" stroke-width="1"/><line x1="0" y1="582.5" x2="11" y2="582.5" stroke="#111" stroke-width="1"/><line x1="0" y1="600.5" x2="11" y2="600.5" stroke="#111" stroke-width="1"/><line x1="0" y1="618.5" x2="11" y2="618.5" stroke="#111" stroke-width="1"/><line x1="0" y1="636.5" x2="11" y2="636.5" stroke="#111" stroke-width="1"/><line x1="0" y1="648.5" x2="11" y2="648.5" stroke="#111" stroke-width="1"/><line x1="0" y1="660.5" x2="11" y2="660.5" stroke="#111" stroke-width="1"/><line x1="0" y1="672.5" x2="11" y2="672.5" stroke="#111" stroke-width="1"/><line x1="0" y1="684.5" x2="11" y2="684.5" stroke="#111" stroke-width="1"/><line x1="0" y1="696.5" x2="11" y2="696.5" stroke="#111" stroke-width="1"/><line x1="0" y1="708.5" x2="11" y2="708.5" stroke="#111" stroke-width="1"/><line x1="0" y1="720.5" x2="11" y2="720.5" stroke="#111" stroke-width="1"/><line x1="0" y1="726.5" x2="11" y2="726.5" stroke="#111" stroke-width="1"/></svg>
<div class="a " style="left:2284px;top:546px;width:3px;height:183px;background:#050505;border-radius:1px"></div>
<div class="a" style="left:2299px;top:0;width:14px;height:740px"><div class="t" style="left:0;top:542px;width:14px;text-align:right;font-size:8px;color:#222">12</div><div class="t" style="left:0;top:560px;width:14px;text-align:right;font-size:8px;color:#222">6</div><div class="t" style="left:0;top:578px;width:14px;text-align:right;font-size:8px;color:#222">0</div><div class="t" style="left:0;top:596px;width:14px;text-align:right;font-size:8px;color:#222">6</div><div class="t" style="left:0;top:614px;width:14px;text-align:right;font-size:8px;color:#222">12</div><div class="t" style="left:0;top:632px;width:14px;text-align:right;font-size:8px;color:#222">18</div><div class="t" style="left:0;top:644px;width:14px;text-align:right;font-size:8px;color:#222">24</div><div class="t" style="left:0;top:656px;width:14px;text-align:right;font-size:8px;color:#222">30</div><div class="t" style="left:0;top:668px;width:14px;text-align:right;font-size:8px;color:#222">36</div><div class="t" style="left:0;top:680px;width:14px;text-align:right;font-size:8px;color:#222">42</div><div class="t" style="left:0;top:692px;width:14px;text-align:right;font-size:8px;color:#222">48</div><div class="t" style="left:0;top:704px;width:14px;text-align:right;font-size:8px;color:#222">54</div><div class="t" style="left:0;top:716px;width:14px;text-align:right;font-size:8px;color:#222">60</div><div class="t" style="left:6px;top:723px;font-size:7px;color:#222">oo</div></div>
<div class="a " style="left:2317px;top:538px;width:12px;height:191px;background:#141414;border-radius:3px;box-shadow:inset 0 0 0 1px #0c0c0c"></div>
<svg style="left:2277px;top:566px" width="16" height="35"><defs><linearGradient id="fcred" x1="0" y1="0" x2="1" y2="0"><stop offset="0" stop-color="#a03030"/><stop offset="0.5" stop-color="#e07070"/><stop offset="1" stop-color="#a03030"/></linearGradient></defs><rect x="0.5" y="0.5" width="15" height="34" rx="1.5" fill="url(#fcred)" stroke="#222"/><line x1="1" y1="3.0" x2="15" y2="3.0" stroke="#602020" stroke-width="0.8"/><line x1="1" y1="6.3" x2="15" y2="6.3" stroke="#602020" stroke-width="0.8"/><line x1="1" y1="9.6" x2="15" y2="9.6" stroke="#602020" stroke-width="0.8"/><line x1="1" y1="12.9" x2="15" y2="12.9" stroke="#602020" stroke-width="0.8"/><line x1="1" y1="16.2" x2="15" y2="16.2" stroke="#602020" stroke-width="0.8"/><line x1="1" y1="19.5" x2="15" y2="19.5" stroke="#602020" stroke-width="0.8"/><line x1="1" y1="22.8" x2="15" y2="22.8" stroke="#602020" stroke-width="0.8"/><line x1="1" y1="26.1" x2="15" y2="26.1" stroke="#602020" stroke-width="0.8"/><line x1="1" y1="29.4" x2="15" y2="29.4" stroke="#602020" stroke-width="0.8"/><line x1="1" y1="32.7" x2="15" y2="32.7" stroke="#602020" stroke-width="0.8"/><line x1="0" y1="17.5" x2="16" y2="17.5" stroke="#000" stroke-width="1.5"/></svg>
<div class="t " style="left:2274px;top:755px;font-size:11px;color:#0c2a0c">MB3</div>
<div class="a" style="left:2313px;top:752px;width:18px;height:17px;background:#2a2a2a;border:1px solid #0a0a0a;border-radius:2px;box-shadow:inset 0 0 0 1px rgba(255,255,255,0.06);display:flex;align-items:center;justify-content:center;font-size:8px;color:#bbb;white-space:nowrap;overflow:hidden;">OS</div>
<svg style="left:2320px;top:734px" width="10" height="10"><rect x="0.5" y="0.5" width="8" height="8" fill="none" stroke="#777"/><path d="M4.5 2 V7 M2 4.5 H7" stroke="#777"/></svg>
<div class="a" style="left:2268px;top:780px;width:61px;height:12px;background:#121212;border-radius:2px;font-size:10.5px;color:#f4ecd8;text-align:center;line-height:12px;overflow:hidden;white-space:nowrap;letter-spacing:-0.3px">PB</div>
<div class="a" style="left:2268px;top:830px;width:17px;height:17px;background:#2e2e2e;border:1px solid #0a0a0a;border-radius:2px;box-shadow:inset 0 0 0 1px rgba(255,255,255,0.06);display:flex;align-items:center;justify-content:center;font-size:8px;color:#999;white-space:nowrap;overflow:hidden;">SF</div>
<div class="a" style="left:2290px;top:830px;width:17px;height:17px;background:#2e2e2e;border:1px solid #0a0a0a;border-radius:2px;box-shadow:inset 0 0 0 1px rgba(255,255,255,0.06);display:flex;align-items:center;justify-content:center;font-size:8px;color:#999;white-space:nowrap;overflow:hidden;">RE</div>
<div class="a" style="left:2312px;top:830px;width:17px;height:17px;background:#2e2e2e;border:1px solid #0a0a0a;border-radius:2px;box-shadow:inset 0 0 0 1px rgba(255,255,255,0.06);display:flex;align-items:center;justify-content:center;font-size:8px;color:#999;white-space:nowrap;overflow:hidden;">DI</div>
<svg style="left:2267px;top:883px" width="13" height="13"><circle cx="6.5" cy="6.5" r="5.5" fill="none" stroke="#999" stroke-width="1.2"/><circle cx="4.5" cy="5.5" r="1" fill="#999"/><circle cx="8.5" cy="5.5" r="1" fill="#999"/><circle cx="6.5" cy="8.5" r="1" fill="#999"/></svg>
<div class="t " style="left:2284px;top:884px;font-size:10px;color:#1a1a1a">Output</div>
<div class="a" style="left:2268px;top:900px;width:61px;height:12px;background:#121212;border-radius:2px;font-size:10px;color:#c8c8c8;line-height:12px"><span style="position:absolute;left:4px">L</span><span style="position:absolute;right:4px">5</span></div>
<div class="a" style="left:2268px;top:916px;width:61px;height:12px;background:#121212;border-radius:2px;font-size:10px;color:#c8c8c8;line-height:12px"><span style="position:absolute;left:4px">R</span><span style="position:absolute;right:4px">6</span></div>
<div class="a" style="left:2268px;top:978px;width:61px;height:13px;background:#121212;border-radius:2px;font-size:9.5px;color:#f0e6c8;text-align:center;line-height:13px">Stereo</div>
<svg style="left:2265px;top:999px" width="50" height="12"><g stroke="#8a8a8a" stroke-width="1" fill="none"><rect x="0.5" y="1.5" width="8" height="8"/><path d="M2.5 5.5 H6.5"/><path d="M16 5.5 H18 M18 3 V8 H21 V3 Z" fill="#8a8a8a"/><path d="M31 2 H39 M31 4.5 H39 M31 7 H39 M31 9.5 H39"/></g></svg>
<div class="a" style="left:2342px;top:509px;width:60px;height:13px;background:#121212;border-radius:2px;font-size:10px;color:#a8c060;text-align:center;line-height:13px">-144.5</div>
<svg style="left:2345px;top:0px" width="14" height="740"><line x1="7" y1="552.0" x2="11" y2="552.0" stroke="#777" stroke-width="1"/><line x1="7" y1="558.0" x2="11" y2="558.0" stroke="#777" stroke-width="1"/><line x1="7" y1="570.0" x2="11" y2="570.0" stroke="#777" stroke-width="1"/><line x1="7" y1="576.0" x2="11" y2="576.0" stroke="#777" stroke-width="1"/><line x1="7" y1="588.0" x2="11" y2="588.0" stroke="#777" stroke-width="1"/><line x1="7" y1="594.0" x2="11" y2="594.0" stroke="#777" stroke-width="1"/><line x1="7" y1="606.0" x2="11" y2="606.0" stroke="#777" stroke-width="1"/><line x1="7" y1="612.0" x2="11" y2="612.0" stroke="#777" stroke-width="1"/><line x1="7" y1="624.0" x2="11" y2="624.0" stroke="#777" stroke-width="1"/><line x1="7" y1="630.0" x2="11" y2="630.0" stroke="#777" stroke-width="1"/><line x1="7" y1="642.0" x2="11" y2="642.0" stroke="#777" stroke-width="1"/><line x1="7" y1="654.0" x2="11" y2="654.0" stroke="#777" stroke-width="1"/><line x1="7" y1="666.0" x2="11" y2="666.0" stroke="#777" stroke-width="1"/><line x1="7" y1="678.0" x2="11" y2="678.0" stroke="#777" stroke-width="1"/><line x1="7" y1="690.0" x2="11" y2="690.0" stroke="#777" stroke-width="1"/><line x1="7" y1="702.0" x2="11" y2="702.0" stroke="#777" stroke-width="1"/><line x1="7" y1="714.0" x2="11" y2="714.0" stroke="#777" stroke-width="1"/><line x1="7" y1="723.0" x2="11" y2="723.0" stroke="#777" stroke-width="1"/><line x1="0" y1="546.5" x2="11" y2="546.5" stroke="#777" stroke-width="1"/><line x1="0" y1="564.5" x2="11" y2="564.5" stroke="#777" stroke-width="1"/><line x1="0" y1="582.5" x2="11" y2="582.5" stroke="#777" stroke-width="1"/><line x1="0" y1="600.5" x2="11" y2="600.5" stroke="#777" stroke-width="1"/><line x1="0" y1="618.5" x2="11" y2="618.5" stroke="#777" stroke-width="1"/><line x1="0" y1="636.5" x2="11" y2="636.5" stroke="#777" stroke-width="1"/><line x1="0" y1="648.5" x2="11" y2="648.5" stroke="#777" stroke-width="1"/><line x1="0" y1="660.5" x2="11" y2="660.5" stroke="#777" stroke-width="1"/><line x1="0" y1="672.5" x2="11" y2="672.5" stroke="#777" stroke-width="1"/><line x1="0" y1="684.5" x2="11" y2="684.5" stroke="#777" stroke-width="1"/><line x1="0" y1="696.5" x2="11" y2="696.5" stroke="#777" stroke-width="1"/><line x1="0" y1="708.5" x2="11" y2="708.5" stroke="#777" stroke-width="1"/><line x1="0" y1="720.5" x2="11" y2="720.5" stroke="#777" stroke-width="1"/><line x1="0" y1="726.5" x2="11" y2="726.5" stroke="#777" stroke-width="1"/></svg>
<div class="a " style="left:2358px;top:546px;width:3px;height:183px;background:#050505;border-radius:1px"></div>
<div class="a" style="left:2373px;top:0;width:14px;height:740px"><div class="t" style="left:0;top:542px;width:14px;text-align:right;font-size:8px;color:#777">12</div><div class="t" style="left:0;top:560px;width:14px;text-align:right;font-size:8px;color:#777">6</div><div class="t" style="left:0;top:578px;width:14px;text-align:right;font-size:8px;color:#777">0</div><div class="t" style="left:0;top:596px;width:14px;text-align:right;font-size:8px;color:#777">6</div><div class="t" style="left:0;top:614px;width:14px;text-align:right;font-size:8px;color:#777">12</div><div class="t" style="left:0;top:632px;width:14px;text-align:right;font-size:8px;color:#777">18</div><div class="t" style="left:0;top:644px;width:14px;text-align:right;font-size:8px;color:#777">24</div><div class="t" style="left:0;top:656px;width:14px;text-align:right;font-size:8px;color:#777">30</div><div class="t" style="left:0;top:668px;width:14px;text-align:right;font-size:8px;color:#777">36</div><div class="t" style="left:0;top:680px;width:14px;text-align:right;font-size:8px;color:#777">42</div><div class="t" style="left:0;top:692px;width:14px;text-align:right;font-size:8px;color:#777">48</div><div class="t" style="left:0;top:704px;width:14px;text-align:right;font-size:8px;color:#777">54</div><div class="t" style="left:0;top:716px;width:14px;text-align:right;font-size:8px;color:#777">60</div><div class="t" style="left:6px;top:723px;font-size:7px;color:#777">oo</div></div>
<div class="a " style="left:2391px;top:538px;width:12px;height:191px;background:#141414;border-radius:3px;box-shadow:inset 0 0 0 1px #0c0c0c"></div>
<svg style="left:2351px;top:566px" width="16" height="35"><defs><linearGradient id="fcred" x1="0" y1="0" x2="1" y2="0"><stop offset="0" stop-color="#a03030"/><stop offset="0.5" stop-color="#e07070"/><stop offset="1" stop-color="#a03030"/></linearGradient></defs><rect x="0.5" y="0.5" width="15" height="34" rx="1.5" fill="url(#fcred)" stroke="#222"/><line x1="1" y1="3.0" x2="15" y2="3.0" stroke="#602020" stroke-width="0.8"/><line x1="1" y1="6.3" x2="15" y2="6.3" stroke="#602020" stroke-width="0.8"/><line x1="1" y1="9.6" x2="15" y2="9.6" stroke="#602020" stroke-width="0.8"/><line x1="1" y1="12.9" x2="15" y2="12.9" stroke="#602020" stroke-width="0.8"/><line x1="1" y1="16.2" x2="15" y2="16.2" stroke="#602020" stroke-width="0.8"/><line x1="1" y1="19.5" x2="15" y2="19.5" stroke="#602020" stroke-width="0.8"/><line x1="1" y1="22.8" x2="15" y2="22.8" stroke="#602020" stroke-width="0.8"/><line x1="1" y1="26.1" x2="15" y2="26.1" stroke="#602020" stroke-width="0.8"/><line x1="1" y1="29.4" x2="15" y2="29.4" stroke="#602020" stroke-width="0.8"/><line x1="1" y1="32.7" x2="15" y2="32.7" stroke="#602020" stroke-width="0.8"/><line x1="0" y1="17.5" x2="16" y2="17.5" stroke="#000" stroke-width="1.5"/></svg>
<div class="t " style="left:2348px;top:755px;font-size:11px;color:#aaa">MB4</div>
<div class="a" style="left:2387px;top:752px;width:18px;height:17px;background:#2a2a2a;border:1px solid #0a0a0a;border-radius:2px;box-shadow:inset 0 0 0 1px rgba(255,255,255,0.06);display:flex;align-items:center;justify-content:center;font-size:8px;color:#bbb;white-space:nowrap;overflow:hidden;">OS</div>
<svg style="left:2394px;top:734px" width="10" height="10"><rect x="0.5" y="0.5" width="8" height="8" fill="none" stroke="#777"/><path d="M4.5 2 V7 M2 4.5 H7" stroke="#777"/></svg>
<div class="a" style="left:2342px;top:780px;width:61px;height:12px;background:#121212;border-radius:2px;font-size:10.5px;color:#f4ecd8;text-align:center;line-height:12px;overflow:hidden;white-space:nowrap;letter-spacing:-0.3px">Mix Bus</div>
<div class="a" style="left:2342px;top:830px;width:17px;height:17px;background:#2e2e2e;border:1px solid #0a0a0a;border-radius:2px;box-shadow:inset 0 0 0 1px rgba(255,255,255,0.06);display:flex;align-items:center;justify-content:center;font-size:8px;color:#999;white-space:nowrap;overflow:hidden;">SF</div>
<div class="a" style="left:2364px;top:830px;width:17px;height:17px;background:#2e2e2e;border:1px solid #0a0a0a;border-radius:2px;box-shadow:inset 0 0 0 1px rgba(255,255,255,0.06);display:flex;align-items:center;justify-content:center;font-size:8px;color:#999;white-space:nowrap;overflow:hidden;">RE</div>
<div class="a" style="left:2386px;top:830px;width:17px;height:17px;background:#2e2e2e;border:1px solid #0a0a0a;border-radius:2px;box-shadow:inset 0 0 0 1px rgba(255,255,255,0.06);display:flex;align-items:center;justify-content:center;font-size:8px;color:#999;white-space:nowrap;overflow:hidden;">DI</div>
<svg style="left:2341px;top:883px" width="13" height="13"><circle cx="6.5" cy="6.5" r="5.5" fill="none" stroke="#999" stroke-width="1.2"/><circle cx="4.5" cy="5.5" r="1" fill="#999"/><circle cx="8.5" cy="5.5" r="1" fill="#999"/><circle cx="6.5" cy="8.5" r="1" fill="#999"/></svg>
<div class="t " style="left:2358px;top:884px;font-size:10px;color:#999">Output</div>
<div class="a" style="left:2342px;top:900px;width:61px;height:12px;background:#121212;border-radius:2px;font-size:10px;color:#f09020;line-height:12px"><span style="position:absolute;left:4px">L</span><span style="position:absolute;right:4px">1</span></div>
<div class="a" style="left:2342px;top:916px;width:61px;height:12px;background:#121212;border-radius:2px;font-size:10px;color:#f09020;line-height:12px"><span style="position:absolute;left:4px">R</span><span style="position:absolute;right:4px">2</span></div>
<div class="a" style="left:2342px;top:978px;width:61px;height:13px;background:#121212;border-radius:2px;font-size:9.5px;color:#f0e6c8;text-align:center;line-height:13px">Stereo</div>
<svg style="left:2339px;top:999px" width="50" height="12"><g stroke="#8a8a8a" stroke-width="1" fill="none"><rect x="0.5" y="1.5" width="8" height="8"/><path d="M2.5 5.5 H6.5"/><path d="M16 5.5 H18 M18 3 V8 H21 V3 Z" fill="#8a8a8a"/><path d="M31 2 H39 M31 4.5 H39 M31 7 H39 M31 9.5 H39"/></g></svg>
<div class="a " style="left:2114px;top:993px;width:72px;height:3px;background:#e0207a"></div>
<div class="a " style="left:2188px;top:993px;width:72px;height:3px;background:#ff8a00"></div>
<div class="a " style="left:2262px;top:993px;width:72px;height:3px;background:#20c020"></div>
<svg style="left:2416px;top:149px" width="9" height="9"><rect x="0.5" y="0.5" width="8" height="8" rx="1" fill="none" stroke="#777"/><path d="M2 4.5 H7" stroke="#aaa"/></svg>
<div class="t " style="left:2429px;top:148px;font-size:9px;color:#a8a8a8;letter-spacing:-0.3px">MB4</div>
<svg style="left:2416px;top:178px" width="9" height="9"><rect x="0.5" y="0.5" width="8" height="8" rx="1" fill="none" stroke="#777"/><path d="M2 4.5 H7" stroke="#aaa"/></svg>
<div class="t " style="left:2429px;top:177px;font-size:9px;color:#a8a8a8;letter-spacing:-0.3px">MB3</div>
<svg style="left:2416px;top:207px" width="9" height="9"><rect x="0.5" y="0.5" width="8" height="8" rx="1" fill="none" stroke="#777"/><path d="M2 4.5 H7" stroke="#aaa"/></svg>
<div class="t " style="left:2429px;top:206px;font-size:9px;color:#a8a8a8;letter-spacing:-0.3px">MB2</div>
<svg style="left:2416px;top:236px" width="9" height="9"><rect x="0.5" y="0.5" width="8" height="8" rx="1" fill="none" stroke="#777"/><path d="M2 4.5 H7" stroke="#aaa"/></svg>
<div class="t " style="left:2429px;top:235px;font-size:9px;color:#a8a8a8;letter-spacing:-0.3px">MB1</div>
<svg style="left:2416px;top:265px" width="9" height="9"><rect x="0.5" y="0.5" width="8" height="8" rx="1" fill="none" stroke="#777"/><path d="M2 4.5 H7" stroke="#aaa"/></svg>
<div class="t " style="left:2429px;top:264px;font-size:9px;color:#a8a8a8;letter-spacing:-0.3px">AB1</div>
<svg style="left:2416px;top:290px" width="9" height="9"><rect x="0.5" y="0.5" width="8" height="8" rx="1" fill="none" stroke="#777"/><path d="M2 4.5 H7" stroke="#aaa"/></svg>
<div class="t " style="left:2429px;top:289px;font-size:9px;color:#a8a8a8;letter-spacing:-0.3px">Panning</div>
<svg style="left:2416px;top:370px" width="9" height="9"><rect x="0.5" y="0.5" width="8" height="8" rx="1" fill="none" stroke="#777"/><path d="M2 4.5 H7" stroke="#aaa"/></svg>
<div class="t " style="left:2429px;top:369px;font-size:9px;color:#a8a8a8;letter-spacing:-0.3px">Effect</div>
<svg style="left:2416px;top:511px" width="9" height="9"><rect x="0.5" y="0.5" width="8" height="8" rx="1" fill="none" stroke="#777"/><path d="M2 4.5 H7" stroke="#aaa"/></svg>
<div class="t " style="left:2429px;top:510px;font-size:9px;color:#a8a8a8;letter-spacing:-0.3px">Gain</div>
<svg style="left:2416px;top:781px" width="9" height="9"><rect x="0.5" y="0.5" width="8" height="8" rx="1" fill="none" stroke="#777"/><path d="M2 4.5 H7" stroke="#aaa"/></svg>
<div class="t " style="left:2429px;top:780px;font-size:9px;color:#a8a8a8;letter-spacing:-0.3px">Mute</div>
<svg style="left:2416px;top:857px" width="9" height="9"><rect x="0.5" y="0.5" width="8" height="8" rx="1" fill="none" stroke="#777"/><path d="M2 4.5 H7" stroke="#aaa"/></svg>
<div class="t " style="left:2429px;top:856px;font-size:9px;color:#a8a8a8;letter-spacing:-0.3px">I/O</div>
<div class="a" style="left:2413px;top:539px;width:17px;height:17px;background:#2a2a2a;border:1px solid #0a0a0a;border-radius:2px;font-size:8px;color:#aaa;text-align:center;line-height:15px">O</div>
<div class="a" style="left:2413px;top:581px;width:17px;height:17px;background:#b030d0;border:1px solid #0a0a0a;border-radius:2px;font-size:8px;color:#2a0a30;text-align:center;line-height:15px">SC</div>
<div class="a" style="left:2435px;top:581px;width:17px;height:17px;background:#f08a10;border:1px solid #0a0a0a;border-radius:2px;font-size:8px;color:#3a2000;text-align:center;line-height:15px">BC</div>
<div class="a" style="left:2413px;top:603px;width:17px;height:17px;background:#e8c050;border:1px solid #0a0a0a;border-radius:2px;font-size:8px;color:#3a3010;text-align:center;line-height:15px">GC</div>
<div class="a" style="left:2435px;top:603px;width:17px;height:17px;background:#2a2a2a;border:1px solid #0a0a0a;border-radius:2px;font-size:8px;color:#999;text-align:center;line-height:15px">FL</div>
<div class="a" style="left:2413px;top:645px;width:17px;height:17px;background:#2a2a2a;border:1px solid #0a0a0a;border-radius:2px;font-size:8px;color:#999;text-align:center;line-height:15px">S1</div>
<div class="a" style="left:2435px;top:645px;width:17px;height:17px;background:#2a2a2a;border:1px solid #0a0a0a;border-radius:2px;font-size:8px;color:#999;text-align:center;line-height:15px">S2</div>
<div class="a" style="left:2413px;top:667px;width:17px;height:17px;background:#2a2a2a;border:1px solid #0a0a0a;border-radius:2px;font-size:8px;color:#999;text-align:center;line-height:15px">S3</div>
<div class="a" style="left:2435px;top:667px;width:17px;height:17px;background:#2a2a2a;border:1px solid #0a0a0a;border-radius:2px;font-size:8px;color:#999;text-align:center;line-height:15px">S4</div>
<div class="a" style="left:2413px;top:709px;width:17px;height:17px;background:#d8d8d8;border:1px solid #0a0a0a;border-radius:2px;font-size:8px;color:#333;text-align:center;line-height:15px">DC</div>
<div class="a" style="left:2435px;top:709px;width:17px;height:17px;background:#20c050;border:1px solid #0a0a0a;border-radius:2px;font-size:8px;color:#0a3a10;text-align:center;line-height:15px">DS</div>
<div class="a" style="left:2413px;top:752px;width:17px;height:17px;background:#2a2a2a;border:1px solid #0a0a0a;border-radius:2px;font-size:8px;color:#999;text-align:center;line-height:15px">AC</div>
<div class="a" style="left:2413px;top:801px;width:17px;height:17px;background:#2a2a2a;border:1px solid #0a0a0a;border-radius:2px;font-size:8px;color:#999;text-align:center;line-height:15px">S</div>
<div class="a" style="left:2435px;top:801px;width:17px;height:17px;background:#2a2a2a;border:1px solid #0a0a0a;border-radius:2px;font-size:8px;color:#999;text-align:center;line-height:15px">M</div>
<svg style="left:2414px;top:977px" width="9" height="9"><rect x="0.5" y="0.5" width="7" height="7" fill="none" stroke="#aaa"/><rect x="2.5" y="2.5" width="3" height="3" fill="#aaa"/></svg>
<svg style="left:2414px;top:999px" width="50" height="12"><rect x="0.5" y="1.5" width="8" height="8" fill="none" stroke="#888"/><path d="M4.5 3 V8 M2 5.5 H7" stroke="#888"/><rect x="35.5" y="1.5" width="8" height="8" fill="none" stroke="#666"/><text x="37" y="9" font-size="7" fill="#888" font-family="Liberation Sans">?</text></svg>
<div class="a " style="left:1509px;top:1023px;width:933px;height:220px;background:#b4b4b4"></div>
<div class="t " style="left:1935px;top:1032px;font-size:16px;color:#222">Clips FX</div>
<svg style="left:2413px;top:1033px" width="14" height="14"><path d="M1 1 L13 13 M13 1 L1 13" stroke="#222" stroke-width="1.2"/></svg>
<div class="t " style="left:1532px;top:1063px;font-size:18px;font-weight:bold;color:#1a1a1a">S</div>
<svg style="left:1560px;top:1061px" width="125" height="24"><path d="M5 5 L16 12 L5 19 Z" fill="#111"/><g transform="translate(41,12)" fill="none" stroke="#222" stroke-width="1.2"><path d="M-7.5 -3 A8 8 0 0 1 6 -5.5"/><path d="M7.5 3 A8 8 0 0 1 -6 5.5"/><path d="M-9.5 -6 L-7.5 -2.5 L-4 -4.5 M9.5 6 L7.5 2.5 L4 4.5"/><path d="M-2.5 -4.5 L4 0 L-2.5 4.5Z" fill="#222" stroke="none"/></g><rect x="68" y="6" width="12" height="12" rx="1" fill="#1a1a1a"/><g transform="translate(106,12)"><rect x="-2.2" y="-10.5" width="4.4" height="4" rx="1" transform="rotate(0)" fill="#333"/><rect x="-2.2" y="-10.5" width="4.4" height="4" rx="1" transform="rotate(45)" fill="#333"/><rect x="-2.2" y="-10.5" width="4.4" height="4" rx="1" transform="rotate(90)" fill="#333"/><rect x="-2.2" y="-10.5" width="4.4" height="4" rx="1" transform="rotate(135)" fill="#333"/><rect x="-2.2" y="-10.5" width="4.4" height="4" rx="1" transform="rotate(180)" fill="#333"/><rect x="-2.2" y="-10.5" width="4.4" height="4" rx="1" transform="rotate(225)" fill="#333"/><rect x="-2.2" y="-10.5" width="4.4" height="4" rx="1" transform="rotate(270)" fill="#333"/><rect x="-2.2" y="-10.5" width="4.4" height="4" rx="1" transform="rotate(315)" fill="#333"/><circle r="7.5" fill="none" stroke="#333" stroke-width="1.4"/><circle r="3" fill="none" stroke="#333" stroke-width="1.3"/></g></svg>
<div class="a " style="left:1535px;top:1095px;width:700px;height:32px;background:#c8c8c8;border-bottom:1px solid #808080"></div>
<svg style="left:1516px;top:1101px" width="18" height="18"><path d="M1 2 H16 L8.5 16 Z" fill="#808080"/></svg>
<div class="a " style="left:1584px;top:1101px;width:16px;height:16px;background:#ecd47c;border:1px solid #888;border-radius:2px"></div>
<div class="a" style="left:1625px;top:1101px;width:41px;height:18px;background:#d4d4d4;border:1px solid #666;border-radius:2px;font-size:10px;color:#222;text-align:center;line-height:16px">Freeze</div>
<div class="a" style="left:1680px;top:1101px;width:19px;height:18px;background:#d4d4d4;border:1px solid #666;border-radius:2px;font-size:10px;color:#222;text-align:center;line-height:16px">M</div>
<div class="a" style="left:1709px;top:1101px;width:19px;height:18px;background:#d4d4d4;border:1px solid #666;border-radius:2px;font-size:10px;color:#222;text-align:center;line-height:16px">Ø</div>
<div class="t " style="left:1742px;top:1105px;font-size:10px;color:#222">0.00dB</div>
<svg style="left:1788px;top:1106px" width="12" height="8"><path d="M1 1 H10 L5.5 6Z" fill="#111"/></svg>
<div class="a " style="left:1823px;top:1101px;width:404px;height:18px;background:#ff8000;border-radius:2px"></div>
<div class="t " style="left:1831px;top:1105px;font-size:10px;color:#222">record mic 011 (1)</div>
<div class="t " style="left:1559px;top:1136px;font-size:18px;color:#222">+</div>
<div class="a " style="left:1555px;top:1161px;width:680px;height:1px;background:#808080"></div>
<div class="a " style="left:0px;top:1254px;width:2457px;height:8px;background:#b4b4b4"></div>
<div class="a " style="left:0px;top:1254px;width:2457px;height:1px;background:#8a8a8a"></div>
<div class="a" style="left:0px;top:1260px;width:15px;height:16px;background:#d0d0d0;border:1px solid #666;border-radius:2px 2px 0 0;font-size:10px;color:#222;text-align:center;line-height:14px">1</div>
<div class="a" style="left:17px;top:1260px;width:16px;height:16px;background:#d0d0d0;border:1px solid #666;border-radius:2px 2px 0 0;font-size:10px;color:#222;text-align:center;line-height:14px">2</div>
<div class="a" style="left:35px;top:1260px;width:16px;height:16px;background:#d0d0d0;border:1px solid #666;border-radius:2px 2px 0 0;font-size:10px;color:#222;text-align:center;line-height:14px">4</div>
<div class="a" style="left:53px;top:1260px;width:16px;height:16px;background:#d0d0d0;border:1px solid #666;border-radius:2px 2px 0 0;font-size:10px;color:#222;text-align:center;line-height:14px">8</div>
<div class="a" style="left:70px;top:1260px;width:17px;height:16px;background:#d0d0d0;border:1px solid #666;border-radius:2px 2px 0 0;font-size:10px;color:#222;text-align:center;line-height:14px">16</div>
<div class="a" style="left:88px;top:1260px;width:16px;height:16px;background:#d0d0d0;border:1px solid #666;border-radius:2px 2px 0 0;font-size:10px;color:#222;text-align:center;line-height:14px">A</div>
<div class="a " style="left:110px;top:1262px;width:13px;height:12px;background:#555;border:1px solid #333;border-radius:2px"></div>
<div class="a " style="left:136px;top:1262px;width:13px;height:12px;background:#555;border:1px solid #333;border-radius:2px"></div>
<div class="a " style="left:250px;top:1262px;width:13px;height:12px;background:#555;border:1px solid #333;border-radius:2px"></div>
<div class="a " style="left:268px;top:1262px;width:13px;height:12px;background:#555;border:1px solid #333;border-radius:2px"></div>
<div class="a " style="left:286px;top:1262px;width:2149px;height:12px;background:#555;border:1px solid #3a3a3a;border-radius:2px"></div>
<div class="a " style="left:2441px;top:1262px;width:13px;height:12px;background:#555;border:1px solid #333;border-radius:2px"></div>
<svg style="left:2458px;top:1264px" width="10" height="6"><path d="M1 1 H9 L5 5Z" fill="#111"/></svg>
<div class="a " style="left:13px;top:1280px;width:281px;height:31px;background:#111;border-radius:4px"></div>
<div class="t " style="left:21px;top:1288px;font-size:22.5px;color:#f8f8f8;letter-spacing:0.2px;-webkit-text-stroke:0.4px #f8f8f8">23:34:22:17</div>
<div class="t " style="left:160px;top:1288px;font-size:11px;color:#ff6060;font-weight:bold">-1</div>
<div class="t " style="left:199px;top:1293px;font-size:12px;font-weight:bold;color:#f0f0f0">STOPPED</div>
<div class="a " style="left:305px;top:1280px;width:37px;height:31px;background:#1c1c1c;border:1px solid #0a0a0a"></div>
<svg style="left:305px;top:1282px" width="37" height="31"><g transform="translate(18.5 16) scale(1.18) translate(-18.5 -16)"><path d="M17 8 L7 15.5 L17 23 Z M28 8 L18 15.5 L28 23 Z" fill="#888"/></g></svg>
<div class="a " style="left:345px;top:1280px;width:37px;height:31px;background:#1c1c1c;border:1px solid #0a0a0a"></div>
<svg style="left:345px;top:1282px" width="37" height="31"><g transform="translate(18.5 16) scale(1.18) translate(-18.5 -16)"><path d="M6 8 V23 M9 8 V23" stroke="#888" stroke-width="2"/><path d="M12 8 L24 15.5 L12 23 Z" fill="#888"/><path d="M27 8 V23" stroke="#888" stroke-width="2"/></g></svg>
<div class="a " style="left:385px;top:1280px;width:37px;height:31px;background:#1c1c1c;border:1px solid #0a0a0a"></div>
<svg style="left:385px;top:1282px" width="37" height="31"><g transform="translate(18.5 16) scale(1.18) translate(-18.5 -16)"><path d="M12 8 L25 15.5 L12 23 Z" fill="#888"/></g></svg>
<div class="a " style="left:425px;top:1280px;width:37px;height:31px;background:#1c1c1c;border:1px solid #0a0a0a"></div>
<svg style="left:425px;top:1282px" width="37" height="31"><g transform="translate(18.5 16) scale(1.18) translate(-18.5 -16)"><circle cx="18.5" cy="16" r="8.5" fill="#ff7a7a"/></g></svg>
<div class="a " style="left:465px;top:1280px;width:37px;height:31px;background:#1c1c1c;border:1px solid #0a0a0a"></div>
<svg style="left:465px;top:1282px" width="37" height="31"><g transform="translate(18.5 16) scale(1.18) translate(-18.5 -16)"><path d="M8 8 L18 15.5 L8 23 Z M19 8 L29 15.5 L19 23 Z" fill="#888"/></g></svg>
<div class="a " style="left:510px;top:1280px;width:37px;height:31px;background:#1c1c1c;border:1px solid #0a0a0a"></div>
<svg style="left:510px;top:1282px" width="37" height="31"><g transform="translate(18.5 16) scale(1.18) translate(-18.5 -16)"><rect x="11" y="9" width="14" height="14" fill="#888"/></g></svg>
<div class="a " style="left:555px;top:1280px;width:37px;height:31px;background:#1c1c1c;border:1px solid #0a0a0a"></div>
<svg style="left:555px;top:1282px" width="37" height="31"><g transform="translate(18.5 16) scale(1.18) translate(-18.5 -16)"><path d="M10 17 A8 8 0 0 1 24 10 M26 15 A8 8 0 0 1 12 22" fill="none" stroke="#888" stroke-width="2.5"/><path d="M21 6 L26 10 L21 13Z M15 19 L10 22 L15 26Z" fill="#888"/></g></svg>
<div class="a " style="left:763px;top:1280px;width:37px;height:31px;background:#1c1c1c;border:1px solid #0a0a0a"></div>
<svg style="left:763px;top:1282px" width="37" height="31"><g transform="translate(18.5 16) scale(1.18) translate(-18.5 -16)"><path d="M6 8 L16 15.5 L6 23 Z M17 8 L27 15.5 L17 23 Z" fill="#888"/><path d="M18 10 V21 M13 15.5 H23" stroke="#1c1c1c" stroke-width="1"/></g></svg>
<div class="a " style="left:805px;top:1280px;width:37px;height:31px;background:#1c1c1c;border:1px solid #0a0a0a"></div>
<svg style="left:805px;top:1282px" width="37" height="31"><g transform="translate(18.5 16) scale(1.18) translate(-18.5 -16)"><circle cx="18" cy="16" r="8" fill="#999"/><circle cx="16" cy="13" r="2.5" fill="#1c1c1c"/></g></svg>
<svg style="left:606px;top:1289px" width="142" height="22"><path d="M4 11 H138" stroke="#111" stroke-width="3"/><line x1="6" y1="3" x2="6" y2="8" stroke="#777"/><line x1="6" y1="15" x2="6" y2="20" stroke="#777"/><line x1="16" y1="3" x2="16" y2="6" stroke="#777"/><line x1="16" y1="15" x2="16" y2="18" stroke="#777"/><line x1="26" y1="3" x2="26" y2="6" stroke="#777"/><line x1="26" y1="15" x2="26" y2="18" stroke="#777"/><line x1="36" y1="3" x2="36" y2="6" stroke="#777"/><line x1="36" y1="15" x2="36" y2="18" stroke="#777"/><line x1="46" y1="3" x2="46" y2="8" stroke="#777"/><line x1="46" y1="15" x2="46" y2="20" stroke="#777"/><line x1="56" y1="3" x2="56" y2="6" stroke="#777"/><line x1="56" y1="15" x2="56" y2="18" stroke="#777"/><line x1="66" y1="3" x2="66" y2="6" stroke="#777"/><line x1="66" y1="15" x2="66" y2="18" stroke="#777"/><line x1="76" y1="3" x2="76" y2="6" stroke="#777"/><line x1="76" y1="15" x2="76" y2="18" stroke="#777"/><line x1="86" y1="3" x2="86" y2="8" stroke="#777"/><line x1="86" y1="15" x2="86" y2="20" stroke="#777"/><line x1="96" y1="3" x2="96" y2="6" stroke="#777"/><line x1="96" y1="15" x2="96" y2="18" stroke="#777"/><line x1="106" y1="3" x2="106" y2="6" stroke="#777"/><line x1="106" y1="15" x2="106" y2="18" stroke="#777"/><line x1="116" y1="3" x2="116" y2="6" stroke="#777"/><line x1="116" y1="15" x2="116" y2="18" stroke="#777"/><line x1="126" y1="3" x2="126" y2="8" stroke="#777"/><line x1="126" y1="15" x2="126" y2="20" stroke="#777"/><line x1="136" y1="3" x2="136" y2="6" stroke="#777"/><line x1="136" y1="15" x2="136" y2="18" stroke="#777"/><rect x="62" y="3" width="9" height="17" rx="2" fill="#6a6a6a" stroke="#444"/><rect x="73" y="3" width="9" height="17" rx="2" fill="#6a6a6a" stroke="#444"/></svg>
<div class="a " style="left:860px;top:1290px;width:61px;height:23px;background:#111"></div>
<div class="t " style="left:897px;top:1296px;font-size:13px;color:#ddd">Inte</div>
<div class="a " style="left:936px;top:1280px;width:37px;height:31px;background:#1c1c1c;border:1px solid #0a0a0a"></div>
<div class="t " style="left:937px;top:1283px;font-size:13.5px;color:#a8a8a8"><div style="width:35px;text-align:center">Off</div></div>
<svg style="left:936px;top:1280px" width="37" height="31"><path d="M7 20.5 H29 V23.5 L24.5 25 L26 29 L22.5 31.5 L18 27.2 L13.5 31.5 L10 29 L11.5 25 L7 23.5 Z" fill="#a8a8a8"/></svg>
<div class="a " style="left:976px;top:1280px;width:37px;height:31px;background:#1c1c1c;border:1px solid #0a0a0a"></div>
<div class="t " style="left:977px;top:1283px;font-size:13.5px;color:#a8a8a8"><div style="width:35px;text-align:center">Play</div></div>
<svg style="left:976px;top:1280px" width="37" height="31"><path d="M7 20.5 H29 V23.5 L24.5 25 L26 29 L22.5 31.5 L18 27.2 L13.5 31.5 L10 29 L11.5 25 L7 23.5 Z" fill="#a8a8a8"/></svg>
<div class="a " style="left:1016px;top:1280px;width:37px;height:31px;background:#1c1c1c;border:1px solid #0a0a0a"></div>
<div class="t " style="left:1017px;top:1283px;font-size:13.5px;color:#ff5a5a"><div style="width:35px;text-align:center">Wrt</div></div>
<svg style="left:1016px;top:1280px" width="37" height="31"><path d="M7 20.5 H29 V23.5 L24.5 25 L26 29 L22.5 31.5 L18 27.2 L13.5 31.5 L10 29 L11.5 25 L7 23.5 Z" fill="#ff5a5a"/></svg>
<div class="a " style="left:1056px;top:1280px;width:37px;height:31px;background:#1c1c1c;border:1px solid #0a0a0a"></div>
<div class="t " style="left:1057px;top:1283px;font-size:13.5px;color:#a8a8a8"><div style="width:35px;text-align:center">Prw</div></div>
<svg style="left:1056px;top:1280px" width="37" height="31" overflow="hidden"><g><g transform="translate(13 28) scale(0.45)"><rect x="-13" y="-9" width="26" height="18.5" rx="3" fill="#a8a8a8"/><rect x="-8" y="-11" width="16" height="4" rx="1.5" fill="#a8a8a8"/><rect x="-11" y="-7" width="4" height="1.5" fill="#1c1c1c"/><circle cx="1" cy="0.5" r="6" fill="none" stroke="#1c1c1c" stroke-width="1.6"/></g><g transform="translate(22 25) scale(0.5)"><rect x="-13" y="-9" width="26" height="18.5" rx="3" fill="#a8a8a8"/><rect x="-8" y="-11" width="16" height="4" rx="1.5" fill="#a8a8a8"/><rect x="-11" y="-7" width="4" height="1.5" fill="#1c1c1c"/><circle cx="1" cy="0.5" r="6" fill="none" stroke="#1c1c1c" stroke-width="1.6"/></g></g></svg>
<div class="a " style="left:1096px;top:1280px;width:37px;height:31px;background:#1c1c1c;border:1px solid #0a0a0a"></div>
<svg style="left:1096px;top:1280px" width="37" height="31"><g transform="translate(19 20) scale(1.0)"><rect x="-13" y="-9" width="26" height="18.5" rx="3" fill="#a8a8a8"/><rect x="-8" y="-11" width="16" height="4" rx="1.5" fill="#a8a8a8"/><rect x="-11" y="-7" width="4" height="1.5" fill="#1c1c1c"/><circle cx="1" cy="0.5" r="6" fill="none" stroke="#1c1c1c" stroke-width="1.6"/></g></svg>
<div class="a " style="left:1136px;top:1280px;width:37px;height:31px;background:#1c1c1c;border:1px solid #0a0a0a"></div>
<svg style="left:1136px;top:1280px" width="37" height="31"><g transform="translate(13 26) scale(0.6)"><rect x="-13" y="-9" width="26" height="18.5" rx="3" fill="#a8a8a8"/><rect x="-8" y="-11" width="16" height="4" rx="1.5" fill="#a8a8a8"/><rect x="-11" y="-7" width="4" height="1.5" fill="#1c1c1c"/><circle cx="1" cy="0.5" r="6" fill="none" stroke="#1c1c1c" stroke-width="1.6"/></g><g transform="translate(23 16) scale(0.68)"><rect x="-13" y="-9" width="26" height="18.5" rx="3" fill="#a8a8a8"/><rect x="-8" y="-11" width="16" height="4" rx="1.5" fill="#a8a8a8"/><rect x="-11" y="-7" width="4" height="1.5" fill="#1c1c1c"/><circle cx="1" cy="0.5" r="6" fill="none" stroke="#1c1c1c" stroke-width="1.6"/></g></svg>
<div class="a " style="left:1190px;top:1288px;width:106px;height:23px;background:#111;border-radius:3px 0 0 3px"></div>
<div class="t " style="left:1205px;top:1295px;font-size:13px;color:#ddd;width:90px;overflow:hidden">Fader Alignment</div>
<div class="a " style="left:0px;top:1313px;width:3430px;height:7px;background:#b4b4b4"></div>
<div class="t " style="left:1980px;top:1316px;font-size:13px;color:#1a1a1a">Free Disk: 12.38 GB</div>
<div class="t " style="left:2152px;top:1316px;font-size:13px;color:#1a1a1a">Node: Port 7</div>
<div class="t " style="left:2417px;top:1316px;font-size:13px;color:#1a1a1a">CPU: 0%</div>
<div class="t " style="left:2645px;top:1316px;font-size:13px;color:#1a1a1a">1473 Smpl/30.7</div>
<div class="t " style="left:2835px;top:1316px;font-size:13px;color:#1a1a1a">TC: 25 fps</div>
<div class="t " style="left:3165px;top:1316px;font-size:13px;color:#1a1a1a">Audio: 48 kHz</div>
<div class="a " style="left:2475px;top:68px;width:4px;height:1208px;background:#6a6a6a"></div>
<div class="t " style="left:2483px;top:76px;font-size:15px;color:#1a1a1a">Fade Editor</div>
<svg style="left:3395px;top:75px" width="34" height="14"><path d="M3 2 H9 M4 2 V8 M8 2 V8 M2 8 H10 M6 8 V12" stroke="#111" stroke-width="1.5" fill="none"/><path d="M19 3 L27 11 M27 3 L19 11" stroke="#111" stroke-width="1.8"/></svg>
<svg style="left:0;top:0" width="3430" height="140"><g fill="none" stroke="#1a1a1a" stroke-width="1.3" stroke-linecap="butt"><circle cx="2502" cy="119.2" r="11.3" stroke-width="1.2"/><circle cx="2497.4" cy="116.5" r="1.5" fill="#1a1a1a" stroke="none"/><circle cx="2506.5" cy="116.5" r="1.5" fill="#1a1a1a" stroke="none"/><path d="M2495.4 122.6 Q2502 127.6 2508.6 122.6" stroke-width="1.2"/><path d="M2526 110 L2544 128 M2544 110 L2526 128" stroke-width="1.1"/><path d="M2566.2 117 A9 9 0 1 1 2575 127.5" stroke-width="1.2"/><path d="M2563.5 113 L2566 118 L2570.5 115.5" stroke-width="1.2"/><path d="M2603 118.4 H2622 M2609 114 L2603.5 118.4 L2609 123" stroke-width="1.3"/><path d="M2636 118.4 H2655 M2649 114 L2654.5 118.4 L2649 123" stroke-width="1.3"/><circle cx="2682.8" cy="116.8" r="8.8" stroke-width="1.2"/><path d="M2689.3 123.3 L2697 131" stroke-width="1.2"/><circle cx="2715.5" cy="116.7" r="8.6" stroke-width="1.2"/><path d="M2722 123 L2730 131 M2710 116.6 H2721 M2715.4 111.3 V121.8" stroke-width="1.2"/><circle cx="2748.5" cy="116.6" r="8.6" stroke-width="1.2"/><path d="M2755 123 L2763 131 M2742 116.3 H2754" stroke-width="1.2"/><path d="M2781 129.5 Q2784 119 2799 111.3 M2799 129.5 Q2796 119 2781 111.3" stroke-width="1.2"/><path d="M2789.4 109 V129" stroke-width="1.2"/><g stroke-dasharray="3 2"></g><path d="M2820.3 108 V128.5 M2825.4 108 V128.5 M2831.4 108 V128.5 M2836.5 108 V128.5" stroke-width="1.4"/><circle cx="2820.5" cy="115.7" r="1.8" fill="#b4b4b4" stroke-width="1.1"/><circle cx="2826" cy="120.6" r="1.8" fill="#b4b4b4" stroke-width="1.1"/><circle cx="2831.5" cy="115.7" r="1.8" fill="#b4b4b4" stroke-width="1.1"/><circle cx="2837" cy="124" r="1.8" fill="#b4b4b4" stroke-width="1.1"/><path d="M2853 109.5 H2869 M2853 113.5 H2869 M2853 116.5 H2869 M2853 120.5 H2869 M2853 124.5 H2869 M2853 127.5 H2869" stroke-width="1.2"/><path d="M2888 108.6 H2899.5 L2905.5 117.6 H2888 M2888 112.4 H2894 L2899.5 121.6 M2912.6 120.2 H2900 L2896 129.6 H2912.6 M2899.6 124.3 H2912 M2908 121.5 L2912 124.3 L2908 127.1" stroke-width="1.2"/><path d="M2921 108.6 H2932.5 L2938.5 117.6 H2921 M2921 112.4 H2927 L2932.5 121.6 M2945.6 120.2 H2933 L2929 129.6 H2945.6 M2932.6 124.3 H2945 M2941 121.5 L2945 124.3 L2941 127.1" stroke-width="1.2"/><path d="M2931 107.5 V129.6" stroke-width="1.2"/><path d="M2960 108.6 H2971.8 L2977.8 117.6 H2960 M2960 112.4 H2971 M2967 109.60000000000001 L2971 112.4 L2967 115.2" stroke-width="1.2"/><path d="M2993.6 108.6 H3009 Q3012 108.6 3012 111.5 V114.7 Q3012 117.6 3009 117.6 H2993.6 M2993.6 112.4 H3005 M3001 109.60000000000001 L3005 112.4 L3001 115.2" stroke-width="1.2"/><path d="M3026 108.6 H3032 L3037.6 117.6 H3026.5 M3026 112.4 H3048 M3044 109.60000000000001 L3048 112.4 L3044 115.2 M3050.6 120.2 H3038 L3034 129.6 H3050.6" stroke-width="1.2"/><path d="M3059 108.6 H3070.7 L3076.7 117.6 H3059 M3059 112.4 H3069 M3065 109.60000000000001 L3069 112.4 L3065 115.2 M3070 107.5 V130" stroke-width="1.2"/><path d="M3092.5 108.6 H3108 Q3111 108.6 3111 111.5 V114.7 Q3111 117.6 3108 117.6 H3092.5 M3092.5 112.4 H3104 M3100 109.60000000000001 L3104 112.4 L3100 115.2 M3106.6 107.5 V130" stroke-width="1.2"/><path d="M3126 108.6 H3132 Q3136 110 3136 113 Q3136 116 3132 117.6 H3126 M3131.3 107.5 V130 M3133 112.4 H3148 M3144 109.60000000000001 L3148 112.4 L3144 115.2" stroke-width="1.2"/><path d="M3158 108.6 H3183 M3158 112.4 H3182.5 M3178.5 109.60000000000001 L3182.5 112.4 L3178.5 115.2" stroke-width="1.2"/><path d="M3158.5 117.8 H3183" stroke-width="1.6"/><path d="M3222 120.2 H3209 L3205 129.6 H3222 M3207 124.3 H3218.5 M3214.5 121.5 L3218.5 124.3 L3214.5 127.1" stroke-width="1.2"/><path d="M3255 120.2 H3241 Q3238 121 3238 125 Q3238 129 3241 129.6 H3255 M3239 124.3 H3249.5 M3245.5 121.5 L3249.5 124.3 L3245.5 127.1" stroke-width="1.2"/><path d="M3263.6 108.6 H3276 L3280.4 117.6 H3263.6 M3263 124.3 H3274.5 M3270.5 121.5 L3274.5 124.3 L3270.5 127.1 M3288 120.2 H3281 L3277 129.6 H3288" stroke-width="1.2"/><path d="M3308.7 106.4 V129.6 M3321 120.2 H3308.7 M3308.7 122 L3304 129.6 H3321 M3308.7 124.3 H3319 M3315 121.5 L3319 124.3 L3315 127.1" stroke-width="1.2"/><path d="M3341.3 106.4 V129.6 M3354 120.2 H3340 Q3337 121 3337 125 Q3337 129 3340 129.6 H3354 M3341.3 124.3 H3353 M3349 121.5 L3353 124.3 L3349 127.1" stroke-width="1.2"/><path d="M3380.4 106.4 V129.6 M3387 120.2 H3380 Q3378 121 3378 125 Q3378 129 3380 129.6 H3387 M3365 124.3 H3379 M3375 121.5 L3379 124.3 L3375 127.1" stroke-width="1.2"/><path d="M3395 120.2 H3420 M3395 129.6 H3420 M3395 124.3 H3419.5 M3415.5 121.5 L3419.5 124.3 L3415.5 127.1" stroke-width="1.2"/></g></svg>
<div class="a " style="left:2478px;top:138px;width:931px;height:1px;background:#5a5a5a"></div>
<svg style="left:2478px;top:139px" width="952" height="33"><line x1="157.5" y1="1" x2="157.5" y2="8" stroke="#1a1a1a"/><line x1="209.5" y1="1" x2="209.5" y2="8" stroke="#1a1a1a"/><line x1="262.5" y1="1" x2="262.5" y2="31" stroke="#1a1a1a"/><line x1="315.5" y1="1" x2="315.5" y2="8" stroke="#1a1a1a"/><line x1="367.5" y1="1" x2="367.5" y2="8" stroke="#1a1a1a"/><line x1="420.5" y1="1" x2="420.5" y2="31" stroke="#1a1a1a"/><line x1="473.5" y1="1" x2="473.5" y2="8" stroke="#1a1a1a"/><line x1="525.5" y1="1" x2="525.5" y2="8" stroke="#1a1a1a"/><line x1="578.5" y1="1" x2="578.5" y2="31" stroke="#1a1a1a"/><line x1="631.5" y1="1" x2="631.5" y2="8" stroke="#1a1a1a"/><line x1="683.5" y1="1" x2="683.5" y2="8" stroke="#1a1a1a"/><line x1="736.5" y1="1" x2="736.5" y2="31" stroke="#1a1a1a"/><line x1="789.5" y1="1" x2="789.5" y2="8" stroke="#1a1a1a"/><line x1="841.5" y1="1" x2="841.5" y2="8" stroke="#1a1a1a"/><line x1="894.5" y1="1" x2="894.5" y2="31" stroke="#1a1a1a"/></svg>
<div class="a" style="left:2591px;top:139px;width:818px;height:33px;overflow:hidden"><div class="t" style="left:-7px;top:9px;font-size:13px;color:#1a1a1a">23:33:45:00</div><div class="t" style="left:151px;top:9px;font-size:13px;color:#1a1a1a">23:34:00:00</div><div class="t" style="left:309px;top:9px;font-size:13px;color:#1a1a1a">23:34:15:00</div><div class="t" style="left:467px;top:9px;font-size:13px;color:#1a1a1a">23:34:30:00</div><div class="t" style="left:625px;top:9px;font-size:13px;color:#1a1a1a">23:34:45:00</div><div class="t" style="left:783px;top:9px;font-size:13px;color:#1a1a1a">23:35:00:00</div></div>
<div class="a " style="left:2478px;top:170px;width:113px;height:2px;background:#5a5a5a"></div>
<div class="a " style="left:2591px;top:172px;width:428px;height:514px;background:#ff8000"></div>
<div class="a " style="left:3019px;top:172px;width:390px;height:514px;background:#626262"></div>
<div class="a " style="left:2591px;top:686px;width:209px;height:516px;background:#626262"></div>
<div class="a " style="left:2800px;top:686px;width:609px;height:516px;background:#ff8000"></div>
<div class="a " style="left:2591px;top:1202px;width:818px;height:3px;background:#555"></div>
<svg style="left:0;top:0" width="3430" height="1320"><path d="M2591 176 C2640 232 2700 320 2788 416 C2860 492 2920 540 2951 574 C2985 610 3005 640 3019 686 H2591 Z" fill="#ffa852"/><path d="M2800 1202 C2805 1160 2815 1120 2837 1090 C2870 1040 2890 1010 2904 990 C2940 930 2960 860 2970 830 C2980 790 2990 720 2996 686 V1202 Z" fill="#ffa852"/><path d="M2591.0 427.3 L2592.5 426.2 L2594.0 427.7 L2595.5 426.7 L2597.0 427.7 L2598.5 428.9 L2600.0 428.1 L2601.5 427.8 L2603.0 428.6 L2604.5 427.1 L2606.0 426.9 L2607.5 428.3 L2609.0 426.8 L2610.5 425.1 L2612.0 427.3 L2613.5 427.2 L2615.0 426.0 L2616.5 426.4 L2618.0 427.1 L2619.5 425.1 L2621.0 425.8 L2622.5 425.9 L2624.0 426.9 L2625.5 427.6 L2627.0 428.7 L2628.5 427.7 L2630.0 427.6 L2631.5 428.3 L2633.0 428.0 L2634.5 426.5 L2636.0 428.3 L2637.5 426.2 L2639.0 426.4 L2640.5 425.9 L2642.0 426.9 L2643.5 425.6 L2645.0 427.0 L2646.5 426.6 L2648.0 426.8 L2649.5 427.2 L2651.0 428.2 L2652.5 426.9 L2654.0 427.5 L2655.5 427.4 L2657.0 428.4 L2658.5 427.5 L2660.0 427.5 L2661.5 428.1 L2663.0 426.7 L2664.5 428.2 L2666.0 425.9 L2667.5 425.3 L2669.0 426.9 L2670.5 426.1 L2672.0 427.4 L2673.5 424.5 L2675.0 425.2 L2676.5 427.1 L2678.0 426.7 L2679.5 428.3 L2681.0 426.8 L2682.5 427.2 L2684.0 428.2 L2685.5 427.7 L2687.0 428.2 L2688.5 427.6 L2690.0 427.5 L2691.5 428.5 L2693.0 426.7 L2694.5 426.4 L2696.0 426.6 L2697.5 424.6 L2699.0 427.3 L2700.5 427.5 L2702.0 427.2 L2703.5 425.6 L2705.0 426.3 L2706.5 426.8 L2708.0 428.0 L2709.5 427.9 L2711.0 427.8 L2712.5 427.8 L2714.0 427.8 L2715.5 429.0 L2717.0 428.8 L2718.5 428.4 L2720.0 428.0 L2721.5 427.5 L2723.0 426.9 L2724.5 425.0 L2726.0 426.0 L2727.5 424.2 L2729.0 425.4 L2730.5 425.1 L2732.0 426.8 L2733.5 426.4 L2735.0 428.0 L2736.5 426.2 L2738.0 428.0 L2739.5 428.7 L2741.0 428.8 L2742.5 427.9 L2744.0 428.0 L2745.5 427.8 L2747.0 427.7 L2748.5 427.6 L2750.0 428.1 L2751.5 427.3 L2753.0 425.2 L2754.5 426.1 L2756.0 426.2 L2757.5 425.3 L2759.0 427.4 L2760.5 426.2 L2762.0 425.4 L2763.5 426.6 L2765.0 427.0 L2766.5 427.3 L2768.0 428.4 L2769.5 428.4 L2771.0 427.8 L2772.5 427.4 L2774.0 428.3 L2775.5 427.9 L2777.0 427.2 L2778.5 427.4 L2780.0 425.8 L2781.5 427.4 L2783.0 425.2 L2784.5 426.4 L2786.0 425.2 L2787.5 424.4 L2789.0 427.0 L2790.5 427.6 L2792.0 427.8 L2793.5 427.9 L2795.0 426.9 L2796.5 428.1 L2798.0 428.5 L2799.5 428.4 L2801.0 428.6 L2802.5 428.8 L2804.0 426.7 L2805.5 428.4 L2807.0 428.1 L2808.5 425.8 L2810.0 427.8 L2811.5 427.3 L2813.0 426.0 L2814.5 426.3 L2816.0 425.0 L2817.5 426.2 L2819.0 427.6 L2820.5 426.9 L2822.0 426.8 L2823.5 427.0 L2825.0 428.9 L2826.5 428.9 L2828.0 427.9 L2829.5 428.6 L2831.0 427.3 L2832.5 427.3 L2834.0 426.4 L2835.5 427.4 L2837.0 427.0 L2838.5 424.8 L2840.0 427.4 L2841.5 425.2 L2843.0 426.7 L2844.5 427.6 L2846.0 425.8 L2847.5 427.7 L2849.0 426.1 L2850.5 427.7 L2852.0 427.4 L2853.5 428.8 L2855.0 428.7 L2856.5 428.5 L2858.0 427.9 L2859.5 427.5 L2861.0 428.2 L2862.5 426.3 L2864.0 426.2 L2865.5 425.5 L2867.0 425.9 L2868.5 424.2 L2870.0 424.2 L2871.5 424.8 L2873.0 426.6 L2874.5 426.1 L2876.0 426.4 L2877.5 426.1 L2879.0 426.8 L2880.5 427.0 L2882.0 427.7 L2883.5 427.7 L2885.0 428.9 L2886.5 428.6 L2888.0 427.2 L2889.5 428.2 L2891.0 427.2 L2892.5 428.0 L2894.0 427.2 L2895.5 424.5 L2897.0 424.4 L2898.5 427.2 L2900.0 426.2 L2901.5 425.2 L2903.0 426.0 L2904.5 427.0 L2906.0 427.3 L2907.5 427.6 L2909.0 428.8 L2910.5 428.0 L2912.0 427.9 L2913.5 427.4 L2915.0 428.2 L2916.5 427.4 L2918.0 427.2 L2919.5 427.8 L2921.0 425.9 L2922.5 426.3 L2924.0 426.4 L2925.5 425.8 L2927.0 426.2 L2928.5 425.6 L2930.0 425.0 L2931.5 426.9 L2933.0 426.2 L2934.5 426.3 L2936.0 427.0 L2937.5 428.7 L2939.0 428.0 L2940.5 427.8 L2942.0 427.9 L2943.5 428.5 L2945.0 427.7 L2946.5 428.0 L2948.0 427.4 L2949.5 426.9 L2951.0 427.4 L2952.5 425.3 L2954.0 427.2 L2955.5 425.3 L2957.0 425.2 L2958.5 426.4 L2960.0 425.2 L2961.5 426.6 L2963.0 427.7 L2964.5 427.2 L2966.0 428.1 L2967.5 428.6 L2969.0 429.0 L2970.5 428.2 L2972.0 427.8 L2973.5 428.5 L2975.0 428.0 L2976.5 427.3 L2978.0 427.3 L2979.5 427.2 L2981.0 425.5 L2982.5 426.8 L2984.0 425.7 L2985.5 426.3 L2987.0 427.2 L2988.5 426.5 L2990.0 427.7 L2991.5 428.3 L2993.0 427.6 L2994.5 428.0 L2996.0 429.0 L2997.5 428.5 L2999.0 428.4 L3000.5 428.7 L3002.0 426.8 L3003.5 427.0 L3005.0 425.6 L3006.5 425.0 L3008.0 425.4 L3009.5 427.1 L3011.0 425.2 L3012.5 426.2 L3014.0 427.5 L3015.5 427.6 L3017.0 425.8 L3018.5 428.0 L3018.5 432.4 L3017.0 434.0 L3015.5 433.1 L3014.0 433.2 L3012.5 435.2 L3011.0 434.8 L3009.5 433.6 L3008.0 434.0 L3006.5 434.4 L3005.0 432.1 L3003.5 432.0 L3002.0 433.0 L3000.5 432.1 L2999.0 432.3 L2997.5 432.4 L2996.0 431.5 L2994.5 432.2 L2993.0 432.8 L2991.5 431.9 L2990.0 433.2 L2988.5 432.2 L2987.0 434.4 L2985.5 434.9 L2984.0 432.8 L2982.5 432.8 L2981.0 435.3 L2979.5 432.7 L2978.0 432.2 L2976.5 432.7 L2975.0 433.4 L2973.5 432.3 L2972.0 432.2 L2970.5 431.4 L2969.0 432.0 L2967.5 432.2 L2966.0 432.0 L2964.5 432.5 L2963.0 432.3 L2961.5 433.4 L2960.0 433.1 L2958.5 433.8 L2957.0 434.4 L2955.5 432.5 L2954.0 435.6 L2952.5 433.8 L2951.0 432.4 L2949.5 432.6 L2948.0 433.5 L2946.5 433.1 L2945.0 432.7 L2943.5 431.5 L2942.0 431.5 L2940.5 431.4 L2939.0 431.3 L2937.5 431.7 L2936.0 433.1 L2934.5 432.0 L2933.0 433.9 L2931.5 432.7 L2930.0 434.7 L2928.5 434.7 L2927.0 434.7 L2925.5 434.0 L2924.0 435.2 L2922.5 432.3 L2921.0 434.3 L2919.5 432.3 L2918.0 433.7 L2916.5 432.4 L2915.0 431.1 L2913.5 431.6 L2912.0 432.1 L2910.5 432.3 L2909.0 432.6 L2907.5 432.3 L2906.0 432.2 L2904.5 432.8 L2903.0 432.8 L2901.5 434.7 L2900.0 434.6 L2898.5 433.3 L2897.0 434.2 L2895.5 434.1 L2894.0 432.5 L2892.5 433.8 L2891.0 433.2 L2889.5 431.5 L2888.0 431.9 L2886.5 432.0 L2885.0 431.6 L2883.5 431.5 L2882.0 432.3 L2880.5 432.2 L2879.0 431.8 L2877.5 432.9 L2876.0 432.3 L2874.5 434.4 L2873.0 434.3 L2871.5 432.4 L2870.0 435.8 L2868.5 433.8 L2867.0 435.4 L2865.5 434.9 L2864.0 432.5 L2862.5 433.9 L2861.0 433.3 L2859.5 432.1 L2858.0 431.4 L2856.5 431.8 L2855.0 431.1 L2853.5 432.4 L2852.0 432.2 L2850.5 432.9 L2849.0 433.0 L2847.5 432.2 L2846.0 434.1 L2844.5 433.9 L2843.0 432.6 L2841.5 433.1 L2840.0 434.2 L2838.5 432.5 L2837.0 434.0 L2835.5 432.8 L2834.0 432.4 L2832.5 432.4 L2831.0 432.3 L2829.5 431.2 L2828.0 432.2 L2826.5 432.4 L2825.0 432.1 L2823.5 432.9 L2822.0 433.3 L2820.5 432.2 L2819.0 433.1 L2817.5 432.3 L2816.0 435.1 L2814.5 432.9 L2813.0 435.6 L2811.5 433.4 L2810.0 434.0 L2808.5 432.8 L2807.0 433.5 L2805.5 432.8 L2804.0 432.8 L2802.5 432.6 L2801.0 432.6 L2799.5 431.4 L2798.0 431.3 L2796.5 432.2 L2795.0 432.2 L2793.5 432.3 L2792.0 433.3 L2790.5 433.9 L2789.0 434.9 L2787.5 433.4 L2786.0 433.3 L2784.5 434.7 L2783.0 433.1 L2781.5 435.3 L2780.0 433.4 L2778.5 434.3 L2777.0 431.7 L2775.5 431.6 L2774.0 431.7 L2772.5 431.1 L2771.0 432.4 L2769.5 432.0 L2768.0 432.7 L2766.5 432.6 L2765.0 433.5 L2763.5 433.7 L2762.0 434.3 L2760.5 434.5 L2759.0 434.0 L2757.5 435.8 L2756.0 434.1 L2754.5 433.1 L2753.0 434.5 L2751.5 434.1 L2750.0 432.9 L2748.5 432.0 L2747.0 432.1 L2745.5 431.9 L2744.0 431.1 L2742.5 431.7 L2741.0 432.3 L2739.5 431.3 L2738.0 433.3 L2736.5 432.4 L2735.0 434.0 L2733.5 433.7 L2732.0 434.5 L2730.5 435.7 L2729.0 434.2 L2727.5 432.7 L2726.0 434.2 L2724.5 433.1 L2723.0 432.8 L2721.5 431.8 L2720.0 433.0 L2718.5 432.6 L2717.0 432.4 L2715.5 431.7 L2714.0 432.2 L2712.5 432.4 L2711.0 431.3 L2709.5 432.8 L2708.0 432.0 L2706.5 432.4 L2705.0 433.0 L2703.5 432.6 L2702.0 435.4 L2700.5 434.0 L2699.0 432.7 L2697.5 432.7 L2696.0 435.2 L2694.5 432.6 L2693.0 433.8 L2691.5 432.7 L2690.0 433.0 L2688.5 431.1 L2687.0 431.4 L2685.5 431.5 L2684.0 432.0 L2682.5 432.3 L2681.0 433.1 L2679.5 432.1 L2678.0 433.9 L2676.5 435.0 L2675.0 433.9 L2673.5 435.8 L2672.0 433.6 L2670.5 433.0 L2669.0 433.2 L2667.5 432.3 L2666.0 433.2 L2664.5 433.6 L2663.0 431.8 L2661.5 431.7 L2660.0 431.9 L2658.5 431.9 L2657.0 432.5 L2655.5 432.7 L2654.0 432.5 L2652.5 432.2 L2651.0 433.7 L2649.5 432.2 L2648.0 434.0 L2646.5 435.4 L2645.0 433.0 L2643.5 434.6 L2642.0 434.5 L2640.5 434.7 L2639.0 433.6 L2637.5 434.6 L2636.0 431.8 L2634.5 432.2 L2633.0 431.9 L2631.5 431.7 L2630.0 432.3 L2628.5 431.3 L2627.0 431.9 L2625.5 432.6 L2624.0 433.1 L2622.5 434.0 L2621.0 432.5 L2619.5 432.9 L2618.0 432.4 L2616.5 434.1 L2615.0 434.4 L2613.5 435.6 L2612.0 434.9 L2610.5 433.1 L2609.0 432.1 L2607.5 432.4 L2606.0 432.6 L2604.5 432.5 L2603.0 431.1 L2601.5 431.3 L2600.0 431.1 L2598.5 431.8 L2597.0 431.7 L2595.5 432.6 L2594.0 433.8 L2592.5 433.4 L2591.0 434.4Z" fill="#ffe0c0" stroke="#1a0e04" stroke-width="1.4"/><path d="M3019.0 426.1 L3020.5 428.6 L3022.0 428.5 L3023.5 427.9 L3025.0 427.7 L3026.5 427.5 L3028.0 427.9 L3029.5 427.4 L3031.0 426.9 L3032.5 426.0 L3034.0 427.2 L3035.5 425.1 L3037.0 424.5 L3038.5 424.2 L3040.0 425.1 L3041.5 426.8 L3043.0 426.8 L3044.5 425.1 L3046.0 427.8 L3047.5 426.9 L3049.0 428.6 L3050.5 428.8 L3052.0 428.2 L3053.5 428.4 L3055.0 427.5 L3056.5 428.2 L3058.0 428.1 L3059.5 427.2 L3061.0 426.5 L3062.5 427.8 L3064.0 426.7 L3065.5 426.3 L3067.0 424.2 L3068.5 426.2 L3070.0 424.6 L3071.5 426.0 L3073.0 427.0 L3074.5 427.7 L3076.0 427.3 L3077.5 427.4 L3079.0 427.7 L3080.5 428.3 L3082.0 427.6 L3083.5 427.6 L3085.0 427.9 L3086.5 426.7 L3088.0 427.3 L3089.5 426.5 L3091.0 425.6 L3092.5 425.8 L3094.0 427.6 L3095.5 425.3 L3097.0 427.0 L3098.5 426.2 L3100.0 427.7 L3101.5 427.0 L3103.0 427.7 L3104.5 426.6 L3106.0 428.2 L3107.5 428.1 L3109.0 428.4 L3110.5 427.6 L3112.0 428.9 L3113.5 427.3 L3115.0 428.2 L3116.5 427.5 L3118.0 426.2 L3119.5 427.2 L3121.0 426.9 L3122.5 425.3 L3124.0 424.4 L3125.5 427.4 L3127.0 425.7 L3128.5 426.3 L3130.0 425.9 L3131.5 426.7 L3133.0 426.7 L3134.5 427.7 L3136.0 428.3 L3137.5 427.7 L3139.0 428.4 L3140.5 428.6 L3142.0 427.2 L3143.5 427.8 L3145.0 427.1 L3146.5 427.4 L3148.0 425.3 L3149.5 425.4 L3151.0 424.2 L3152.5 426.1 L3154.0 424.9 L3155.5 425.5 L3157.0 427.4 L3158.5 427.1 L3160.0 427.1 L3161.5 428.3 L3163.0 427.2 L3164.5 428.1 L3166.0 429.0 L3167.5 427.9 L3169.0 427.6 L3170.5 428.6 L3172.0 427.5 L3173.5 426.1 L3175.0 426.4 L3176.5 426.9 L3178.0 424.5 L3179.5 424.4 L3181.0 425.3 L3182.5 426.7 L3184.0 427.6 L3185.5 427.0 L3187.0 427.3 L3188.5 427.3 L3190.0 428.2 L3191.5 428.1 L3193.0 427.6 L3194.5 428.2 L3196.0 427.5 L3197.5 428.8 L3199.0 427.8 L3200.5 428.3 L3202.0 427.5 L3203.5 427.9 L3205.0 425.3 L3206.5 426.1 L3208.0 425.8 L3209.5 426.4 L3211.0 424.4 L3212.5 426.3 L3214.0 427.8 L3215.5 426.0 L3217.0 427.6 L3218.5 428.6 L3220.0 428.5 L3221.5 427.7 L3223.0 428.3 L3224.5 428.0 L3226.0 427.3 L3227.5 428.1 L3229.0 427.0 L3230.5 427.4 L3232.0 426.4 L3233.5 426.5 L3235.0 425.8 L3236.5 426.7 L3238.0 424.8 L3239.5 425.8 L3241.0 425.9 L3242.5 427.3 L3244.0 427.3 L3245.5 427.6 L3247.0 427.5 L3248.5 428.1 L3250.0 427.8 L3251.5 428.1 L3253.0 427.8 L3254.5 427.7 L3256.0 428.2 L3257.5 427.6 L3259.0 427.6 L3260.5 426.7 L3262.0 427.3 L3263.5 425.9 L3265.0 427.2 L3266.5 425.9 L3268.0 427.4 L3269.5 427.0 L3271.0 426.7 L3272.5 426.8 L3274.0 428.1 L3275.5 428.6 L3277.0 428.7 L3278.5 428.1 L3280.0 428.1 L3281.5 428.3 L3283.0 428.4 L3284.5 427.8 L3286.0 427.6 L3287.5 427.8 L3289.0 425.2 L3290.5 424.8 L3292.0 425.8 L3293.5 424.2 L3295.0 426.0 L3296.5 427.5 L3298.0 425.1 L3299.5 427.2 L3301.0 426.3 L3302.5 427.9 L3304.0 428.7 L3305.5 428.4 L3307.0 428.3 L3308.5 429.0 L3310.0 428.5 L3311.5 427.4 L3313.0 428.0 L3314.5 426.6 L3316.0 427.9 L3317.5 427.3 L3319.0 426.5 L3320.5 424.5 L3322.0 424.4 L3323.5 427.6 L3325.0 425.0 L3326.5 425.1 L3328.0 428.0 L3329.5 427.6 L3331.0 426.8 L3332.5 428.1 L3334.0 428.5 L3335.5 428.4 L3337.0 428.0 L3338.5 427.5 L3340.0 428.0 L3341.5 427.9 L3343.0 428.1 L3344.5 427.5 L3346.0 426.8 L3347.5 426.8 L3349.0 426.6 L3350.5 424.3 L3352.0 426.9 L3353.5 426.9 L3355.0 425.0 L3356.5 428.0 L3358.0 426.9 L3359.5 427.7 L3361.0 428.8 L3362.5 427.8 L3364.0 428.3 L3365.5 428.2 L3367.0 428.1 L3368.5 428.2 L3370.0 428.2 L3371.5 427.0 L3373.0 426.5 L3374.5 427.2 L3376.0 425.7 L3377.5 425.2 L3379.0 425.5 L3380.5 426.6 L3382.0 426.5 L3383.5 426.7 L3385.0 427.9 L3386.5 427.2 L3388.0 427.8 L3389.5 427.4 L3391.0 428.5 L3392.5 427.7 L3394.0 428.5 L3395.5 428.3 L3397.0 428.2 L3398.5 426.4 L3400.0 428.1 L3401.5 425.3 L3403.0 426.5 L3404.5 425.1 L3406.0 425.9 L3407.5 424.8 L3409.0 426.2 L3409.0 432.6 L3407.5 433.2 L3406.0 435.9 L3404.5 434.8 L3403.0 434.5 L3401.5 434.2 L3400.0 433.6 L3398.5 432.1 L3397.0 432.7 L3395.5 431.3 L3394.0 431.4 L3392.5 432.3 L3391.0 432.0 L3389.5 431.4 L3388.0 431.9 L3386.5 433.7 L3385.0 432.1 L3383.5 434.6 L3382.0 432.6 L3380.5 435.2 L3379.0 432.5 L3377.5 434.2 L3376.0 434.6 L3374.5 432.5 L3373.0 433.3 L3371.5 432.3 L3370.0 431.6 L3368.5 431.3 L3367.0 431.5 L3365.5 431.2 L3364.0 431.7 L3362.5 432.3 L3361.0 432.5 L3359.5 433.0 L3358.0 431.9 L3356.5 433.2 L3355.0 432.8 L3353.5 435.5 L3352.0 432.9 L3350.5 433.1 L3349.0 433.8 L3347.5 432.5 L3346.0 434.3 L3344.5 433.9 L3343.0 432.4 L3341.5 431.9 L3340.0 432.6 L3338.5 431.9 L3337.0 431.4 L3335.5 431.2 L3334.0 431.7 L3332.5 431.5 L3331.0 431.7 L3329.5 433.8 L3328.0 432.3 L3326.5 433.6 L3325.0 434.1 L3323.5 435.6 L3322.0 435.1 L3320.5 433.3 L3319.0 432.5 L3317.5 432.6 L3316.0 433.1 L3314.5 432.5 L3313.0 432.7 L3311.5 432.3 L3310.0 432.3 L3308.5 431.2 L3307.0 431.3 L3305.5 432.5 L3304.0 432.8 L3302.5 432.9 L3301.0 432.1 L3299.5 433.7 L3298.0 433.4 L3296.5 434.4 L3295.0 433.8 L3293.5 435.7 L3292.0 432.9 L3290.5 434.5 L3289.0 433.6 L3287.5 434.2 L3286.0 432.9 L3284.5 431.4 L3283.0 432.6 L3281.5 432.2 L3280.0 431.5 L3278.5 432.5 L3277.0 432.5 L3275.5 431.5 L3274.0 433.5 L3272.5 432.3 L3271.0 434.0 L3269.5 433.6 L3268.0 434.0 L3266.5 433.0 L3265.0 433.7 L3263.5 432.9 L3262.0 435.3 L3260.5 434.4 L3259.0 431.8 L3257.5 433.0 L3256.0 431.6 L3254.5 432.4 L3253.0 431.2 L3251.5 431.5 L3250.0 431.1 L3248.5 431.4 L3247.0 431.8 L3245.5 433.8 L3244.0 433.9 L3242.5 433.7 L3241.0 434.2 L3239.5 434.7 L3238.0 433.2 L3236.5 435.5 L3235.0 435.1 L3233.5 435.1 L3232.0 432.5 L3230.5 432.8 L3229.0 433.6 L3227.5 431.7 L3226.0 432.1 L3224.5 431.1 L3223.0 432.0 L3221.5 431.4 L3220.0 432.0 L3218.5 431.5 L3217.0 432.3 L3215.5 433.6 L3214.0 434.1 L3212.5 434.3 L3211.0 434.4 L3209.5 433.8 L3208.0 432.6 L3206.5 435.0 L3205.0 432.5 L3203.5 434.8 L3202.0 432.0 L3200.5 432.0 L3199.0 431.7 L3197.5 432.7 L3196.0 431.6 L3194.5 432.3 L3193.0 431.6 L3191.5 431.8 L3190.0 432.4 L3188.5 432.4 L3187.0 432.1 L3185.5 432.1 L3184.0 435.3 L3182.5 433.2 L3181.0 433.6 L3179.5 435.2 L3178.0 434.7 L3176.5 435.1 L3175.0 434.0 L3173.5 432.7 L3172.0 433.4 L3170.5 431.6 L3169.0 431.2 L3167.5 432.2 L3166.0 432.4 L3164.5 432.3 L3163.0 432.3 L3161.5 432.6 L3160.0 434.0 L3158.5 432.5 L3157.0 432.2 L3155.5 432.9 L3154.0 433.7 L3152.5 435.5 L3151.0 433.0 L3149.5 435.0 L3148.0 433.6 L3146.5 432.3 L3145.0 432.1 L3143.5 433.2 L3142.0 432.2 L3140.5 432.4 L3139.0 432.0 L3137.5 431.0 L3136.0 432.5 L3134.5 431.5 L3133.0 432.0 L3131.5 434.2 L3130.0 431.9 L3128.5 432.2 L3127.0 432.4 L3125.5 434.2 L3124.0 434.7 L3122.5 432.9 L3121.0 432.4 L3119.5 432.7 L3118.0 433.1 L3116.5 433.4 L3115.0 432.4 L3113.5 431.2 L3112.0 431.7 L3110.5 432.3 L3109.0 432.2 L3107.5 431.5 L3106.0 431.5 L3104.5 431.9 L3103.0 432.4 L3101.5 432.3 L3100.0 435.3 L3098.5 433.2 L3097.0 434.9 L3095.5 433.6 L3094.0 434.1 L3092.5 435.3 L3091.0 434.5 L3089.5 432.7 L3088.0 433.2 L3086.5 432.8 L3085.0 432.2 L3083.5 431.8 L3082.0 431.7 L3080.5 432.3 L3079.0 431.2 L3077.5 431.7 L3076.0 433.3 L3074.5 431.8 L3073.0 433.0 L3071.5 433.3 L3070.0 432.9 L3068.5 432.7 L3067.0 434.2 L3065.5 435.5 L3064.0 433.6 L3062.5 434.9 L3061.0 433.1 L3059.5 432.5 L3058.0 432.5 L3056.5 432.1 L3055.0 431.5 L3053.5 432.0 L3052.0 431.9 L3050.5 432.8 L3049.0 432.4 L3047.5 432.0 L3046.0 434.0 L3044.5 434.0 L3043.0 434.8 L3041.5 435.7 L3040.0 434.6 L3038.5 434.4 L3037.0 435.0 L3035.5 434.0 L3034.0 432.5 L3032.5 433.2 L3031.0 431.6 L3029.5 433.0 L3028.0 432.7 L3026.5 431.5 L3025.0 431.4 L3023.5 431.6 L3022.0 431.4 L3020.5 433.4 L3019.0 431.9Z" fill="#8a8a8a" stroke="#262626" stroke-width="1.4"/><path d="M2800.0 941.6 L2801.5 941.4 L2803.0 941.7 L2804.5 941.4 L2806.0 941.9 L2807.5 941.5 L2809.0 941.8 L2810.5 939.3 L2812.0 939.8 L2813.5 940.3 L2815.0 938.9 L2816.5 939.6 L2818.0 939.0 L2819.5 940.1 L2821.0 941.0 L2822.5 942.0 L2824.0 942.0 L2825.5 942.0 L2827.0 942.0 L2828.5 942.7 L2830.0 941.5 L2831.5 942.5 L2833.0 942.4 L2834.5 940.8 L2836.0 941.1 L2837.5 940.9 L2839.0 939.0 L2840.5 940.7 L2842.0 938.8 L2843.5 938.8 L2845.0 940.0 L2846.5 940.2 L2848.0 941.7 L2849.5 942.3 L2851.0 942.6 L2852.5 941.6 L2854.0 941.7 L2855.5 942.2 L2857.0 941.8 L2858.5 941.2 L2860.0 942.3 L2861.5 941.4 L2863.0 939.8 L2864.5 941.4 L2866.0 940.1 L2867.5 939.8 L2869.0 940.7 L2870.5 938.4 L2872.0 940.5 L2873.5 939.2 L2875.0 940.0 L2876.5 940.4 L2878.0 941.0 L2879.5 942.1 L2881.0 941.5 L2882.5 942.1 L2884.0 942.8 L2885.5 942.4 L2887.0 941.4 L2888.5 940.8 L2890.0 941.2 L2891.5 941.6 L2893.0 940.6 L2894.5 939.5 L2896.0 940.4 L2897.5 941.1 L2899.0 940.9 L2900.5 941.1 L2902.0 940.5 L2903.5 940.0 L2905.0 940.5 L2906.5 941.3 L2908.0 942.1 L2909.5 942.7 L2911.0 941.6 L2912.5 941.8 L2914.0 942.0 L2915.5 942.3 L2917.0 942.0 L2918.5 941.6 L2920.0 941.1 L2921.5 940.5 L2923.0 940.9 L2924.5 941.3 L2926.0 940.7 L2927.5 939.8 L2929.0 940.1 L2930.5 940.1 L2932.0 939.6 L2933.5 940.1 L2935.0 940.4 L2936.5 942.7 L2938.0 942.4 L2939.5 942.8 L2941.0 942.9 L2942.5 942.3 L2944.0 942.3 L2945.5 940.7 L2947.0 942.0 L2948.5 939.6 L2950.0 941.9 L2951.5 941.3 L2953.0 940.0 L2954.5 939.5 L2956.0 938.7 L2957.5 939.7 L2959.0 941.5 L2960.5 939.7 L2962.0 941.3 L2963.5 941.2 L2965.0 941.2 L2966.5 942.3 L2968.0 941.9 L2969.5 942.5 L2971.0 941.3 L2972.5 942.5 L2974.0 940.9 L2975.5 942.3 L2977.0 940.1 L2978.5 940.2 L2980.0 940.4 L2981.5 940.5 L2983.0 938.6 L2984.5 940.2 L2986.0 940.7 L2987.5 940.5 L2989.0 939.9 L2990.5 940.0 L2992.0 941.3 L2993.5 941.7 L2995.0 941.3 L2996.5 942.3 L2998.0 941.7 L2999.5 942.3 L3001.0 942.7 L3002.5 940.4 L3004.0 940.5 L3005.5 941.3 L3007.0 940.0 L3008.5 939.7 L3010.0 939.7 L3011.5 941.4 L3013.0 941.1 L3014.5 940.7 L3016.0 939.7 L3017.5 940.7 L3019.0 941.6 L3020.5 942.1 L3022.0 941.9 L3023.5 941.7 L3025.0 941.6 L3026.5 941.8 L3028.0 941.4 L3029.5 941.4 L3031.0 941.0 L3032.5 939.9 L3034.0 941.7 L3035.5 941.6 L3037.0 939.0 L3038.5 938.2 L3040.0 939.8 L3041.5 939.7 L3043.0 939.7 L3044.5 941.4 L3046.0 940.3 L3047.5 940.5 L3049.0 942.2 L3050.5 941.7 L3052.0 941.4 L3053.5 941.8 L3055.0 942.1 L3056.5 941.5 L3058.0 942.4 L3059.5 941.7 L3061.0 940.9 L3062.5 940.8 L3064.0 941.6 L3065.5 939.4 L3067.0 938.6 L3068.5 938.7 L3070.0 941.2 L3071.5 939.9 L3073.0 940.2 L3074.5 940.9 L3076.0 941.3 L3077.5 941.5 L3079.0 941.5 L3080.5 942.6 L3082.0 941.8 L3083.5 941.5 L3085.0 942.6 L3086.5 941.9 L3088.0 941.3 L3089.5 940.2 L3091.0 941.2 L3092.5 938.9 L3094.0 941.1 L3095.5 940.7 L3097.0 939.5 L3098.5 939.0 L3100.0 941.4 L3101.5 940.2 L3103.0 941.1 L3104.5 940.4 L3106.0 941.3 L3107.5 941.6 L3109.0 942.8 L3110.5 942.3 L3112.0 942.3 L3113.5 942.2 L3115.0 942.3 L3116.5 940.2 L3118.0 939.8 L3119.5 939.8 L3121.0 939.3 L3122.5 939.5 L3124.0 938.2 L3125.5 938.3 L3127.0 940.7 L3128.5 940.2 L3130.0 940.3 L3131.5 940.8 L3133.0 941.7 L3134.5 941.6 L3136.0 942.3 L3137.5 943.0 L3139.0 942.5 L3140.5 942.1 L3142.0 941.1 L3143.5 941.2 L3145.0 941.7 L3146.5 940.5 L3148.0 938.9 L3149.5 938.8 L3151.0 941.3 L3152.5 939.1 L3154.0 938.3 L3155.5 939.4 L3157.0 938.8 L3158.5 940.1 L3160.0 940.5 L3161.5 941.4 L3163.0 941.2 L3164.5 942.3 L3166.0 941.8 L3167.5 942.9 L3169.0 942.7 L3170.5 941.2 L3172.0 942.4 L3173.5 941.5 L3175.0 940.0 L3176.5 939.6 L3178.0 938.8 L3179.5 938.4 L3181.0 940.6 L3182.5 938.9 L3184.0 939.3 L3185.5 939.4 L3187.0 940.4 L3188.5 941.2 L3190.0 940.7 L3191.5 942.0 L3193.0 941.5 L3194.5 942.7 L3196.0 941.6 L3197.5 942.7 L3199.0 941.6 L3200.5 940.8 L3202.0 941.0 L3203.5 940.3 L3205.0 939.4 L3206.5 941.0 L3208.0 941.6 L3209.5 938.1 L3211.0 941.0 L3212.5 941.0 L3214.0 940.0 L3215.5 941.6 L3217.0 942.0 L3218.5 940.8 L3220.0 941.9 L3221.5 941.8 L3223.0 942.4 L3224.5 942.9 L3226.0 942.3 L3227.5 941.5 L3229.0 940.6 L3230.5 940.3 L3232.0 941.8 L3233.5 941.6 L3235.0 941.2 L3236.5 938.6 L3238.0 939.8 L3239.5 938.8 L3241.0 941.7 L3242.5 942.0 L3244.0 940.6 L3245.5 942.5 L3247.0 942.0 L3248.5 942.8 L3250.0 941.5 L3251.5 942.0 L3253.0 941.7 L3254.5 942.0 L3256.0 941.1 L3257.5 940.9 L3259.0 939.7 L3260.5 941.1 L3262.0 941.1 L3263.5 938.5 L3265.0 938.5 L3266.5 939.6 L3268.0 938.6 L3269.5 941.5 L3271.0 941.4 L3272.5 942.0 L3274.0 941.2 L3275.5 942.2 L3277.0 942.7 L3278.5 941.6 L3280.0 941.8 L3281.5 941.8 L3283.0 941.5 L3284.5 942.1 L3286.0 941.6 L3287.5 940.1 L3289.0 939.3 L3290.5 938.6 L3292.0 941.1 L3293.5 941.5 L3295.0 939.7 L3296.5 941.0 L3298.0 940.4 L3299.5 940.4 L3301.0 940.5 L3302.5 940.7 L3304.0 941.2 L3305.5 942.0 L3307.0 942.3 L3308.5 941.6 L3310.0 942.4 L3311.5 941.3 L3313.0 941.2 L3314.5 940.3 L3316.0 940.6 L3317.5 939.2 L3319.0 941.1 L3320.5 941.5 L3322.0 938.8 L3323.5 940.8 L3325.0 941.1 L3326.5 940.8 L3328.0 940.1 L3329.5 941.5 L3331.0 940.5 L3332.5 942.2 L3334.0 942.4 L3335.5 941.7 L3337.0 941.9 L3338.5 942.0 L3340.0 941.7 L3341.5 941.3 L3343.0 940.4 L3344.5 941.0 L3346.0 941.4 L3347.5 941.3 L3349.0 941.3 L3350.5 941.3 L3352.0 939.4 L3353.5 940.3 L3355.0 939.7 L3356.5 939.6 L3358.0 940.4 L3359.5 941.8 L3361.0 941.4 L3362.5 942.7 L3364.0 942.5 L3365.5 942.8 L3367.0 942.7 L3368.5 942.7 L3370.0 941.2 L3371.5 940.0 L3373.0 940.0 L3374.5 939.7 L3376.0 940.8 L3377.5 941.6 L3379.0 939.5 L3380.5 939.0 L3382.0 940.8 L3383.5 941.2 L3385.0 940.8 L3386.5 940.3 L3388.0 941.9 L3389.5 942.7 L3391.0 941.5 L3392.5 942.5 L3394.0 941.8 L3395.5 942.4 L3397.0 941.5 L3398.5 941.4 L3400.0 940.5 L3401.5 940.4 L3403.0 939.9 L3404.5 938.3 L3406.0 938.8 L3407.5 940.3 L3409.0 940.8 L3409.0 947.7 L3407.5 948.5 L3406.0 949.4 L3404.5 947.5 L3403.0 947.2 L3401.5 946.5 L3400.0 946.2 L3398.5 947.5 L3397.0 946.9 L3395.5 946.2 L3394.0 946.1 L3392.5 946.2 L3391.0 946.2 L3389.5 945.9 L3388.0 947.4 L3386.5 947.2 L3385.0 947.9 L3383.5 948.7 L3382.0 946.6 L3380.5 947.2 L3379.0 947.7 L3377.5 948.6 L3376.0 947.1 L3374.5 946.2 L3373.0 948.2 L3371.5 948.2 L3370.0 945.6 L3368.5 946.6 L3367.0 945.7 L3365.5 946.1 L3364.0 945.4 L3362.5 945.8 L3361.0 946.5 L3359.5 946.9 L3358.0 946.5 L3356.5 947.5 L3355.0 947.3 L3353.5 949.6 L3352.0 946.4 L3350.5 947.5 L3349.0 949.0 L3347.5 948.6 L3346.0 946.1 L3344.5 948.6 L3343.0 947.1 L3341.5 946.3 L3340.0 945.5 L3338.5 945.9 L3337.0 945.7 L3335.5 945.3 L3334.0 945.9 L3332.5 945.8 L3331.0 945.8 L3329.5 947.1 L3328.0 946.6 L3326.5 947.1 L3325.0 948.1 L3323.5 948.4 L3322.0 947.7 L3320.5 949.0 L3319.0 946.8 L3317.5 948.0 L3316.0 947.1 L3314.5 945.6 L3313.0 946.1 L3311.5 946.9 L3310.0 946.3 L3308.5 946.4 L3307.0 946.0 L3305.5 945.2 L3304.0 946.1 L3302.5 947.2 L3301.0 946.2 L3299.5 947.5 L3298.0 949.1 L3296.5 947.5 L3295.0 947.2 L3293.5 947.1 L3292.0 948.9 L3290.5 949.4 L3289.0 948.3 L3287.5 946.2 L3286.0 947.6 L3284.5 945.7 L3283.0 946.8 L3281.5 945.1 L3280.0 945.3 L3278.5 945.1 L3277.0 946.5 L3275.5 946.1 L3274.0 945.6 L3272.5 946.0 L3271.0 947.2 L3269.5 947.8 L3268.0 947.1 L3266.5 948.9 L3265.0 947.8 L3263.5 946.5 L3262.0 947.0 L3260.5 948.3 L3259.0 947.4 L3257.5 946.2 L3256.0 947.0 L3254.5 945.3 L3253.0 946.3 L3251.5 946.3 L3250.0 945.9 L3248.5 946.5 L3247.0 946.5 L3245.5 946.5 L3244.0 948.0 L3242.5 947.5 L3241.0 948.4 L3239.5 946.5 L3238.0 948.2 L3236.5 948.3 L3235.0 946.6 L3233.5 947.0 L3232.0 946.5 L3230.5 946.1 L3229.0 946.1 L3227.5 945.4 L3226.0 945.9 L3224.5 945.7 L3223.0 946.1 L3221.5 945.1 L3220.0 945.6 L3218.5 945.4 L3217.0 946.0 L3215.5 946.0 L3214.0 946.9 L3212.5 947.0 L3211.0 949.3 L3209.5 949.5 L3208.0 947.8 L3206.5 947.6 L3205.0 946.5 L3203.5 947.2 L3202.0 946.1 L3200.5 946.0 L3199.0 946.7 L3197.5 946.7 L3196.0 945.9 L3194.5 945.1 L3193.0 946.1 L3191.5 945.6 L3190.0 947.2 L3188.5 947.4 L3187.0 946.0 L3185.5 947.7 L3184.0 949.1 L3182.5 949.1 L3181.0 948.2 L3179.5 949.0 L3178.0 948.9 L3176.5 948.0 L3175.0 947.2 L3173.5 947.1 L3172.0 946.9 L3170.5 945.9 L3169.0 945.8 L3167.5 945.2 L3166.0 945.2 L3164.5 945.6 L3163.0 945.3 L3161.5 946.7 L3160.0 946.5 L3158.5 948.0 L3157.0 946.6 L3155.5 949.6 L3154.0 949.8 L3152.5 947.3 L3151.0 948.6 L3149.5 947.1 L3148.0 947.4 L3146.5 946.5 L3145.0 945.9 L3143.5 947.2 L3142.0 946.6 L3140.5 945.6 L3139.0 945.1 L3137.5 945.5 L3136.0 945.4 L3134.5 946.0 L3133.0 947.1 L3131.5 948.1 L3130.0 947.7 L3128.5 949.1 L3127.0 948.1 L3125.5 946.9 L3124.0 948.7 L3122.5 949.7 L3121.0 948.8 L3119.5 946.4 L3118.0 947.9 L3116.5 945.6 L3115.0 947.2 L3113.5 946.5 L3112.0 946.1 L3110.5 946.2 L3109.0 945.7 L3107.5 945.7 L3106.0 946.2 L3104.5 946.1 L3103.0 945.9 L3101.5 948.2 L3100.0 948.0 L3098.5 948.8 L3097.0 949.9 L3095.5 946.5 L3094.0 948.3 L3092.5 947.7 L3091.0 947.1 L3089.5 946.0 L3088.0 947.8 L3086.5 945.7 L3085.0 946.0 L3083.5 946.5 L3082.0 946.1 L3080.5 946.0 L3079.0 946.6 L3077.5 947.1 L3076.0 946.7 L3074.5 947.9 L3073.0 947.2 L3071.5 949.4 L3070.0 946.8 L3068.5 949.2 L3067.0 947.1 L3065.5 948.4 L3064.0 947.2 L3062.5 948.5 L3061.0 948.1 L3059.5 946.8 L3058.0 946.9 L3056.5 946.2 L3055.0 945.9 L3053.5 946.1 L3052.0 945.0 L3050.5 945.4 L3049.0 945.5 L3047.5 946.0 L3046.0 946.0 L3044.5 948.2 L3043.0 949.1 L3041.5 949.8 L3040.0 947.4 L3038.5 948.6 L3037.0 948.8 L3035.5 946.4 L3034.0 948.3 L3032.5 948.2 L3031.0 945.7 L3029.5 947.1 L3028.0 945.4 L3026.5 945.9 L3025.0 945.0 L3023.5 945.5 L3022.0 946.2 L3020.5 946.0 L3019.0 947.9 L3017.5 946.4 L3016.0 947.9 L3014.5 948.3 L3013.0 948.6 L3011.5 948.1 L3010.0 946.8 L3008.5 948.0 L3007.0 946.3 L3005.5 946.4 L3004.0 947.4 L3002.5 947.1 L3001.0 946.0 L2999.5 945.2 L2998.0 945.6 L2996.5 945.1 L2995.0 946.1 L2993.5 946.9 L2992.0 946.3 L2990.5 946.9 L2989.0 947.5 L2987.5 946.6 L2986.0 948.5 L2984.5 947.2 L2983.0 948.5 L2981.5 947.9 L2980.0 946.5 L2978.5 946.7 L2977.0 948.0 L2975.5 946.6 L2974.0 947.2 L2972.5 945.9 L2971.0 946.7 L2969.5 946.3 L2968.0 946.4 L2966.5 946.2 L2965.0 946.0 L2963.5 946.6 L2962.0 946.4 L2960.5 946.5 L2959.0 946.4 L2957.5 947.4 L2956.0 948.5 L2954.5 949.2 L2953.0 948.9 L2951.5 948.7 L2950.0 947.9 L2948.5 946.3 L2947.0 948.0 L2945.5 946.7 L2944.0 945.3 L2942.5 946.2 L2941.0 946.1 L2939.5 946.3 L2938.0 945.7 L2936.5 946.8 L2935.0 946.9 L2933.5 946.3 L2932.0 946.7 L2930.5 947.5 L2929.0 946.7 L2927.5 946.8 L2926.0 949.5 L2924.5 947.1 L2923.0 947.1 L2921.5 947.7 L2920.0 948.0 L2918.5 946.5 L2917.0 947.3 L2915.5 945.8 L2914.0 945.5 L2912.5 946.0 L2911.0 945.8 L2909.5 946.6 L2908.0 947.0 L2906.5 946.7 L2905.0 947.1 L2903.5 947.4 L2902.0 946.4 L2900.5 947.9 L2899.0 948.8 L2897.5 949.5 L2896.0 949.1 L2894.5 946.2 L2893.0 947.3 L2891.5 947.3 L2890.0 946.8 L2888.5 945.5 L2887.0 945.6 L2885.5 945.9 L2884.0 945.9 L2882.5 946.3 L2881.0 946.1 L2879.5 946.1 L2878.0 946.1 L2876.5 948.0 L2875.0 947.2 L2873.5 949.1 L2872.0 949.4 L2870.5 948.0 L2869.0 947.9 L2867.5 949.1 L2866.0 946.7 L2864.5 946.3 L2863.0 948.2 L2861.5 945.9 L2860.0 945.4 L2858.5 945.8 L2857.0 945.6 L2855.5 946.5 L2854.0 946.5 L2852.5 946.9 L2851.0 947.0 L2849.5 946.5 L2848.0 948.4 L2846.5 948.9 L2845.0 949.2 L2843.5 947.2 L2842.0 948.9 L2840.5 946.8 L2839.0 948.2 L2837.5 947.1 L2836.0 947.0 L2834.5 947.8 L2833.0 946.1 L2831.5 945.5 L2830.0 945.4 L2828.5 945.5 L2827.0 945.3 L2825.5 945.8 L2824.0 946.5 L2822.5 945.6 L2821.0 947.2 L2819.5 946.8 L2818.0 947.2 L2816.5 948.3 L2815.0 948.4 L2813.5 946.6 L2812.0 949.0 L2810.5 947.7 L2809.0 946.4 L2807.5 947.2 L2806.0 946.8 L2804.5 945.7 L2803.0 946.0 L2801.5 945.2 L2800.0 946.5Z" fill="#ffe0c0" stroke="#1a0e04" stroke-width="1.4"/><path d="M2591.0 939.5 L2592.5 941.5 L2594.0 941.8 L2595.5 942.3 L2597.0 942.4 L2598.5 941.7 L2600.0 942.3 L2601.5 941.5 L2603.0 942.1 L2604.5 941.5 L2606.0 942.0 L2607.5 942.2 L2609.0 939.9 L2610.5 941.0 L2612.0 940.0 L2613.5 938.5 L2615.0 940.5 L2616.5 941.4 L2618.0 939.4 L2619.5 939.3 L2621.0 939.6 L2622.5 940.4 L2624.0 942.3 L2625.5 942.4 L2627.0 942.1 L2628.5 941.5 L2630.0 942.2 L2631.5 941.7 L2633.0 942.4 L2634.5 942.1 L2636.0 940.8 L2637.5 940.0 L2639.0 940.5 L2640.5 940.9 L2642.0 939.6 L2643.5 938.5 L2645.0 940.3 L2646.5 940.2 L2648.0 940.5 L2649.5 942.0 L2651.0 940.6 L2652.5 941.4 L2654.0 942.0 L2655.5 942.6 L2657.0 942.5 L2658.5 941.6 L2660.0 941.9 L2661.5 942.3 L2663.0 941.1 L2664.5 940.8 L2666.0 941.4 L2667.5 939.5 L2669.0 939.3 L2670.5 941.6 L2672.0 941.4 L2673.5 938.7 L2675.0 938.7 L2676.5 940.5 L2678.0 942.0 L2679.5 942.3 L2681.0 941.4 L2682.5 942.7 L2684.0 941.7 L2685.5 942.7 L2687.0 942.2 L2688.5 941.6 L2690.0 941.4 L2691.5 941.1 L2693.0 940.7 L2694.5 939.3 L2696.0 939.2 L2697.5 941.1 L2699.0 941.2 L2700.5 940.6 L2702.0 940.8 L2703.5 941.0 L2705.0 939.7 L2706.5 939.6 L2708.0 941.8 L2709.5 942.2 L2711.0 941.8 L2712.5 942.4 L2714.0 942.0 L2715.5 942.9 L2717.0 941.5 L2718.5 942.3 L2720.0 941.8 L2721.5 940.4 L2723.0 941.1 L2724.5 938.8 L2726.0 938.5 L2727.5 939.4 L2729.0 938.3 L2730.5 940.9 L2732.0 938.7 L2733.5 941.0 L2735.0 941.0 L2736.5 941.6 L2738.0 941.5 L2739.5 942.7 L2741.0 941.4 L2742.5 942.5 L2744.0 941.7 L2745.5 942.2 L2747.0 941.3 L2748.5 942.0 L2750.0 942.0 L2751.5 939.4 L2753.0 939.8 L2754.5 941.1 L2756.0 940.0 L2757.5 941.0 L2759.0 941.2 L2760.5 938.9 L2762.0 940.6 L2763.5 940.9 L2765.0 940.3 L2766.5 940.9 L2768.0 941.4 L2769.5 942.8 L2771.0 942.8 L2772.5 942.7 L2774.0 941.5 L2775.5 942.3 L2777.0 941.5 L2778.5 941.5 L2780.0 940.8 L2781.5 940.0 L2783.0 940.0 L2784.5 939.2 L2786.0 939.3 L2787.5 939.1 L2789.0 941.0 L2790.5 940.4 L2792.0 940.9 L2793.5 940.9 L2795.0 941.2 L2796.5 941.9 L2798.0 942.4 L2799.5 941.8 L2799.5 945.9 L2798.0 946.3 L2796.5 945.4 L2795.0 947.0 L2793.5 947.3 L2792.0 947.3 L2790.5 947.4 L2789.0 948.3 L2787.5 946.3 L2786.0 948.3 L2784.5 947.3 L2783.0 948.9 L2781.5 947.2 L2780.0 946.2 L2778.5 947.1 L2777.0 947.8 L2775.5 945.7 L2774.0 946.8 L2772.5 946.0 L2771.0 945.9 L2769.5 946.0 L2768.0 945.7 L2766.5 946.7 L2765.0 946.6 L2763.5 947.0 L2762.0 946.0 L2760.5 946.4 L2759.0 948.4 L2757.5 949.4 L2756.0 949.5 L2754.5 948.1 L2753.0 948.5 L2751.5 947.5 L2750.0 947.9 L2748.5 945.8 L2747.0 946.7 L2745.5 945.5 L2744.0 945.9 L2742.5 946.2 L2741.0 946.4 L2739.5 946.1 L2738.0 945.8 L2736.5 946.6 L2735.0 948.3 L2733.5 946.3 L2732.0 947.9 L2730.5 949.2 L2729.0 947.7 L2727.5 948.4 L2726.0 947.1 L2724.5 947.9 L2723.0 946.6 L2721.5 946.3 L2720.0 947.0 L2718.5 945.7 L2717.0 946.3 L2715.5 945.3 L2714.0 945.2 L2712.5 946.3 L2711.0 946.0 L2709.5 947.4 L2708.0 945.7 L2706.5 946.5 L2705.0 947.9 L2703.5 947.2 L2702.0 948.5 L2700.5 949.5 L2699.0 949.8 L2697.5 946.8 L2696.0 947.2 L2694.5 948.3 L2693.0 946.7 L2691.5 946.4 L2690.0 945.7 L2688.5 945.9 L2687.0 945.1 L2685.5 945.2 L2684.0 945.2 L2682.5 946.9 L2681.0 946.9 L2679.5 947.9 L2678.0 948.1 L2676.5 946.6 L2675.0 947.0 L2673.5 948.2 L2672.0 949.2 L2670.5 948.0 L2669.0 947.6 L2667.5 947.1 L2666.0 947.0 L2664.5 947.9 L2663.0 946.3 L2661.5 946.2 L2660.0 945.1 L2658.5 946.2 L2657.0 945.5 L2655.5 945.6 L2654.0 946.0 L2652.5 946.7 L2651.0 947.7 L2649.5 948.7 L2648.0 948.5 L2646.5 947.3 L2645.0 946.6 L2643.5 947.3 L2642.0 947.9 L2640.5 946.9 L2639.0 948.6 L2637.5 947.0 L2636.0 946.6 L2634.5 946.7 L2633.0 946.3 L2631.5 945.9 L2630.0 946.5 L2628.5 945.2 L2627.0 946.2 L2625.5 945.5 L2624.0 946.5 L2622.5 948.0 L2621.0 946.7 L2619.5 949.3 L2618.0 949.0 L2616.5 946.7 L2615.0 949.6 L2613.5 949.6 L2612.0 947.4 L2610.5 947.0 L2609.0 946.2 L2607.5 947.4 L2606.0 947.3 L2604.5 946.0 L2603.0 946.6 L2601.5 945.2 L2600.0 946.4 L2598.5 946.4 L2597.0 946.7 L2595.5 947.2 L2594.0 947.5 L2592.5 948.9 L2591.0 948.9Z" fill="#8a8a8a" stroke="#262626" stroke-width="1.4"/><path d="M2644.5 353 V507 M2962.5 283 V577 M2644.5 869 V1022 M2962.5 797 V842 M2962.5 1047 V1092" stroke="#e8d0b0" stroke-width="1" opacity="0.9"/><path d="M2593.5 418 V442 M2798.5 420 V440 M2851.5 418 V442 M2898.5 416 V444 M3083.5 421 V439 M3161.5 418 V442 M3303.5 410 V450 M2852.5 932 V956 M2903.5 930 V958 M3323.5 924 V964 M2593.5 932 V956 M2772.5 930 V958" stroke="#e8d0b0" stroke-width="1" opacity="0.85"/><path d="M2591 182 L2772 446" stroke="#4a2200" stroke-width="2"/><circle cx="2772" cy="446" r="3.5" fill="#4a2200"/><path d="M3000 577 L3019 686" stroke="#4a2200" stroke-width="2"/><circle cx="3000" cy="577" r="3.5" fill="#4a2200" stroke="#ffb070" stroke-width="0.8"/><path d="M2996 688 L2954 1005" stroke="#4a2200" stroke-width="2"/><circle cx="2954" cy="1005" r="3.5" fill="#4a2200"/><path d="M2809 1092 L2802 1202" stroke="#4a2200" stroke-width="2"/><circle cx="2809" cy="1092" r="3.5" fill="#4a2200" stroke="#ffb070" stroke-width="0.8"/><line x1="2989.5" y1="139" x2="2989.5" y2="1204" stroke="#ffffff" stroke-width="1.2"/><path d="M2979 139 H3000 L2989.5 150 Z" fill="#f4f4f4"/></svg>
<div class="t " style="left:2908px;top:176px;font-size:13px;color:#1a1a1a">record mic 011 (1)</div>
<div class="t " style="left:2804px;top:690px;font-size:13px;color:#1a1a1a">record mic 011 (1)</div>
<div class="t " style="left:2512px;top:940px;font-size:13px;color:#1a1a1a">Edit On</div>
<div class="a " style="left:2481px;top:1207px;width:13px;height:13px;background:#555;border:1px solid #333;border-radius:2px"></div>
<div class="a " style="left:2945px;top:1207px;width:13px;height:13px;background:#555;border:1px solid #333;border-radius:2px"></div>
<div class="a " style="left:3393px;top:1207px;width:13px;height:13px;background:#555;border:1px solid #333;border-radius:2px"></div>
<div class="a " style="left:2485px;top:1235px;width:935px;height:3px;background:linear-gradient(#909090,#c0c0c0)"></div>
<div class="a " style="left:2534px;top:1236px;width:3px;height:29px;background:#808080"></div>
<div class="a " style="left:2587px;top:1236px;width:3px;height:29px;background:#808080"></div>
<div class="a " style="left:2638px;top:1236px;width:3px;height:29px;background:#808080"></div>
<div class="a " style="left:2690px;top:1236px;width:3px;height:29px;background:#808080"></div>
<div class="a " style="left:2742px;top:1236px;width:3px;height:29px;background:#808080"></div>
<div class="a " style="left:2794px;top:1236px;width:3px;height:29px;background:#808080"></div>
<div class="a " style="left:2847px;top:1236px;width:3px;height:29px;background:#808080"></div>
<div class="a " style="left:2898px;top:1236px;width:3px;height:29px;background:#808080"></div>
<div class="a " style="left:2951px;top:1236px;width:3px;height:29px;background:#808080"></div>
<div class="a " style="left:3003px;top:1236px;width:3px;height:29px;background:#808080"></div>
<div class="a " style="left:3055px;top:1236px;width:3px;height:29px;background:#808080"></div>
<div class="a " style="left:3106px;top:1236px;width:3px;height:29px;background:#808080"></div>
<div class="a " style="left:3159px;top:1236px;width:3px;height:29px;background:#808080"></div>
<div class="a " style="left:3211px;top:1236px;width:3px;height:29px;background:#808080"></div>
<div class="a " style="left:3263px;top:1236px;width:3px;height:29px;background:#808080"></div>
<div class="a " style="left:3314px;top:1236px;width:3px;height:29px;background:#808080"></div>
<div class="a " style="left:3367px;top:1236px;width:3px;height:29px;background:#808080"></div>
<div class="a " style="left:3419px;top:1236px;width:3px;height:29px;background:#808080"></div>
<div class="t" style="left:2485px;top:1243px;width:50px;text-align:center;font-size:15px;color:#1a1a1a;letter-spacing:-0.3px">Over...</div>
<div class="t" style="left:2537px;top:1243px;width:51px;text-align:center;font-size:15px;color:#1a1a1a;letter-spacing:-0.3px">Mar...</div>
<div class="t" style="left:2590px;top:1243px;width:49px;text-align:center;font-size:15px;color:#1a1a1a;letter-spacing:-0.3px">Fade...</div>
<div class="t" style="left:2641px;top:1243px;width:50px;text-align:center;font-size:15px;color:#1a1a1a;letter-spacing:-0.3px">Med...</div>
<div class="t" style="left:2693px;top:1243px;width:50px;text-align:center;font-size:15px;color:#1a1a1a;letter-spacing:-0.3px">Proj...</div>
<div class="t" style="left:2745px;top:1243px;width:50px;text-align:center;font-size:15px;color:#1a1a1a;letter-spacing:-0.3px">Glo...</div>
<div class="t" style="left:2797px;top:1243px;width:51px;text-align:center;font-size:15px;color:#1a1a1a;letter-spacing:-0.3px">Tracks</div>
<div class="t" style="left:2850px;top:1243px;width:49px;text-align:center;font-size:15px;color:#1a1a1a;letter-spacing:-0.3px">Trac...</div>
<div class="t" style="left:2901px;top:1243px;width:51px;text-align:center;font-size:15px;color:#1a1a1a;letter-spacing:-0.3px">Playl...</div>
<div class="t" style="left:2954px;top:1243px;width:50px;text-align:center;font-size:15px;color:#1a1a1a;letter-spacing:-0.3px">Wor...</div>
<div class="t" style="left:3006px;top:1243px;width:50px;text-align:center;font-size:15px;color:#1a1a1a;letter-spacing:-0.3px">Mas...</div>
<div class="t" style="left:3058px;top:1243px;width:49px;text-align:center;font-size:15px;color:#1a1a1a;letter-spacing:-0.3px">FX R...</div>
<div class="t" style="left:3109px;top:1243px;width:51px;text-align:center;font-size:15px;color:#1a1a1a;letter-spacing:-0.3px">Met...</div>
<div class="t" style="left:3162px;top:1243px;width:50px;text-align:center;font-size:15px;color:#1a1a1a;letter-spacing:-0.3px">EDL</div>
<div class="t" style="left:3214px;top:1243px;width:50px;text-align:center;font-size:15px;color:#1a1a1a;letter-spacing:-0.3px">Notes</div>
<div class="t" style="left:3266px;top:1243px;width:49px;text-align:center;font-size:15px;color:#1a1a1a;letter-spacing:-0.3px">ADR</div>
<div class="t" style="left:3317px;top:1243px;width:51px;text-align:center;font-size:15px;color:#1a1a1a;letter-spacing:-0.3px">Video</div>
<div class="t" style="left:3370px;top:1243px;width:50px;text-align:center;font-size:15px;color:#1a1a1a;letter-spacing:-0.3px">Log</div>
<div class="a " style="left:2589px;top:1263px;width:50px;height:2px;background:#111"></div></div></body></html>
